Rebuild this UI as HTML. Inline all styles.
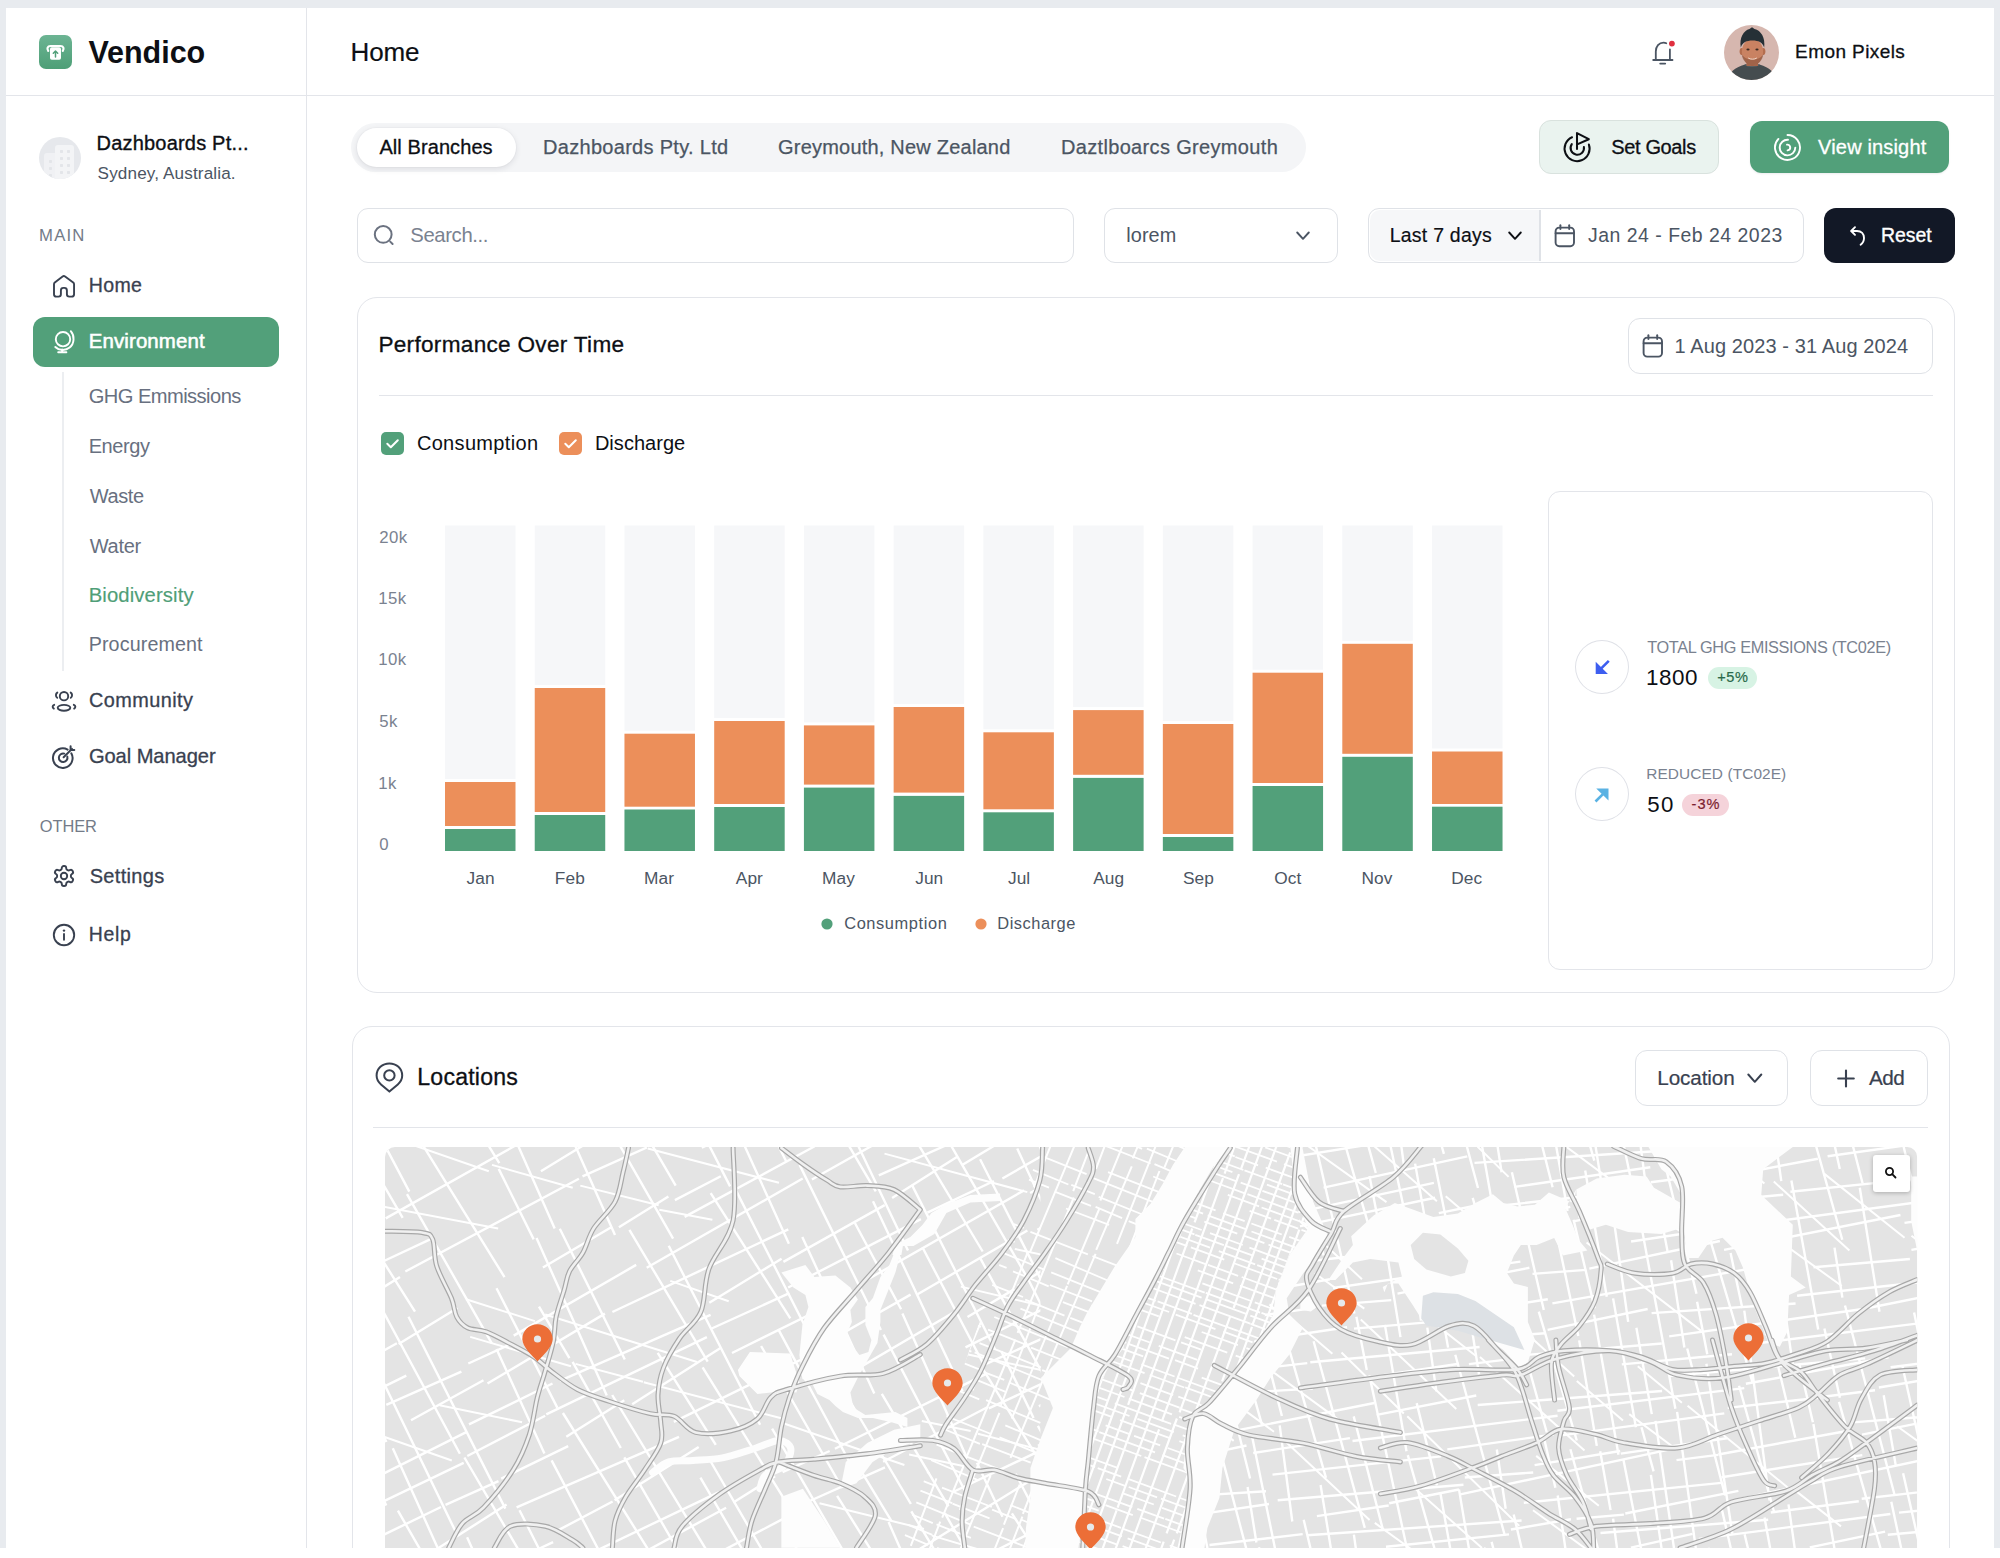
<!DOCTYPE html>
<html><head><meta charset="utf-8"><title>Vendico</title>
<style>
html,body{margin:0;padding:0;background:#ffffff;}
body{width:2000px;height:1558px;overflow:hidden;position:relative;font-family:"Liberation Sans",sans-serif;}
#app{position:absolute;left:0;top:0;width:2000px;height:1558px;overflow:hidden;}
.t{position:absolute;line-height:1;white-space:nowrap;}
svg{overflow:visible;}
</style></head><body><div id="app">
<div style="position:absolute;left:0.00px;top:0.00px;width:2000.00px;height:1548.00px;background:#e8ebef"></div>
<div style="position:absolute;left:6.00px;top:8.00px;width:1988.00px;height:1540.00px;background:#ffffff"></div>
<div style="position:absolute;left:305.50px;top:8.00px;width:1.50px;height:1540.00px;background:#e3e5ea"></div>
<div style="position:absolute;left:6.00px;top:94.50px;width:1988.00px;height:1.50px;background:#e3e5ea"></div>
<svg style="position:absolute;left:39.00px;top:35.00px;" width="33" height="34" viewBox="0 0 33 34"><defs><linearGradient id="lg" x1="0" y1="0" x2="0" y2="1"><stop offset="0" stop-color="#6cb493"/><stop offset="1" stop-color="#4e9f77"/></linearGradient></defs>
<rect x="0" y="0" width="33" height="34" rx="7" fill="url(#lg)"/>
<path d="M9.2 15.8 C7.6 13.6 8.6 11 11.4 11 H21.6 C24.4 11 25.4 13.6 23.8 15.8" fill="none" stroke="#fff" stroke-width="2.2" stroke-linecap="round"/>
<rect x="11" y="12.3" width="11" height="12.5" rx="1.8" fill="#fff"/>
<path d="M16.5 22 V16.2 M14.3 18.2 L16.5 16 L18.7 18.2" fill="none" stroke="#52a07a" stroke-width="1.5" stroke-linecap="round" stroke-linejoin="round"/></svg>
<svg style="position:absolute;left:38.80px;top:136.60px;" width="42" height="42" viewBox="0 0 42 42"><circle cx="21" cy="21" r="21" fill="#e6e8ec"/>
<clipPath id="cc"><circle cx="21" cy="21" r="21"/></clipPath>
<g clip-path="url(#cc)">
<rect x="5" y="16" width="14" height="30" rx="3" fill="#f0f1f4"/>
<rect x="16" y="8" width="19" height="38" rx="3" fill="#f3f4f6"/>
<g fill="#e3e5e9"><rect x="21" y="13" width="3" height="3" rx=".8"/><rect x="28" y="13" width="3" height="3" rx=".8"/><rect x="21" y="20" width="3" height="3" rx=".8"/><rect x="28" y="20" width="3" height="3" rx=".8"/><rect x="21" y="27" width="3" height="3" rx=".8"/><rect x="28" y="27" width="3" height="3" rx=".8"/><rect x="21" y="34" width="3" height="3" rx=".8"/><rect x="28" y="34" width="3" height="3" rx=".8"/><rect x="10" y="23" width="3" height="3" rx=".8"/><rect x="10" y="30" width="3" height="3" rx=".8"/><rect x="10" y="37" width="3" height="3" rx=".8"/></g></g></svg>
<svg style="position:absolute;left:52.00px;top:274.00px;" width="24" height="24" viewBox="0 0 24 24"><path d="M2 10.2 C2 9.4 2.3 8.9 2.8 8.5 L10.6 2.5 C11.3 2 12.4 2 13.1 2.5 L21.2 8.5 C21.8 9 22.06 9.4 22.06 10.2 V20.2 C22.06 21.6 21.2 22.6 19.6 22.6 H17.3 C15.9 22.6 14.9 21.7 14.9 20.3 V16.4 C14.9 14.9 13.9 13.9 12.4 13.9 H11.4 C9.9 13.9 8.9 14.9 8.9 16.4 V20.3 C8.9 21.7 7.9 22.6 6.5 22.6 H4.4 C2.9 22.6 2 21.6 2 20.2 Z" fill="none" stroke="#394150" stroke-width="1.9" stroke-linejoin="round"/></svg>
<div style="position:absolute;left:33.30px;top:316.80px;width:245.70px;height:49.80px;background:#52a07a;border-radius:12px"></div>
<svg style="position:absolute;left:53.00px;top:329.00px;" width="22" height="25" viewBox="0 0 22 25"><circle cx="10" cy="10.2" r="7.2" fill="none" stroke="#fff" stroke-width="1.9"/>
<path d="M17.8 2.2 C21.8 6.8 21.5 14.6 16.6 18.6 C12.4 22 6 21.7 2.3 18" fill="none" stroke="#fff" stroke-width="1.9" stroke-linecap="round"/>
<path d="M9.2 20.5 V23.2 M5.2 23.3 H13.4" fill="none" stroke="#fff" stroke-width="1.9" stroke-linecap="round"/></svg>
<div style="position:absolute;left:61.50px;top:372.00px;width:2.00px;height:298.50px;background:#eceef1"></div>
<svg style="position:absolute;left:51.00px;top:690.00px;" width="26" height="22" viewBox="0 0 26 22"><g fill="none" stroke="#394150" stroke-width="1.9" stroke-linecap="round">
<circle cx="13" cy="6.2" r="4.2"/>
<ellipse cx="13" cy="17.8" rx="6.3" ry="2.9"/>
<path d="M6.3 2.6 C4.6 3.6 4.4 6.6 6.2 7.7"/><path d="M19.7 2.6 C21.4 3.6 21.6 6.6 19.8 7.7"/>
<path d="M3.2 14.8 C1.3 15.6 1.1 17.4 2.8 18.6"/><path d="M22.8 14.8 C24.7 15.6 24.9 17.4 23.2 18.6"/></g></svg>
<svg style="position:absolute;left:52.00px;top:745.00px;" width="24" height="24" viewBox="0 0 24 24"><g fill="none" stroke="#394150" stroke-width="2" stroke-linecap="round">
<path d="M19.3 8.3 A9.8 9.8 0 1 1 15.6 4.6"/>
<path d="M15.3 11.6 A4.3 4.3 0 1 1 12.3 8.6"/>
<path d="M11.6 12.3 L20 3.9"/><path d="M18.6 1.2 V4.9 H22.3"/></g></svg>
<svg style="position:absolute;left:52.00px;top:864.00px;" width="24" height="24" viewBox="0 0 24 24"><g fill="none" stroke="#394150" stroke-width="1.9" stroke-linecap="round" stroke-linejoin="round">
<path d="M12.22 2h-.44a2 2 0 0 0-2 2v.18a2 2 0 0 1-1 1.73l-.43.25a2 2 0 0 1-2 0l-.15-.08a2 2 0 0 0-2.73.73l-.22.38a2 2 0 0 0 .73 2.73l.15.1a2 2 0 0 1 1 1.72v.51a2 2 0 0 1-1 1.74l-.15.09a2 2 0 0 0-.73 2.73l.22.38a2 2 0 0 0 2.73.73l.15-.08a2 2 0 0 1 2 0l.43.25a2 2 0 0 1 1 1.73V20a2 2 0 0 0 2 2h.44a2 2 0 0 0 2-2v-.18a2 2 0 0 1 1-1.73l.43-.25a2 2 0 0 1 2 0l.15.08a2 2 0 0 0 2.73-.73l.22-.39a2 2 0 0 0-.73-2.73l-.15-.08a2 2 0 0 1-1-1.74v-.5a2 2 0 0 1 1-1.74l.15-.09a2 2 0 0 0 .73-2.73l-.22-.38a2 2 0 0 0-2.73-.73l-.15.08a2 2 0 0 1-2 0l-.43-.25a2 2 0 0 1-1-1.73V4a2 2 0 0 0-2-2z"/>
<circle cx="12" cy="12" r="3.2"/></g></svg>
<svg style="position:absolute;left:52.00px;top:923.00px;" width="24" height="24" viewBox="0 0 24 24"><g fill="none" stroke="#394150" stroke-width="1.9" stroke-linecap="round">
<circle cx="12" cy="12" r="10.2"/><path d="M12 11 V16.8"/></g><circle cx="12" cy="7.6" r="1.2" fill="#394150"/></svg>
<svg style="position:absolute;left:1651.00px;top:40.00px;" width="26" height="26" viewBox="0 0 26 26"><g fill="none" stroke="#4b5563" stroke-width="1.8" stroke-linecap="round">
<path d="M2.2 20 H21.5"/><path d="M4.8 20 V11.5 C4.8 6.5 8 2.6 12.5 2.6 C13.6 2.6 14.5 2.8 15.3 3.2"/><path d="M18.9 9.5 V20"/><path d="M9.2 23.6 H14.2"/></g>
<circle cx="20.9" cy="3.6" r="2.9" fill="#e0303f"/></svg>
<svg style="position:absolute;left:1723.50px;top:24.50px;" width="55" height="55" viewBox="0 0 55 55"><clipPath id="av"><circle cx="27.5" cy="27.5" r="27.5"/></clipPath>
<g clip-path="url(#av)">
<rect width="55" height="55" fill="#d6b7af"/>
<path d="M4 55 C5.5 47 10 43 21 39.5 L35.5 39.5 C46 43 50.5 47 52 55 Z" fill="#454c4f"/>
<path d="M21 39.5 C24 42 32 42 35.5 39.5" fill="none" stroke="#5a6366" stroke-width="1.2"/>
<rect x="22.5" y="31" width="11.5" height="10" fill="#a7654a"/>
<ellipse cx="17.8" cy="26.5" rx="2.2" ry="3.4" fill="#b36d4e"/><ellipse cx="39.2" cy="26.5" rx="2.2" ry="3.4" fill="#b36d4e"/>
<ellipse cx="28.5" cy="26.8" rx="10.6" ry="13.2" fill="#c98262"/>
<path d="M17.6 29 C18.6 36 23 40.2 28.5 40.2 C34 40.2 38.4 36 39.4 29 C37 33 33.5 34.5 28.5 34.5 C23.5 34.5 20 33 17.6 29 Z" fill="#7d4a35" opacity=".55"/>
<path d="M16.8 22.5 C15.2 13 19.5 5.5 25.5 4 L28 2.2 L30.5 4 C37 5.5 41.5 12.5 40.2 22.5 C38.5 17.5 34.5 15.6 28.5 15.6 C22.5 15.6 18.5 17.5 16.8 22.5 Z" fill="#263036"/>
<ellipse cx="24" cy="24.5" rx="1.6" ry="1" fill="#3b2a22"/><ellipse cx="33" cy="24.5" rx="1.6" ry="1" fill="#3b2a22"/>
<path d="M24.5 33.2 C26.5 34.6 30.5 34.6 32.5 33.2" fill="none" stroke="#f0d6c8" stroke-width="1" stroke-linecap="round"/>
</g></svg>
<div style="position:absolute;left:351.00px;top:122.50px;width:955.00px;height:49.70px;background:#f4f5f7;border-radius:25px"></div>
<div style="position:absolute;left:356.60px;top:128.00px;width:159.40px;height:39.00px;background:#ffffff;border-radius:20px;box-shadow:0 2px 6px rgba(16,24,40,.10),0 0 0 1px rgba(16,24,40,.02)"></div>
<div style="position:absolute;left:1539.00px;top:120.10px;width:179.80px;height:53.90px;background:#eaf3ef;border:1.5px solid #d9e2de;border-radius:12px;box-sizing:border-box"></div>
<svg style="position:absolute;left:1562.00px;top:131.00px;" width="30" height="32" viewBox="0 0 30 32"><g fill="none" stroke="#0d0f14" stroke-width="2.05" stroke-linecap="round" stroke-linejoin="round">
<path d="M10.05 6.2 A12.5 12.5 0 1 0 26.9 13.5"/>
<path d="M9.8 13.2 A6.7 6.7 0 1 0 21.9 16.0"/>
<path d="M15 18 V2.1 L26.8 8.2 L15.2 13.4"/></g></svg>
<div style="position:absolute;left:1749.70px;top:121.20px;width:198.90px;height:52.20px;background:#52a07a;border-radius:12px;box-shadow:0 1px 2px rgba(16,24,40,.08)"></div>
<svg style="position:absolute;left:1773.00px;top:133.00px;" width="30" height="30" viewBox="0 0 30 30"><g fill="none" stroke="#fff" stroke-width="1.9" stroke-linecap="round">
<path d="M14.5 2.0 A12.5 12.5 0 1 1 5.4 5.9"/>
<path d="M15 6.8 A7.8 7.8 0 1 0 22.3 14.6"/>
<path d="M14 11.6 A2.9 2.9 0 1 1 14.6 17.4"/></g></svg>
<div style="position:absolute;left:357.20px;top:208.20px;width:717.10px;height:54.80px;background:#fff;border:1.5px solid #dfe2e7;border-radius:11px;box-sizing:border-box"></div>
<svg style="position:absolute;left:373.00px;top:224.00px;" width="24" height="24" viewBox="0 0 24 24"><g fill="none" stroke="#6b7280" stroke-width="2" stroke-linecap="round"><circle cx="10.2" cy="10.4" r="8.4"/><path d="M17.2 17.6 L19.6 20"/></g></svg>
<div style="position:absolute;left:1104.20px;top:208.20px;width:234.30px;height:54.80px;background:#fff;border:1.5px solid #dfe2e7;border-radius:11px;box-sizing:border-box"></div>
<svg style="position:absolute;left:1296.00px;top:231.00px;" width="14" height="10" viewBox="0 0 14 10"><path d="M1.2 1.5 L7 7.8 L12.8 1.5" fill="none" stroke="#4b5563" stroke-width="1.9" stroke-linecap="round" stroke-linejoin="round"/></svg>
<div style="position:absolute;left:1368.20px;top:208.20px;width:436.10px;height:54.80px;background:#fff;border:1.5px solid #dfe2e7;border-radius:11px;box-sizing:border-box;overflow:hidden"></div>
<div style="position:absolute;left:1369.70px;top:209.70px;width:169.80px;height:51.80px;background:#f6f7f9;border-radius:10px 0 0 10px"></div>
<div style="position:absolute;left:1539.00px;top:209.70px;width:1.50px;height:51.80px;background:#dfe2e7"></div>
<svg style="position:absolute;left:1508.00px;top:231.00px;" width="14" height="10" viewBox="0 0 14 10"><path d="M1.2 1.5 L7 7.8 L12.8 1.5" fill="none" stroke="#0d0f14" stroke-width="1.9" stroke-linecap="round" stroke-linejoin="round"/></svg>
<svg style="position:absolute;left:1554.00px;top:224.00px;" width="23" height="24" viewBox="0 0 23 24"><g fill="none" stroke="#4b5563" stroke-width="1.9" stroke-linecap="round"><rect x="1.6" y="3.6" width="18.4" height="18.6" rx="3.6"/><path d="M1.6 9.2 H20"/><path d="M6.4 1.2 V5"/><path d="M15.2 1.2 V5"/></g></svg>
<div style="position:absolute;left:1823.50px;top:208.20px;width:131.70px;height:55.10px;background:#121826;border-radius:12px"></div>
<svg style="position:absolute;left:1849.00px;top:225.00px;" width="18" height="22" viewBox="0 0 18 22"><g fill="none" stroke="#fff" stroke-width="1.9" stroke-linecap="round" stroke-linejoin="round"><path d="M6 2.2 L2.2 6 L6 9.8"/><path d="M2.6 6 H8 C12.4 6 15 9 15 13 C15 16.4 13.6 18.4 11.6 19.8"/></g></svg>
<div style="position:absolute;left:357.00px;top:297.00px;width:1598.20px;height:695.50px;background:#fff;border:1.5px solid #e3e5ea;border-radius:20px;box-sizing:border-box"></div>
<div style="position:absolute;left:1627.50px;top:318.00px;width:305.90px;height:56.40px;border:1.5px solid #dfe2e7;border-radius:12px;box-sizing:border-box"></div>
<svg style="position:absolute;left:1642.00px;top:334.00px;" width="23" height="25" viewBox="0 0 23 25"><g fill="none" stroke="#4b5563" stroke-width="1.9" stroke-linecap="round"><rect x="1.6" y="3.6" width="18.4" height="19" rx="3.6"/><path d="M1.6 9.2 H20"/><path d="M6.4 1.2 V5"/><path d="M15.2 1.2 V5"/></g></svg>
<div style="position:absolute;left:379.00px;top:394.70px;width:1554.00px;height:1.50px;background:#e3e5ea"></div>
<svg style="position:absolute;left:381.20px;top:432.10px;" width="23" height="23" viewBox="0 0 23 23"><rect width="23" height="23" rx="5" fill="#52a07a"/><path d="M6.3 11.8 L9.8 15.2 L16.8 8.2" fill="none" stroke="#fff" stroke-width="2" stroke-linecap="round" stroke-linejoin="round"/></svg>
<svg style="position:absolute;left:559.10px;top:432.10px;" width="23" height="23" viewBox="0 0 23 23"><rect width="23" height="23" rx="5" fill="#ec8f5a"/><path d="M6.3 11.8 L9.8 15.2 L16.8 8.2" fill="none" stroke="#fff" stroke-width="2" stroke-linecap="round" stroke-linejoin="round"/></svg>
<svg style="position:absolute;left:0.00px;top:0.00px;" width="2000" height="1000" viewBox="0 0 2000 1000"><rect x="445.00" y="525.5" width="70.5" height="253.50" fill="#f6f7f9"/><rect x="445.00" y="782.00" width="70.5" height="44.00" fill="#ec8f5a"/><rect x="445.00" y="829.00" width="70.5" height="22.00" fill="#52a07a"/><rect x="534.73" y="525.5" width="70.5" height="159.50" fill="#f6f7f9"/><rect x="534.73" y="688.00" width="70.5" height="124.00" fill="#ec8f5a"/><rect x="534.73" y="815.00" width="70.5" height="36.00" fill="#52a07a"/><rect x="624.46" y="525.5" width="70.5" height="205.20" fill="#f6f7f9"/><rect x="624.46" y="733.70" width="70.5" height="73.00" fill="#ec8f5a"/><rect x="624.46" y="809.50" width="70.5" height="41.50" fill="#52a07a"/><rect x="714.19" y="525.5" width="70.5" height="192.50" fill="#f6f7f9"/><rect x="714.19" y="721.00" width="70.5" height="83.00" fill="#ec8f5a"/><rect x="714.19" y="807.00" width="70.5" height="44.00" fill="#52a07a"/><rect x="803.92" y="525.5" width="70.5" height="196.90" fill="#f6f7f9"/><rect x="803.92" y="725.40" width="70.5" height="59.20" fill="#ec8f5a"/><rect x="803.92" y="787.60" width="70.5" height="63.40" fill="#52a07a"/><rect x="893.65" y="525.5" width="70.5" height="178.50" fill="#f6f7f9"/><rect x="893.65" y="707.00" width="70.5" height="85.60" fill="#ec8f5a"/><rect x="893.65" y="795.90" width="70.5" height="55.10" fill="#52a07a"/><rect x="983.38" y="525.5" width="70.5" height="203.80" fill="#f6f7f9"/><rect x="983.38" y="732.30" width="70.5" height="77.00" fill="#ec8f5a"/><rect x="983.38" y="812.30" width="70.5" height="38.70" fill="#52a07a"/><rect x="1073.11" y="525.5" width="70.5" height="181.60" fill="#f6f7f9"/><rect x="1073.11" y="710.10" width="70.5" height="64.70" fill="#ec8f5a"/><rect x="1073.11" y="777.90" width="70.5" height="73.10" fill="#52a07a"/><rect x="1162.84" y="525.5" width="70.5" height="195.50" fill="#f6f7f9"/><rect x="1162.84" y="724.00" width="70.5" height="110.00" fill="#ec8f5a"/><rect x="1162.84" y="837.00" width="70.5" height="14.00" fill="#52a07a"/><rect x="1252.57" y="525.5" width="70.5" height="144.20" fill="#f6f7f9"/><rect x="1252.57" y="672.70" width="70.5" height="110.30" fill="#ec8f5a"/><rect x="1252.57" y="786.00" width="70.5" height="65.00" fill="#52a07a"/><rect x="1342.30" y="525.5" width="70.5" height="115.30" fill="#f6f7f9"/><rect x="1342.30" y="643.80" width="70.5" height="110.00" fill="#ec8f5a"/><rect x="1342.30" y="756.80" width="70.5" height="94.20" fill="#52a07a"/><rect x="1432.03" y="525.5" width="70.5" height="223.00" fill="#f6f7f9"/><rect x="1432.03" y="751.50" width="70.5" height="52.50" fill="#ec8f5a"/><rect x="1432.03" y="806.70" width="70.5" height="44.30" fill="#52a07a"/></svg>
<svg style="position:absolute;left:821.00px;top:918.00px;" width="12" height="12" viewBox="0 0 12 12"><circle cx="6" cy="6" r="5.6" fill="#52a07a"/></svg>
<svg style="position:absolute;left:975.00px;top:918.00px;" width="12" height="12" viewBox="0 0 12 12"><circle cx="6" cy="6" r="5.6" fill="#ec8f5a"/></svg>
<div style="position:absolute;left:1547.50px;top:490.90px;width:385.40px;height:479.50px;border:1.5px solid #e3e5ea;border-radius:12px;box-sizing:border-box"></div>
<div style="position:absolute;left:1574.90px;top:639.80px;width:54.40px;height:54.60px;border:1.5px solid #dfe1e7;border-radius:50%;box-sizing:border-box"></div>
<svg style="position:absolute;left:1595.20px;top:659.00px;" width="16" height="16" viewBox="0 0 16 16"><path d="M13.8 1.8 L5 10.6 M2 6 V13.8 H9.8 Z" fill="#3d5ef0" stroke="#3d5ef0" stroke-width="2.6" stroke-linejoin="miter"/></svg>
<div style="position:absolute;left:1707.90px;top:666.90px;width:49.00px;height:22.60px;background:#d7f3e4;border-radius:12px"></div>
<div style="position:absolute;left:1574.90px;top:766.60px;width:54.40px;height:54.80px;border:1.5px solid #dfe1e7;border-radius:50%;box-sizing:border-box"></div>
<svg style="position:absolute;left:1592.70px;top:787.50px;" width="16" height="16" viewBox="0 0 16 16"><path d="M2.5 13.5 L11.2 4.8 M14.2 9.5 V1.8 H6.4 Z" fill="#5ab2e3" stroke="#5ab2e3" stroke-width="2.6" stroke-linejoin="miter"/></svg>
<div style="position:absolute;left:1682.20px;top:794.10px;width:47.00px;height:22.40px;background:#f5d3da;border-radius:12px"></div>
<div style="position:absolute;left:351.90px;top:1026.30px;width:1597.90px;height:573.70px;background:#fff;border:1.5px solid #e3e5ea;border-radius:20px;box-sizing:border-box"></div>
<svg style="position:absolute;left:375.00px;top:1062.00px;" width="30" height="32" viewBox="0 0 30 32"><g fill="none" stroke="#394150" stroke-width="2"><path d="M14.4 29.6 L6 22.4 C3 19.8 1.6 16.6 1.6 13.6 C1.6 6.5 7.4 1.4 14.4 1.4 C21.4 1.4 27.2 6.5 27.2 13.6 C27.2 16.6 25.8 19.8 22.8 22.4 Z" stroke-linejoin="round"/><circle cx="14.4" cy="13.4" r="5.2"/></g></svg>
<div style="position:absolute;left:1634.50px;top:1050.00px;width:153.80px;height:56.20px;border:1.5px solid #dfe2e7;border-radius:12px;box-sizing:border-box"></div>
<svg style="position:absolute;left:1747.00px;top:1073.00px;" width="16" height="11" viewBox="0 0 16 11"><path d="M1.3 1.5 L7.8 8.8 L14.3 1.5" fill="none" stroke="#394150" stroke-width="2" stroke-linecap="round" stroke-linejoin="round"/></svg>
<div style="position:absolute;left:1810.00px;top:1050.00px;width:117.70px;height:56.20px;border:1.5px solid #dfe2e7;border-radius:12px;box-sizing:border-box"></div>
<svg style="position:absolute;left:1837.00px;top:1069.00px;" width="18" height="19" viewBox="0 0 18 19"><path d="M9 1.5 V17.5 M1.2 9.5 H16.8" fill="none" stroke="#394150" stroke-width="2.1" stroke-linecap="round"/></svg>
<div style="position:absolute;left:373.00px;top:1126.50px;width:1554.70px;height:1.50px;background:#e3e5ea"></div>
<svg style="position:absolute;left:384.6px;top:1147.0px" width="1532.2" height="401.0" viewBox="0 0 1532.2 401.0"><defs><clipPath id="mapclip"><path d="M10 0 H1522.2 A10 10 0 0 1 1532.2 10 V401.0 H0 V10 A10 10 0 0 1 10 0 Z"/></clipPath></defs><g clip-path="url(#mapclip)"><rect x="0" y="0" width="1532.2" height="401.0" fill="#e4e4e4"/><defs><clipPath id="manh"><polygon points="844.9,0.0 828.4,19.5 813.4,45.0 799.9,72.0 795.4,90.0 783.4,105.0 775.9,127.5 765.4,142.5 753.4,165.0 744.4,180.0 738.4,201.0 723.4,220.5 712.9,240.0 706.9,261.0 703.9,291.0 700.9,321.0 699.4,351.0 696.4,381.0 693.4,401.0 792.4,401.0 796.9,381.0 804.4,351.0 807.4,336.0 798.4,321.0 801.4,291.0 810.4,270.0 828.4,253.5 843.4,231.0 872.2,196.9 888.3,167.4 890.9,143.2 904.4,108.3 923.1,81.5 911.4,53.0 905.4,0.0"/></clipPath><clipPath id="njw"><rect x="0" y="0" width="655.4" height="401.0"/></clipPath><clipPath id="mid"><polygon points="655.4,0.0 805.4,0.0 645.4,401.0 515.4,401.0"/></clipPath><clipPath id="east"><polygon points="905.4,0.0 1532.2,0.0 1532.2,401.0 792.4,401.0 865.4,203.0 915.4,83.0"/></clipPath></defs><g stroke="#ffffff" stroke-width="2.4" fill="none" opacity="1" clip-path="url(#njw)"><path d="M1189.5 -632.5L1224.6 -565.5M1227.0 -562.6L1255.7 -510.0M1249.8 -506.2L1284.0 -450.2M1283.4 -447.4L1359.2 -310.2M1363.5 -301.5L1393.6 -251.9M1392.0 -249.7L1439.0 -158.6M1444.0 -154.1L1504.2 -57.8M1496.4 -51.3L1572.1 96.1M1573.5 100.5L1624.6 187.7M1623.4 194.8L1693.0 315.6M1169.9 -622.0L1226.9 -515.2M1223.9 -513.2L1292.1 -364.1M1302.2 -366.0L1382.2 -218.0M1384.5 -209.7L1496.4 -30.7M1485.5 -17.0L1565.5 121.7M1139.5 -605.9L1169.5 -540.3M1170.2 -539.8L1223.8 -425.2M1237.3 -422.5L1277.7 -333.8M1322.5 -258.4L1367.6 -180.9M1364.7 -179.3L1413.9 -68.1M1424.1 -65.8L1497.4 51.2M1492.1 64.2L1580.6 223.9M1584.9 226.1L1620.7 283.6M1617.7 287.6L1659.6 353.2M1252.9 -351.9L1298.7 -252.7M1309.0 -247.0L1376.9 -136.7M1370.7 -129.6L1421.7 -49.1M1482.2 94.0L1505.0 143.7M1516.8 145.3L1557.5 230.6M1563.2 233.6L1640.9 398.9M1088.3 -578.6L1183.3 -417.3M1230.8 -311.3L1270.3 -221.9M1276.8 -220.3L1379.1 -37.7M1381.4 -36.4L1421.5 42.6M1424.1 51.4L1506.5 226.1M1514.1 223.0L1584.6 369.3M1067.9 -567.8L1142.1 -398.7M1156.7 -402.0L1217.8 -300.5M1212.3 -296.2L1251.6 -231.4M1254.9 -223.8L1355.1 -31.7M1355.1 -30.2L1379.5 16.2M1382.9 25.0L1446.0 131.6M1443.8 135.6L1494.1 221.9M1494.3 226.5L1528.7 290.1M1527.0 297.6L1622.6 477.5M1047.2 -556.8L1075.9 -511.8M1072.1 -500.7L1108.7 -430.4M1110.4 -427.6L1182.9 -309.8M1178.0 -300.8L1221.2 -219.3M1226.2 -215.6L1307.5 -55.9M1312.7 -52.9L1376.4 68.5M1376.3 74.0L1461.8 266.4M1476.4 261.6L1551.9 385.7M1023.7 -544.3L1108.7 -404.0M1183.9 -242.1L1287.7 -54.4M1292.5 -51.4L1397.1 140.2M1396.3 146.5L1443.5 243.3M1449.0 240.5L1520.2 366.0M1101.4 -338.9L1131.0 -290.4M1130.1 -285.2L1236.5 -109.6M1231.9 -96.7L1310.1 28.2M1366.0 155.4L1432.1 299.0M1438.6 296.3L1529.5 470.8M978.1 -520.1L1015.9 -458.6M1012.1 -454.8L1041.3 -404.0M1044.2 -396.9L1092.9 -310.4M1135.7 -219.8L1194.3 -88.2M1203.5 -91.9L1283.4 79.9M1290.7 80.5L1357.6 199.1M1362.6 205.9L1446.1 354.1M948.0 -504.1L1048.2 -333.1M1099.7 -207.0L1143.6 -123.0M1149.7 -123.5L1265.3 57.5M1253.1 68.4L1314.4 183.8M1386.9 325.4L1425.7 406.2M1433.0 409.8L1517.8 559.2M930.2 -494.6L1003.3 -337.4M1010.2 -331.0L1091.7 -196.9M1086.3 -188.1L1143.7 -64.9M1153.5 -63.5L1256.0 110.6M1252.6 112.7L1283.2 178.7M1285.2 184.0L1359.0 322.2M1360.1 321.7L1446.3 486.1M911.7 -484.8L999.8 -333.1M991.0 -320.2L1030.9 -245.3M1034.1 -242.6L1093.7 -125.4M1131.1 -63.7L1226.1 85.6M1213.3 93.1L1255.9 178.8M1261.2 179.3L1333.3 297.0M1326.8 310.6L1371.9 381.6M1371.7 386.9L1466.8 550.8M879.9 -467.8L919.9 -391.9M922.1 -382.3L952.1 -316.1M959.6 -312.1L1007.5 -236.4M1002.8 -233.9L1072.3 -119.5M1069.3 -114.0L1114.3 -20.5M1116.9 -12.3L1146.0 51.9M1149.3 53.5L1201.0 154.2M1210.9 153.1L1275.4 257.8M1271.0 269.6L1320.5 354.9M1314.7 363.8L1348.8 438.8M1357.2 443.5L1430.0 583.0M857.5 -456.0L935.9 -300.0M945.2 -301.7L972.8 -250.3M968.2 -244.0L1018.9 -156.9M1022.6 -151.5L1074.9 -64.8M1070.2 -60.4L1113.6 13.1M1117.0 21.6L1229.5 210.2M1267.0 316.5L1307.8 401.2M1316.7 401.2L1375.9 506.0M943.0 -252.7L1021.8 -116.8M1012.6 -109.1L1062.2 -1.9M1103.3 55.1L1212.5 226.0M1198.2 238.1L1281.8 428.7M1332.3 488.2L1406.8 636.6M883.9 -298.3L928.4 -220.6M926.2 -217.9L974.8 -138.7M972.3 -136.5L1043.0 -16.6M1039.9 -8.1L1060.9 39.4M1068.9 42.5L1170.0 215.5M1168.9 227.0L1248.6 376.8M1247.2 385.2L1296.9 496.3M1307.0 493.5L1331.8 543.5M786.8 -418.3L857.6 -257.0M870.6 -260.4L952.5 -89.5M961.1 -90.7L1068.8 91.9M1062.8 99.8L1141.8 242.6M1236.5 439.4L1261.5 494.3M1272.3 496.9L1385.1 685.6M757.1 -402.6L784.2 -354.2M824.8 -279.7L869.1 -178.9M872.4 -178.3L925.4 -81.2M923.9 -79.8L990.8 32.4M1090.0 217.7L1190.7 377.2M1173.6 386.9L1258.9 575.4M736.6 -391.7L830.0 -200.3M882.2 -106.2L992.7 68.1M979.9 77.6L1043.4 191.9M1042.6 195.2L1105.9 300.9M1105.3 310.4L1185.0 466.8M1189.2 468.3L1244.3 557.1M746.5 -292.3L806.2 -161.0M867.5 -73.7L935.8 42.6M930.6 50.1L995.9 191.4M1009.9 191.5L1042.4 254.2M1045.1 257.0L1133.8 408.5M1127.7 413.5L1224.6 588.8M680.6 -361.9L716.3 -279.7M721.7 -281.4L775.4 -161.9M830.4 -75.4L935.4 112.8M936.6 121.9L988.0 237.7M1000.4 232.3L1074.3 364.4M1069.4 368.6L1107.4 444.3M1109.6 445.5L1136.3 490.1M1136.4 493.6L1181.3 565.5M1175.9 569.5L1237.7 669.4M655.4 -348.5L703.9 -238.7M712.3 -239.6L773.4 -106.5M783.4 -100.5L840.6 -4.2M835.3 -1.3L933.4 176.7M994.6 299.7L1070.4 422.2M1070.4 429.3L1126.9 527.3M627.4 -333.6L714.6 -137.2M795.5 -9.1L844.6 96.1M852.2 93.9L929.4 260.8M942.3 263.3L980.2 335.0M979.9 339.5L1009.2 404.3M1018.2 399.9L1079.6 532.2M1083.0 531.7L1158.5 663.7M599.2 -318.6L657.7 -211.1M658.3 -211.1L725.3 -71.0M829.2 115.0L864.2 170.6M861.1 179.5L891.0 236.0M890.1 237.1L960.8 353.2M958.8 364.0L1071.3 552.6M1065.7 566.7L1134.7 681.3M565.9 -300.9L597.6 -248.5M603.1 -241.3L648.5 -155.9M650.3 -146.4L692.6 -72.1M735.4 7.8L806.4 157.5M812.3 155.7L870.7 283.5M882.5 283.5L942.0 420.2M954.1 420.9L1001.0 528.5M1010.5 529.9L1067.8 625.5M1067.6 634.0L1093.8 686.0M545.2 -289.9L632.4 -151.8M618.8 -142.9L682.8 -1.7M695.5 -7.0L743.3 68.0M737.4 75.2L768.5 135.7M770.3 141.4L814.5 213.9M855.7 307.2L932.3 446.0M932.9 448.7L958.4 494.0M959.1 500.9L1022.4 609.3M1024.5 618.4L1053.6 668.0M509.7 -271.0L536.8 -226.4M537.3 -224.4L602.5 -85.4M614.3 -89.7L656.8 3.9M745.8 169.4L829.9 324.8M834.7 324.8L868.2 383.9M865.4 393.9L949.9 539.4M948.2 546.5L1010.6 654.0M1007.0 663.2L1122.2 844.4M490.3 -260.7L577.5 -107.2M576.2 -96.5L623.9 -2.0M632.2 1.4L700.9 149.6M710.2 152.5L800.2 326.4M808.2 325.7L843.6 404.3M926.4 557.6L951.6 608.8M958.6 613.5L984.6 668.9M595.1 12.2L679.9 180.0M722.6 245.0L768.1 316.9M764.0 322.0L812.5 407.3M812.8 418.0L885.4 533.0M880.3 540.4L935.0 652.0M942.9 653.9L979.8 732.6M440.5 -234.2L486.0 -162.9M488.0 -158.4L550.8 -40.5M547.0 -34.5L642.7 131.4M643.7 133.2L719.8 284.1M718.6 285.6L801.6 449.8M805.9 451.6L868.3 552.3M870.0 561.4L892.4 611.0M898.1 613.7L952.4 714.4M416.4 -221.4L504.4 -66.6M498.0 -61.4L597.7 104.5M595.1 110.9L681.3 270.6M683.2 279.6L723.1 360.8M767.6 435.9L819.7 527.7M818.5 530.5L905.7 728.5M915.4 724.5L965.7 828.4M526.8 37.6L610.0 202.3M616.3 204.2L648.6 271.0M652.9 278.9L712.1 386.9M711.6 389.8L787.8 544.9M799.0 548.6L881.1 692.5M877.3 701.6L906.6 761.5M373.3 -198.5L432.1 -91.6M433.5 -84.7L523.0 103.5M537.4 100.2L599.1 218.3M597.3 221.1L693.5 377.1M685.9 387.7L749.8 514.5M753.4 522.0L824.2 641.4M827.5 647.4L874.4 754.7M359.4 -191.1L405.9 -106.4M405.0 -101.1L490.8 44.3M488.0 54.2L577.6 244.2M630.6 326.7L717.0 493.2M718.6 495.0L809.3 688.9M823.4 690.7L891.1 801.4M334.3 -177.7L432.4 -9.5M469.9 76.0L516.1 162.2M517.4 166.4L582.1 311.3M591.9 315.8L617.5 369.7M626.9 366.4L729.9 528.3M720.6 544.0L804.5 682.3M797.1 688.9L872.2 855.1M311.6 -165.7L401.4 14.8M414.6 17.9L495.9 183.0M498.6 187.6L579.9 343.8M632.2 426.3L660.4 479.2M663.6 483.1L723.4 611.9M726.5 615.5L797.4 742.8M285.6 -151.9L308.0 -101.6M314.3 -101.2L403.9 96.7M417.3 90.0L489.3 246.6M496.8 246.8L563.5 359.3M559.8 366.2L620.5 471.9M624.7 479.0L680.3 583.8M684.6 592.6L764.5 732.8M758.5 739.3L838.5 866.3M321.9 -6.1L345.1 39.4M351.1 43.6L434.5 207.8M440.0 212.0L525.9 357.0M526.3 364.4L592.1 474.2M582.6 479.7L671.2 638.3M674.5 645.8L765.9 805.3M231.3 -123.0L296.9 -18.3M325.7 46.2L405.3 171.3M393.2 182.1L464.4 314.8M471.2 315.9L506.2 373.6M503.6 375.1L524.1 421.8M616.5 597.9L705.0 746.0M696.7 750.9L776.1 914.4M204.7 -108.9L290.7 38.6M376.1 199.0L455.8 338.5M452.1 348.8L493.7 415.3M489.2 421.8L566.0 548.3M562.6 559.1L616.4 657.1M615.8 661.8L700.3 824.9M704.0 826.2L729.5 881.0M180.8 -96.1L288.1 91.6M283.7 98.8L375.1 277.8M387.1 281.6L481.3 443.7M470.7 454.1L550.7 581.1M547.1 592.4L641.4 755.2M637.0 767.2L728.9 930.4M154.2 -82.0L230.0 87.9M244.4 82.8L322.7 214.7M317.6 220.3L411.3 371.7M403.9 384.8L478.9 550.2M493.1 552.7L564.3 671.9M560.7 676.0L597.9 747.7M272.7 205.8L330.8 297.9M324.5 312.5L423.7 483.1M419.3 494.3L471.3 605.3M566.3 765.5L625.1 898.2M108.3 -57.6L169.7 81.6M174.8 81.7L239.8 212.5M315.4 330.6L425.6 519.6M414.1 529.7L522.6 702.5M512.2 716.9L603.1 861.8M595.2 867.7L684.0 1022.4M78.8 -41.9L114.3 16.2M113.7 21.9L148.7 92.4M151.5 91.1L221.8 248.4M227.2 248.0L335.8 426.7M327.6 436.1L357.7 495.5M363.6 497.5L412.2 593.6M533.3 811.3L581.2 893.8M154.0 159.7L184.4 211.1M187.6 214.9L235.8 301.0M239.3 310.3L348.9 500.8M345.2 512.9L369.2 567.9M374.4 565.3L475.5 723.6M464.1 739.0L521.5 866.5M29.3 -15.6L119.5 130.1M111.5 141.2L172.4 260.9M177.9 266.0L277.7 425.8M270.6 437.9L321.4 546.1M325.1 547.9L429.0 711.4M421.7 725.6L489.0 838.2M0.6 -0.3L24.3 44.6M22.0 47.2L106.8 196.3M111.5 201.9L159.4 306.5M166.6 313.4L228.9 432.2M232.1 430.7L344.8 613.7M424.3 789.3L501.2 939.7M505.7 943.8L563.6 1070.3M-17.8 9.5L17.7 70.9M257.1 525.1L345.3 715.3M355.3 715.9L413.1 818.0M410.1 822.4L455.7 919.3M471.1 921.4L559.2 1088.1M-49.9 26.5L-4.8 107.2M-3.1 112.3L30.0 164.6M23.5 169.7L120.3 361.6M134.5 363.2L224.6 542.2M226.2 544.3L293.9 695.6M307.5 695.4L345.1 780.3M354.6 778.5L401.1 869.2M404.5 878.2L468.3 999.8M-67.4 35.9L-31.3 98.6M-35.4 103.5L-5.9 161.4M-1.3 165.4L74.9 306.7M79.4 310.5L157.4 443.6M150.9 449.6L224.7 565.6M217.2 573.7L309.7 747.1M309.2 750.5L422.0 937.3M416.8 940.8L513.0 1114.1M-99.6 52.9L-69.7 114.7M-64.6 113.8L-16.0 209.5M-10.7 216.3L71.8 387.1M82.1 390.3L135.8 509.8M238.8 689.4L307.5 822.3M313.5 823.9L402.7 984.0M403.9 988.5L465.9 1100.3M-121.8 64.8L-72.6 157.2M-65.6 158.5L-28.3 230.8M-25.9 236.1L1.4 295.1M7.8 301.3L95.4 495.9M107.3 489.7L131.1 542.8M138.1 547.8L204.2 673.0M207.2 679.2L264.2 780.5M269.7 788.3L350.1 932.4M343.5 940.4L402.3 1073.9M-142.1 75.5L-69.4 213.8M-69.4 223.0L-35.9 294.7M-27.8 296.2L1.3 358.6M12.9 363.7L113.2 538.0M109.4 545.8L170.7 667.0M172.8 672.8L231.6 766.1M226.0 773.7L325.3 929.3M314.0 938.7L412.9 1104.9"/></g><g stroke="#ffffff" stroke-width="2.4" fill="none" opacity="1" clip-path="url(#njw)"><path d="M-160.4 99.4L-32.9 33.6M79.6 -31.7L191.6 -84.3M188.2 -92.0L226.0 -110.5M227.6 -115.0L288.8 -142.7M293.0 -147.2L374.4 -198.2M385.7 -196.0L504.5 -256.3M507.1 -256.8L548.0 -280.1M555.6 -284.9L712.1 -353.8M709.8 -368.7L882.4 -452.9M881.6 -459.2L962.5 -497.5M961.6 -504.5L1023.8 -531.8M1142.9 -602.0L1229.8 -655.1M89.6 -2.0L136.5 -30.6M139.4 -34.6L290.9 -119.8M299.4 -119.2L391.4 -159.9M392.1 -169.2L460.8 -202.8M462.8 -204.6L621.7 -297.6M629.6 -295.5L695.0 -330.2M700.7 -331.0L775.2 -368.2M778.2 -374.9L855.2 -421.1M865.0 -420.8L946.1 -462.9M948.7 -465.7L1053.0 -525.3M1057.5 -521.6L1110.2 -550.7M1120.8 -550.0L1261.1 -635.6M-138.3 140.9L-8.0 69.2M0.7 71.4L133.1 -3.0M206.4 -45.2L339.9 -129.4M348.1 -117.5L408.9 -155.8M546.6 -224.2L661.8 -287.0M759.7 -339.4L909.0 -408.3M910.3 -418.9L953.3 -439.3M954.1 -442.4L1121.3 -524.7M1122.8 -530.3L1258.8 -614.5M-122.5 170.6L48.9 90.7M155.9 24.2L248.7 -32.4M258.0 -31.2L298.7 -54.8M303.3 -57.6L471.9 -156.1M474.8 -151.9L559.3 -200.2M562.1 -198.0L694.3 -275.4M702.2 -271.5L798.7 -326.8M808.2 -328.0L865.0 -354.6M1018.6 -436.0L1141.9 -493.3M1137.4 -504.2L1210.8 -550.1M1217.0 -544.3L1278.1 -581.8M-20.5 152.0L15.0 129.9M20.3 124.5L193.9 31.8M197.5 29.3L261.9 0.5M267.8 -2.2L389.1 -73.0M453.9 -105.4L609.6 -183.8M789.0 -282.3L937.5 -371.1M949.8 -365.7L1029.4 -410.2M1112.4 -450.8L1240.7 -508.7M1242.7 -525.1L1346.1 -584.3M316.8 0.7L353.4 -16.6M355.0 -22.7L429.8 -63.7M434.5 -62.1L535.1 -107.6M532.2 -116.5L608.3 -159.4M610.7 -159.1L659.9 -180.7M667.9 -185.0L827.1 -265.8M831.3 -275.1L874.4 -299.8M880.3 -300.8L1047.3 -396.6M1213.2 -482.9L1346.2 -549.3M-81.4 247.8L11.9 196.2M13.6 197.1L72.4 161.0M157.9 120.5L227.1 79.7M233.9 80.3L283.4 49.6M289.9 53.1L335.8 29.2M733.9 -189.6L851.5 -245.6M848.8 -251.8L918.1 -287.3M921.0 -286.5L1001.3 -322.9M1006.0 -327.2L1169.6 -402.1M1165.5 -413.4L1308.3 -484.1M-68.4 272.4L21.3 228.7M299.6 69.9L429.7 -0.7M555.3 -66.1L606.4 -92.8M608.6 -94.9L745.2 -157.3M748.8 -162.1L876.0 -243.0M884.2 -234.8L942.3 -262.2M940.5 -266.5L1001.0 -300.0M1004.7 -303.2L1064.2 -330.4M1067.1 -338.0L1114.7 -359.6M1163.6 -387.8L1263.8 -444.1M1263.7 -444.3L1380.4 -507.3M-60.0 288.2L-5.2 256.4M1.3 257.9L76.4 224.7M83.3 216.5L124.7 197.5M128.7 188.6L251.2 117.9M261.7 120.8L417.7 31.5M426.9 32.5L564.9 -45.1M666.6 -96.3L746.7 -141.1M748.5 -142.9L814.1 -184.8M826.3 -180.4L923.9 -236.4M926.1 -235.8L971.7 -258.0M978.0 -257.9L1146.9 -344.8M1146.7 -347.0L1206.5 -380.6M1210.6 -389.3L1306.3 -440.5M26.0 273.3L98.5 233.2M102.5 236.5L219.9 166.6M227.4 165.0L403.3 82.3M493.8 28.4L608.9 -23.2M606.8 -31.6L687.7 -76.2M779.8 -126.4L821.5 -148.7M825.6 -153.7L899.9 -186.9M1082.8 -289.7L1216.4 -370.5M-31.6 341.6L81.3 285.1M84.0 277.4L167.5 236.5M174.7 233.8L325.6 167.8M324.3 155.8L396.6 111.7M398.4 114.9L499.7 58.1M507.1 50.9L571.9 9.9M577.6 17.7L620.2 -7.9M716.7 -59.9L850.7 -144.6M864.4 -135.4L934.8 -170.9M936.4 -175.2L1089.9 -244.6M1229.4 -333.4L1322.0 -381.4M1327.2 -380.3L1488.5 -475.4M-20.0 363.3L78.7 315.9M82.3 309.0L160.2 268.7M161.3 267.4L321.9 190.2M326.7 181.5L404.4 146.2M403.2 140.5L535.9 72.1M542.4 65.7L608.9 34.0M617.4 31.5L677.4 -2.9M675.0 -8.0L727.8 -31.8M1006.2 -176.2L1178.0 -251.3M1170.9 -265.5L1236.6 -307.0M1241.6 -308.4L1306.9 -349.8M1318.4 -349.1L1398.4 -391.8M-5.9 390.0L56.0 360.0M60.5 357.8L113.5 334.1M116.2 331.7L183.2 299.2M181.3 289.7L239.3 253.2M247.2 257.3L336.3 200.6M347.0 206.0L476.6 142.0M482.6 132.5L639.0 43.4M645.1 46.0L816.5 -48.4M1001.7 -141.6L1166.1 -233.2M1238.7 -272.7L1387.2 -345.8M13.6 426.5L121.6 357.5M131.6 360.3L294.0 289.8M288.8 274.8L415.2 213.0M417.6 209.0L525.6 147.6M532.6 147.3L642.4 83.5M652.3 82.8L754.3 28.1M756.4 27.5L812.0 -1.7M815.2 -7.0L969.5 -79.1M972.2 -83.9L1101.9 -143.4M1098.1 -151.5L1184.4 -204.3M1261.2 -241.6L1404.8 -330.5M31.2 459.7L168.1 395.1M171.0 384.4L227.6 354.5M229.6 353.3L313.7 299.9M436.4 242.9L570.2 164.5M582.5 170.0L629.5 142.1M632.7 138.9L774.2 49.9M783.5 58.0L870.0 10.4M876.8 9.3L1027.7 -68.5M1036.0 -72.5L1097.8 -106.9M1192.0 -157.4L1284.0 -198.9M1287.5 -208.4L1326.3 -229.4M1335.5 -230.0L1428.9 -280.9M47.3 490.0L197.9 406.9M199.6 409.3L334.0 345.1M580.5 200.3L718.4 132.3M722.8 131.6L844.3 75.9M838.8 62.5L924.8 25.1M924.7 19.1L999.3 -15.2M1001.3 -23.5L1107.0 -84.0M1117.2 -83.2L1262.0 -169.3M1267.0 -161.0L1378.1 -220.3M1382.4 -224.7L1472.5 -265.2M57.1 508.3L137.2 466.8M139.2 463.6L214.5 426.7M222.7 425.0L341.1 360.7M348.3 355.6L390.1 329.3M397.6 325.2L444.7 304.0M449.9 301.8L600.6 227.1M599.0 217.8L666.4 187.5M724.3 155.8L890.5 59.0M1175.4 -84.8L1251.0 -127.8M1256.2 -130.0L1314.9 -157.3M1314.8 -160.6L1457.2 -250.5M72.2 536.7L138.8 500.8M145.5 497.9L244.3 451.9M245.8 452.1L411.9 364.6M412.4 359.5L500.0 320.3M498.1 314.8L602.3 260.3M603.8 261.3L660.5 235.1M832.3 140.3L1006.5 53.1M1002.1 43.7L1086.2 3.1M1085.4 -2.2L1232.7 -78.8M1234.8 -76.9L1347.7 -137.8M84.9 560.7L203.5 501.6M203.2 497.5L264.2 469.2M653.9 259.4L711.7 227.1M807.6 177.6L879.1 145.2M878.0 142.8L1047.6 55.1M1050.3 45.4L1116.6 6.9M1118.8 10.3L1212.7 -32.4M1211.5 -36.3L1331.4 -93.2M1334.9 -101.9L1380.8 -121.9M1380.1 -124.0L1501.2 -192.3M272.2 493.9L363.7 440.4M567.0 345.5L651.1 305.6M653.0 298.9L760.8 247.0M763.9 239.4L828.9 208.5M825.6 200.4L967.7 137.9M1118.4 50.0L1290.8 -30.3M1293.5 -42.4L1415.1 -100.1M1418.8 -111.7L1499.3 -147.4M120.6 627.8L263.8 543.6M267.6 546.5L371.1 499.9M374.8 492.2L513.8 426.4M515.0 414.2L677.5 313.5M689.9 322.9L847.7 249.6M848.2 233.5L882.9 212.1M892.9 213.7L986.1 161.0M989.9 163.6L1073.7 115.4M1075.3 116.6L1149.9 79.3M1154.5 70.8L1208.3 45.7M1209.7 44.4L1281.7 2.0M1291.4 1.3L1412.9 -63.4M1420.6 -69.3L1530.5 -120.5M177.4 629.1L275.7 573.8M278.8 577.6L391.0 515.1M398.7 509.8L562.0 427.1M566.4 426.0L739.0 338.8M741.3 335.2L850.4 277.2M1032.5 176.2L1167.2 111.4M1170.7 99.0L1306.9 21.6M1310.6 25.6L1481.8 -62.4M1487.9 -63.2L1530.3 -84.5M151.7 686.3L231.2 651.5M233.7 642.3L388.6 574.1M388.2 558.2L521.9 489.1M528.3 483.5L675.9 405.5M683.6 401.2L740.9 368.5M745.3 375.6L825.7 340.2M821.4 328.1L899.2 283.9M905.1 285.4L955.2 257.6M1046.2 212.6L1147.4 164.4M1147.2 157.4L1204.3 127.7M1209.6 123.3L1356.2 57.4M1355.5 44.7L1433.3 7.6M1432.3 4.8L1590.1 -65.4M165.6 712.5L211.5 689.8M366.2 604.8L494.6 541.5M499.8 534.7L589.6 484.0M592.2 480.6L746.1 410.1M748.8 403.8L854.3 339.5M859.2 341.5L905.2 320.2M910.0 315.1L1024.7 248.7M1032.8 246.0L1181.7 172.0M1189.0 169.7L1297.2 117.5M1299.4 104.1L1428.6 40.7M1432.4 32.8L1555.3 -30.0M176.1 732.3L242.5 699.3M252.4 697.2L395.7 608.0M492.9 563.5L547.5 533.9M711.5 452.5L761.8 424.1M888.7 359.9L953.7 325.8M1202.7 189.2L1340.5 116.3M1347.8 117.4L1416.9 84.9M1420.1 70.6L1501.8 26.8M1505.6 31.0L1604.6 -22.6M188.7 756.0L282.8 710.4M390.4 652.1L454.6 620.5M463.5 616.5L607.1 546.6M654.0 512.6L808.1 423.0M815.8 429.8L873.2 396.9M874.2 397.9L935.9 368.9M989.8 337.3L1140.0 269.7M1138.7 250.3L1237.9 189.3M1357.8 139.1L1397.5 121.4M1403.5 111.8L1503.1 65.0M300.1 733.5L451.4 664.8M453.4 657.2L500.2 635.9M628.9 559.2L793.4 474.8M795.1 475.2L859.4 442.8M968.0 381.6L1011.6 360.0M1018.3 357.5L1087.4 320.4M1086.4 315.6L1246.5 221.7M1261.6 229.0L1331.1 196.6M1472.9 109.9L1639.5 5.2M226.2 826.4L293.3 792.6M663.8 586.3L723.6 558.0M903.8 462.3L1018.8 403.9M1171.2 319.1L1278.9 250.5M1291.7 258.8L1330.3 238.0M1461.5 166.2L1511.7 137.9M1514.3 140.8L1648.1 58.3M384.4 765.9L551.7 661.8M560.9 676.7L693.5 605.0M699.1 606.8L823.1 546.7M827.0 537.0L984.7 437.3M997.9 447.6L1149.1 357.0M1159.3 356.1L1255.3 301.0M1347.7 262.1L1525.5 176.9M1526.5 161.1L1698.5 60.6M250.1 871.4L317.1 833.4M324.4 830.8L469.6 754.5M469.5 752.1L619.7 668.1M803.7 577.2L929.9 507.7M935.7 499.3L1065.3 422.6M1237.1 339.9L1372.8 266.0M1381.7 268.2L1511.8 192.2M1514.8 192.5L1553.3 170.1M1564.3 170.3L1691.5 105.1M394.4 824.6L497.4 764.9M568.4 729.8L663.3 683.7M663.8 682.6L824.2 581.3M838.1 589.7L906.3 555.8M951.7 527.3L1010.1 498.2M1075.1 461.5L1162.5 410.0M1163.5 410.6L1202.4 393.5M1349.9 315.0L1418.5 272.9M1422.5 275.1L1573.6 202.8M277.0 922.0L398.1 845.9M405.6 845.9L558.3 762.8M560.4 764.2L657.4 704.8M666.2 711.1L724.1 675.6M728.5 682.5L815.3 637.3M814.1 633.6L882.9 602.0M1052.7 503.2L1165.6 451.3M1166.9 449.3L1213.8 424.0M1218.1 416.5L1262.8 390.0M1467.2 281.4L1594.4 213.0M1603.1 213.5L1715.3 156.2M288.3 943.3L441.7 872.6M602.8 770.1L719.7 701.0M825.2 659.6L965.1 582.4M969.6 576.4L1006.7 556.6M1014.1 559.7L1185.1 472.9M1347.1 382.3L1445.4 326.4M1447.0 320.7L1529.9 274.4M301.1 967.2L397.5 908.6M400.6 909.2L451.3 878.4M457.2 878.3L572.0 810.8M577.4 817.5L699.4 762.1M700.8 750.7L863.5 678.4M860.6 664.2L901.5 638.3M908.6 645.6L984.3 604.1M988.6 601.1L1144.0 518.9M1144.7 517.5L1216.2 483.8M1392.8 381.9L1557.5 300.7M1558.4 297.0L1628.2 262.4M1627.6 259.7L1769.7 189.1M311.7 987.1L415.4 935.1M413.9 928.4L583.6 835.8M595.9 838.3L662.6 808.1M661.4 800.8L803.7 732.7M1013.5 610.8L1184.9 526.7M1184.5 516.8L1245.5 486.5M1248.9 489.3L1338.9 447.5M1342.8 441.2L1464.6 368.7M1474.0 370.1L1552.5 330.0M1557.0 320.4L1709.4 223.5M399.9 975.0L458.3 940.6M462.1 942.0L593.4 861.5M782.9 775.1L891.8 716.7M939.9 694.1L987.1 666.7M994.3 663.3L1128.9 582.9M1257.5 525.4L1387.6 448.9M1551.8 369.7L1615.7 339.5M1615.3 333.8L1662.3 305.2"/></g><g stroke="#ffffff" stroke-width="2.0" fill="none" opacity="1" clip-path="url(#njw)"><path d="M98.3 -366.7L187.7 -349.8M262.9 -320.4L383.1 -294.2M501.8 -257.3L566.1 -237.7M891.6 -152.2L947.8 -137.5M950.8 -140.8L1003.6 -127.9M1011.5 -129.7L1113.3 -109.8M1284.5 -53.3L1406.0 -21.8M1415.5 -21.5L1562.6 16.9M549.8 -173.4L608.2 -161.0M862.5 -94.1L1001.7 -45.7M1453.8 60.3L1545.5 90.5M1549.4 88.3L1608.8 101.1M65.8 -245.4L202.9 -202.4M209.3 -203.0L350.1 -156.8M513.5 -120.5L578.1 -101.7M721.2 -60.9L851.6 -20.2M862.0 -27.5L929.0 -5.6M1038.9 25.7L1116.2 51.6M1119.4 45.2L1265.8 88.3M1267.9 82.2L1408.4 116.0M1415.7 118.8L1545.9 150.2M240.7 -119.8L326.6 -99.5M727.4 4.8L862.6 39.1M989.3 77.6L1071.3 94.4M1079.7 98.6L1121.9 111.5M1125.3 115.6L1174.0 131.1M1178.1 129.5L1243.3 143.9M1410.3 184.3L1532.2 212.8M157.7 -87.0L314.3 -53.4M320.8 -42.4L423.9 -17.2M499.5 6.6L642.3 45.1M1498.6 271.2L1619.6 308.1M262.8 1.5L394.0 35.8M629.8 101.9L717.2 120.3M870.8 168.7L958.7 199.1M966.0 190.0L1028.5 203.2M1027.5 209.7L1148.2 239.0M1151.6 242.8L1232.2 259.6M2.9 -10.7L103.8 24.3M107.0 17.9L187.7 40.8M195.3 38.6L273.7 58.2M274.3 62.8L327.4 72.8M575.8 139.6L723.2 174.9M726.5 177.3L836.4 204.3M838.7 210.8L920.1 229.5M1290.2 336.9L1412.0 370.6M1422.8 366.0L1472.4 376.7M-15.3 57.1L113.2 81.6M285.3 133.9L343.7 154.3M583.2 207.5L739.3 240.9M739.0 247.8L818.2 269.5M1098.4 354.8L1246.0 395.8M1313.8 410.9L1352.9 421.5M1491.8 453.9L1594.4 489.6M81.0 152.2L149.9 174.1M160.2 167.5L312.0 215.0M536.8 273.9L585.7 284.1M592.9 286.8L698.3 313.8M708.5 311.8L757.7 323.1M903.3 370.8L972.9 384.7M1185.5 443.6L1333.0 485.0M1476.0 522.0L1562.6 539.7M85.2 189.9L185.9 219.3M190.5 216.9L258.0 234.8M258.8 235.2L396.3 271.3M399.7 276.8L519.4 318.0M524.1 307.4L579.3 319.3M669.6 348.0L761.5 379.3M763.1 382.0L905.1 426.7M914.5 416.0L1016.7 436.5M1022.8 448.8L1156.4 478.5M1158.8 487.4L1294.7 516.1M54.6 258.2L137.1 275.3M434.5 356.3L539.0 381.9M547.0 388.6L658.3 421.7M783.2 442.0L851.6 454.7M855.3 462.0L916.9 482.1M921.6 490.6L1038.6 525.6M1297.2 579.1L1405.6 602.7M-71.1 265.3L66.8 313.5M432.0 408.5L544.9 448.5M856.3 519.8L913.1 531.7M918.3 531.6L1023.4 560.5M1366.6 656.9L1431.1 673.7M1437.9 667.9L1586.2 696.9M-84.2 314.2L-34.9 325.9M495.4 468.5L541.6 477.7M548.5 480.6L669.4 516.5M1303.7 693.2L1349.6 708.9M-99.5 371.3L-5.2 403.7M101.4 430.1L154.6 445.1M163.9 448.1L208.5 457.2M211.1 459.8L256.3 470.8M264.1 468.5L343.6 496.4M395.9 502.3L532.6 547.8M642.1 570.3L779.7 617.0M787.7 617.4L925.8 657.8M1145.6 704.0L1244.3 726.7M1351.5 759.9L1411.0 778.6M1418.6 777.5L1545.4 820.9"/></g><g stroke="#ffffff" stroke-width="2.0" fill="none" opacity="1" clip-path="url(#mid)"><path d="M-134.4 346.7L-101.4 264.9M-99.4 257.8L-75.4 196.8M-73.8 193.5L-26.2 72.0M-21.2 65.5L24.1 -44.0M23.1 -47.4L41.7 -90.9M44.3 -95.5L88.2 -207.7M90.5 -210.3L110.3 -259.5M111.7 -263.0L139.9 -329.6M141.5 -338.2L194.5 -472.2M198.8 -480.9L223.0 -538.0M-121.8 351.8L-70.1 219.3M-30.1 125.8L3.8 39.4M3.6 39.2L35.8 -41.5M40.2 -47.9L69.2 -122.4M69.6 -122.5L113.5 -235.2M118.6 -242.3L174.9 -380.4M175.8 -383.5L192.6 -424.6M193.7 -429.6L214.0 -480.4M-109.0 357.0L-56.1 224.3M-55.9 224.0L-3.7 98.9M58.4 -56.2L84.5 -118.3M84.4 -124.2L116.0 -204.7M119.6 -211.4L154.3 -297.5M171.4 -337.3L202.3 -415.7M205.0 -422.2L243.2 -516.7M-94.7 362.7L-41.8 229.5M-40.9 226.3L0.0 120.1M39.5 27.7L79.7 -68.1M79.7 -71.7L113.1 -155.4M114.2 -156.7L158.6 -267.6M160.6 -269.3L210.4 -394.6M214.0 -401.0L230.6 -441.2M231.4 -448.2L267.6 -541.0M-79.5 368.9L-52.6 303.1M-51.5 301.7L-15.0 207.4M32.2 94.9L78.9 -17.1M80.2 -22.8L105.3 -84.5M108.3 -91.5L140.6 -168.7M140.3 -175.8L160.9 -224.4M165.2 -233.2L211.4 -351.9M257.5 -462.3L292.4 -548.3M-67.5 373.7L-13.1 236.3M-11.7 236.1L5.9 190.7M9.0 188.9L37.6 121.2M39.1 111.1L75.3 25.6M76.6 17.4L126.5 -100.3M126.6 -106.2L170.0 -211.1M171.0 -215.7L223.6 -339.3M222.4 -342.8L271.8 -462.4M273.7 -465.9L298.4 -528.1M-51.4 380.2L-34.6 340.4M-33.9 336.9L-9.1 276.6M-7.6 272.8L30.9 177.3M32.5 172.5L82.1 47.6M85.8 40.3L104.9 -7.3M106.0 -10.9L145.0 -113.2M150.2 -119.7L176.9 -185.0M178.5 -191.1L199.8 -241.8M202.3 -249.3L248.6 -361.5M-0.7 305.4L40.4 204.1M41.1 199.6L80.3 107.2M80.5 105.1L97.3 63.8M98.3 61.8L147.0 -62.7M150.1 -67.7L192.3 -177.6M196.7 -182.8L243.9 -296.3M242.3 -298.1L293.6 -429.0M-21.3 392.4L7.9 322.2M9.2 314.9L28.9 265.0M31.5 264.9L76.5 149.7M77.9 149.8L126.3 28.3M127.3 25.3L145.4 -19.9M147.1 -23.9L195.0 -147.2M198.5 -150.2L253.9 -286.3M255.1 -290.8L297.4 -391.2M297.0 -392.2L327.0 -471.0M329.9 -476.6L371.8 -584.6M-4.1 399.3L44.3 281.5M45.5 274.9L61.6 235.4M62.6 232.2L84.0 181.1M84.2 177.9L124.6 80.4M184.3 -68.3L215.9 -146.4M217.2 -150.3L238.7 -200.7M240.4 -204.1L274.3 -289.9M277.0 -295.8L328.2 -426.0M330.0 -426.4L346.4 -468.4M347.2 -472.8L396.6 -594.8M14.5 406.8L69.3 269.7M69.4 269.4L104.7 183.0M106.7 176.2L124.2 131.9M127.2 125.4L143.0 86.2M143.1 86.0L164.0 31.7M207.2 -71.9L242.1 -154.9M294.1 -283.7L326.2 -366.8M327.4 -366.9L372.6 -481.6M26.6 411.7L60.5 325.7M108.2 207.1L145.5 114.9M147.9 110.4L197.1 -6.0M197.4 -8.8L259.0 -154.0M255.9 -158.0L310.1 -284.7M309.7 -291.8L363.0 -418.3M362.0 -420.6L388.5 -486.5M83.3 300.9L126.1 191.0M131.6 182.9L164.8 102.5M167.3 95.5L211.6 -13.9M212.7 -15.5L273.1 -157.1M272.0 -162.5L325.8 -292.5M327.3 -302.0L381.3 -431.3M382.5 -435.9L412.6 -507.3M54.1 422.9L76.1 366.6M78.3 363.8L97.3 315.1M100.3 307.2L129.4 233.2M131.7 229.9L146.5 191.1M185.2 95.4L209.5 32.5M213.6 26.5L253.8 -75.7M259.5 -83.8L290.1 -162.8M294.3 -170.3L310.5 -209.6M311.8 -215.0L362.1 -343.0M364.8 -346.2L389.1 -404.3M391.2 -410.2L433.4 -513.9M105.8 349.0L153.3 233.6M155.7 224.5L207.0 101.4M207.5 98.2L226.9 48.7M285.9 -95.0L324.8 -186.2M323.2 -191.7L376.2 -316.1M374.2 -318.8L392.6 -364.3M395.7 -367.5L455.2 -510.1M84.9 435.3L114.0 364.5M116.6 360.1L145.3 286.7M162.6 244.8L198.1 161.3M198.4 152.4L239.3 49.9M286.4 -63.2L317.0 -142.6M320.4 -149.1L371.9 -275.0M374.5 -283.4L436.1 -429.3M437.8 -435.8L466.3 -503.2M101.1 441.9L133.5 362.8M134.0 359.4L175.0 262.5M237.6 105.2L277.9 6.9M278.7 2.0L324.1 -104.8M321.1 -106.2L351.3 -178.6M350.9 -179.1L394.5 -288.5M396.6 -290.2L442.4 -406.0M446.1 -410.8L502.5 -554.7M113.9 447.0L144.6 371.5M205.3 220.5L243.7 129.1M243.8 124.8L282.7 26.5M285.2 25.8L306.3 -26.1M305.6 -27.7L358.2 -153.3M360.9 -161.1L385.0 -222.5M384.3 -222.8L439.7 -355.8M442.8 -362.9L485.6 -470.8M133.4 454.9L163.5 383.3M164.3 377.6L190.7 309.4M195.2 302.0L251.1 166.3M249.9 164.5L297.9 40.0M301.9 38.6L349.9 -85.0M350.7 -85.8L380.1 -162.3M384.1 -168.8L402.7 -216.2M406.3 -221.9L458.1 -357.2M462.4 -359.2L488.9 -422.9M149.3 461.3L169.5 409.9M172.7 403.2L198.2 342.7M200.9 336.9L239.1 246.9M238.0 241.6L277.5 141.1M278.6 140.4L315.9 47.4M321.1 38.8L359.2 -51.2M359.0 -55.4L380.4 -105.8M381.2 -112.7L409.8 -184.0M412.9 -187.8L468.8 -326.5M472.0 -335.6L494.0 -387.8M166.8 468.4L199.4 390.0M201.5 385.8L235.7 303.2M234.5 301.8L292.9 155.7M296.1 150.7L350.3 14.3M351.4 13.6L369.4 -31.2M372.8 -40.4L405.3 -124.0M409.9 -132.2L450.5 -235.5M453.7 -237.6L491.1 -329.5M490.5 -332.0L508.3 -374.8M511.4 -383.2L537.1 -446.6M178.5 473.1L196.2 428.6M198.7 419.7L250.8 291.5M280.9 219.1L297.1 178.1M298.3 173.8L324.5 111.1M326.6 107.0L374.2 -9.5M375.1 -16.2L409.2 -96.4M410.0 -103.3L448.3 -199.9M505.5 -336.3L558.5 -470.5M194.5 479.6L223.6 409.6M225.1 404.0L279.2 277.2M333.1 136.3L364.6 55.6M368.8 48.8L406.7 -50.2M410.5 -57.0L434.7 -118.6M438.6 -124.2L489.1 -245.8M490.7 -252.4L515.5 -312.2M514.8 -314.6L543.3 -386.4M547.7 -392.6L587.1 -494.5M206.5 484.4L225.4 436.4M229.5 428.6L287.8 287.5M289.2 282.0L314.4 216.1M315.9 213.1L346.5 140.8M344.6 139.8L399.3 10.6M424.5 -56.7L445.1 -107.0M447.5 -110.9L476.9 -181.6M477.1 -185.2L533.3 -324.5M534.7 -327.5L554.9 -379.8M218.7 489.4L257.7 392.7M260.4 386.6L285.1 328.5M354.3 152.3L377.4 95.9M381.6 88.3L402.2 37.1M406.1 28.6L435.8 -46.3M439.2 -55.3L496.6 -190.6M495.0 -192.5L548.7 -323.8M235.6 496.2L265.6 424.1M265.8 423.7L322.5 282.7M324.3 274.6L352.8 204.0M353.9 203.6L410.0 71.9M470.9 -88.2L520.6 -205.5M520.7 -210.1L560.5 -314.2M254.4 503.8L304.5 385.1M406.9 126.1L425.2 83.0M478.1 -50.0L515.3 -142.0M518.8 -149.2L539.2 -201.1M540.8 -203.0L577.9 -290.7M577.8 -296.3L614.0 -391.1M267.3 509.0L288.7 458.5M291.0 454.2L346.9 319.9M346.3 316.4L394.5 198.3M397.4 191.2L420.7 135.7M422.3 125.8L443.1 75.7M446.2 69.0L490.6 -40.1M493.9 -48.7L538.0 -158.0M583.1 -269.7L616.6 -353.9M619.2 -357.0L652.0 -442.1M285.2 516.2L317.5 435.0M319.5 433.2L334.8 394.3M368.5 308.2L422.1 178.4M424.0 170.6L461.2 81.7M519.5 -64.6L576.7 -212.2M630.8 -337.6L677.6 -447.9M295.8 520.5L339.0 418.7M340.2 411.2L360.8 360.7M361.5 357.5L397.0 271.8M397.8 268.5L455.8 126.6M456.2 125.5L489.1 42.6M488.9 42.1L509.1 -8.9M512.0 -14.5L567.9 -151.6M568.5 -154.3L618.3 -278.6M621.8 -287.0L643.6 -342.7M646.0 -345.3L678.6 -426.4M314.3 528.0L368.5 389.9M372.6 380.9L410.3 285.1M412.3 284.4L466.8 148.7M468.4 143.6L493.1 83.7M494.9 78.6L509.3 41.0M511.1 38.9L535.2 -21.9M536.2 -24.2L565.1 -93.3M567.8 -100.8L612.4 -216.2M614.1 -216.0L637.2 -271.1M639.5 -276.5L674.6 -361.0M325.0 532.3L381.9 385.1M385.5 379.5L415.3 302.3M417.9 301.2L470.0 174.8M500.6 95.1L517.0 52.9M518.8 49.0L576.3 -91.4M579.4 -97.2L615.9 -191.7M617.2 -193.0L643.2 -257.0M645.0 -264.1L702.0 -399.9M338.1 537.6L358.7 484.3M359.3 481.4L413.6 350.0M416.6 342.6L449.3 259.8M449.4 258.4L471.6 202.9M475.2 198.4L513.3 99.2M516.4 96.9L574.9 -43.4M573.9 -49.6L623.0 -174.8M625.2 -175.0L679.7 -309.3M680.6 -310.1L729.1 -425.0M349.0 542.0L397.5 419.9M399.6 419.1L451.2 289.1M453.3 286.5L490.8 192.1M493.7 185.8L527.1 103.9M528.3 100.5L555.1 32.7M554.5 31.6L579.0 -26.9M580.9 -31.9L621.0 -130.5M678.7 -271.8L724.8 -383.4M360.6 546.7L375.5 508.2M377.6 503.3L429.2 381.3M429.5 373.4L463.9 292.6M466.2 285.1L511.7 172.3M514.7 164.9L545.8 87.2M548.6 82.3L597.3 -45.4M602.9 -52.7L648.4 -169.9M650.4 -172.8L699.8 -288.4M375.4 552.7L403.7 479.3M408.3 471.4L460.0 340.6M464.2 335.8L495.4 260.4M517.5 203.8L538.9 153.0M540.0 143.1L564.4 81.1M566.4 81.3L605.3 -14.4M607.4 -20.1L636.4 -90.3M636.4 -95.4L672.1 -184.1M676.1 -189.2L700.3 -246.6M701.4 -255.0L739.2 -346.0M386.6 557.2L402.0 519.5M403.4 518.8L455.4 387.5M456.8 384.8L480.5 328.4M480.7 327.8L521.8 231.0M519.6 229.0L552.8 151.0M551.8 147.9L568.1 108.0M570.6 105.1L613.1 4.4M664.9 -131.4L722.8 -273.3M722.7 -275.9L771.5 -391.0M434.4 487.4L495.9 340.0M497.5 330.2L554.2 190.1M558.8 181.4L606.2 62.8M608.8 57.9L659.4 -74.7M707.4 -188.6L742.4 -274.4M415.7 569.0L443.2 503.9M442.4 501.6L457.4 463.9M457.6 463.8L493.6 379.4M491.9 376.4L509.8 330.8M512.3 327.0L571.5 180.2M572.2 178.7L606.3 97.3M606.2 95.3L626.6 47.2M626.0 45.9L672.8 -75.0M677.0 -79.9L727.0 -200.9M728.4 -207.0L762.5 -291.1M765.5 -299.6L823.5 -448.0M432.9 575.9L458.8 511.1M462.3 502.5L495.9 416.4M558.2 264.0L596.1 174.5M649.0 40.3L692.1 -67.4M695.5 -76.3L725.8 -153.5M729.1 -160.6L744.8 -197.9M746.6 -202.6L763.8 -243.5M763.5 -244.8L813.1 -368.8M451.6 583.5L509.1 444.6M508.4 442.8L525.1 401.9M525.8 398.8L551.5 331.4M587.5 243.4L642.6 105.7M644.9 105.4L693.9 -11.9M710.7 -60.3L764.8 -188.9M797.7 -272.7L831.6 -355.9M467.7 590.0L525.8 450.3M526.9 448.3L555.2 374.6M557.2 370.7L578.4 319.5M579.7 314.5L630.4 192.5M632.6 185.8L688.8 50.5M688.2 44.1L720.2 -38.9M746.2 -98.6L795.1 -216.7M797.8 -224.5L840.2 -330.6M481.0 595.3L533.1 461.3M574.8 363.0L614.4 265.9M615.5 259.5L654.7 156.5M711.0 21.8L734.8 -40.5M738.3 -44.5L753.1 -82.4M753.5 -82.3L779.9 -148.4M813.6 -232.8L860.5 -352.5M495.4 601.1L518.7 540.8M562.4 433.9L605.7 328.2M626.8 271.6L682.1 138.8M682.7 137.3L714.2 62.0M715.3 53.5L747.7 -26.0M749.6 -32.4L775.9 -95.2M776.8 -96.8L798.2 -148.9M799.1 -154.2L852.6 -286.2M529.3 548.9L582.6 412.6M625.5 310.8L667.0 211.2M667.3 208.7L710.6 106.8M711.2 102.8L746.8 19.3M747.7 11.3L788.7 -85.0M790.4 -94.7L839.3 -216.5M840.7 -218.4L890.8 -342.5M524.8 613.0L573.8 495.9M573.2 492.8L618.1 381.2M618.9 377.6L634.7 337.5M672.7 244.1L707.8 157.7M732.0 96.8L789.5 -48.6M792.7 -55.4L828.5 -147.9M831.3 -148.9L864.3 -226.5M865.0 -231.0L906.3 -331.9M537.3 618.1L554.0 577.0M554.3 576.5L601.8 456.1M606.7 448.1L637.4 369.7M637.9 366.9L673.7 275.2M678.9 268.8L697.7 223.5M699.5 215.7L720.4 165.8M721.3 161.1L774.5 24.0M779.4 20.7L796.7 -21.9M799.1 -30.3L820.0 -84.5M821.9 -86.5L879.0 -225.9M880.7 -234.5L940.7 -376.9M549.9 623.2L571.0 570.8M572.7 566.4L593.6 513.5M598.0 506.3L652.7 363.7M656.2 360.9L692.8 274.4M692.2 272.6L729.7 179.1M730.1 178.2L764.5 89.9M827.5 -64.9L847.6 -112.2M846.9 -114.9L899.1 -250.5M902.2 -250.1L935.4 -330.1M606.7 526.9L642.4 440.5M663.2 387.9L708.4 280.6M706.4 278.4L759.4 154.2M758.6 147.4L779.1 97.3M835.0 -41.1L895.9 -185.6M894.7 -187.3L945.9 -312.3M580.5 635.6L621.5 529.5M668.7 417.4L694.6 352.2M698.6 343.5L741.2 242.3M741.9 238.6L776.9 153.4M776.2 151.1L818.2 49.6M817.6 49.2L856.6 -43.9M856.5 -49.0L899.9 -156.1M902.3 -160.9L926.9 -222.9M929.1 -224.8L980.3 -355.5M596.8 642.1L612.7 602.2M614.0 598.0L661.0 485.4M733.6 302.9L776.0 202.8M775.9 197.7L815.8 103.7M815.5 98.3L830.8 61.1M833.6 56.7L868.4 -33.9M869.8 -33.7L916.3 -148.7M916.4 -149.1L950.1 -237.1M615.3 649.6L656.5 552.6M656.9 543.4L700.7 434.5M785.4 228.2L826.9 129.7M825.3 128.0L864.7 26.2M868.5 22.7L886.2 -19.2M888.2 -26.7L907.4 -71.9M907.8 -77.0L927.3 -122.8M928.7 -128.1L985.1 -265.2M629.8 655.5L656.5 587.4M656.6 585.8L692.5 494.5M697.4 486.0L723.3 418.7M725.7 414.5L780.9 281.1M783.0 275.3L818.5 184.0M822.9 178.3L843.8 126.9M844.7 121.8L891.9 5.8M925.8 -80.1L983.6 -217.4M983.5 -220.5L1035.9 -346.6M647.9 662.8L686.3 564.9M722.8 475.8L770.3 363.2M768.8 361.8L799.9 284.9M800.5 282.4L826.6 220.9M829.2 212.2L885.5 66.3M890.0 64.2L908.8 19.0M908.0 14.8L936.3 -52.7M939.7 -60.5L957.6 -105.4M959.8 -109.1L1003.8 -213.2M658.0 666.8L705.9 542.3M707.9 542.3L765.9 406.3M810.2 290.7L860.6 172.3M861.4 163.7L912.2 38.7M914.9 31.0L964.5 -96.5M967.6 -98.9L996.6 -172.4M668.6 671.1L728.3 529.2M728.4 523.4L773.7 417.0M772.2 413.4L809.4 317.3M812.5 313.1L865.6 188.0M921.7 44.6L943.8 -8.5M945.1 -12.7L978.2 -96.6M1007.2 -168.8L1038.5 -244.8M687.1 678.6L715.6 608.2M717.3 605.8L761.5 493.8M764.0 489.9L803.8 390.8M824.5 338.6L848.7 281.4M848.2 278.7L874.7 214.5M877.4 209.4L903.5 144.2M904.9 138.2L948.8 27.8M952.9 19.3L985.6 -59.0M988.7 -67.0L1019.7 -145.9M1021.3 -147.6L1043.0 -198.6M704.7 685.7L760.0 542.7M766.9 534.9L820.8 400.5M822.1 396.4L842.8 342.8M846.9 335.1L888.1 234.2M889.5 231.7L942.1 102.3M942.8 99.1L961.9 53.4M962.6 51.4L985.3 -6.5M1046.0 -156.3L1102.9 -298.2M716.1 690.3L769.6 554.5M771.5 553.3L829.0 412.5M856.6 340.7L877.8 285.1M881.3 284.7L926.4 175.2M926.7 169.7L942.8 131.4M941.9 130.6L994.0 0.4M995.6 0.2L1035.4 -102.0M1039.8 -107.7L1081.7 -213.8M730.8 696.2L786.5 559.9M787.3 557.4L842.2 418.9M845.9 411.6L891.1 298.9M892.3 295.1L945.0 170.2M942.4 168.9L958.5 130.5M958.4 129.5L1014.4 -5.2M1016.3 -11.7L1051.3 -93.9M1051.4 -99.3L1091.4 -196.1M746.9 702.8L802.8 562.0M804.6 561.7L824.4 514.6M823.7 512.3L874.1 392.6M873.5 390.4L903.4 315.9M904.1 312.9L956.6 178.8M960.4 175.1L1007.1 59.4M1006.9 59.2L1067.8 -83.9M1065.2 -87.2L1083.7 -131.1M1085.7 -135.9L1102.0 -177.9M765.4 710.3L799.1 623.2M848.5 504.6L878.6 433.6M879.9 427.6L903.8 370.4M902.9 369.4L937.9 286.4M938.4 280.5L987.4 160.9M988.9 157.5L1024.0 67.1M1028.7 60.0L1052.0 5.4M859.1 511.8L891.1 436.8M893.6 428.7L916.4 372.6M917.0 367.2L938.9 310.9M942.6 305.7L973.1 232.9M972.6 231.8L1024.3 99.9M1028.2 93.9L1060.2 11.2M1113.2 -117.9L1152.6 -215.7M793.7 721.7L812.1 676.5M814.1 674.5L838.0 614.4M841.0 606.1L886.7 486.2M937.3 366.2L976.1 274.7M978.0 268.7L995.9 223.4M997.4 216.4L1052.9 84.3M1052.7 81.6L1105.8 -43.9M1107.0 -52.1L1168.1 -199.3M807.5 727.3L844.1 634.3M849.0 627.2L902.1 496.0M950.3 375.2L1006.5 229.2M1064.5 91.5L1117.5 -33.5M1117.3 -37.6L1153.2 -124.6M1152.1 -126.2L1167.8 -163.6M827.4 735.3L872.0 622.4M875.0 617.9L893.5 572.4M926.2 487.5L973.2 367.6M993.5 320.9L1015.1 269.1M1019.1 262.2L1048.6 190.1M1049.7 186.4L1107.4 40.2M1110.0 36.7L1139.7 -35.3M1139.1 -37.5L1200.7 -183.9M843.0 741.6L891.1 616.2M894.6 612.4L921.5 545.4M923.5 540.4L964.0 437.4M966.8 436.6L986.1 386.7M988.3 383.7L1046.6 247.1M1044.2 242.8L1061.3 198.0M1062.4 195.7L1097.3 105.5M1119.2 54.7L1171.6 -70.7M1174.7 -78.6L1217.1 -188.8M862.0 749.3L885.9 687.1M933.3 571.3L977.3 458.9M982.1 451.4L1023.5 343.4M1028.7 336.0L1078.7 212.1M1081.4 205.1L1119.2 108.2M1120.7 108.8L1158.0 13.3M1160.6 8.9L1201.8 -93.1M1204.9 -99.3L1260.5 -234.0M874.2 754.2L902.7 682.0M907.4 673.1L957.4 555.2M955.4 552.7L1000.3 446.2M1034.3 358.0L1068.7 275.0M1070.7 266.2L1126.2 126.8M1127.0 127.1L1150.9 67.6M1151.6 66.5L1196.7 -42.9M1198.1 -45.9L1214.7 -85.4M1214.1 -88.8L1242.2 -154.8M889.4 760.3L907.5 717.8M953.1 604.5L1000.1 483.6M1001.3 481.5L1017.5 439.8M1019.1 438.6L1078.0 300.2M1077.0 298.0L1097.4 245.0M1100.4 237.7L1138.0 139.3M1141.0 139.4L1187.1 21.3M1189.4 19.3L1213.1 -41.7M1215.8 -48.4L1232.9 -89.7M1234.8 -96.7L1281.2 -209.6M899.7 764.5L952.5 634.2M955.1 628.2L1013.2 488.7M1013.4 483.5L1029.6 442.7M1031.9 439.4L1057.8 378.1M1112.8 237.2L1159.7 116.7M1164.8 108.4L1205.6 2.8M1209.9 -1.6L1243.9 -83.3M914.8 770.6L957.5 667.4M960.1 660.6L1006.2 549.8M1066.3 398.0L1081.2 359.1M1082.6 355.2L1127.7 243.8M1132.2 237.0L1152.1 186.8M1152.2 184.6L1174.2 131.5M1177.3 122.7L1218.0 23.7M968.9 680.1L1014.2 567.7M1077.9 415.0L1096.7 369.8M1096.7 368.6L1136.7 271.8M1137.3 265.5L1163.5 199.7M1166.8 195.0L1185.7 147.8M1187.3 143.0L1235.6 21.8M1237.5 14.9L1260.7 -44.7M1262.1 -46.0L1294.0 -121.8M950.1 784.9L1010.2 643.2M1064.5 498.0L1106.8 388.0M1110.6 383.9L1153.2 279.5M1158.0 271.0L1184.8 205.9M1184.4 201.0L1216.8 116.8M1219.7 115.0L1243.3 58.9M1245.2 53.6L1300.3 -83.5M1301.7 -85.5L1340.2 -186.1M963.8 790.4L999.3 707.2M998.1 702.9L1056.5 559.4M1057.3 557.6L1109.9 433.6M1108.9 426.5L1155.0 312.0M1155.9 311.7L1178.1 254.1M1180.3 250.3L1197.5 206.4M1260.0 54.1L1299.2 -48.5M1303.5 -50.5L1341.4 -146.1M980.5 797.1L1032.9 672.3M1059.3 604.2L1094.4 516.6M1095.8 511.8L1114.8 462.8M1118.7 454.9L1136.4 413.4M1135.9 411.6L1164.0 345.4M1163.8 345.1L1188.5 281.1M1192.0 275.3L1244.4 138.5M1273.1 70.9L1320.1 -48.4M1322.0 -48.3L1381.2 -187.4M992.9 802.2L1019.6 736.9M1020.7 731.7L1071.3 608.9M1073.7 599.6L1091.4 557.1M1094.1 553.6L1147.2 423.3M1147.8 417.2L1204.3 270.7M1211.2 263.6L1229.3 219.5M1232.0 210.4L1273.1 105.2M1273.7 104.6L1322.3 -15.0M1324.0 -17.2L1351.4 -83.2M1006.7 807.7L1042.9 720.8M1045.0 712.1L1072.0 641.3M1077.4 636.1L1128.4 513.1M1126.9 509.0L1178.1 388.2M1178.4 383.6L1205.8 316.1M1207.2 313.4L1225.2 269.8M1280.0 132.1L1295.4 92.8M1022.1 814.0L1063.0 717.7M1123.3 564.2L1154.1 492.1M1155.5 484.6L1186.6 403.4M1189.3 398.7L1230.2 298.5M1233.6 292.0L1265.3 212.3M1266.5 207.1L1302.5 115.8M1306.0 113.0L1350.4 3.4M1037.5 820.2L1056.5 773.0M1056.8 772.8L1082.0 708.0M1084.7 703.8L1111.9 636.6M1160.6 517.4L1196.8 426.3M1198.8 417.9L1224.9 355.5M1226.4 351.4L1260.9 263.3M1308.5 147.8L1365.8 7.3M1366.5 3.5L1422.5 -139.6M1052.4 826.2L1079.0 757.0M1078.8 756.7L1098.7 707.1M1101.8 704.4L1149.1 586.2M1151.7 580.4L1173.4 528.9M1172.8 527.1L1195.8 471.8M1239.8 357.7L1291.6 232.7M1294.8 223.2L1339.0 117.6M1342.6 108.6L1373.7 30.8M1375.6 26.7L1404.5 -45.0M1066.5 831.9L1101.3 748.2M1103.1 741.3L1155.4 612.2M1155.6 608.1L1170.1 570.0M1174.0 560.8L1202.4 489.3M1206.6 482.6L1250.0 369.9M1255.1 363.0L1305.8 241.8M1306.5 236.7L1343.7 147.1M1344.0 143.6L1393.2 19.9M1396.7 11.5L1453.1 -130.5M1082.2 838.2L1098.0 797.1M1101.6 789.0L1143.2 688.6M1181.4 589.0L1235.8 454.3M1238.1 449.7L1271.0 372.7M1271.3 366.1L1331.8 221.0M1332.7 217.3L1373.7 113.4M1376.6 107.2L1408.6 29.2M1097.2 844.3L1140.7 735.1M1144.8 726.1L1176.9 645.4M1178.1 641.4L1210.7 563.9M1210.1 563.1L1270.4 416.2M1270.3 413.0L1319.7 290.8M1321.0 289.0L1347.1 224.0M1374.1 157.0L1414.2 55.6M1416.3 53.6L1465.7 -65.3M1107.3 848.4L1161.1 717.9M1222.2 565.7L1266.5 460.7M1266.2 454.1L1281.7 416.0M1284.5 408.2L1304.9 356.2M1306.0 356.2L1326.6 307.6M1326.6 305.8L1354.2 236.4M1122.8 854.6L1144.1 799.3M1147.6 797.0L1202.8 662.5M1203.8 656.6L1241.3 562.5M1245.2 555.1L1275.0 485.0M1274.1 481.0L1308.1 395.5M1311.7 388.4L1335.3 330.5M1337.8 323.2L1358.3 273.4M1360.8 267.0L1385.3 205.2M1389.2 197.1L1443.2 62.7M1443.7 60.7L1479.0 -27.7M1140.7 861.9L1169.8 791.5M1172.5 787.0L1222.3 660.3M1269.0 545.9L1314.4 427.9M1369.4 299.8L1414.8 186.3M1418.4 177.2L1473.1 43.2M1474.8 39.0L1525.3 -89.6M1201.7 759.1L1237.0 672.2M1239.7 665.3L1285.8 545.1M1287.9 542.3L1309.2 486.6M1311.2 485.9L1333.9 429.4M1333.4 429.0L1370.4 332.5M1373.4 332.1L1405.3 249.9M1408.4 243.3L1465.3 109.7M1463.8 108.3L1509.8 -0.5M1509.4 -2.2L1558.4 -118.8M1171.3 874.2L1221.9 741.7M1225.3 740.9L1246.2 688.0M1249.8 678.9L1295.3 564.7M1298.6 562.9L1354.9 419.8M1414.5 275.3L1455.9 171.9M1460.1 162.9L1499.7 63.6M1501.1 56.7L1549.7 -61.1M1205.0 826.5L1225.7 778.0M1227.5 770.8L1262.1 686.2M1264.2 677.8L1320.2 541.8M1323.3 535.7L1368.0 426.8M1370.2 418.8L1390.0 367.5M1392.0 366.5L1434.8 257.6M1436.4 253.0L1475.5 160.5M1477.8 153.7L1519.4 53.7M1520.0 48.0L1536.3 5.8M1197.9 885.0L1231.1 805.1M1232.2 800.7L1271.7 704.2M1327.2 564.6L1372.6 454.6M1372.2 452.6L1430.7 315.5M1431.6 307.3L1468.5 217.8M1467.1 216.3L1497.7 137.4M1500.0 133.4L1521.8 80.8M1213.5 891.3L1237.7 832.2M1238.2 830.4L1273.7 739.9M1331.1 597.4L1367.6 502.6M1373.1 495.7L1407.0 407.3M1408.4 407.0L1459.7 277.4M1461.9 277.4L1491.2 205.0M1493.1 196.6L1550.8 47.6M1555.5 42.2L1575.4 -9.7M1226.7 896.6L1266.0 797.5M1269.1 794.8L1315.7 675.0M1318.3 671.1L1375.1 532.3M1378.4 522.9L1394.6 483.1M1397.4 475.1L1417.2 427.6M1420.2 421.1L1454.6 338.0M1455.0 332.1L1504.5 212.4M1506.7 204.6L1534.9 138.5M1536.7 132.9L1594.6 -12.7M1243.8 903.5L1293.5 776.3M1295.8 771.6L1316.3 717.9M1320.3 713.4L1363.4 607.4M1364.3 600.4L1382.5 553.6M1387.0 546.2L1408.4 494.2M1412.4 486.4L1464.2 356.8M1467.2 347.4L1516.6 225.5M1520.3 217.9L1539.9 169.8M1541.3 166.0L1573.3 86.4M1261.6 910.7L1284.6 851.9M1284.7 851.7L1317.3 766.3M1320.4 764.5L1374.4 629.1M1376.7 625.6L1423.6 509.6M1424.7 507.5L1457.5 422.1M1460.1 419.4L1500.9 318.9M1501.5 315.2L1525.6 258.2M1525.7 257.2L1566.1 158.7M1599.6 76.1L1653.4 -59.0M1277.7 917.2L1317.6 816.7M1321.9 811.0L1375.5 672.1M1379.2 666.7L1408.0 592.6M1411.1 591.0L1458.2 473.2M1458.5 472.6L1509.8 345.5M1511.6 341.5L1527.9 300.9M1531.7 293.0L1580.4 165.1M1625.3 57.3L1646.8 3.5M1291.5 922.8L1313.2 866.3M1317.2 857.4L1336.7 808.4M1396.7 661.1L1439.5 554.4M1442.5 546.1L1491.7 422.3M1496.5 415.4L1529.5 329.4M1580.6 206.7L1633.3 74.0M1636.9 69.5L1670.1 -10.8M1305.3 928.4L1340.8 839.2M1342.7 832.6L1366.6 776.2M1367.2 772.5L1425.3 629.5M1428.9 621.0L1475.6 506.9M1475.7 505.5L1527.1 375.4M1531.6 369.0L1571.3 273.7M1571.7 266.5L1626.8 137.0M1628.0 127.7L1671.2 15.1"/></g><g stroke="#ffffff" stroke-width="1.8" fill="none" opacity="1" clip-path="url(#mid)"><path d="M212.3 -525.3L256.8 -507.6M258.6 -505.4L310.6 -483.4M347.9 -470.5L392.8 -453.2M463.7 -423.3L508.5 -404.9M590.6 -372.1L615.0 -362.7M621.9 -358.1L655.6 -344.1M656.1 -344.7L707.2 -323.8M711.5 -322.9L775.8 -297.0M779.8 -294.3L808.7 -282.4M809.3 -283.9L850.4 -267.3M856.8 -264.9L904.9 -245.0M906.1 -243.5L958.4 -223.3M967.5 -219.8L1027.5 -195.0M1031.0 -193.7L1088.1 -169.4M1092.8 -169.3L1137.0 -150.6M1264.5 -98.7L1294.1 -86.5M1295.9 -87.4L1317.0 -78.7M1321.7 -75.7L1391.8 -46.4M1438.2 -29.0L1493.8 -6.6M1550.2 17.3L1611.2 41.8M1613.0 41.4L1658.8 60.5M205.8 -509.3L237.4 -496.7M241.2 -493.6L273.2 -480.0M275.1 -480.3L295.0 -472.2M304.3 -469.5L377.9 -440.1M378.4 -439.5L419.0 -423.7M424.0 -421.5L492.4 -394.1M494.2 -392.4L557.6 -365.7M560.8 -365.8L604.3 -348.2M610.2 -345.6L647.2 -330.1M652.4 -328.0L711.4 -304.4M713.2 -304.9L751.8 -288.8M756.8 -287.1L802.3 -269.5M808.4 -265.4L829.0 -256.6M837.2 -253.9L878.3 -236.8M882.5 -234.9L941.1 -211.2M948.2 -209.0L993.9 -189.6M1003.7 -187.3L1053.7 -166.9M1062.3 -163.3L1094.2 -150.1M1097.1 -149.7L1148.5 -128.2M1153.2 -125.9L1185.2 -112.6M1215.2 -100.5L1256.3 -84.2M1261.7 -81.9L1288.5 -71.4M1294.6 -68.8L1320.7 -57.8M1327.0 -55.6L1357.6 -43.4M1364.2 -41.4L1424.6 -15.7M1432.9 -12.0L1475.7 5.0M1478.0 4.4L1510.3 17.1M1516.7 20.6L1536.3 28.7M1584.1 47.6L1650.3 75.7M198.9 -492.2L263.6 -466.9M264.0 -466.7L289.9 -456.4M296.5 -453.9L327.5 -441.9M334.2 -437.9L363.1 -426.3M403.9 -410.6L443.3 -395.1M444.8 -394.5L505.4 -369.0M613.8 -325.6L671.5 -302.5M672.4 -302.3L705.4 -288.3M787.0 -256.1L852.4 -231.1M969.6 -182.6L1036.5 -155.3M1039.0 -153.6L1063.5 -143.9M1065.9 -143.2L1124.6 -119.2M1126.8 -118.7L1171.1 -100.5M1200.8 -88.1L1227.5 -77.2M1236.1 -74.9L1288.2 -52.9M1296.8 -49.4L1348.3 -28.8M1349.5 -27.6L1394.5 -8.6M1400.2 -8.8L1471.4 19.7M193.4 -478.7L224.6 -466.6M229.3 -462.4L285.7 -440.3M286.3 -440.5L334.8 -421.1M342.8 -417.3L377.3 -403.7M385.9 -400.7L418.6 -387.2M469.1 -366.0L506.7 -351.7M507.3 -351.8L571.7 -326.7M574.7 -322.7L640.0 -297.6M648.0 -293.1L669.6 -284.1M678.2 -281.0L716.4 -266.0M796.6 -233.2L858.1 -208.5M862.2 -206.7L890.2 -195.8M898.8 -193.2L962.6 -168.9M962.6 -166.0L1027.5 -140.5M1036.0 -136.5L1078.8 -118.5M1297.9 -31.3L1317.8 -23.2M1319.7 -22.0L1384.4 5.4M1394.2 7.2L1433.0 23.4M1434.7 23.8L1465.6 37.0M1468.7 38.3L1487.6 45.6M1492.7 46.8L1544.5 68.0M1553.4 71.3L1625.8 101.1M1632.7 103.5L1688.9 126.8M188.9 -467.6L213.1 -458.1M215.2 -455.3L254.4 -439.4M259.6 -437.7L300.4 -421.1M345.8 -404.5L369.4 -395.1M374.3 -392.1L399.2 -381.9M403.5 -381.0L466.2 -355.6M468.6 -354.5L529.2 -331.3M537.3 -325.2L562.7 -315.5M566.4 -313.8L608.7 -295.8M635.2 -285.8L668.9 -272.8M671.6 -272.1L740.0 -245.8M740.4 -245.1L771.0 -232.7M778.3 -229.0L796.9 -221.3M803.9 -218.8L860.0 -195.8M864.2 -193.9L934.3 -165.0M938.9 -163.7L984.5 -144.2M987.5 -143.6L1033.5 -124.9M1036.7 -124.6L1065.2 -113.1M1067.8 -112.7L1112.9 -94.1M1149.2 -79.1L1193.9 -60.9M1225.2 -48.3L1295.5 -20.7M1296.5 -19.7L1351.3 1.5M1353.5 3.4L1411.1 27.7M1503.9 63.3L1544.1 80.4M1587.2 98.8L1657.2 128.3M184.9 -457.6L220.9 -443.6M221.5 -443.1L288.2 -416.2M296.3 -413.0L322.7 -401.9M330.1 -398.8L401.6 -370.5M404.2 -367.8L475.4 -337.7M480.8 -338.1L535.7 -314.8M543.3 -312.2L577.8 -298.8M617.9 -282.5L691.6 -251.9M698.6 -250.7L741.8 -233.8M744.8 -231.8L783.3 -216.7M790.9 -212.0L853.2 -187.7M857.9 -186.1L922.8 -160.0M954.0 -146.5L1009.6 -124.0M1012.7 -122.4L1036.0 -113.1M1043.1 -110.0L1107.2 -82.7M1108.1 -83.9L1178.8 -54.5M1238.3 -32.3L1275.5 -16.8M1281.7 -15.0L1316.6 -0.4M1321.8 2.9L1382.8 28.1M1387.8 28.1L1439.4 48.5M1446.3 52.6L1510.3 78.5M1513.8 80.4L1571.4 104.3M1617.1 120.2L1659.4 137.3M180.2 -445.9L240.0 -421.5M242.1 -420.2L298.2 -397.5M302.0 -397.4L370.8 -369.1M372.2 -368.8L401.1 -356.7M455.5 -335.3L507.5 -315.0M509.4 -314.1L566.5 -291.3M570.4 -288.8L643.3 -257.8M650.7 -256.8L695.0 -239.6M757.6 -213.3L785.7 -201.7M793.3 -199.5L834.5 -183.4M912.2 -150.4L981.4 -121.9M984.7 -121.3L1023.7 -105.6M1029.0 -103.8L1054.1 -94.0M1058.7 -91.3L1116.2 -67.7M1193.6 -37.1L1243.8 -17.0M1246.6 -14.6L1278.7 -2.0M1334.7 21.1L1382.6 41.3M1385.9 40.0L1410.5 50.2M1470.5 74.9L1536.8 103.2M1544.6 104.8L1575.8 117.3M1578.7 118.3L1610.1 130.5M1617.6 135.2L1657.1 151.4M173.7 -430.0L243.8 -400.7M249.8 -398.5L270.1 -390.3M278.7 -386.2L341.3 -361.4M350.3 -359.2L369.0 -351.7M372.5 -348.7L395.2 -339.9M397.9 -340.1L459.5 -315.8M467.8 -311.0L501.4 -296.8M509.5 -295.0L549.7 -279.6M699.4 -217.8L750.1 -197.2M809.9 -173.3L828.4 -165.8M829.8 -164.3L872.9 -146.3M881.0 -143.8L953.9 -114.9M956.8 -114.3L1003.4 -94.9M1006.1 -92.9L1057.9 -72.0M1242.5 2.0L1272.5 14.2M1277.9 17.0L1301.3 26.7M1422.7 74.5L1447.1 83.9M1455.5 88.4L1508.5 110.0M1517.0 112.4L1539.0 121.4M1614.8 152.4L1684.5 180.2M235.4 -392.1L258.2 -383.3M259.9 -383.4L329.0 -354.5M334.6 -352.9L367.1 -340.3M437.4 -311.8L493.9 -288.9M502.5 -285.0L526.2 -274.9M535.8 -272.2L554.9 -264.8M555.5 -262.5L601.9 -244.0M676.0 -215.6L709.5 -201.4M765.6 -177.6L826.4 -152.9M835.1 -150.3L860.9 -139.4M864.4 -139.2L908.8 -121.6M916.8 -118.6L971.1 -96.0M975.1 -94.8L1006.7 -81.5M1014.3 -78.9L1086.6 -49.9M1095.8 -46.0L1114.5 -38.7M1221.1 5.4L1269.1 23.9M1323.7 46.1L1388.9 72.8M1421.2 85.4L1449.4 97.4M1450.7 98.1L1506.7 120.9M1510.1 121.3L1574.0 147.7M1625.1 168.3L1680.5 189.5M162.7 -402.8L211.9 -382.6M220.7 -379.2L292.8 -351.3M294.8 -349.2L352.7 -325.1M356.5 -325.9L384.6 -314.5M386.8 -312.5L427.6 -295.8M428.0 -295.3L496.2 -267.4M502.5 -265.8L570.9 -239.6M570.8 -238.7L629.5 -215.8M633.6 -213.9L699.2 -188.3M700.3 -185.3L760.4 -161.3M812.2 -141.2L832.2 -133.5M834.1 -132.3L907.2 -101.4M916.0 -98.9L982.2 -72.1M989.2 -70.1L1040.8 -48.3M1048.1 -46.1L1091.3 -28.9M1176.9 6.0L1231.9 28.6M1239.9 32.6L1307.5 60.3M1312.6 62.3L1341.7 74.6M1386.1 90.3L1414.8 101.7M1423.7 105.6L1449.1 116.2M1449.3 117.5L1505.7 139.8M1512.0 142.1L1532.0 150.6M1539.2 152.5L1561.2 161.1M1569.6 164.1L1625.0 186.9M186.8 -381.3L220.1 -367.4M227.2 -365.3L281.3 -342.7M338.8 -319.9L371.7 -306.9M376.2 -303.8L396.7 -295.7M396.9 -295.4L465.8 -268.5M603.9 -213.4L655.9 -193.1M740.5 -156.3L783.8 -137.8M786.4 -139.0L824.9 -122.6M828.0 -121.3L881.6 -100.2M885.8 -99.3L944.9 -76.3M946.1 -73.7L1007.0 -48.2M1058.9 -27.9L1111.1 -7.5M1219.5 36.8L1274.1 59.7M1280.6 61.2L1342.4 86.3M1376.7 100.0L1416.8 116.8M1419.8 116.6L1488.0 144.5M1540.5 165.1L1607.7 190.8M1614.7 196.4L1654.0 212.4M154.1 -381.3L179.2 -371.7M181.4 -371.2L229.1 -351.9M231.3 -350.3L256.5 -340.5M261.7 -339.0L324.9 -312.2M332.5 -310.1L406.6 -280.4M414.3 -277.0L467.0 -254.8M498.6 -242.8L522.4 -232.9M582.4 -208.6L624.1 -191.0M633.5 -187.8L678.9 -169.6M681.1 -169.8L726.1 -151.0M729.6 -150.5L782.7 -128.3M790.1 -125.9L847.8 -102.6M855.2 -98.6L917.7 -74.3M985.8 -45.7L1026.3 -28.6M1116.3 5.6L1166.5 26.9M1232.8 53.2L1258.9 63.8M1301.4 81.1L1342.4 97.0M1343.1 98.6L1402.0 122.8M1407.0 124.1L1436.5 135.9M1439.0 136.7L1478.3 153.2M1479.8 152.9L1531.8 173.4M1534.8 176.5L1589.5 197.7M1597.5 200.8L1640.5 217.6M148.5 -367.6L206.8 -342.8M214.4 -341.9L286.4 -311.5M294.5 -309.3L362.0 -280.6M395.0 -268.6L437.0 -252.5M490.8 -228.8L559.3 -200.0M590.0 -190.5L655.1 -163.4M709.5 -140.6L760.3 -121.0M768.1 -118.1L804.3 -102.9M808.8 -102.1L831.4 -93.4M831.9 -93.1L871.8 -77.6M879.5 -72.7L928.0 -52.0M976.4 -34.1L1039.3 -9.6M1174.5 45.8L1232.8 68.7M1267.9 83.6L1299.8 96.2M1332.5 109.3L1351.3 116.9M1359.3 120.9L1412.1 142.0M1438.1 152.1L1468.1 164.4M1469.7 165.7L1516.5 185.1M1567.9 204.9L1625.4 227.0M142.0 -351.4L186.9 -333.7M262.6 -303.5L332.7 -273.7M341.4 -272.1L412.0 -245.1M411.2 -242.5L480.6 -213.0M483.8 -214.7L556.6 -186.0M565.3 -181.1L635.8 -151.5M643.8 -149.9L712.3 -122.2M721.0 -118.8L773.6 -97.5M781.7 -93.0L832.0 -72.8M838.6 -70.6L895.3 -46.9M903.7 -44.0L977.0 -14.1M985.3 -11.9L1017.1 1.4M1044.0 12.0L1095.7 31.9M1100.9 34.8L1153.7 55.8M1155.4 57.8L1219.1 83.7M1221.2 84.7L1255.1 99.1M1291.4 113.2L1331.4 129.5M1375.4 145.6L1426.1 165.5M1434.1 169.6L1487.9 190.8M1494.3 195.3L1513.7 203.2M1514.7 201.9L1535.2 210.1M1540.8 213.5L1596.6 237.1M137.2 -339.5L193.4 -315.6M201.1 -313.7L273.2 -285.5M274.2 -284.9L311.9 -270.1M320.3 -266.2L393.1 -235.7M416.2 -227.2L448.0 -213.9M453.0 -213.2L492.3 -197.4M501.1 -193.7L573.7 -164.6M609.9 -148.4L633.0 -138.6M634.0 -139.8L692.1 -117.5M855.8 -50.6L904.6 -31.2M957.0 -8.3L1029.3 21.3M1031.8 20.7L1088.1 44.3M1091.0 46.3L1120.9 57.9M1286.7 124.7L1357.8 154.1M1366.2 156.0L1438.1 186.4M1545.0 229.3L1583.5 245.6M1587.9 246.0L1638.8 266.0M132.7 -328.4L191.5 -304.8M233.7 -287.9L284.9 -267.2M287.4 -265.4L328.9 -247.9M385.2 -227.8L411.3 -217.3M439.5 -205.8L484.6 -188.0M487.5 -186.0L511.8 -176.2M518.1 -172.8L537.3 -164.7M544.2 -163.1L609.0 -136.0M616.5 -134.3L661.8 -115.1M665.3 -114.3L714.0 -94.6M714.1 -94.5L734.7 -86.2M735.3 -84.5L806.0 -56.7M810.1 -54.6L842.4 -41.5M848.3 -40.7L884.3 -26.7M890.2 -23.3L962.3 7.3M966.8 8.5L1016.8 29.6M1025.7 31.6L1061.7 46.5M1062.7 48.0L1116.6 70.2M1258.9 125.4L1283.8 135.6M1288.6 138.4L1314.0 148.8M1316.9 148.7L1344.2 159.3M1348.6 161.7L1389.0 177.5M1393.6 180.0L1450.7 202.1M1453.7 204.4L1493.5 220.2M1539.3 239.1L1608.8 267.0M126.7 -313.7L194.2 -285.4M203.4 -283.2L231.9 -271.1M239.4 -268.4L281.1 -252.4M285.1 -248.7L307.8 -239.5M310.6 -239.2L340.7 -226.5M342.6 -226.5L387.3 -209.1M442.3 -186.1L490.2 -167.0M490.7 -167.3L538.1 -148.2M543.4 -144.9L581.8 -130.2M582.0 -129.4L630.0 -110.7M633.0 -108.9L691.7 -85.9M749.2 -61.1L812.2 -35.0M817.1 -34.7L850.6 -21.5M851.3 -20.2L903.8 0.2M968.0 25.9L1038.1 54.4M1045.0 57.7L1082.5 73.6M1089.7 76.4L1145.4 99.2M1193.4 116.8L1224.1 129.8M1227.3 130.8L1256.3 143.1M1262.4 144.5L1286.5 154.2M1291.2 156.8L1327.1 171.9M1333.9 173.2L1367.0 186.2M1366.5 188.1L1437.4 218.4M1513.9 247.8L1576.3 273.8M173.8 -278.6L196.9 -269.7M202.0 -268.2L227.8 -257.3M236.1 -253.4L308.8 -225.5M375.5 -196.6L399.8 -186.4M520.5 -138.6L575.5 -116.1M576.9 -116.0L621.8 -97.6M696.0 -67.6L756.2 -42.3M758.4 -42.1L824.5 -16.2M877.1 6.2L935.9 30.4M939.6 30.6L984.0 49.4M989.6 50.5L1062.2 78.2M1113.8 101.6L1138.6 112.1M1140.5 110.6L1191.9 130.9M1196.7 133.3L1238.8 150.6M1243.9 154.3L1272.8 166.5M1279.1 167.4L1326.4 187.0M1329.9 188.3L1379.3 208.5M1383.0 209.4L1421.1 224.7M1424.2 227.0L1459.1 240.6M1465.1 243.1L1513.3 262.3M1513.4 262.5L1551.9 278.8M1558.1 280.9L1613.3 302.3M116.1 -287.2L159.5 -268.7M161.2 -269.7L183.4 -261.0M192.4 -256.8L240.6 -237.9M242.5 -235.8L268.6 -225.4M270.0 -226.0L342.4 -195.5M347.7 -193.9L421.6 -165.7M426.5 -162.5L458.1 -149.2M460.9 -147.1L524.2 -121.3M561.9 -106.5L597.3 -93.0M655.4 -70.1L685.3 -57.5M713.5 -45.0L739.4 -34.6M804.8 -9.8L872.1 16.4M878.3 21.1L951.2 50.4M953.4 50.4L989.3 65.4M990.5 65.0L1030.2 81.9M1093.0 106.3L1158.1 133.6M1160.2 133.7L1182.9 143.2M1296.8 189.0L1322.4 198.8M1326.6 202.6L1361.7 217.2M1366.9 218.0L1421.4 240.1M1424.9 242.5L1468.0 260.4M1513.9 277.9L1560.0 297.4M111.3 -275.6L178.0 -247.8M184.7 -245.1L231.9 -225.3M318.7 -192.7L367.7 -172.7M375.2 -168.0L403.7 -156.9M409.3 -156.1L455.0 -138.1M463.3 -133.5L528.6 -107.1M528.8 -106.0L571.4 -89.6M577.7 -87.9L598.8 -79.2M604.6 -76.6L634.7 -64.8M637.9 -61.9L659.9 -53.0M778.8 -7.0L804.1 3.6M874.1 33.3L932.5 56.0M1063.1 108.8L1112.0 128.0M1119.8 131.3L1144.6 140.8M1220.5 171.5L1247.2 182.5M1252.1 184.6L1303.4 206.5M1308.5 209.1L1371.8 235.3M1376.8 235.7L1407.1 248.7M1415.9 250.7L1475.8 275.8M1507.2 288.8L1537.8 301.5M106.1 -262.5L139.0 -248.9M142.3 -248.5L193.1 -227.9M194.4 -227.0L260.4 -201.6M262.2 -199.9L322.0 -174.5M326.6 -174.6L357.9 -162.1M364.8 -158.5L401.7 -144.4M405.9 -141.3L472.5 -114.0M482.4 -111.8L503.0 -103.3M506.0 -102.7L561.4 -80.0M564.1 -77.9L596.9 -65.1M634.0 -48.9L703.9 -19.9M709.5 -18.5L757.1 1.8M761.9 1.6L791.5 14.0M857.9 41.2L883.5 51.8M887.9 53.4L915.2 64.5M916.1 63.8L972.4 86.2M974.7 87.8L1001.1 98.3M1056.9 121.2L1106.4 141.8M1110.2 141.9L1171.7 165.7M1176.7 170.0L1242.1 197.4M1247.9 198.8L1280.2 211.6M1334.7 233.8L1364.6 245.3M1446.8 278.9L1498.3 298.8M101.7 -251.7L146.0 -233.6M147.0 -234.4L213.0 -207.7M214.3 -205.8L257.1 -189.1M260.0 -188.5L332.2 -159.0M334.7 -158.5L357.5 -149.6M469.0 -102.5L488.8 -95.0M490.5 -95.1L511.8 -86.8M519.4 -83.8L543.7 -73.8M544.8 -73.3L574.3 -61.4M580.6 -59.1L654.5 -28.7M660.5 -25.3L711.9 -5.6M716.6 -2.7L765.6 16.5M769.5 17.1L820.8 39.0M926.0 81.4L997.3 109.5M1068.6 139.7L1110.0 156.6M1172.7 181.1L1191.7 188.8M1231.0 205.4L1272.1 221.9M1279.6 223.1L1301.6 231.7M1351.8 252.4L1387.1 266.4M1393.9 270.6L1442.7 290.6M1447.2 291.0L1512.5 316.6M1546.8 332.4L1603.4 355.0M97.9 -242.3L139.5 -225.8M145.2 -223.5L217.7 -193.1M226.1 -191.1L257.3 -178.7M264.5 -175.1L303.0 -158.9M353.4 -139.2L421.0 -110.5M468.9 -92.0L531.8 -65.6M538.2 -63.7L562.8 -53.8M623.8 -30.8L680.0 -7.6M768.2 29.5L820.9 51.6M823.3 50.8L872.9 71.1M876.3 72.9L908.0 86.0M914.4 87.6L985.9 117.6M992.1 119.6L1010.8 126.9M1014.6 128.0L1087.7 157.9M1095.5 161.1L1139.5 178.7M1184.8 197.5L1205.7 206.4M1208.0 206.0L1235.9 216.8M1243.4 219.9L1270.6 231.1M1271.9 230.9L1318.2 248.9M1318.5 250.2L1383.1 277.5M1384.9 277.8L1430.9 295.5M1430.8 297.0L1459.7 308.4M1522.3 333.7L1591.6 362.6M158.0 -203.5L201.3 -186.1M208.4 -184.8L259.8 -164.7M261.5 -162.0L318.9 -138.1M325.1 -136.4L351.6 -125.4M355.8 -124.6L413.3 -102.2M476.2 -75.9L495.1 -67.9M497.9 -67.1L517.8 -58.7M523.8 -55.9L567.0 -38.8M569.2 -39.0L624.4 -17.5M627.8 -14.5L651.4 -5.2M723.0 25.2L797.1 54.2M837.2 71.0L869.7 84.5M870.7 83.3L932.3 106.8M939.8 111.3L965.7 122.2M974.2 126.4L1043.7 154.4M1077.5 166.4L1103.6 176.7M1110.8 181.6L1143.1 193.9M1278.8 248.1L1329.8 267.6M1394.4 295.1L1444.6 316.2M1449.9 318.3L1474.9 328.5M1484.3 330.8L1529.5 348.6M1532.1 350.2L1574.4 367.7M142.8 -197.7L206.8 -172.8M284.3 -140.9L333.0 -120.5M338.6 -117.9L401.4 -92.0M404.2 -91.1L437.9 -77.4M440.4 -76.1L509.0 -47.9M516.3 -46.5L554.0 -31.0M609.1 -9.7L650.8 6.5M656.7 9.2L701.6 27.2M708.9 31.4L769.6 55.6M800.6 68.5L829.8 80.5M836.3 81.7L871.9 96.6M914.8 113.7L941.8 124.2M991.3 145.0L1013.3 153.4M1015.9 154.8L1059.1 172.0M1067.4 175.5L1121.0 197.9M1129.8 201.1L1161.7 213.9M1195.8 227.7L1260.0 254.5M1322.1 279.7L1369.3 298.8M1374.0 300.2L1432.3 323.2M1433.5 324.3L1464.7 336.2M1465.9 338.2L1516.6 359.7M1517.8 358.6L1580.7 385.4M82.8 -204.9L139.1 -181.3M142.4 -180.3L205.3 -155.4M211.1 -153.1L277.9 -127.2M279.5 -126.9L315.6 -112.0M316.4 -110.9L345.6 -98.8M393.6 -79.3L445.3 -59.3M448.6 -58.0L479.2 -45.2M487.2 -41.0L516.3 -29.4M524.8 -27.1L595.8 2.0M603.3 4.0L640.9 18.6M647.9 22.8L683.4 37.5M686.3 37.9L709.8 47.1M713.7 49.9L759.9 68.5M818.7 92.1L871.0 112.6M946.3 142.9L966.6 151.4M973.3 153.9L1035.5 177.7M1040.2 182.0L1059.6 189.5M1167.9 233.9L1198.9 245.8M1311.3 291.9L1345.9 305.4M1347.4 305.2L1392.2 323.4M1446.3 344.6L1512.6 370.6M1514.0 373.2L1551.9 388.9M78.6 -194.6L143.2 -169.4M149.7 -167.0L172.3 -157.6M179.7 -153.4L224.0 -134.7M230.5 -133.4L283.6 -112.8M368.2 -78.2L403.1 -64.6M412.3 -60.8L472.6 -35.3M583.5 8.5L604.7 17.3M605.3 17.2L664.0 40.6M670.3 44.9L706.0 58.9M710.6 59.9L737.1 71.2M743.7 74.2L817.6 103.7M823.5 106.7L848.2 117.2M850.2 116.8L896.2 135.6M898.6 136.7L965.8 164.6M975.2 167.6L1022.6 186.2M1022.8 186.8L1086.3 213.4M1088.3 213.7L1155.6 241.1M1191.2 253.4L1246.5 276.8M1376.5 328.7L1408.4 341.7M1411.1 342.7L1436.2 353.3M1439.6 355.6L1472.8 368.8M1480.0 370.6L1517.3 384.8M1517.0 385.5L1565.8 405.0M73.9 -182.9L103.2 -171.7M111.5 -168.7L144.4 -155.1M148.0 -153.3L199.2 -133.6M207.7 -128.4L250.1 -111.7M348.1 -71.8L418.6 -42.7M422.0 -43.2L447.7 -32.6M452.7 -29.2L483.5 -16.8M540.7 5.4L578.5 21.5M681.0 61.5L724.1 77.9M795.7 109.1L862.3 136.2M869.2 137.8L894.7 147.9M897.3 150.0L920.5 158.9M925.5 160.1L945.2 168.5M947.8 170.7L995.8 189.0M998.6 190.1L1029.5 203.1M1033.0 203.4L1058.7 213.3M1115.2 237.5L1162.7 257.0M1251.4 292.3L1287.0 307.1M1314.4 318.7L1357.7 336.5M1367.6 338.6L1439.6 367.4M1440.9 368.2L1493.8 388.6M1497.5 391.9L1550.7 413.7M140.7 -140.1L192.3 -119.2M261.1 -91.4L294.5 -77.4M300.4 -75.6L364.2 -50.1M365.0 -49.7L389.0 -40.1M389.4 -39.8L450.6 -15.5M458.8 -9.7L491.0 4.0M495.3 3.7L551.6 25.2M554.6 27.8L611.7 50.7M790.4 124.2L857.6 150.5M859.7 150.6L899.3 167.4M943.3 185.6L983.6 202.7M984.5 202.6L1013.9 214.5M1021.0 216.1L1085.4 243.0M1091.2 245.7L1165.0 275.5M1173.1 278.6L1227.7 299.6M1230.4 300.3L1275.9 319.3M1276.5 320.1L1314.5 335.5M1322.5 338.3L1379.7 361.1M1425.3 380.2L1457.9 392.9M1462.0 394.0L1529.8 422.8M61.6 -152.6L97.9 -137.6M106.5 -134.2L171.0 -108.9M249.3 -76.4L301.7 -54.3M302.8 -54.2L356.2 -31.7M497.3 24.5L556.1 49.4M557.1 49.2L590.3 62.2M595.7 64.0L638.7 81.0M645.4 84.8L702.9 107.3M707.5 109.2L736.7 120.4M739.4 122.3L777.2 138.3M821.0 155.7L888.3 184.2M1018.1 234.5L1073.1 256.0M1102.3 268.8L1127.1 279.3M1161.8 292.3L1235.0 321.4M1239.0 323.4L1281.9 339.8M1289.6 344.3L1362.2 374.3M1392.3 385.5L1455.3 410.9M1459.7 414.2L1489.2 426.0M105.0 -118.0L134.2 -106.3M142.8 -101.7L194.4 -80.5M240.3 -62.6L310.8 -34.8M315.7 -31.5L336.7 -22.5M337.9 -22.9L367.3 -10.4M368.4 -10.2L394.3 -0.3M398.1 0.5L456.6 23.0M462.9 27.8L509.6 47.2M514.0 47.1L552.7 63.2M556.5 66.1L604.8 85.2M607.7 86.6L629.7 95.0M670.4 111.2L735.6 139.0M738.9 139.1L775.1 153.7M776.0 154.7L821.9 173.5M830.1 176.2L875.9 194.1M881.4 196.4L928.1 214.6M934.1 216.8L959.0 226.9M1031.6 256.8L1066.9 270.5M1072.8 273.8L1105.1 286.4M1110.7 288.2L1141.8 300.4M1143.4 302.2L1170.8 313.4M1175.9 315.4L1232.1 339.0M1275.7 356.5L1343.1 384.0M1352.3 386.2L1421.0 413.8M1430.0 417.1L1474.7 434.9M1482.5 440.2L1524.1 457.8M50.0 -123.7L85.1 -109.1M86.2 -110.5L141.0 -88.8M230.4 -52.0L272.2 -35.5M277.3 -32.1L335.6 -8.3M343.7 -6.7L402.9 16.8M520.9 65.8L549.7 77.6M554.2 80.3L609.5 103.0M613.7 104.1L659.8 122.8M666.2 125.4L730.4 151.2M736.9 153.8L804.9 180.6M806.0 182.1L871.9 209.0M874.9 208.4L900.4 218.3M905.3 220.2L963.5 244.5M969.7 247.2L1006.1 262.4M1007.0 262.7L1042.5 277.4M1049.5 278.5L1069.7 286.4M1122.5 308.6L1149.0 318.8M1184.8 333.7L1225.9 350.3M1230.7 352.5L1271.6 369.5M1276.1 371.9L1314.4 386.5M1320.0 388.5L1380.3 413.5M1434.7 435.7L1496.9 460.9M1503.1 463.0L1534.7 476.5M45.1 -111.6L106.6 -85.7M108.9 -86.9L168.1 -63.3M174.8 -59.3L228.6 -36.8M230.7 -36.8L297.0 -8.9M299.8 -10.3L344.5 7.6M348.8 11.3L392.6 28.2M438.0 45.9L463.8 56.3M543.1 88.3L595.0 110.1M598.4 111.7L621.6 120.9M628.0 124.3L663.7 139.3M664.9 138.0L707.0 154.4M740.9 170.0L814.6 200.4M821.0 201.9L890.4 229.8M974.2 262.3L994.4 270.7M998.4 272.5L1024.4 283.5M1027.7 285.4L1077.4 305.2M1082.6 306.2L1114.0 318.6M1174.8 343.4L1247.1 373.8M1254.2 376.5L1307.0 396.9M1306.7 397.7L1330.2 407.6M1357.2 417.0L1427.7 445.8M1429.4 446.6L1460.5 458.9M1462.3 460.6L1499.8 476.1M41.7 -103.3L92.2 -83.1M101.0 -79.7L152.8 -58.7M159.3 -56.1L225.5 -27.9M225.5 -27.5L286.4 -1.6M294.4 -1.4L317.6 7.9M389.4 38.6L424.2 52.8M504.4 83.9L577.7 115.0M579.2 113.6L610.2 126.7M677.9 155.1L728.8 174.6M735.4 177.0L801.1 204.5M805.0 206.3L837.9 220.1M867.6 230.2L888.1 238.8M954.1 266.7L999.2 284.5M1046.2 302.2L1084.9 318.6M1092.3 320.8L1152.2 345.5M1160.2 348.6L1188.5 360.6M1192.7 362.6L1257.2 389.4M1416.8 452.3L1490.0 483.0M36.8 -91.0L99.3 -64.6M106.0 -63.3L160.9 -42.1M160.3 -40.4L218.6 -15.5M222.1 -17.3L251.9 -5.8M252.3 -4.7L287.3 9.7M294.0 13.3L358.5 40.3M365.5 42.4L401.9 56.7M405.6 57.1L424.8 64.8M426.3 65.9L451.1 76.5M457.9 79.4L508.9 100.7M511.3 99.9L560.1 119.0M567.2 122.5L638.0 150.0M640.2 152.7L679.5 168.6M685.3 170.8L713.9 181.8M716.7 183.1L767.4 202.6M808.4 220.2L867.3 244.8M931.4 270.5L970.9 285.9M973.1 286.4L993.0 294.1M1187.8 373.6L1246.6 397.4M1252.5 400.6L1295.2 418.4M1382.0 451.7L1408.6 462.9M1408.8 463.9L1447.3 479.3M1456.3 482.1L1524.1 508.5M89.7 -59.6L142.8 -39.0M149.4 -34.3L189.9 -18.8M245.8 4.8L320.1 34.6M366.8 52.5L424.2 74.8M463.6 91.7L484.7 99.7M485.3 100.9L542.7 124.9M543.6 123.8L585.6 140.1M635.4 161.7L697.9 187.1M702.3 189.6L752.5 209.9M754.9 210.1L806.1 230.4M876.2 259.2L917.3 276.3M919.4 275.6L948.2 287.1M948.7 289.3L978.3 301.4M981.6 300.7L1035.7 322.4M1042.1 325.1L1105.6 350.8M1108.8 353.0L1152.1 370.6M1159.1 373.5L1226.4 399.5M1229.3 402.2L1258.7 413.5M1264.1 415.6L1331.4 442.4M1335.8 445.6L1377.4 463.1M1387.3 465.3L1411.8 475.0M26.8 -66.2L90.5 -41.5M164.5 -10.9L232.4 17.3M344.3 61.5L405.5 86.7M411.8 89.3L464.2 110.5M468.5 111.9L534.8 138.3M609.3 170.0L682.6 200.2M728.0 218.1L764.7 233.5M771.7 235.9L830.2 260.7M839.4 261.4L876.0 275.7M883.7 279.9L933.0 298.8M934.0 300.4L1001.5 328.1M1002.2 327.4L1072.8 355.9M1077.3 357.7L1122.7 376.7M1125.6 378.4L1166.2 395.3M1173.8 397.5L1215.7 415.1M1217.2 415.9L1274.6 439.7M1283.8 441.3L1325.6 457.6M1328.0 459.9L1358.4 472.5M1365.4 475.1L1437.9 504.5M1442.6 505.6L1480.1 520.8M21.2 -52.5L76.5 -28.9M80.0 -29.1L132.5 -8.0M215.4 25.3L260.2 44.4M263.4 45.5L314.1 66.1M349.8 79.6L368.4 87.3M395.4 99.2L449.4 122.2M455.4 122.4L476.5 131.0M524.9 150.8L596.0 180.0M603.1 182.7L641.7 198.0M646.0 200.7L699.7 222.0M701.6 222.9L743.1 238.8M744.5 239.9L776.3 252.3M783.7 255.0L850.1 282.8M926.5 313.6L962.0 328.0M967.5 328.6L1002.2 343.0M1010.8 347.3L1054.8 364.8M1063.3 368.7L1093.6 381.3M1097.0 381.1L1122.2 391.7M1122.2 392.1L1189.3 420.5M1197.3 421.6L1253.6 443.3M1253.5 446.1L1309.7 468.5M1312.9 470.2L1379.9 495.7M1388.8 499.2L1430.3 516.0M1437.4 518.6L1495.6 543.2M15.2 -37.7L65.0 -17.0M72.1 -14.3L104.4 -0.8M231.6 49.8L285.5 71.4M293.4 76.2L335.6 93.0M344.0 94.9L366.4 103.7M366.6 105.5L434.2 132.8M435.3 133.1L483.2 151.3M492.5 154.6L563.5 184.1M569.6 185.8L588.5 193.0M594.5 196.2L655.9 220.3M657.2 223.1L707.1 242.2M709.5 242.4L762.8 263.7M834.3 292.8L890.3 315.5M891.2 316.1L922.9 329.6M952.6 341.2L1021.2 368.4M1026.6 371.8L1062.2 385.8M1063.8 385.4L1118.8 407.5M1125.8 412.6L1177.7 432.8M1181.4 434.2L1208.0 445.4M1214.5 446.9L1251.9 462.0M1326.6 491.8L1375.3 511.6M1376.0 512.4L1429.7 533.9M1435.0 537.2L1484.5 557.7M74.3 -3.2L129.1 18.9M131.7 21.7L169.3 36.8M174.5 38.6L199.7 48.3M203.1 48.9L236.2 63.1M316.9 95.5L385.4 123.6M388.1 124.9L420.4 137.9M424.9 139.0L487.9 163.9M491.6 165.6L513.2 174.5M555.1 191.9L586.4 204.6M589.6 205.3L660.9 234.7M661.1 234.3L735.1 263.9M743.2 268.2L805.1 292.3M862.2 315.8L909.9 335.3M911.0 335.4L978.2 363.2M985.5 365.0L1028.2 381.8M1029.0 382.9L1093.3 409.4M1098.0 411.5L1148.1 431.9M1306.7 494.9L1327.3 503.1M1331.7 505.8L1361.4 517.4M1367.7 520.0L1421.6 542.5M35.1 -4.2L59.8 5.9M63.4 7.4L96.5 21.4M101.1 22.4L126.6 33.0M133.5 36.7L203.0 65.7M210.9 68.0L263.2 88.8M266.8 89.8L331.7 117.2M339.5 118.9L397.0 141.6M565.6 210.9L595.5 222.9M599.5 225.4L619.3 232.9M624.3 235.5L686.2 261.6M694.8 264.0L721.4 274.9M730.3 276.4L763.4 289.8M772.4 293.9L830.5 316.6M834.0 319.3L868.6 333.2M874.1 335.4L915.5 352.7M924.1 355.2L975.5 375.1M977.7 378.1L1003.9 388.9M1006.2 388.9L1032.2 399.0M1041.0 403.8L1101.1 428.9M1184.9 460.2L1233.5 479.3M1239.9 484.1L1311.7 514.4M1320.7 516.2L1349.7 528.3M1358.0 529.9L1383.3 539.9M1436.6 562.3L1477.5 579.7M2.0 -4.9L48.7 12.9M50.0 14.4L82.2 27.7M84.6 27.9L125.0 43.4M128.3 44.8L148.3 52.7M218.7 81.8L244.4 92.7M361.4 140.6L400.5 155.7M408.0 158.4L459.1 180.0M464.3 180.1L514.0 200.8M588.6 231.6L621.2 245.2M704.8 278.1L750.5 295.9M798.9 315.5L842.9 332.9M843.5 334.6L909.6 359.9M913.5 362.0L953.3 379.0M956.6 379.7L1004.0 397.9M1003.8 399.4L1073.6 426.4M1114.4 444.5L1148.6 458.4M1200.9 478.5L1259.7 503.1M1260.7 503.1L1319.3 527.0M1323.7 528.6L1365.9 546.3M1369.6 546.2L1418.9 566.6M-3.8 9.3L38.6 27.3M45.1 28.5L84.0 43.5M90.4 47.2L153.4 73.2M155.2 74.3L188.4 88.4M194.1 89.1L251.8 113.5M333.4 146.3L402.6 175.5M468.4 199.5L487.7 207.2M493.3 211.1L549.6 233.4M552.6 234.9L594.3 252.3M601.1 253.2L655.4 275.9M732.3 306.0L792.7 331.6M797.8 332.6L823.2 343.1M828.6 346.4L893.4 373.1M900.7 374.7L967.1 402.9M1011.7 419.6L1060.8 438.8M1064.3 441.3L1116.1 461.3M1118.1 462.1L1163.3 480.9M1165.7 481.2L1200.9 496.0M1205.9 498.2L1226.0 505.9M1229.1 508.4L1274.7 526.5M1283.5 528.7L1318.3 542.9M1396.6 574.7L1423.6 586.0M1425.3 586.1L1498.3 617.0M38.4 43.9L104.6 69.4M108.4 72.2L143.1 86.3M143.4 85.7L179.1 99.8M180.4 101.7L211.5 113.9M220.3 117.8L275.5 140.8M284.6 142.7L314.1 154.1M372.2 177.4L438.1 203.1M437.8 204.1L485.9 223.7M489.6 226.3L549.0 249.2M620.3 278.3L683.6 305.2M741.4 327.2L780.9 343.8M784.1 345.5L808.1 355.2M811.6 355.7L879.3 381.9M881.7 384.7L906.5 394.5M912.9 396.1L978.6 422.5M984.3 425.6L1027.6 442.9M1032.9 445.1L1073.2 461.9M1127.9 484.7L1146.8 492.5M1149.7 491.6L1209.5 514.7M1208.9 517.4L1243.1 531.9M1248.5 533.1L1304.3 555.3M1343.5 571.0L1384.8 586.8M1387.3 589.1L1439.5 610.0M1445.3 612.3L1465.2 620.6M-14.9 36.9L20.5 50.6M65.0 67.6L107.6 85.6M157.2 104.9L177.6 113.0M186.3 117.9L251.8 144.7M258.9 147.9L323.9 173.6M371.0 193.2L392.1 202.0M513.0 249.2L551.4 264.4M551.7 265.4L606.1 287.0M614.5 290.3L675.8 316.1M680.4 316.3L722.2 333.1M722.9 333.6L792.9 360.9M798.5 364.7L847.5 383.9M896.1 405.4L934.2 421.2M942.2 423.3L992.3 442.4M995.5 444.2L1021.3 454.6M1022.9 454.8L1095.5 483.7M1098.1 485.8L1127.4 497.0M1135.5 502.1L1160.8 512.4M1254.1 549.3L1276.9 558.4M1282.2 560.4L1328.9 578.2M1410.9 612.9L1462.6 633.4M-19.6 48.4L41.9 74.4M44.3 73.1L90.4 92.3M127.1 107.5L184.9 130.4M189.0 133.5L209.8 141.7M216.5 143.9L269.3 165.7M275.1 166.7L337.4 191.8M468.5 246.0L503.0 259.6M505.0 259.2L548.6 276.4M550.1 278.5L594.9 296.8M597.2 297.1L645.7 315.6M654.2 320.7L700.9 339.2M702.5 340.1L773.5 367.2M871.5 409.0L943.3 437.3M945.7 437.6L991.1 455.0M998.1 460.4L1017.3 468.2M1017.6 467.7L1053.3 481.4M1103.6 503.0L1139.6 517.2M1148.4 519.3L1168.2 527.0M1170.6 528.6L1227.6 552.3M1234.5 554.0L1300.9 581.7M1310.0 584.6L1377.0 612.8M1381.9 613.8L1441.4 636.6M-26.2 64.9L-3.0 74.5M79.6 107.1L106.9 117.9M114.6 122.0L184.3 149.3M271.2 183.9L336.0 209.7M336.9 210.5L383.3 230.0M385.7 231.3L430.0 250.1M433.7 250.6L473.8 267.4M476.6 267.5L543.4 294.0M550.0 296.8L572.3 306.1M577.8 308.2L616.5 323.2M681.5 349.4L729.6 368.3M732.5 371.7L758.4 382.7M767.1 385.7L838.2 414.9M842.2 416.0L869.9 427.8M879.1 431.0L922.1 448.9M930.3 451.4L997.4 478.1M1055.5 501.2L1118.4 525.9M1125.7 530.3L1181.7 551.7M1255.4 582.0L1321.6 610.1M1377.8 632.1L1444.6 658.0M29.7 104.7L84.9 127.4M89.5 128.2L140.2 149.5M145.5 151.1L181.9 165.9M183.4 166.5L227.1 183.9M227.1 185.0L294.4 213.6M298.3 214.1L336.2 229.5M342.6 231.0L367.1 241.1M370.9 242.0L430.4 266.1M430.9 267.5L467.5 281.7M475.3 283.8L530.6 306.1M531.8 307.0L593.0 333.1M649.2 354.5L686.4 370.1M689.6 371.5L741.3 391.4M744.1 394.0L782.3 409.4M791.5 412.2L818.7 422.9M821.6 424.6L860.8 441.0M868.3 443.7L909.4 459.4M916.8 463.1L984.1 491.6M1049.3 516.8L1079.2 528.5M1079.8 529.0L1125.6 548.2M1135.1 551.2L1207.7 580.8M1209.4 582.3L1280.4 610.6M1335.5 631.3L1390.7 653.2M1395.2 655.7L1436.7 672.1M-36.9 91.2L-14.8 100.1M-11.9 101.7L44.0 125.2M46.4 125.6L93.9 144.2M94.4 144.2L125.2 157.0M129.9 158.3L187.6 182.0M194.8 185.2L266.1 212.9M341.6 243.4L373.4 256.8M374.5 256.9L438.7 283.7M444.9 284.7L476.1 297.1M476.4 298.3L504.8 310.3M509.4 311.3L544.8 326.4M625.5 358.1L693.1 385.5M695.4 386.5L716.2 395.2M790.3 424.4L818.7 435.9M823.3 438.0L882.2 463.0M887.0 464.2L914.8 474.9M915.1 475.2L961.2 494.1M963.6 495.2L1022.1 520.0M1069.4 537.7L1130.6 562.3M1135.8 565.4L1157.5 573.8M1158.5 573.6L1204.7 592.1M1213.5 595.3L1287.5 624.6M1289.4 626.9L1358.9 653.6M26.6 127.1L93.9 153.5M102.3 158.1L140.0 173.1M149.3 176.2L191.2 192.2M195.0 194.9L265.6 222.8M272.9 226.2L337.4 251.5M344.4 256.0L389.3 274.7M394.8 275.4L414.6 283.8M419.7 286.8L476.2 310.5M485.1 313.0L549.7 338.6M557.0 340.6L606.8 360.0M607.1 362.6L631.2 372.2M636.0 372.5L686.1 393.9M686.6 393.5L711.4 403.7M716.3 406.5L761.6 424.6M769.2 426.4L820.6 446.7M820.4 447.8L840.7 455.7M841.9 456.8L871.7 468.7M877.3 470.0L919.6 488.0M925.3 489.5L984.6 512.2M1017.4 528.0L1082.2 554.2M1164.6 587.1L1236.2 615.7M1271.3 629.8L1333.0 655.3M1407.0 685.7L1437.9 697.8M-44.0 109.0L13.3 132.4M15.3 133.3L62.8 153.4M141.3 183.9L166.4 194.5M174.1 196.8L212.6 211.6M219.8 215.6L243.4 224.8M245.3 225.9L276.0 238.5M278.1 239.7L347.9 269.4M355.5 270.0L424.4 296.5M431.1 302.3L502.6 332.6M506.1 332.2L567.2 356.1M567.5 356.7L604.6 371.4M646.6 389.4L701.9 412.7M706.5 413.6L741.3 428.2M782.7 444.1L816.9 457.6M824.0 459.2L843.4 467.3M846.1 468.3L910.1 493.6M917.2 497.1L974.1 519.2M976.5 522.7L1022.3 541.6M1028.2 541.8L1076.5 560.3M1081.0 563.5L1123.6 580.4M1125.9 581.4L1181.0 603.3M1187.1 606.2L1246.5 630.9M1326.6 662.6L1396.3 690.3M-48.7 120.6L-0.4 139.5M-0.4 141.7L45.4 160.7M122.9 190.7L176.4 212.7M180.7 214.1L216.9 228.1M222.9 232.2L250.7 243.9M259.1 244.9L288.1 256.2M290.3 257.9L346.6 280.7M458.9 327.5L518.0 351.2M522.5 351.8L585.0 377.4M588.7 379.7L650.1 403.3M701.3 424.0L720.3 431.4M727.9 435.7L761.4 449.4M762.3 449.0L793.0 461.1M797.2 463.9L817.6 472.6M820.6 473.6L877.6 496.5M886.6 499.6L935.6 518.7M939.0 520.7L985.7 539.3M1020.8 553.5L1093.5 583.9M1164.7 611.3L1235.8 639.1M1242.8 643.2L1276.4 656.2M1283.2 658.6L1343.0 682.4M-53.7 132.9L-0.3 154.4M4.7 156.4L25.6 164.6M28.5 166.9L62.6 180.3M71.2 184.3L94.1 193.6M97.2 194.0L131.4 208.3M140.1 211.0L167.0 222.0M175.3 225.5L229.3 246.8M234.2 249.1L273.0 264.2M363.3 301.7L429.7 328.0M434.6 329.8L496.7 354.0M502.8 357.5L547.8 376.2M551.5 377.4L585.9 390.9M641.4 413.3L682.3 429.2M683.4 431.4L705.8 440.8M708.8 440.4L772.4 465.2M773.9 466.7L841.2 493.1M841.8 496.0L894.9 518.4M898.3 517.7L931.8 531.7M933.8 532.0L1000.0 560.3M1003.4 561.2L1064.3 587.2M1069.4 586.6L1131.0 611.4M1139.2 615.8L1201.6 640.0M1205.4 641.0L1255.8 661.5M1317.6 686.3L1338.7 694.6M1343.2 696.9L1382.6 712.8M1385.9 715.9L1415.1 728.3M-57.5 142.2L0.0 164.9M7.1 169.1L56.3 189.1M64.5 190.8L114.0 210.8M122.0 215.1L167.3 234.4M286.0 281.8L318.3 294.5M326.1 297.3L369.8 314.8M370.2 314.9L391.0 323.1M443.8 344.7L484.8 360.5M486.4 362.6L547.3 387.9M611.3 412.2L654.0 430.0M785.8 483.9L836.6 505.0M842.7 505.8L881.3 521.3M882.2 522.2L932.8 542.4M993.9 567.7L1046.6 589.6M1049.5 589.9L1120.5 618.2M1128.2 621.8L1181.6 644.2M1191.3 646.6L1220.8 658.5M1227.6 661.4L1291.3 687.2M1296.0 688.4L1336.7 705.6M1340.1 706.4L1409.9 733.5M-61.9 153.1L-37.4 162.6M-32.7 164.8L24.0 186.9M23.6 188.8L75.2 209.0M76.1 208.3L124.3 227.3M125.8 228.5L191.5 254.6M193.3 256.8L213.2 264.7M216.4 266.0L286.2 295.6M289.3 296.1L351.8 320.3M353.5 320.9L410.4 344.8M412.4 344.2L443.5 356.7M445.7 357.2L499.3 379.6M508.0 383.0L543.1 397.8M552.1 400.9L610.3 423.5M617.7 428.6L688.3 456.6M689.1 456.8L734.1 475.6M740.6 476.8L782.1 493.4M790.6 498.0L860.6 525.7M972.8 570.6L1013.6 588.0M1021.0 590.0L1047.2 600.9M1047.4 601.7L1110.9 626.1M1240.5 680.0L1278.0 695.3M1283.7 697.5L1356.3 726.7M-67.5 167.2L-39.3 178.9M-30.8 183.4L30.0 208.6M39.0 210.5L109.3 238.5M109.6 240.7L178.9 267.5M182.9 269.8L235.2 290.3M235.6 290.2L303.2 318.5M304.1 319.1L339.4 333.5M344.1 334.2L397.8 355.1M478.0 388.9L550.6 418.4M554.9 420.6L627.1 450.3M708.3 481.8L758.4 502.3M767.1 505.5L811.7 522.5M811.4 524.1L831.4 532.4M892.2 555.1L939.7 575.2M1026.2 609.5L1090.4 634.9M1161.7 663.9L1196.7 678.4M1200.0 680.9L1227.2 692.5M1236.4 695.3L1257.2 703.6M1257.9 703.0L1316.2 726.7M1316.6 727.9L1387.1 758.0M-73.2 181.1L-1.1 209.0M3.3 211.3L52.9 230.7M55.5 232.1L87.9 244.8M125.7 262.0L174.9 282.8M313.7 337.5L383.8 366.6M387.9 366.1L412.3 376.4M471.2 399.9L514.4 416.9M519.3 419.2L580.4 445.1M583.9 447.0L638.0 468.5M640.7 468.5L687.5 487.6M695.1 491.3L723.7 502.5M731.8 505.2L757.9 516.2M760.1 517.9L817.1 541.6M819.9 542.1L863.0 559.4M924.8 583.7L966.0 599.5M1009.0 617.3L1080.9 644.9M1133.3 667.5L1180.5 685.4M1185.7 689.2L1204.3 697.0M1243.6 712.5L1275.1 725.0M1278.4 726.6L1331.5 747.7M1339.0 752.0L1412.0 781.0M-5.2 224.6L41.4 244.5M43.1 245.5L97.5 267.2M104.8 268.6L131.2 279.6M136.0 282.0L157.6 291.1M166.1 294.6L217.3 315.3M218.9 316.4L237.4 324.1M242.9 324.7L307.8 351.8M316.0 355.0L365.7 374.8M369.4 377.0L391.9 385.9M398.8 387.5L458.1 411.3M532.2 441.4L561.5 453.2M564.2 454.5L621.3 477.7M629.3 481.8L695.4 509.8M702.9 510.2L755.7 531.7M806.5 553.9L853.4 574.0M860.2 573.8L924.0 599.0M981.7 623.6L1038.4 646.5M1046.7 650.0L1106.1 674.9M1109.3 675.6L1131.0 684.0M1140.0 686.7L1184.5 704.0M1191.4 708.5L1249.4 731.5M1331.8 765.8L1393.7 789.7M-83.8 207.3L-64.0 215.3M-57.3 219.3L-33.6 228.7M-33.0 229.7L23.9 252.5M71.2 270.1L101.9 282.9M110.1 285.4L166.1 308.7M248.3 342.0L314.8 368.1M314.4 369.6L387.1 397.3M395.2 401.2L441.2 419.2M445.4 421.1L487.1 437.1M521.4 451.6L577.1 473.7M585.5 478.2L653.7 506.2M656.0 507.1L710.7 528.1M712.6 529.4L746.9 543.1M751.5 545.2L801.3 565.5M807.3 567.3L867.2 591.0M872.5 594.9L930.6 618.7M936.6 620.0L970.2 633.3M972.2 634.3L1044.0 663.3M1044.2 664.5L1109.1 690.0M1113.5 692.7L1170.3 716.2M1175.3 716.6L1215.3 733.4M1216.1 732.4L1251.3 747.1M1329.3 779.1L1395.3 806.6M-89.8 222.4L-21.3 249.2M-16.7 250.1L36.0 271.5M96.0 295.6L165.4 322.9M170.2 326.4L197.8 337.7M200.6 338.0L229.7 349.8M339.1 394.9L388.6 415.3M389.7 414.6L462.6 442.9M469.6 447.0L492.6 456.8M541.2 475.6L599.1 500.3M697.2 539.7L761.5 564.6M763.9 566.5L789.6 577.2M797.1 579.0L857.5 603.1M861.7 605.3L914.4 626.1M920.6 628.7L943.4 637.9M951.4 641.4L980.4 652.6M985.4 656.7L1054.1 683.9M1134.5 715.3L1168.5 729.6M1171.2 730.6L1211.9 747.2M1217.0 750.2L1279.7 774.7M1288.9 778.5L1308.0 786.5M1309.6 786.6L1333.3 795.9M-95.1 235.4L-73.8 243.8M-65.3 246.9L-25.9 262.7M-16.8 266.4L23.0 282.3M25.7 283.3L97.4 313.2M105.9 316.0L161.3 339.4M168.6 342.3L224.6 366.1M227.1 364.5L247.1 372.9M333.0 407.4L355.2 415.9M356.4 418.6L383.8 429.9M515.6 481.1L562.0 499.6M569.6 503.4L629.6 526.7M636.4 530.5L659.8 539.6M660.1 540.3L695.2 555.1M817.1 603.4L863.3 622.6M870.1 625.4L939.8 653.9M948.5 656.9L985.2 672.2M992.7 674.6L1027.6 688.2M1031.2 689.5L1102.6 719.0M1164.3 744.0L1207.7 761.7M1343.6 817.6L1374.1 829.3M-100.5 248.8L-70.9 261.1M-63.0 262.8L-5.1 284.9M0.3 289.3L63.2 314.5M109.6 334.1L170.3 359.7M255.4 391.4L309.2 413.1M317.1 417.7L375.7 440.3M379.3 442.2L444.9 468.6M448.5 470.2L487.4 486.1M488.8 486.7L516.8 498.0M521.8 499.4L560.1 514.9M562.8 516.2L615.2 536.3M617.7 539.2L661.8 556.1M664.3 558.3L696.2 571.8M703.3 573.4L774.3 600.9M780.9 603.9L814.2 617.4M817.4 619.9L885.1 646.4M889.8 648.3L938.1 666.8M939.0 668.6L975.8 683.8M977.1 683.0L1008.0 695.0M1012.4 698.8L1056.5 716.8M1061.3 717.0L1104.6 734.4M1175.0 763.0L1244.7 792.5M1246.1 792.9L1265.4 801.0M1298.8 814.3L1359.8 838.6M-105.9 262.2L-49.3 285.6M-42.2 289.0L18.4 312.7M27.4 317.2L99.7 347.3M104.7 347.4L139.2 361.8M227.5 396.9L282.5 418.0M286.6 421.0L311.8 431.7M317.6 434.5L339.0 442.9M342.6 444.0L398.4 467.4M407.1 471.0L479.1 498.7M485.2 502.6L551.3 528.9M559.1 532.0L596.2 546.3M596.8 547.2L634.4 563.3M643.9 565.1L669.6 575.0M670.1 576.6L738.3 604.4M743.9 607.3L768.5 616.6M775.4 618.4L798.2 627.1M798.6 627.7L841.0 644.7M966.7 696.8L1029.4 722.3M1038.5 726.1L1059.9 734.9M1069.0 738.3L1090.7 746.6M1095.8 748.3L1159.5 775.0M1206.7 794.4L1266.8 820.0M1313.3 835.5L1353.9 851.4M-65.2 297.2L3.4 325.5M94.2 361.8L137.3 379.5M216.6 411.2L239.3 419.9M242.4 421.3L265.0 430.2M271.6 432.6L342.5 459.7M345.4 462.3L378.5 476.2M381.1 477.2L449.8 503.5M529.7 536.7L553.6 546.0M558.9 549.9L632.6 578.9M634.0 578.9L668.3 592.5M675.9 597.0L728.6 617.4M730.3 618.6L782.9 640.6M789.8 641.7L818.3 652.6M821.0 654.0L860.8 670.3M863.9 672.9L937.1 703.5M1007.5 729.3L1080.2 757.7M1082.8 759.7L1111.0 771.3M1118.6 775.9L1155.7 791.0M1164.0 793.7L1196.8 806.2M1205.6 810.9L1238.7 824.2M1240.0 824.1L1313.9 853.3M1313.5 854.4L1349.7 868.4M-115.8 286.7L-69.9 305.2M-61.5 310.3L-37.6 320.3M-32.4 321.7L17.9 343.2M60.3 358.3L116.2 380.2M177.2 407.1L220.4 424.1M250.2 436.0L312.6 462.0M315.0 461.3L387.1 491.4M389.9 491.2L409.2 499.5M416.8 503.1L454.0 518.2M456.9 518.6L525.8 545.8M528.1 548.0L564.8 563.1M571.7 566.1L593.8 574.6M657.1 601.0L698.7 616.9M701.1 618.2L747.1 636.5M751.5 638.2L793.0 654.7M801.3 657.4L844.6 674.1M921.6 706.9L980.5 731.3M989.0 733.4L1039.9 753.6M1047.3 757.1L1113.1 785.1M1113.7 784.9L1154.2 800.4M1275.0 849.8L1297.6 859.3M-120.8 298.9L-66.4 320.5M-59.4 323.7L4.0 348.9M8.2 351.9L59.8 373.1M62.2 373.8L124.2 397.7M128.0 398.9L194.5 424.3M200.3 428.7L220.7 436.6M287.2 464.1L343.1 486.1M346.4 487.4L416.9 515.8M417.6 517.0L468.4 536.3M687.4 625.4L712.6 635.0M721.1 639.5L782.4 664.2M789.7 667.4L821.5 680.5M939.3 726.8L998.1 750.2M1006.6 755.6L1028.5 764.7M1130.6 805.1L1154.0 814.6M1223.7 843.1L1265.8 859.5M1274.4 862.0L1317.8 878.9M1317.6 880.6L1348.2 893.6M-127.4 315.3L-55.7 342.7M-50.6 345.7L-11.9 362.2M-9.3 363.4L46.7 386.7M54.4 390.2L79.7 400.8M227.5 458.4L275.5 478.7M279.6 479.8L347.5 506.8M406.0 531.0L438.9 544.2M447.4 548.0L470.2 557.3M478.2 560.8L526.9 580.2M633.9 623.9L675.4 640.3M682.1 642.1L744.5 666.2M750.5 671.4L802.9 692.7M812.1 696.3L841.0 707.6M843.0 708.0L888.1 725.4M915.5 736.3L977.8 761.8M1065.4 797.3L1088.6 806.8M1097.4 809.6L1140.8 827.5M1240.9 869.3L1272.1 882.1M1275.7 881.8L1312.7 896.1M1321.2 900.5L1355.1 913.6M-133.9 331.5L-67.6 358.1M-64.1 358.8L6.5 387.6M9.7 389.8L45.9 404.4M92.5 422.5L117.4 432.1M126.1 435.9L184.5 460.0M229.5 478.8L278.4 498.6M569.9 616.4L619.0 635.7M620.9 636.9L655.7 650.4M657.8 652.2L677.2 660.2M683.1 661.3L725.9 677.6M727.5 679.8L772.9 697.4M855.4 732.2L873.9 740.0M883.4 743.2L956.7 771.7M963.9 775.6L991.9 787.1M999.0 790.1L1035.7 805.1M1042.2 807.1L1073.8 820.0M1109.8 833.2L1173.6 860.4M1176.2 861.4L1248.9 891.0M1285.5 905.9L1307.1 914.8M1313.0 915.6L1371.2 938.1"/></g><g stroke="#ffffff" stroke-width="2.2" fill="none" opacity="1" clip-path="url(#manh)"><path d="M-126.5 354.9L-45.0 131.1M-41.9 122.2L55.3 -144.8M-113.0 359.9L-19.8 103.8M-16.2 94.7L115.4 -266.7M116.3 -270.8L177.6 -439.3M178.7 -442.3L292.4 -754.8M-100.9 364.3L30.3 3.9M133.4 -279.3L224.6 -530.0M-86.6 369.5L16.9 85.4M18.3 81.7L121.9 -202.8M123.9 -208.2L184.8 -375.3M187.7 -384.6L245.1 -542.1M-74.9 373.8L-7.5 188.8M-6.9 187.2L91.3 -82.8M91.4 -84.1L155.1 -259.1M155.6 -260.8L210.2 -410.8M211.5 -413.4L265.1 -560.5M-60.8 378.9L40.1 101.5M43.0 92.4L161.7 -233.6M164.5 -240.9L296.4 -603.1M-48.5 383.4L67.2 65.5M70.5 56.2L143.2 -143.4M143.2 -143.4L251.0 -439.6M252.2 -443.5L313.9 -613.2M-37.4 387.4L92.5 30.4M94.7 24.1L153.6 -137.5M156.6 -145.8L242.1 -380.8M244.2 -385.9L356.6 -694.7M-26.3 391.4L70.1 126.6M71.5 122.0L138.1 -61.0M140.6 -67.0L233.0 -320.7M235.5 -328.7L362.3 -677.2M-15.2 395.5L78.0 139.3M78.4 138.6L174.0 -124.1M175.0 -127.4L286.6 -434.0M288.0 -436.6L395.5 -731.8M-3.2 399.8L49.7 254.3M50.8 250.1L112.5 80.5M113.5 79.0L236.8 -259.7M239.6 -268.1L369.0 -623.6M10.2 404.7L89.0 188.3M88.9 187.8L193.2 -98.7M196.0 -105.9L295.8 -380.3M297.4 -384.2L408.3 -689.0M20.4 408.4L80.2 244.2M82.3 239.3L218.6 -135.0M218.9 -136.9L273.7 -287.5M275.1 -290.3L350.6 -497.7M28.3 411.3L123.2 150.6M125.2 146.7L183.8 -14.3M184.3 -15.6L280.9 -281.0M281.9 -285.6L339.6 -444.0M38.2 414.9L130.3 162.0M132.9 156.3L231.3 -113.9M231.7 -116.3L342.9 -421.9M346.2 -430.0L466.7 -761.3M46.9 418.1L137.0 170.4M139.4 163.0L215.8 -47.0M215.9 -47.1L277.1 -215.3M278.7 -219.1L378.6 -493.7M61.4 423.3L195.3 55.5M198.2 46.8L331.1 -318.3M332.6 -322.1L403.6 -517.3M70.1 426.5L172.3 145.8M173.9 143.2L247.0 -57.7M249.8 -66.2L337.1 -306.1M338.4 -309.0L466.7 -661.6M78.4 429.5L188.2 127.7M190.7 120.9L308.3 -202.2M92.0 434.5L149.3 277.0M151.4 270.3L269.6 -54.4M271.3 -59.0L322.9 -200.8M324.4 -204.5L419.4 -465.7M100.0 437.4L171.7 240.3M174.3 233.6L276.3 -46.8M278.5 -53.3L329.8 -194.3M331.5 -199.1L450.2 -525.3M108.3 440.4L209.5 162.4M211.9 155.2L270.5 -6.0M273.4 -14.4L355.9 -241.1M358.3 -246.0L486.3 -597.5M122.3 445.5L187.3 266.8M188.4 263.8L299.7 -42.1M303.5 -51.0L405.6 -331.6M405.4 -332.2L527.3 -666.9M132.6 449.3L242.9 146.2M243.8 144.4L301.5 -14.1M303.8 -21.8L429.2 -366.1M431.1 -371.2L532.6 -650.2M144.9 453.7L225.7 231.9M226.1 229.7L337.2 -75.5M339.0 -80.6L407.9 -269.9M408.3 -271.3L537.0 -624.8M153.0 456.7L242.2 211.6M243.1 209.3L376.3 -156.7M378.9 -163.9L442.4 -338.4M445.3 -347.1L542.7 -614.7M162.3 460.1L273.0 156.0M275.1 151.6L345.8 -42.7M347.6 -48.6L484.0 -423.3M175.7 465.0L291.9 145.8M294.0 140.8L351.9 -18.3M352.3 -19.1L451.0 -290.3M451.1 -291.3L546.3 -553.1M186.6 468.9L312.9 121.9M315.7 114.5L384.2 -73.8M384.2 -74.8L478.6 -333.9M482.0 -342.7L588.6 -635.6M194.4 471.7L314.2 142.6M317.2 135.5L382.1 -43.0M382.5 -45.4L496.0 -357.3M499.4 -365.5L631.1 -727.4M204.7 475.5L297.0 221.9M299.7 214.5L396.4 -51.2M399.4 -60.4L474.9 -267.8M477.9 -276.1L571.0 -531.8M214.5 479.1L351.2 103.6M352.4 99.4L415.6 -74.2M418.8 -82.4L502.5 -312.4M505.5 -321.1L557.6 -464.5M224.5 482.7L279.0 333.1M348.8 142.6L471.7 -195.1M474.6 -203.4L534.9 -368.9M237.9 487.6L332.9 226.7M334.2 222.4L429.9 -40.4M430.7 -41.9L542.0 -347.6M542.2 -348.4L672.2 -705.6M248.8 491.5L368.5 162.6M368.9 161.8L464.3 -100.3M467.7 -109.4L536.5 -298.3M537.9 -301.3L604.7 -485.0M256.8 494.5L324.3 309.0M325.3 307.5L388.1 135.0M388.1 134.9L457.6 -56.1M458.4 -59.2L536.7 -274.5M538.2 -277.8L662.4 -619.0M265.4 497.6L336.5 302.3M338.5 297.7L420.0 73.7M421.3 70.0L510.4 -175.0M513.4 -183.0L633.8 -513.6M390.6 196.1L470.0 -22.0M472.7 -28.0L554.2 -252.0M553.9 -252.1L630.7 -463.1M293.2 507.7L413.3 177.7M413.3 176.2L480.3 -7.8M483.9 -17.1L605.0 -349.9M306.3 512.5L379.3 312.1M380.7 308.1L514.4 -59.1M514.4 -60.4L592.9 -275.9M319.2 517.2L413.9 257.0M414.6 256.0L478.3 81.1M480.9 73.2L593.3 -235.5M596.7 -244.7L699.8 -528.0M330.9 521.5L400.5 330.3M404.0 321.0L532.9 -33.0M533.8 -36.4L590.0 -190.8M592.0 -196.4L713.6 -530.5M341.5 525.3L460.0 199.9M460.6 199.4L543.2 -27.4M544.1 -31.3L608.1 -206.9M611.1 -214.4L669.8 -375.8M349.8 528.3L465.6 210.0M466.0 208.7L530.5 31.5M589.6 -130.5L692.0 -412.0M362.1 532.8L428.1 351.4M430.5 343.7L547.4 22.5M549.6 16.4L652.4 -266.0M656.0 -274.4L746.9 -524.2M372.7 536.7L466.4 279.2M468.8 272.1L580.9 -36.0M584.6 -45.1L660.5 -253.8M661.1 -256.6L756.1 -517.5M384.3 540.9L487.0 258.7M487.7 258.0L579.5 6.0M582.3 -3.1L688.8 -295.7M691.7 -304.0L799.1 -599.3M393.5 544.2L473.9 323.2M474.6 321.1L529.4 170.5M529.5 169.1L620.6 -81.2M622.7 -86.3L726.8 -372.6M406.1 548.8L501.3 287.1M504.6 278.8L562.5 119.7M562.3 119.4L630.9 -69.1M631.6 -71.1L764.2 -435.4M415.3 552.1L543.9 198.7M546.7 190.8L605.5 29.2M606.3 26.9L684.8 -188.6M425.5 555.9L518.6 300.1M519.1 299.1L615.2 34.9M616.5 32.5L723.3 -261.1M726.4 -270.2L835.6 -570.1M436.8 560.0L516.5 341.0M517.1 340.3L620.8 55.1M622.0 50.8L746.7 -291.8M451.5 565.3L522.5 370.1M524.8 364.2L611.8 125.0M612.3 122.9L719.2 -170.9M722.6 -179.5L809.6 -418.4M465.5 570.4L519.9 421.1M519.8 420.6L615.0 159.2M617.2 154.2L722.5 -135.2M478.7 575.2L565.3 337.5M565.9 335.4L681.3 18.5M683.2 13.4L786.7 -270.8M491.9 580.1L609.4 257.3M610.1 254.7L725.3 -61.8M727.6 -68.1L845.7 -392.6M503.0 584.1L602.0 312.2M603.8 306.9L656.7 161.6M659.2 154.9L758.4 -117.5M759.7 -122.3L874.8 -438.4M513.9 588.0L571.8 429.1M572.6 425.8L684.0 119.7M685.4 116.1L779.7 -143.0M780.0 -143.4L848.3 -331.3M527.8 593.1L620.4 338.7M620.8 337.9L737.2 18.1M740.6 9.1L822.5 -216.0M825.3 -223.6L887.7 -395.2M536.7 596.3L589.5 451.3M591.8 444.4L672.8 222.0M674.7 218.2L784.6 -83.9M784.5 -85.1L856.6 -283.1M546.8 600.0L673.7 251.3M676.3 244.3L782.0 -46.2M784.3 -52.1L887.3 -335.1M556.6 603.6L628.1 407.1M628.6 404.9L742.0 93.3M743.7 90.2L831.6 -151.4M834.0 -159.5L937.7 -444.4M570.3 608.6L645.8 401.1M646.8 399.4L703.4 244.1M791.4 1.6L851.4 -163.5M854.0 -169.5L912.1 -329.0M579.0 611.7L686.4 316.9M688.4 310.6L748.7 144.9M749.9 141.6L823.4 -60.4M823.6 -61.3L898.6 -267.5M591.3 616.2L663.4 418.0M663.5 416.6L758.0 157.2M846.5 -84.5L935.8 -329.8M599.5 619.2L699.2 345.3M702.5 336.6L794.8 83.0M798.3 74.0L899.8 -204.8M901.9 -210.5L987.7 -446.2M609.8 623.0L679.6 431.2M681.9 425.8L742.0 260.7M743.1 257.9L807.3 81.5M809.6 75.3L904.0 -183.9M903.8 -184.4L1029.9 -530.8M621.0 627.0L707.8 388.7M709.9 382.8L838.0 31.1M839.6 26.6L923.4 -203.6M923.1 -204.1L1038.0 -519.9M633.9 631.7L731.6 363.3M732.6 360.6L854.0 27.0M856.0 22.1L933.9 -192.0M935.8 -197.0L988.8 -342.5M645.4 635.9L774.1 282.3M776.9 274.4L896.9 -55.2M899.0 -61.1L963.2 -237.6M658.0 640.5L736.0 426.3M737.1 422.0L791.9 271.5M794.6 265.3L899.8 -23.7M902.9 -32.2L970.6 -218.4M672.0 645.6L750.8 429.0M753.7 420.7L845.2 169.3M848.6 161.0L905.2 5.4M907.1 0.4L1035.8 -353.1M685.6 650.5L778.7 394.7M781.6 386.3L834.7 240.5M837.1 234.3L936.8 -39.7M938.5 -43.5L1067.7 -398.5M694.2 653.7L789.2 392.6M791.8 386.4L867.0 179.9M867.4 178.1L990.1 -159.1M990.9 -160.9L1081.0 -408.3M704.6 657.5L806.1 378.6M806.9 377.7L914.3 82.6M917.2 74.6L1035.3 -249.7M716.7 661.9L768.0 520.8M768.7 518.0L828.2 354.6M828.6 354.4L906.1 141.4M909.0 132.6L1032.5 -206.8M725.6 665.1L829.0 380.9M831.1 374.3L954.9 34.1M955.5 33.3L1022.2 -150.1M1022.5 -151.9L1149.0 -499.6M737.5 669.4L873.9 294.7M876.4 287.7L972.8 23.0M974.8 17.2L1067.8 -238.2M745.9 672.5L830.4 440.2M831.1 437.4L888.0 280.9M890.2 275.8L945.0 125.2M946.2 120.8L1059.3 -190.0M758.2 677.0L878.0 347.9M879.7 344.6L938.9 182.0M940.0 179.2L1026.8 -59.1M1026.8 -60.0L1148.0 -393.1M771.8 681.9L906.9 310.6M910.0 301.7L1035.3 -42.5M1037.6 -47.8L1170.9 -414.1M785.5 686.9L876.8 436.0M879.9 426.6L987.8 130.2M988.8 128.2L1075.2 -109.1M1078.1 -116.7L1156.8 -333.1M799.1 691.8L862.0 519.0M862.4 518.6L938.7 308.9M939.7 306.4L1058.4 -19.8M1059.1 -21.3L1112.1 -166.8M810.9 696.1L870.2 533.1M872.3 527.5L958.2 291.5M958.2 290.2L1056.1 21.3M1057.1 20.1L1136.0 -196.8M822.3 700.3L954.1 338.1M956.5 331.0L1065.6 31.2M1066.0 29.4L1130.8 -148.7M831.9 703.8L927.7 440.5M930.2 434.2L1057.2 85.4M1060.0 76.7L1127.5 -108.7M1128.4 -111.4L1247.3 -438.1M845.3 708.7L948.6 424.7M950.9 419.0L1053.7 136.6M1054.8 132.8L1186.6 -229.4M858.1 713.3L927.5 522.6M929.3 517.0L1064.2 146.4M1064.6 145.0L1170.1 -144.8M869.7 717.6L992.5 380.1M994.4 375.1L1097.2 92.8M1099.0 87.2L1232.1 -278.5M878.2 720.6L968.6 472.2M969.5 470.3L1103.4 102.4M1103.6 101.5L1202.2 -169.4M892.6 725.9L962.7 533.2M964.1 529.5L1059.3 268.1M1062.0 259.7L1149.2 20.3M1152.1 11.9L1219.6 -173.5M904.2 730.1L988.9 497.5M989.4 495.2L1061.7 296.5M1063.3 293.6L1175.6 -15.1M1178.7 -24.0L1313.9 -395.4M915.0 734.0L1032.9 410.3M1033.1 410.1L1113.5 189.1M1116.1 181.7L1236.9 -150.3M928.3 738.9L984.5 584.3M985.9 581.0L1082.2 316.4M1085.0 309.4L1182.0 42.6M1182.0 41.8L1270.3 -200.9M937.8 742.3L1054.1 422.6M1056.3 415.4L1192.4 41.5M1195.1 35.6L1275.0 -183.9M951.9 747.5L1060.8 448.2M1062.3 444.4L1195.6 78.4M1198.5 69.7L1313.3 -245.6M964.8 752.2L1045.5 530.5M1048.5 523.0L1125.8 310.6M1127.9 305.1L1240.3 -3.6M1242.1 -8.9L1353.3 -314.5M973.8 755.4L1050.5 544.9M1052.8 539.2L1133.2 318.3M1133.9 316.4L1190.8 160.2M1191.9 157.1L1249.7 -1.5M1251.5 -7.9L1332.8 -231.3M987.0 760.2L1084.0 493.7M1086.0 487.5L1191.7 197.3M1195.1 188.0L1283.1 -53.9M1283.9 -56.5L1384.2 -332.1M1000.2 765.0L1130.8 406.3M1133.3 398.8L1228.7 136.6M1232.1 128.8L1300.8 -59.9M1301.2 -62.0L1390.0 -306.0M1011.7 769.2L1136.8 425.4M1137.7 424.1L1214.6 212.9M1274.5 48.4L1333.7 -114.2M1022.1 773.0L1145.5 434.1M1147.0 430.2L1206.1 267.8M1207.7 263.3L1280.2 64.4M1281.4 61.1L1335.2 -86.6M1032.7 776.9L1115.2 550.3M1116.8 546.1L1247.0 188.4M1247.3 187.2L1379.8 -176.9M1043.4 780.8L1150.7 485.9M1152.7 481.8L1210.9 321.9M1213.6 313.1L1290.4 101.9M1293.5 93.5L1348.2 -56.9M1056.4 785.5L1182.9 438.1M1185.7 431.1L1259.2 229.2M1262.4 220.0L1327.5 41.1M1330.3 33.7L1392.6 -137.5M1070.3 790.6L1192.0 456.3M1193.2 453.7L1304.6 147.6M1306.9 140.6L1398.3 -110.7M1081.4 794.6L1167.8 557.2M1171.2 548.3L1304.4 182.4M1307.3 175.0L1419.4 -133.1M1090.2 797.8L1216.8 449.8M1216.8 448.4L1333.9 126.6M1334.7 125.4L1420.9 -111.4M1101.7 802.0L1212.4 498.0M1213.3 494.3L1273.6 328.4M1276.1 322.9L1336.2 157.6M1339.0 149.4L1461.3 -186.7M1112.4 805.9L1164.9 661.6M1165.4 659.4L1222.5 502.5M1225.3 496.0L1307.9 268.9M1307.8 268.4L1400.3 14.1M1400.8 12.9L1494.7 -245.3M1121.6 809.2L1216.8 547.6M1218.9 541.0L1306.3 300.9M1401.5 39.6L1504.9 -244.3M1133.1 813.4L1192.6 649.8M1195.1 643.0L1281.0 407.2M1281.0 405.6L1370.6 159.4M1370.9 158.6L1501.4 -200.0M1141.5 816.5L1195.1 669.3M1195.4 667.9L1308.0 358.6M1308.3 357.5L1392.7 125.7M1395.2 118.8L1508.3 -192.0M1155.5 821.6L1239.8 589.9M1240.2 588.6L1295.2 437.4M1295.9 434.8L1411.5 117.4M1412.2 116.6L1534.2 -218.6M1166.7 825.6L1289.6 487.8M1290.9 483.6L1348.9 324.2M1352.2 314.8L1480.6 -37.9M1176.4 829.2L1271.6 567.6M1274.5 560.4L1402.5 208.8M1403.4 205.4L1490.9 -34.9M1185.5 832.5L1256.8 636.4M1258.0 633.6L1357.9 359.2M1359.8 354.1L1432.8 153.4M1433.1 151.1L1553.4 -179.3M1199.5 837.6L1313.1 525.3M1313.6 523.9L1443.5 167.0M1446.6 158.2L1519.4 -42.0M1210.0 841.4L1340.0 484.4M1343.4 475.2L1456.8 163.8M1457.4 162.6L1542.9 -72.3M1222.0 845.8L1341.9 516.4M1345.2 507.8L1458.5 196.5M1459.4 193.5L1521.2 23.7M1522.5 20.1L1601.7 -197.6M1233.3 849.9L1308.2 644.1M1417.3 344.8L1507.6 96.7M1507.5 96.5L1617.6 -205.9M1242.2 853.1L1311.9 661.6M1314.3 654.4L1446.1 292.3M1540.3 33.9L1608.9 -154.7M1253.9 857.4L1377.4 518.2M1377.3 517.1L1449.0 320.0M1451.6 314.2L1510.3 152.8M1511.5 148.0L1569.7 -11.9M1264.2 861.1L1368.6 574.3M1370.8 569.3L1441.9 373.8M1445.1 365.0L1524.7 146.1M1526.6 140.5L1662.1 -231.7M1387.7 557.4L1481.6 299.5M1484.0 293.3L1601.5 -29.5M1287.9 869.7L1339.4 728.2M1341.6 722.0L1409.8 534.6M1410.8 532.0L1465.3 382.3M1468.6 373.6L1533.8 194.4M1536.9 185.3L1621.0 -45.8M1300.9 874.5L1436.9 501.0M1438.3 496.4L1496.6 336.3M1499.4 328.7L1556.7 171.2M1559.3 164.9L1660.2 -112.4M1314.9 879.6L1417.0 599.2M1419.3 593.2L1487.8 405.1M1488.8 402.6L1594.6 111.6M1328.7 884.6L1411.9 656.0M1414.5 648.3L1540.6 301.8M1339.2 888.4L1441.5 607.3M1443.1 601.8L1576.8 234.3M1577.4 232.7L1710.7 -133.6M1348.9 892.0L1449.8 614.9M1452.5 606.3L1525.8 404.9M1528.5 397.8L1623.5 136.7M1625.2 132.2L1747.5 -203.7"/></g><g stroke="#ffffff" stroke-width="1.8" fill="none" opacity="1" clip-path="url(#manh)"><path d="M179.1 -492.1L231.6 -472.9M237.9 -470.9L261.2 -462.4M265.9 -460.7L311.4 -444.1M314.6 -442.9L339.6 -433.8M346.0 -431.5L367.2 -423.8M374.4 -421.2L417.6 -405.5M424.8 -403.0L479.4 -383.1M481.5 -382.3L517.4 -369.2M523.5 -366.9L565.0 -351.8M571.1 -349.3L624.2 -329.9M626.8 -329.1L650.5 -320.5M652.4 -320.0L682.3 -309.1M691.3 -305.6L729.9 -291.6M734.9 -290.0L759.2 -281.2M762.8 -279.8L783.9 -272.1M792.5 -268.9L828.2 -255.9M832.5 -254.6L872.0 -240.3M880.0 -237.1L922.6 -221.6M926.9 -220.3L957.9 -209.0M962.1 -207.0L989.4 -197.0M997.8 -194.3L1050.4 -175.2M1056.5 -172.8L1095.6 -158.5M1102.1 -156.3L1147.1 -140.0M1152.5 -137.7L1180.8 -127.5M1185.3 -125.8L1210.4 -116.7M1212.8 -116.0L1236.6 -107.4M1245.1 -104.1L1287.9 -88.5M1295.1 -85.9L1318.7 -77.3M1327.9 -74.3L1383.8 -53.9M1391.3 -51.0L1423.9 -39.1M1425.0 -38.8L1455.8 -27.6M1463.2 -24.7L1515.5 -5.6M1522.8 -3.2L1572.4 14.8M1579.2 17.4L1614.8 30.4M1616.1 31.0L1656.9 45.8M208.3 -474.7L251.7 -458.9M260.2 -456.2L287.1 -446.4M289.4 -445.3L342.6 -425.9M345.2 -424.9L398.2 -405.6M403.5 -403.8L423.9 -396.4M428.6 -394.9L462.0 -382.7M471.3 -379.1L522.4 -360.5M530.4 -357.6L564.6 -345.2M570.5 -343.2L592.7 -335.1M601.1 -331.8L650.5 -313.8M656.5 -311.6L711.9 -291.5M712.5 -291.6L760.8 -274.0M767.4 -271.6L815.5 -254.2M822.9 -251.0L874.8 -232.1M878.0 -231.4L926.1 -213.9M932.2 -211.3L981.3 -193.4M984.3 -192.2L1017.6 -180.1M1023.5 -178.1L1054.3 -166.9M1060.2 -164.9L1080.9 -157.3M1088.8 -154.5L1127.6 -140.3M1137.0 -137.1L1156.2 -130.1M1206.8 -111.6L1237.4 -100.4M1239.9 -99.3L1263.1 -90.9M1271.5 -87.8L1292.0 -80.3M1298.6 -78.2L1322.1 -69.6M1329.2 -67.2L1373.1 -51.2M1377.9 -49.1L1407.3 -38.4M1411.6 -36.9L1457.6 -20.2M1460.7 -18.9L1515.9 1.2M1516.5 1.5L1548.5 13.1M1554.8 15.2L1596.5 30.3M1605.7 33.7L1634.5 44.2M1641.7 46.9L1697.7 67.2M174.3 -478.9L206.3 -467.3M211.5 -465.5L258.9 -448.3M260.3 -447.8L306.1 -431.2M313.6 -428.3L359.4 -411.6M368.7 -408.1L411.6 -392.4M415.9 -391.1L457.6 -376.0M465.6 -372.9L517.9 -353.8M526.0 -351.1L545.6 -344.0M549.0 -342.4L596.7 -325.0M606.1 -321.8L639.0 -309.8M644.2 -308.3L674.1 -297.4M674.6 -296.8L720.3 -280.2M728.3 -277.5L780.6 -258.5M785.3 -256.7L815.2 -245.9M823.2 -243.1L850.4 -233.2M854.5 -231.2L888.2 -219.0M913.4 -210.1L941.9 -199.8M946.6 -198.1L1000.9 -178.4M1001.6 -177.8L1030.1 -167.4M1034.0 -166.1L1055.7 -158.3M1062.5 -155.9L1090.4 -145.7M1095.3 -143.9L1142.0 -126.8M1142.0 -126.6L1194.8 -107.4M1202.8 -104.8L1248.1 -88.3M1249.6 -87.7L1306.0 -67.2M1308.4 -66.5L1350.2 -51.3M1358.5 -47.9L1378.4 -40.6M1381.4 -39.9L1429.3 -22.5M1432.1 -21.4L1460.9 -10.9M1463.4 -10.0L1517.9 9.8M1520.0 11.0L1547.0 20.9M1555.8 23.5L1592.5 36.9M1593.5 37.4L1642.1 55.0M1649.9 58.1L1698.1 75.6M170.8 -469.1L211.4 -454.4M215.0 -453.0L257.7 -437.5M264.7 -434.7L293.4 -424.2M295.4 -424.0L339.5 -407.9M340.9 -407.3L397.1 -386.8M404.7 -384.1L453.4 -366.4M459.1 -364.2L493.1 -351.8M501.6 -348.6L547.2 -332.0M553.2 -329.9L602.7 -311.9M603.0 -311.7L633.8 -300.5M635.9 -299.7L662.2 -290.1M670.8 -287.2L691.6 -279.7M719.6 -269.2L740.8 -261.5M746.0 -259.6L770.5 -250.7M777.0 -248.4L798.0 -240.8M803.6 -238.5L852.2 -220.8M860.1 -218.4L888.5 -208.0M894.9 -205.5L938.3 -189.7M944.2 -187.3L965.0 -179.7M1012.0 -162.6L1047.2 -149.8M1050.5 -148.9L1092.7 -133.6M1100.0 -130.9L1124.9 -121.8M1129.0 -119.9L1148.0 -113.0M1175.6 -103.2L1216.8 -88.3M1225.4 -85.4L1270.5 -68.9M1305.4 -56.2L1340.2 -43.6M1344.1 -42.2L1386.6 -26.7M1430.2 -10.9L1473.8 5.0M1524.7 23.8L1562.5 37.5M1563.2 37.6L1589.8 47.3M1597.7 50.5L1645.2 67.8M1647.9 68.9L1680.6 80.8M220.3 -440.9L259.6 -426.6M260.2 -425.9L305.2 -409.5M313.3 -407.2L363.4 -388.9M365.6 -387.9L395.9 -376.8M397.5 -376.4L442.3 -360.1M448.1 -357.5L473.1 -348.4M524.7 -330.2L555.2 -319.1M557.6 -318.1L583.4 -308.7M584.1 -308.5L613.8 -297.6M640.0 -288.1L689.2 -270.2M694.1 -268.1L736.9 -252.5M738.5 -252.3L763.2 -243.3M767.2 -241.9L795.3 -231.6M795.5 -231.7L824.0 -221.3M827.7 -220.0L874.5 -203.0M876.5 -201.7L899.5 -193.3M907.1 -191.1L938.0 -179.8M947.0 -176.5L981.9 -163.8M987.1 -161.6L1014.0 -151.8M1017.8 -150.3L1046.9 -139.7M1077.0 -128.8L1116.9 -114.3M1125.9 -111.2L1146.9 -103.5M1147.7 -103.2L1196.1 -85.6M1202.3 -83.1L1242.7 -68.4M1248.0 -66.9L1266.8 -60.0M1268.1 -59.3L1316.7 -41.7M1378.5 -19.1L1419.6 -4.1M1423.9 -2.4L1472.7 15.4M1481.2 18.4L1507.0 27.8M1515.7 31.0L1564.4 48.7M1571.8 51.4L1591.6 58.6M1592.6 58.5L1628.6 71.6M1634.3 73.7L1676.0 88.9M165.0 -453.4L220.7 -433.2M282.2 -410.3L328.0 -393.6M333.1 -391.7L367.5 -379.2M373.7 -377.2L423.5 -359.0M424.1 -359.0L476.3 -340.0M484.6 -336.7L527.7 -321.0M535.2 -318.6L576.3 -303.6M580.4 -302.2L605.2 -293.2M613.2 -289.9L662.4 -272.0M666.0 -270.8L690.2 -262.0M692.8 -260.8L719.5 -251.1M724.3 -249.4L748.9 -240.4M755.4 -238.5L797.0 -223.4M801.8 -221.5L839.9 -207.6M842.1 -206.4L885.8 -190.5M890.5 -188.8L937.6 -171.7M940.4 -171.2L993.4 -151.9M1024.5 -140.3L1065.9 -125.3M1067.5 -124.7L1096.4 -114.2M1143.6 -97.3L1195.6 -78.4M1204.5 -74.8L1235.4 -63.6M1239.1 -62.5L1283.3 -46.5M1381.7 -10.6L1403.0 -2.8M1406.7 -1.2L1450.1 14.6M1452.1 15.5L1477.2 24.7M1484.6 27.0L1505.5 34.6M1506.3 34.8L1557.5 53.4M1559.4 54.7L1595.2 67.7M1596.5 67.6L1631.8 80.4M1639.0 83.3L1679.8 98.1M162.6 -446.7L211.6 -428.9M219.8 -425.7L263.1 -410.0M266.6 -408.6L298.7 -397.0M299.9 -396.9L332.8 -384.9M335.9 -383.2L365.6 -372.4M372.2 -370.2L409.1 -356.8M451.3 -341.7L486.8 -328.7M492.1 -326.8L514.0 -318.8M517.9 -317.3L546.7 -306.9M554.1 -304.1L577.1 -295.7M579.1 -295.1L605.5 -285.5M610.6 -283.5L659.6 -265.7M664.8 -264.1L717.9 -244.8M725.8 -241.5L759.0 -229.4M761.0 -228.5L784.6 -219.9M842.9 -199.0L886.1 -183.3M889.8 -182.0L927.8 -168.2M936.1 -164.9L978.7 -149.4M979.8 -148.8L1014.0 -136.4M1019.9 -134.5L1056.7 -121.1M1057.5 -120.7L1102.7 -104.3M1103.0 -104.2L1142.1 -90.0M1169.3 -80.1L1195.0 -70.7M1198.8 -69.5L1220.6 -61.6M1221.2 -61.3L1273.8 -42.2M1282.9 -38.8L1337.9 -18.8M1343.2 -16.6L1374.9 -5.0M1384.1 -1.7L1434.9 16.8M1442.5 19.2L1468.4 28.6M1471.5 29.5L1522.0 47.9M1523.3 49.0L1571.6 66.6M1577.6 68.2L1606.8 78.8M1612.1 80.7L1646.2 93.1M159.9 -439.2L186.2 -429.6M220.4 -417.2L246.0 -407.9M248.0 -407.1L294.0 -390.3M303.0 -387.3L339.0 -374.2M341.1 -373.2L385.6 -356.9M393.8 -354.0L442.0 -336.4M444.8 -335.3L476.1 -323.9M478.5 -323.0L503.9 -313.7M504.5 -313.9L552.2 -296.5M557.8 -294.3L580.8 -285.9M616.2 -272.8L635.9 -265.6M640.0 -264.1L685.3 -247.6M693.6 -244.6L722.2 -234.2M727.9 -232.2L778.5 -213.7M782.1 -212.9L836.1 -193.2M844.1 -190.4L884.1 -175.8M928.7 -159.3L970.0 -144.3M971.6 -143.8L1021.6 -125.6M1022.5 -125.1L1072.0 -107.0M1073.8 -106.5L1099.8 -97.0M1105.1 -95.0L1152.8 -77.6M1159.7 -75.5L1214.2 -55.7M1218.5 -53.6L1237.9 -46.6M1246.6 -43.6L1297.5 -25.1M1303.6 -22.9L1327.9 -14.1M1334.5 -11.4L1388.0 8.0M1392.3 9.1L1437.6 25.5M1438.5 26.0L1458.2 33.2M1462.0 34.7L1508.8 51.7M1513.2 53.3L1544.9 64.9M1550.1 67.0L1585.4 79.8M1591.7 81.8L1621.2 92.5M1629.9 95.7L1674.8 112.1M157.5 -432.8L200.5 -417.2M203.7 -415.5L235.3 -404.0M236.4 -403.5L283.9 -386.3M287.3 -385.3L309.2 -377.4M312.4 -376.1L359.0 -359.1M366.6 -356.6L408.5 -341.3M414.9 -338.8L438.4 -330.2M444.9 -327.7L498.5 -308.1M500.1 -307.8L545.9 -291.1M549.6 -290.0L582.5 -278.0M587.9 -275.6L643.1 -255.5M644.1 -255.2L682.8 -241.1M690.1 -238.8L718.3 -228.5M747.3 -218.0L798.8 -199.2M802.6 -198.0L842.6 -183.5M851.6 -180.1L901.6 -162.0M906.1 -159.9L962.0 -139.6M968.9 -136.9L994.4 -127.6M1051.6 -107.2L1093.5 -92.0M1101.9 -88.6L1150.6 -70.9M1155.0 -69.5L1182.7 -59.5M1182.8 -59.6L1225.0 -44.2M1228.9 -42.5L1276.3 -25.2M1279.6 -24.1L1310.4 -12.9M1313.1 -12.0L1342.3 -1.4M1348.9 1.2L1398.4 19.2M1457.0 40.7L1479.6 48.9M1486.1 51.1L1540.0 70.7M1545.2 72.6L1597.3 91.5M1598.5 91.6L1630.3 103.2M1630.3 103.4L1678.1 120.8M154.5 -424.6L179.2 -415.6M186.8 -413.2L211.3 -404.3M220.0 -400.9L249.3 -390.3M251.1 -389.3L282.5 -377.9M287.4 -376.5L319.5 -364.8M348.9 -354.1L405.2 -333.6M409.6 -331.7L454.2 -315.5M463.4 -312.4L506.5 -296.8M506.6 -296.5L557.7 -277.9M563.3 -276.2L592.1 -265.7M650.2 -244.6L671.4 -236.9M672.5 -236.0L695.2 -227.7M695.9 -227.9L734.9 -213.7M742.8 -210.8L790.8 -193.3M792.0 -192.6L813.3 -184.8M821.6 -182.3L860.3 -168.2M862.8 -167.0L895.4 -155.1M898.0 -154.3L938.8 -139.5M939.9 -138.7L980.5 -124.0M986.7 -121.9L1021.4 -109.2M1078.0 -88.5L1115.9 -74.7M1119.2 -73.9L1157.8 -59.8M1158.0 -59.5L1196.3 -45.6M1203.0 -43.0L1244.3 -28.0M1246.7 -27.0L1281.9 -14.1M1287.4 -12.5L1339.4 6.4M1343.8 8.2L1376.3 20.0M1378.9 20.7L1430.6 39.5M1434.5 41.1L1456.7 49.2M1463.2 51.3L1493.9 62.4M1500.9 65.1L1524.6 73.7M1527.7 75.1L1566.1 89.1M1568.7 89.6L1624.7 110.0M1628.5 111.9L1668.7 126.6M151.0 -414.8L206.6 -394.5M212.7 -392.5L258.6 -375.8M262.3 -374.0L309.4 -356.9M315.8 -354.5L363.0 -337.3M369.6 -335.2L399.2 -324.4M402.7 -323.0L439.0 -309.8M446.9 -306.7L468.5 -298.8M476.2 -296.5L520.4 -280.4M562.0 -264.8L616.4 -245.0M623.4 -243.0L658.9 -230.1M663.4 -228.4L693.2 -217.5M745.4 -198.1L801.0 -177.8M807.4 -175.7L854.6 -158.5M862.4 -155.8L910.0 -138.5M916.7 -136.0L938.8 -127.9M943.0 -126.4L976.3 -114.3M978.9 -113.6L1018.3 -99.3M1058.0 -84.8L1110.0 -65.9M1114.0 -64.0L1154.5 -49.2M1162.9 -46.5L1218.8 -26.2M1225.4 -23.4L1279.6 -3.7M1284.2 -2.1L1325.3 12.8M1327.3 13.2L1363.8 26.5M1369.8 29.2L1405.7 42.3M1410.9 44.2L1452.9 59.5M1457.5 60.6L1479.6 68.6M1481.3 69.6L1532.5 88.2M1534.8 88.9L1588.7 108.6M1590.0 109.1L1613.6 117.7M1621.2 120.2L1657.0 133.3M148.9 -409.1L200.2 -390.4M202.5 -389.1L251.1 -371.5M258.3 -368.8L284.8 -359.2M287.3 -358.5L340.5 -339.2M341.3 -338.5L379.3 -324.7M385.3 -322.8L419.7 -310.3M421.6 -309.9L465.1 -294.0M470.6 -291.8L508.0 -278.2M585.3 -249.8L617.2 -238.2M622.8 -236.4L658.5 -223.5M666.6 -220.4L706.3 -205.9M706.5 -205.8L757.7 -187.1M763.3 -185.3L787.6 -176.5M791.4 -175.0L810.4 -168.1M816.0 -165.9L857.5 -150.8M923.3 -127.2L952.0 -116.8M956.7 -114.6L977.2 -107.1M979.4 -106.5L1006.4 -96.7M1012.2 -94.5L1060.8 -76.9M1100.0 -62.4L1128.8 -51.9M1136.4 -49.5L1161.3 -40.4M1169.2 -37.6L1217.7 -19.9M1221.3 -18.5L1275.6 1.3M1276.8 1.6L1311.9 14.4M1397.6 45.6L1439.1 60.7M1440.4 61.2L1479.3 75.4M1481.7 76.2L1521.2 90.6M1522.2 91.0L1561.9 105.5M1568.0 107.4L1618.1 125.6M1618.3 125.7L1664.0 142.3M145.5 -399.8L178.0 -387.9M178.0 -387.9L207.8 -377.1M208.8 -377.0L253.7 -360.7M262.8 -356.8L299.0 -343.6M354.9 -323.6L387.7 -311.7M393.3 -309.8L429.6 -296.6M433.5 -295.0L457.7 -286.1M458.4 -285.8L488.2 -275.0M491.4 -274.1L533.2 -258.9M539.4 -256.3L558.9 -249.2M562.9 -247.8L613.2 -229.6M616.2 -228.2L653.1 -214.8M657.9 -213.0L692.2 -200.5M699.2 -198.5L739.8 -183.8M744.5 -181.5L773.1 -171.1M774.9 -170.8L800.8 -161.3M801.3 -161.0L843.2 -145.7M843.5 -145.7L881.8 -131.7M886.1 -129.9L926.9 -115.0M973.8 -98.4L1016.1 -83.0M1096.6 -53.3L1152.4 -33.0M1159.4 -30.5L1189.1 -19.7M1191.0 -19.2L1226.3 -6.4M1228.2 -5.4L1269.6 9.6M1380.8 49.7L1434.1 69.1M1437.7 70.3L1483.3 86.9M1527.7 103.4L1573.7 120.2M1581.4 122.9L1623.7 138.3M143.0 -392.9L193.1 -374.6M198.7 -372.4L240.9 -357.0M241.7 -356.7L262.1 -349.3M267.3 -347.4L304.0 -334.0M309.4 -332.1L348.4 -317.9M391.8 -302.0L437.3 -285.4M443.1 -283.6L491.9 -265.9M495.9 -264.2L515.9 -256.9M517.2 -256.6L555.4 -242.6M561.1 -240.2L612.9 -221.4M615.3 -220.9L666.4 -202.3M667.1 -201.6L715.5 -184.0M873.5 -126.8L904.8 -115.4M935.0 -104.3L987.8 -85.0M1020.8 -73.4L1049.6 -62.9M1057.5 -60.0L1107.9 -41.7M1115.5 -38.9L1142.7 -29.0M1142.6 -28.5L1165.9 -20.0M1172.9 -17.9L1193.6 -10.4M1198.3 -8.3L1230.4 3.4M1239.0 6.3L1292.5 25.8M1297.5 27.4L1318.3 35.0M1319.7 35.8L1358.8 50.0M1365.8 52.6L1398.0 64.3M1402.7 66.0L1440.5 79.8M1446.6 82.1L1500.0 101.6M1503.9 102.9L1540.7 116.3M1546.2 118.2L1576.1 129.1M1579.1 129.9L1600.7 137.8M1600.9 138.0L1633.1 149.7M140.5 -386.1L191.7 -367.5M199.7 -364.8L242.5 -349.2M245.2 -348.1L299.5 -328.4M305.2 -326.0L353.0 -308.6M355.3 -308.0L379.4 -299.2M381.0 -298.5L424.8 -282.5M426.8 -282.0L475.4 -264.3M483.0 -261.6L521.8 -247.5M530.7 -244.0L583.5 -224.8M585.6 -224.0L606.6 -216.4M611.1 -214.6L639.8 -204.2M641.7 -203.7L681.9 -189.1M689.7 -185.9L729.9 -171.3M731.0 -171.4L754.9 -162.7M758.6 -160.9L779.9 -153.1M782.9 -152.2L825.2 -136.8M825.9 -136.6L846.4 -129.2M850.8 -127.7L873.9 -119.3M879.2 -116.9L914.4 -104.1M923.6 -100.8L970.9 -83.6M978.4 -81.2L1011.1 -69.3M1012.3 -69.0L1059.3 -51.9M1061.2 -50.7L1102.3 -35.7M1107.0 -34.2L1159.0 -15.3M1167.4 -12.5L1210.6 3.2M1211.1 3.4L1266.0 23.4M1317.1 42.1L1364.6 59.4M1367.9 60.8L1404.3 74.1M1411.1 76.1L1452.3 91.1M1459.8 93.9L1495.0 106.7M1503.7 109.9L1550.2 126.8M1557.3 129.9L1577.9 137.4M1607.2 147.8L1661.6 167.5M138.1 -379.4L170.0 -367.8M172.6 -367.0L209.4 -353.5M216.9 -350.9L240.2 -342.4M246.2 -340.2L298.9 -321.0M301.3 -320.0L326.4 -310.8M427.2 -274.2L480.1 -254.9M485.3 -253.1L504.5 -246.1M510.1 -244.4L541.6 -232.9M542.1 -232.6L579.0 -219.1M609.1 -208.0L636.5 -198.0M645.7 -194.8L669.8 -186.0M676.2 -183.9L721.1 -167.5M727.2 -165.1L754.7 -155.0M756.6 -154.1L810.8 -134.3M811.4 -134.3L865.3 -114.7M867.4 -113.7L921.5 -94.0M922.7 -93.9L962.2 -79.5M970.6 -76.5L996.9 -67.0M998.6 -66.0L1030.1 -54.6M1030.6 -54.6L1083.2 -35.4M1083.3 -35.2L1104.8 -27.4M1109.8 -26.0L1134.5 -17.0M1138.2 -15.4L1157.2 -8.5M1161.2 -6.8L1181.5 0.5M1189.0 2.9L1235.4 19.7M1236.0 20.0L1285.7 38.1M1291.9 40.6L1336.9 57.0M1345.3 59.9L1388.5 75.6M1393.1 77.3L1445.9 96.5M1446.6 96.7L1501.6 116.7M1501.7 116.8L1521.9 124.1M1576.6 144.2L1610.0 156.4M1616.8 158.8L1644.2 168.7M175.4 -355.2L209.5 -342.8M217.1 -340.2L270.2 -320.9M275.9 -318.4L295.2 -311.4M302.7 -308.8L357.8 -288.7M362.4 -287.0L412.6 -268.7M418.8 -266.6L451.1 -254.9M520.5 -229.4L553.0 -217.5M561.1 -214.9L597.1 -201.8M600.8 -200.2L642.4 -185.1M711.2 -160.5L736.8 -151.2M745.9 -147.7L772.6 -137.9M775.5 -137.1L819.1 -121.2M827.8 -117.8L852.7 -108.8M862.0 -105.1L890.4 -94.8M897.6 -92.3L937.9 -77.6M938.2 -77.6L989.2 -59.0M995.0 -57.1L1033.7 -43.0M1035.5 -41.9L1085.7 -23.7M1087.7 -23.1L1136.5 -5.3M1138.5 -4.8L1165.3 4.9M1171.9 7.7L1196.7 16.7M1198.9 17.2L1228.2 27.8M1231.8 28.9L1261.7 39.8M1261.9 40.4L1305.7 56.4M1313.0 58.8L1349.0 71.9M1357.4 75.0L1381.1 83.7M1383.6 84.5L1416.5 96.4M1423.1 99.0L1471.4 116.6M1477.2 118.5L1510.0 130.4M1564.7 150.6L1602.5 164.3M1610.7 167.2L1656.7 183.9M131.7 -361.7L159.3 -351.6M162.9 -350.7L209.1 -333.9M212.6 -332.7L234.4 -324.8M241.2 -322.4L275.6 -309.8M280.3 -307.7L330.9 -289.2M335.1 -287.9L380.6 -271.3M387.6 -268.7L431.3 -252.8M431.8 -252.5L474.4 -237.0M482.0 -234.3L506.5 -225.3M506.8 -225.7L526.6 -218.5M535.8 -214.7L582.2 -197.8M583.0 -197.8L638.6 -177.6M647.2 -174.3L677.6 -163.3M678.2 -163.1L719.1 -148.3M723.2 -146.5L764.1 -131.7M767.6 -130.7L798.8 -119.4M803.1 -117.9L824.0 -110.3M826.1 -109.4L851.5 -100.2M858.4 -97.7L877.6 -90.7M878.7 -90.4L910.5 -78.8M915.3 -76.8L941.4 -67.3M1093.2 -12.0L1133.6 2.7M1139.6 5.1L1175.4 18.1M1176.4 18.2L1199.7 26.6M1200.2 27.2L1232.5 39.0M1240.2 41.3L1295.7 61.5M1298.0 62.4L1324.9 72.2M1330.3 74.2L1371.4 89.2M1372.0 89.4L1407.9 102.5M1413.6 104.8L1434.5 112.4M1437.5 113.5L1490.8 132.9M1493.0 133.6L1535.7 149.2M1593.2 169.8L1632.5 184.2M129.2 -355.0L152.5 -346.5M161.4 -343.7L212.8 -325.0M215.9 -323.6L258.8 -308.0M263.0 -306.4L286.0 -298.1M403.5 -255.2L456.7 -235.9M465.8 -232.4L496.9 -221.1M504.7 -218.2L547.4 -202.7M552.5 -201.3L583.6 -190.0M590.3 -187.5L623.9 -175.2M629.3 -172.9L670.0 -158.1M674.7 -156.8L704.7 -145.9M712.0 -142.7L752.1 -128.1M761.0 -125.0L786.5 -115.8M794.0 -113.3L817.1 -104.9M924.1 -65.9L961.0 -52.4M988.2 -42.6L1041.6 -23.2M1049.0 -20.3L1104.5 -0.1M1112.6 2.6L1142.3 13.4M1142.7 13.8L1178.1 26.7M1185.1 29.3L1212.9 39.5M1214.6 40.2L1234.6 47.5M1237.9 48.2L1257.9 55.5M1258.7 56.2L1313.6 76.1M1321.0 78.9L1358.1 92.3M1358.9 92.6L1395.1 105.8M1401.2 107.8L1446.6 124.3M1451.4 125.9L1479.4 136.1M1486.6 139.0L1514.3 149.1M1523.7 152.6L1574.5 171.1M1577.5 171.8L1620.7 187.6M125.5 -344.8L167.9 -329.3M170.8 -328.4L225.5 -308.4M226.4 -308.1L264.6 -294.2M269.6 -292.4L321.2 -273.6M321.8 -273.4L372.2 -255.0M379.2 -252.3L404.6 -243.1M410.6 -240.9L459.8 -222.9M469.1 -219.8L502.8 -207.5M510.1 -204.9L546.5 -191.7M553.1 -189.4L577.1 -180.7M582.6 -178.7L620.1 -165.0M626.1 -162.6L670.8 -146.3M674.6 -144.7L704.8 -133.7M709.4 -132.0L736.1 -122.3M738.6 -121.5L776.8 -107.6M780.7 -106.2L822.0 -91.1M827.3 -89.2L854.8 -79.2M859.4 -77.5L903.7 -61.4M904.5 -61.5L938.2 -49.2M938.8 -49.0L990.5 -30.1M994.7 -28.5L1046.0 -9.8M1055.0 -6.3L1104.7 11.8M1114.0 14.7L1166.5 33.8M1202.0 46.7L1243.7 61.9M1245.6 62.9L1297.7 81.9M1340.3 97.4L1394.0 116.9M1400.8 119.1L1439.5 133.2M1483.4 149.3L1505.1 157.2M1505.6 157.3L1531.4 166.7M1538.3 169.4L1568.2 180.3M1569.4 180.8L1600.4 192.1M1604.8 193.3L1652.6 210.7M182.4 -315.4L204.8 -307.3M209.6 -305.3L262.3 -286.1M268.0 -284.3L315.8 -266.9M316.0 -266.6L371.6 -246.4M373.8 -245.3L425.8 -226.4M550.5 -181.4L585.6 -168.6M625.9 -153.7L667.3 -138.6M672.3 -136.7L711.3 -122.5M715.7 -121.4L736.9 -113.7M738.2 -112.9L762.2 -104.2M766.3 -102.7L786.4 -95.4M829.2 -80.1L883.9 -60.2M889.5 -57.8L936.0 -40.9M944.7 -37.8L984.2 -23.4M1025.1 -8.3L1062.6 5.3M1070.8 8.1L1104.0 20.2M1112.2 23.1L1139.4 33.0M1140.2 33.1L1187.4 50.2M1192.0 52.5L1236.4 68.6M1237.8 69.0L1293.9 89.5M1392.4 125.4L1439.0 142.3M1442.1 143.4L1481.2 157.7M1484.0 158.7L1523.1 172.9M1579.7 193.0L1599.7 200.3M120.1 -330.0L155.6 -317.1M159.6 -315.6L180.3 -308.0M184.7 -306.9L238.8 -287.2M243.4 -285.2L267.7 -276.3M273.3 -274.3L320.5 -257.1M321.6 -257.0L365.4 -241.0M368.9 -239.7L391.2 -231.6M393.6 -230.4L424.7 -219.1M432.1 -216.5L451.8 -209.3M454.2 -208.8L495.0 -194.0M552.1 -173.1L587.9 -160.1M594.7 -157.7L637.0 -142.3M637.7 -142.0L679.7 -126.7M684.5 -125.0L709.9 -115.7M711.0 -115.2L767.3 -94.7M772.5 -92.7L801.9 -82.0M805.8 -80.6L856.4 -62.2M862.2 -59.8L883.8 -52.0M886.4 -51.4L934.2 -34.0M936.8 -33.0L960.3 -24.5M963.9 -23.3L1005.3 -8.3M1008.1 -7.0L1028.2 0.2M1029.8 0.6L1081.3 19.4M1089.8 22.8L1115.7 32.3M1121.5 34.3L1153.9 46.2M1156.7 47.2L1181.7 56.3M1182.5 56.6L1203.3 64.1M1212.1 67.3L1238.1 76.8M1240.9 77.7L1260.6 84.9M1263.5 86.0L1303.3 100.5M1307.8 102.2L1357.1 120.1M1357.8 120.3L1385.1 130.2M1392.7 133.2L1423.1 144.3M1468.2 160.6L1513.3 177.0M1519.2 179.2L1553.6 191.7M1560.1 194.1L1604.9 210.4M118.1 -324.5L170.9 -305.3M176.8 -302.9L197.0 -295.5M199.8 -294.7L219.6 -287.5M220.1 -287.1L257.9 -273.3M260.5 -272.6L290.1 -261.8M296.6 -259.4L330.2 -247.2M334.3 -245.4L355.2 -237.7M356.9 -237.4L392.6 -224.4M392.6 -224.3L448.4 -204.0M453.1 -202.5L480.0 -192.7M543.6 -169.6L574.1 -158.5M578.3 -157.0L617.9 -142.6M622.9 -140.5L645.2 -132.4M647.4 -131.8L687.2 -117.3M691.2 -115.5L715.2 -106.7M723.8 -104.1L772.5 -86.3M778.8 -83.9L833.6 -63.9M841.0 -61.3L883.6 -45.8M890.7 -42.9L928.9 -29.0M935.2 -27.0L981.8 -10.0M985.9 -8.1L1032.5 8.9M1037.1 10.5L1067.8 21.7M1069.7 22.3L1121.9 41.3M1129.5 43.9L1171.3 59.1M1173.8 60.0L1222.0 77.5M1222.6 78.0L1274.5 96.9M1277.7 97.7L1312.4 110.3M1316.2 112.1L1340.9 121.1M1341.3 120.9L1369.8 131.3M1374.4 133.2L1404.9 144.3M1405.9 144.3L1461.7 164.6M1462.9 165.0L1489.2 174.6M1496.7 177.3L1524.4 187.3M1533.5 191.0L1564.0 202.1M1572.8 205.3L1622.1 223.3M114.7 -315.1L143.5 -304.6M152.8 -301.2L203.1 -282.9M209.1 -280.6L256.6 -263.3M306.1 -244.9L353.8 -227.5M359.2 -225.9L379.5 -218.5M384.9 -216.6L433.3 -199.0M436.5 -197.4L475.4 -183.2M481.5 -181.6L511.0 -170.9M520.2 -167.4L543.2 -159.0M546.9 -157.6L579.4 -145.7M580.0 -145.1L634.0 -125.5M637.1 -124.5L676.8 -110.0M677.4 -109.9L714.5 -96.4M767.5 -76.9L803.3 -63.9M809.1 -62.3L861.0 -43.4M861.3 -42.8L887.0 -33.5M893.6 -31.2L940.3 -14.2M1005.1 9.6L1036.9 21.1M1038.6 21.8L1078.6 36.3M1086.0 38.8L1117.7 50.3M1122.6 51.8L1156.8 64.3M1163.0 66.5L1205.2 81.9M1208.6 83.2L1241.5 95.2M1250.4 98.7L1296.9 115.5M1299.5 116.7L1338.2 130.8M1346.4 133.5L1397.2 152.1M1403.5 154.0L1453.9 172.4M1462.3 175.5L1513.8 194.2M1517.6 195.6L1546.9 206.2M1555.9 209.5L1578.6 217.7M1579.2 218.4L1618.8 232.8M111.0 -305.0L154.0 -289.3M159.0 -287.3L186.8 -277.2M190.9 -276.0L221.6 -264.8M272.4 -246.4L291.2 -239.5M297.3 -237.1L341.0 -221.2M348.3 -218.4L369.7 -210.6M373.4 -209.6L424.7 -191.0M429.2 -189.2L469.8 -174.4M472.1 -173.8L523.2 -155.2M525.5 -153.8L548.9 -145.3M551.7 -144.8L592.3 -130.0M596.6 -128.2L620.9 -119.4M629.1 -116.3L648.5 -109.2M648.9 -109.4L696.3 -92.1M744.2 -74.4L763.5 -67.4M766.0 -66.7L819.5 -47.2M826.6 -44.4L850.1 -35.8M856.7 -33.3L879.0 -25.1M915.6 -12.0L957.5 3.3M984.3 13.1L1034.3 31.3M1035.8 31.7L1063.3 41.7M1071.2 44.4L1104.8 56.6M1111.2 59.2L1156.4 75.7M1164.5 78.3L1211.1 95.3M1214.2 96.7L1264.6 115.0M1268.2 116.1L1306.6 130.1M1312.1 132.1L1334.0 140.1M1340.2 142.6L1390.7 161.0M1428.3 174.5L1452.4 183.3M1460.4 186.3L1491.1 197.5M1498.8 200.3L1536.7 214.1M1543.5 216.7L1566.3 225.0M1569.6 225.9L1614.2 242.1M108.7 -298.7L159.6 -280.2M160.9 -280.1L190.8 -269.2M230.9 -254.2L253.8 -245.8M260.1 -243.9L301.2 -229.0M359.7 -207.7L392.6 -195.8M399.1 -193.4L429.6 -182.3M432.0 -181.5L484.0 -162.5M486.9 -161.1L507.0 -153.7M508.2 -153.4L560.7 -134.3M567.4 -131.9L600.8 -119.8M606.2 -117.9L659.6 -98.4M666.0 -96.0L694.4 -85.7M699.6 -83.6L738.8 -69.3M747.2 -66.2L772.3 -57.1M776.3 -55.6L828.0 -36.8M835.8 -34.2L891.6 -13.9M895.3 -12.7L925.9 -1.5M926.4 -1.4L982.5 19.0M987.5 21.2L1035.2 38.5M1088.9 57.8L1134.9 74.6M1136.7 75.3L1184.9 92.8M1236.7 111.8L1284.6 129.2M1291.1 131.8L1339.8 149.5M1343.3 150.7L1391.9 168.4M1393.3 168.7L1445.1 187.5M1502.8 208.5L1547.5 224.8M1553.7 227.2L1609.7 247.6M105.9 -291.0L156.1 -272.8M164.3 -269.7L218.3 -250.0M220.6 -249.0L260.3 -234.6M264.6 -232.8L297.0 -221.0M302.0 -219.5L339.9 -205.7M344.6 -203.6L393.6 -185.8M449.3 -165.7L481.9 -153.8M487.8 -151.7L532.9 -135.3M533.6 -135.1L556.8 -126.7M561.9 -125.0L606.0 -108.9M613.6 -105.7L646.5 -93.8M652.6 -91.5L686.3 -79.3M693.9 -76.4L747.1 -57.1M781.5 -44.6L817.8 -31.4M824.6 -29.4L863.0 -15.5M871.2 -12.1L910.0 2.0M913.6 3.3L960.4 20.3M964.3 21.6L994.2 32.4M997.9 34.0L1019.5 41.9M1022.6 42.8L1077.2 62.7M1083.7 64.9L1126.9 80.6M1155.9 91.2L1178.8 99.6M1181.7 101.0L1214.3 112.8M1222.6 115.5L1253.3 126.7M1261.1 129.4L1306.4 145.9M1310.5 147.8L1365.8 167.9M1366.8 167.9L1422.6 188.2M1471.6 206.5L1498.3 216.2M1505.7 218.6L1561.4 238.8M1569.2 241.9L1590.8 249.8M102.9 -282.7L133.5 -271.6M137.8 -270.4L185.3 -253.1M185.8 -252.8L210.1 -243.9M219.1 -240.3L250.4 -228.9M253.2 -228.0L289.2 -214.9M347.6 -194.1L377.8 -183.1M382.1 -180.9L419.1 -167.4M422.7 -166.2L443.7 -158.6M448.8 -157.0L495.3 -140.0M498.4 -138.8L535.1 -125.5M540.1 -123.6L588.5 -106.0M592.1 -105.1L623.7 -93.6M627.1 -91.8L652.9 -82.4M658.1 -80.8L696.3 -66.9M699.5 -66.0L726.2 -56.3M732.5 -53.7L758.2 -44.4M759.5 -44.0L807.2 -26.6M811.2 -25.0L849.9 -10.9M852.3 -10.0L877.4 -0.9M880.2 0.4L923.0 15.9M924.3 16.3L959.4 29.1M968.4 32.3L1005.2 45.7M1006.0 45.8L1058.5 64.9M1060.4 65.8L1110.2 83.9M1113.0 84.7L1135.0 92.7M1139.7 94.4L1184.4 110.6M1184.5 111.0L1233.5 128.8M1233.8 128.8L1288.5 148.7M1296.8 151.5L1328.9 163.1M1336.9 166.0L1389.9 185.3M1397.8 188.3L1449.4 207.1M1450.7 207.8L1470.5 215.0M1471.1 215.3L1521.6 233.7M1526.3 234.9L1572.4 251.7M1578.7 254.3L1600.3 262.2M99.5 -273.4L139.6 -258.8M141.8 -257.9L193.6 -239.1M203.1 -236.1L252.4 -218.1M259.7 -215.6L314.1 -195.8M388.4 -168.7L408.2 -161.5M415.5 -158.8L449.9 -146.3M486.7 -132.8L514.9 -122.5M518.7 -120.9L563.0 -104.7M600.3 -91.0L640.7 -76.3M642.9 -75.8L690.4 -58.5M694.5 -57.1L716.1 -49.2M716.4 -49.1L746.6 -38.1M754.9 -35.1L778.9 -26.3M781.3 -25.4L808.9 -15.4M815.2 -13.0L836.0 -5.4M845.0 -2.4L891.9 14.6M899.0 17.1L944.9 33.8M949.0 35.9L969.8 43.4M978.3 46.2L1019.3 61.1M1023.5 62.8L1049.8 72.4M1052.1 73.3L1094.1 88.6M1101.1 91.2L1137.7 104.5M1143.2 106.6L1184.9 121.8M1193.4 124.3L1236.6 140.0M1238.5 140.9L1266.1 150.9M1269.4 152.4L1312.5 168.1M1316.3 169.2L1358.7 184.7M1367.5 187.8L1415.3 205.2M1421.8 207.9L1473.6 226.7M1475.6 227.6L1522.6 244.6M1523.6 245.1L1553.0 255.7M1553.9 255.8L1581.6 265.9M96.3 -264.5L143.7 -247.2M147.9 -246.0L181.0 -234.0M185.2 -232.1L223.6 -218.1M230.9 -215.9L263.0 -204.2M269.3 -202.0L297.0 -191.9M329.8 -179.4L376.4 -162.5M385.6 -159.4L434.0 -141.8M486.3 -122.7L518.4 -111.0M521.2 -110.0L569.7 -92.3M577.9 -89.7L626.8 -71.9M627.4 -71.4L647.4 -64.1M652.4 -62.3L691.2 -48.2M699.3 -45.2L724.1 -36.2M728.2 -34.7L753.9 -25.4M755.3 -24.6L801.0 -7.9M802.3 -8.0L849.8 9.3M850.4 10.0L873.1 18.3M880.7 20.6L920.0 34.9M923.6 36.3L964.1 51.0M965.5 51.8L1001.0 64.7M1002.8 65.5L1056.4 85.0M1065.5 88.0L1086.4 95.6M1091.9 97.9L1136.3 114.1M1142.2 116.3L1189.4 133.5M1195.0 135.4L1221.3 145.0M1221.7 145.3L1246.0 154.1M1253.9 156.8L1299.6 173.5M1308.4 176.3L1353.3 192.7M1357.7 194.7L1386.8 205.3M1414.9 215.4L1457.0 230.7M1463.3 233.0L1514.7 251.7M1555.3 266.6L1603.4 284.1M93.1 -255.8L126.9 -243.5M186.6 -221.9L223.0 -208.6M228.0 -206.4L279.3 -187.7M281.2 -187.3L315.1 -175.0M322.9 -172.2L342.1 -165.2M350.6 -161.9L381.2 -150.8M382.7 -150.4L410.0 -140.5M417.4 -137.7L469.8 -118.6M474.4 -116.9L495.6 -109.2M503.9 -105.8L544.0 -91.2M660.7 -49.3L691.3 -38.2M696.8 -36.0L724.4 -26.0M728.6 -24.6L770.5 -9.3M777.0 -6.4L804.0 3.4M808.7 4.9L858.4 23.0M859.5 23.4L897.2 37.1M898.0 37.4L940.2 52.8M940.3 52.9L987.3 70.0M987.6 70.0L1033.2 86.6M1036.3 87.5L1058.5 95.6M1064.2 97.6L1112.6 115.2M1116.8 117.2L1143.6 127.0M1144.3 126.8L1180.5 140.0M1186.3 142.3L1207.8 150.1M1213.2 152.3L1255.3 167.6M1263.9 170.5L1314.5 188.9M1315.1 189.0L1368.0 208.2M1371.2 209.6L1410.2 223.8M1413.1 225.0L1452.2 239.2M1457.1 240.7L1485.6 251.1M1489.5 252.4L1526.5 265.8M1554.9 276.5L1596.2 291.5M91.0 -250.0L123.7 -238.1M128.4 -236.5L149.5 -228.8M153.0 -227.7L201.1 -210.2M206.9 -207.9L232.7 -198.6M237.3 -196.9L291.9 -177.0M293.9 -176.0L326.5 -164.1M334.4 -161.6L384.1 -143.5M392.9 -140.1L414.9 -132.1M417.2 -131.4L473.0 -111.1M522.7 -92.8L542.9 -85.5M544.9 -84.8L569.3 -75.9M570.9 -75.5L597.1 -66.0M606.4 -62.7L646.1 -48.3M651.5 -45.7L689.9 -31.7M694.4 -30.1L714.3 -22.8M717.1 -21.9L754.6 -8.2M756.3 -7.7L789.7 4.5M792.5 5.7L823.4 16.9M827.9 18.0L847.4 25.1M881.9 37.7L920.8 51.8M926.7 54.0L957.8 65.3M958.7 66.0L993.3 78.6M993.4 78.5L1025.1 90.1M1030.6 92.0L1086.1 112.2M1088.0 112.8L1124.5 126.1M1187.1 149.1L1226.4 163.4M1227.6 163.5L1251.2 172.1M1256.2 174.4L1304.7 192.0M1313.7 195.0L1360.1 212.0M1363.6 213.4L1411.3 230.7M1419.5 233.6L1441.0 241.5M1441.9 241.8L1489.5 259.1M1497.1 261.8L1542.1 278.2M1546.6 279.6L1590.5 295.6M145.3 -222.7L189.8 -206.5M191.5 -205.8L215.8 -197.0M224.8 -193.7L268.5 -177.8M272.3 -176.6L301.1 -166.1M339.7 -151.8L376.9 -138.3M384.2 -135.8L404.0 -128.6M453.6 -110.9L473.5 -103.7M510.4 -90.0L560.3 -71.8M567.3 -69.5L617.0 -51.4M622.6 -49.3L675.5 -30.0M737.5 -7.1L791.5 12.6M830.4 26.6L851.6 34.3M855.7 35.6L876.0 43.0M877.4 43.8L930.6 63.1M934.7 64.5L955.4 72.1M960.8 73.8L999.3 87.8M1095.4 122.7L1151.2 143.0M1155.3 144.7L1181.6 154.3M1186.5 156.2L1241.8 176.3M1242.0 176.5L1264.6 184.7M1265.7 184.7L1307.9 200.1M1313.1 202.3L1354.3 217.3M1363.5 220.3L1390.3 230.1M1394.2 231.5L1433.4 245.8M1434.4 246.1L1479.3 262.5M1480.6 263.0L1526.6 279.7M1533.2 282.4L1582.6 300.4M85.8 -235.7L112.4 -226.0M114.8 -224.9L158.9 -208.9M161.0 -208.0L204.8 -192.1M205.6 -191.6L239.1 -179.4M242.8 -178.5L262.7 -171.3M323.1 -148.9L347.7 -140.0M356.8 -136.5L388.6 -125.0M444.4 -104.9L497.5 -85.6M545.2 -68.1L566.4 -60.4M569.6 -59.0L621.9 -40.0M624.8 -39.0L649.9 -29.9M653.6 -28.9L675.4 -20.9M682.1 -18.5L702.8 -10.9M703.4 -10.7L747.2 5.2M756.0 8.6L787.7 20.1M824.7 33.5L860.6 46.6M862.4 47.2L913.0 65.6M920.4 68.2L959.6 82.5M965.1 84.7L998.7 96.9M1005.4 99.2L1034.9 109.9M1083.1 127.7L1111.3 138.0M1115.7 139.4L1138.6 147.7M1146.1 150.7L1165.0 157.6M1167.4 158.3L1218.4 176.9M1220.8 177.6L1258.9 191.5M1262.5 192.9L1308.6 209.7M1309.3 210.1L1352.9 226.0M1355.3 226.9L1380.4 236.1M1382.7 236.9L1413.2 248.0M1419.5 250.2L1474.4 270.2M1477.5 271.1L1508.7 282.5M1516.7 285.3L1565.7 303.1M1566.1 303.2L1590.2 312.0M83.1 -228.3L132.8 -210.2M138.0 -208.7L192.8 -188.8M192.9 -188.4L220.5 -178.4M223.2 -177.3L265.0 -162.1M270.9 -160.0L314.1 -144.3M315.3 -144.1L354.8 -129.7M362.6 -126.7L392.7 -115.7M398.1 -113.7L421.6 -105.1M430.7 -102.3L465.7 -89.6M521.6 -69.2L560.2 -55.1M567.5 -52.4L605.6 -38.5M613.8 -35.5L649.0 -22.7M653.1 -20.8L700.0 -3.8M707.5 -1.1L760.3 18.1M761.4 18.5L794.4 30.5M842.8 47.9L874.1 59.3M876.6 60.5L928.2 79.3M936.9 82.5L958.0 90.1M965.9 92.9L985.0 99.8M993.2 102.7L1046.1 121.9M1086.3 136.3L1128.3 151.6M1133.7 154.0L1189.9 174.5M1199.3 177.5L1249.7 195.8M1258.4 198.9L1298.7 213.6M1305.5 216.3L1339.9 228.8M1369.9 240.1L1401.3 251.5M1407.8 253.6L1459.4 272.4M1468.5 275.8L1510.9 291.2M1512.6 291.6L1541.4 302.1M1548.2 304.5L1599.9 323.3M80.6 -221.4L104.1 -212.8M113.0 -209.5L155.1 -194.2M241.7 -162.8L281.8 -148.1M286.7 -146.6L305.7 -139.6M309.8 -138.2L355.5 -121.6M360.9 -119.2L400.9 -104.6M405.3 -102.9L432.5 -93.1M440.9 -90.3L478.5 -76.6M484.3 -74.7L516.8 -62.8M567.2 -44.3L615.9 -26.6M616.1 -26.6L665.8 -8.5M667.1 -8.2L698.4 3.2M705.1 5.6L754.4 23.6M755.5 24.0L784.1 34.4M792.5 37.9L818.2 47.2M864.6 63.8L886.1 71.6M889.3 72.9L913.2 81.6M916.5 82.9L964.0 100.2M971.7 102.8L1017.5 119.5M1019.8 120.3L1076.0 140.7M1137.2 162.9L1187.6 181.3M1189.3 182.3L1235.8 199.2M1241.4 200.8L1263.7 208.9M1271.6 212.2L1321.1 230.1M1324.0 231.3L1371.8 248.7M1375.9 250.1L1405.0 260.7M1463.5 282.2L1516.2 301.4M1523.0 303.9L1544.2 311.6M1550.4 313.7L1597.6 330.9M76.8 -211.1L132.7 -190.8M137.8 -188.7L177.0 -174.5M179.1 -174.2L217.1 -160.4M220.0 -158.7L241.1 -151.1M245.5 -149.9L272.2 -140.1M274.3 -139.3L326.2 -120.5M334.1 -117.2L366.5 -105.4M371.5 -103.7L422.5 -85.1M430.8 -82.1L462.8 -70.4M518.7 -50.2L544.4 -40.8M547.7 -39.6L576.1 -29.2M610.2 -17.1L647.4 -3.6M690.4 11.9L712.1 19.8M719.1 22.5L745.1 32.0M751.8 34.6L798.4 51.5M805.5 54.2L830.6 63.4M838.2 66.3L859.7 74.1M866.4 76.5L896.8 87.5M904.2 89.9L950.9 106.9M993.2 122.3L1048.8 142.5M1049.7 142.9L1074.4 151.9M1076.0 152.3L1117.8 167.5M1125.7 170.9L1162.4 184.3M1164.1 184.8L1199.3 197.6M1199.6 197.2L1231.9 209.0M1233.9 209.7L1269.4 222.7M1269.5 222.8L1324.5 242.9M1331.5 245.3L1372.7 260.3M1439.1 284.5L1475.9 297.9M1478.9 299.1L1527.1 316.7M1528.9 317.2L1576.5 334.5M74.3 -204.3L93.8 -197.2M94.8 -196.4L114.6 -189.2M121.5 -187.1L151.2 -176.3M156.9 -174.3L186.3 -163.6M192.6 -160.8L245.9 -141.4M251.8 -139.7L293.2 -124.6M293.4 -124.6L338.4 -108.2M392.5 -88.3L416.1 -79.7M418.6 -78.6L456.4 -64.8M462.9 -62.8L506.2 -47.0M507.0 -46.7L526.8 -39.5M534.1 -36.8L579.3 -20.3M583.5 -18.7L637.5 0.9M638.7 1.2L677.3 15.3M683.6 17.9L709.3 27.2M762.0 46.2L818.1 66.6M822.7 68.4L861.4 82.4M866.5 84.5L912.9 101.3M920.8 103.9L945.7 112.9M950.4 115.0L993.3 130.6M996.4 131.2L1028.9 143.0M1032.8 144.8L1055.1 152.9M1058.6 154.3L1093.9 167.1M1149.7 187.5L1173.6 196.2M1215.3 211.0L1260.9 227.6M1265.6 229.3L1301.3 242.3M1302.6 242.8L1328.4 252.2M1328.8 252.8L1355.3 262.4M1359.2 263.8L1411.6 282.8M1416.5 284.4L1470.9 304.2M1471.8 304.7L1509.3 318.4M1509.8 318.6L1562.9 337.9M72.1 -198.0L108.2 -184.9M113.7 -182.3L164.0 -164.0M167.2 -163.1L218.2 -144.6M222.5 -143.1L242.2 -136.0M248.7 -133.6L288.7 -119.0M288.9 -118.9L311.3 -110.8M320.0 -107.7L374.3 -87.9M377.2 -86.9L399.6 -78.7M400.6 -78.4L450.7 -60.1M452.7 -59.3L482.0 -48.6M483.4 -48.0L512.6 -37.4M518.4 -35.3L562.1 -19.4M565.1 -18.1L617.5 1.0M621.6 2.5L646.3 11.5M647.6 12.1L683.0 25.0M684.9 25.2L712.8 35.4M720.8 38.6L776.3 58.8M778.5 59.5L811.0 71.3M819.3 74.6L852.3 86.6M859.0 88.7L879.4 96.1M883.5 97.7L939.4 118.0M948.6 121.1L996.3 138.5M998.8 139.8L1051.8 159.1M1058.0 161.4L1095.1 174.9M1155.1 196.5L1202.6 213.8M1260.2 234.9L1294.6 247.4M1302.3 250.0L1326.6 258.8M1382.7 279.2L1414.3 290.7M1460.7 307.7L1514.8 327.4M1523.3 330.2L1544.5 337.9M1549.8 340.1L1604.2 359.9M68.8 -189.1L117.5 -171.5M121.9 -169.7L161.6 -155.2M167.8 -152.8L223.3 -132.6M227.8 -130.8L251.1 -122.4M254.7 -121.1L284.6 -110.3M290.9 -108.1L311.3 -100.6M312.9 -99.9L350.3 -86.3M351.9 -86.1L378.3 -76.5M474.1 -41.3L495.3 -33.6M497.9 -32.6L530.0 -20.9M562.9 -9.1L594.9 2.5M638.1 18.3L660.6 26.5M665.7 28.5L709.9 44.6M715.8 46.7L756.8 61.6M762.1 63.1L816.7 83.0M825.0 86.1L857.8 98.0M864.4 100.7L890.8 110.3M892.9 111.2L930.8 125.0M939.2 127.8L962.9 136.5M967.4 138.2L1014.0 155.1M1015.1 155.2L1052.6 168.8M1059.5 171.4L1080.5 179.1M1088.8 182.2L1142.5 201.7M1145.1 202.7L1194.3 220.6M1200.4 222.9L1244.6 238.9M1246.2 239.3L1278.9 251.2M1283.2 252.8L1331.7 270.5M1382.3 289.3L1402.9 296.8M1409.9 299.3L1445.0 312.1M1453.2 315.2L1505.6 334.3M1510.8 335.7L1533.2 343.9M1538.1 345.7L1559.4 353.5M66.5 -182.7L86.3 -175.5M145.7 -154.2L169.0 -145.7M176.9 -143.1L200.4 -134.5M204.4 -132.9L259.5 -112.9M266.0 -110.5L313.7 -93.2M376.9 -70.3L397.5 -62.8M464.3 -38.3L491.6 -28.3M491.9 -28.3L512.8 -20.7M554.3 -5.5L589.6 7.4M593.7 8.7L638.7 25.1M646.5 27.9L701.8 48.0M741.6 62.5L762.0 69.9M767.6 72.0L809.5 87.3M810.3 87.8L838.9 98.2M840.9 98.8L868.0 108.7M876.6 111.7L926.5 129.9M927.7 130.6L950.6 138.9M989.9 153.3L1012.2 161.4M1018.7 163.7L1059.6 178.6M1067.7 181.6L1090.7 190.0M1201.7 230.2L1231.4 241.0M1236.7 243.3L1275.3 257.3M1276.2 257.4L1330.1 277.0M1394.3 300.6L1441.9 317.9M1442.6 318.0L1477.1 330.5M1485.9 334.0L1533.1 351.2M1533.2 350.9L1562.7 361.6M64.1 -176.0L92.4 -165.7M98.6 -163.5L125.9 -153.6M133.8 -150.9L152.6 -144.0M156.5 -142.7L190.4 -130.4M192.4 -129.3L232.4 -114.8M236.3 -113.3L273.4 -99.8M276.1 -99.1L324.5 -81.5M330.3 -79.6L384.0 -60.0M389.3 -57.8L408.9 -50.7M411.6 -49.6L449.7 -35.8M451.9 -35.1L484.4 -23.3M490.6 -21.1L539.3 -3.3M542.0 -2.1L576.9 10.6M581.0 12.1L626.1 28.5M630.7 30.2L659.4 40.6M667.6 43.6L719.0 62.3M719.2 62.2L770.9 81.0M778.1 83.5L825.0 100.6M833.8 104.1L870.2 117.4M872.2 118.2L926.8 138.1M933.6 140.4L961.2 150.4M965.3 151.6L1000.7 164.5M1009.3 167.7L1028.5 174.7M1030.2 175.8L1066.6 189.1M1106.6 203.3L1158.9 222.3M1211.7 241.3L1253.0 256.3M1304.1 275.1L1328.9 284.1M1331.4 285.1L1372.4 300.0M1413.8 315.3L1433.5 322.5M1436.4 323.2L1470.8 335.6M1479.4 339.2L1511.4 350.8M1520.5 353.7L1542.4 361.7M93.4 -159.1L142.3 -141.3M175.1 -129.0L197.1 -121.0M197.4 -121.0L221.3 -112.2M250.5 -101.6L299.0 -84.0M300.7 -83.7L325.1 -74.8M327.9 -73.7L375.5 -56.3M424.1 -38.6L476.2 -19.6M476.3 -19.8L522.2 -3.1M530.7 0.1L586.5 20.4M592.1 22.6L625.6 34.8M626.1 34.7L658.4 46.4M659.3 47.1L715.2 67.4M756.1 82.3L776.4 89.7M776.8 89.9L802.3 99.1M805.9 100.4L839.3 112.6M848.4 116.0L892.2 132.0M893.6 132.3L929.8 145.5M932.5 146.7L976.5 162.7M983.3 164.7L1022.4 178.9M1026.2 180.4L1073.9 197.7M1081.5 201.0L1107.1 210.3M1108.7 210.8L1134.7 220.2M1187.9 239.5L1216.6 249.9M1225.4 252.8L1280.5 272.8M1283.7 274.2L1304.3 281.7M1355.2 300.2L1395.7 315.0M1398.9 316.0L1450.4 334.7M1457.8 337.9L1490.5 349.8M1541.9 368.5L1585.7 384.4M58.4 -160.4L97.3 -146.3M98.9 -145.7L148.4 -127.7M155.4 -124.8L187.0 -113.3M191.9 -111.9L218.1 -102.4M257.8 -87.9L304.8 -70.8M306.7 -70.0L353.5 -53.0M356.9 -51.9L383.7 -42.2M388.9 -39.9L430.1 -24.9M434.8 -23.2L483.9 -5.4M491.6 -2.5L513.3 5.4M566.7 24.5L613.5 41.5M616.9 42.8L655.3 56.8M660.5 58.5L709.5 76.4M717.6 79.7L762.1 95.9M791.5 106.5L821.2 117.3M823.0 117.8L853.1 128.8M856.7 130.0L913.0 150.5M917.3 152.2L947.2 163.1M954.4 165.7L1003.8 183.7M1006.4 184.9L1054.9 202.5M1061.9 205.0L1104.1 220.3M1110.6 222.6L1132.5 230.6M1140.1 233.3L1176.0 246.4M1176.4 246.4L1223.4 263.5M1231.2 266.3L1262.9 277.9M1269.4 280.3L1296.4 290.2M1298.2 291.0L1330.3 302.7M1338.3 305.3L1357.3 312.2M1361.4 313.7L1413.3 332.6M1415.0 333.2L1469.4 353.0M1533.1 376.3L1588.7 396.5M55.5 -152.4L99.5 -136.3M107.2 -133.8L158.3 -115.2M160.9 -114.3L205.7 -98.0M206.2 -97.3L242.0 -84.3M251.1 -81.0L306.8 -60.7M315.2 -57.8L336.6 -50.0M340.0 -48.5L382.1 -33.3M384.1 -32.9L438.8 -13.0M447.6 -9.6L489.3 5.6M497.1 8.6L548.0 27.1M557.5 30.4L607.5 48.6M608.3 48.7L633.6 57.9M639.1 60.2L693.2 79.9M697.5 81.5L746.6 99.3M750.3 100.8L775.3 109.9M812.8 123.4L848.2 136.3M855.0 138.6L909.8 158.6M918.1 161.7L964.1 178.4M972.8 181.5L1009.7 194.9M1017.3 197.8L1055.4 211.6M1062.8 214.0L1117.5 233.9M1183.4 258.4L1219.1 271.4M1227.3 274.0L1278.2 292.5M1286.7 295.6L1314.0 305.5M1321.6 308.4L1344.8 316.9M1350.7 319.2L1377.1 328.8M1386.2 331.9L1415.8 342.6M1421.2 344.5L1473.5 363.5M1481.8 366.9L1510.3 377.3M1514.2 378.3L1539.7 387.6M51.8 -142.3L102.9 -123.8M108.9 -121.6L138.8 -110.7M142.3 -109.6L189.1 -92.5M192.9 -90.9L219.7 -81.1M283.9 -57.9L303.4 -50.8M311.1 -48.0L354.6 -32.2M357.9 -30.6L386.3 -20.3M394.0 -17.5L446.8 1.7M454.9 4.6L492.2 18.2M501.3 21.4L540.4 35.6M540.8 35.9L560.6 43.1M562.4 43.7L609.9 61.0M610.5 61.2L662.4 80.1M663.8 80.4L690.1 90.0M695.1 92.0L715.5 99.5M724.6 102.8L778.6 122.5M817.4 136.3L866.1 154.0M869.8 155.3L914.1 171.5M920.1 173.9L961.3 188.9M1043.1 218.7L1074.7 230.2M1076.0 230.6L1113.5 244.2M1116.7 245.1L1172.5 265.4M1181.3 268.6L1204.8 277.2M1209.4 279.2L1255.5 296.0M1257.3 296.4L1305.9 314.1M1310.3 315.9L1336.6 325.5M1342.8 327.7L1390.9 345.2M1391.6 345.5L1439.9 363.1M1448.8 366.0L1474.0 375.2M49.1 -134.9L97.5 -117.3M106.1 -114.1L128.1 -106.1M131.5 -105.2L182.1 -86.8M190.3 -83.4L219.2 -72.9M224.8 -70.9L253.8 -60.4M319.1 -37.0L353.3 -24.6M355.8 -23.5L408.8 -4.2M409.1 -4.1L434.9 5.2M436.3 6.0L476.3 20.6M484.4 23.5L536.5 42.4M541.6 44.4L592.0 62.7M593.2 62.8L617.0 71.5M622.3 73.8L669.2 90.9M677.8 93.5L708.1 104.5M708.8 105.3L765.0 125.7M771.3 128.0L819.7 145.6M820.8 145.9L875.1 165.7M876.5 165.8L906.7 176.8M954.6 194.5L1002.1 211.7M1003.4 212.3L1034.4 223.6M1039.8 225.7L1087.0 242.9M1091.3 244.0L1122.0 255.1M1122.1 255.3L1167.3 271.7M1169.8 272.9L1215.3 289.4M1220.3 291.2L1266.1 307.8M1274.1 310.9L1330.3 331.4M1333.1 332.0L1370.5 345.6M1374.7 347.5L1418.6 363.4M1425.4 366.0L1476.7 384.6M1478.4 385.1L1532.1 404.7M104.3 -108.5L158.9 -88.6M161.8 -87.5L191.2 -76.8M191.8 -76.7L213.6 -68.8M220.3 -66.3L252.3 -54.7M255.8 -53.7L296.0 -39.0M297.9 -38.3L320.6 -30.0M324.5 -28.5L363.7 -14.2M371.1 -11.7L424.0 7.6M424.0 7.9L447.3 16.4M454.6 19.2L501.3 36.2M505.5 37.7L549.0 53.6M549.8 53.5L581.4 65.0M586.0 66.7L628.3 82.1M636.2 84.9L686.3 103.1M688.2 104.1L717.1 114.6M717.7 115.0L759.1 130.1M762.2 130.8L816.6 150.6M820.7 152.1L861.2 166.8M865.3 168.6L916.1 187.1M918.4 187.8L966.8 205.4M976.0 209.0L1003.6 219.1M1005.6 219.3L1045.5 233.9M1050.1 236.0L1091.9 251.2M1100.6 254.3L1141.5 269.2M1146.9 271.1L1199.2 290.2M1249.6 308.5L1305.8 329.0M1337.0 340.1L1380.6 356.0M1385.2 357.8L1428.5 373.6M1491.7 396.7L1512.2 404.1M1512.3 404.2L1546.1 416.5M44.4 -121.9L87.4 -106.3M96.2 -103.5L134.5 -89.6M233.0 -53.8L278.0 -37.4M282.4 -35.6L323.4 -20.7M376.3 -1.2L397.4 6.4M405.0 9.1L440.2 21.9M443.0 22.7L481.3 36.6M483.8 37.5L512.7 48.0M514.9 48.7L560.2 65.2M562.9 66.8L604.0 81.7M605.9 82.1L652.7 99.2M657.1 100.8L712.9 121.1M714.2 121.8L752.0 135.6M759.1 138.0L810.6 156.8M814.5 158.2L865.3 176.6M865.6 176.9L888.3 185.2M890.1 185.6L943.1 204.8M943.7 205.2L1000.0 225.7M1001.6 226.4L1049.3 243.8M1051.1 243.9L1090.9 258.4M1095.2 259.9L1132.5 273.5M1133.7 274.3L1168.8 287.0M1174.2 289.0L1211.1 302.4M1311.9 339.1L1335.3 347.6M1342.8 350.3L1384.0 365.3M1387.9 367.0L1408.5 374.5M1417.9 377.8L1457.8 392.3M1462.7 394.2L1485.1 402.3M1485.3 402.3L1507.0 410.2M1507.6 410.4L1526.8 417.4M40.7 -111.8L70.3 -101.0M73.4 -100.0L113.5 -85.4M119.9 -83.4L165.0 -67.0M168.6 -65.7L191.7 -57.3M193.8 -55.9L249.6 -35.6M253.2 -34.6L304.4 -16.0M304.6 -16.0L351.1 0.9M351.4 1.4L399.4 18.8M404.8 20.7L427.2 28.8M431.0 30.2L462.8 41.7M469.1 44.1L489.1 51.4M489.7 51.2L530.2 65.9M585.9 86.3L631.4 102.8M640.8 106.2L666.1 115.5M666.0 115.8L702.7 129.2M705.4 130.2L742.6 143.8M746.5 144.9L770.7 153.8M772.6 154.4L806.9 166.9M808.5 167.8L852.8 183.9M853.3 183.9L885.2 195.5M890.5 197.6L929.6 211.8M932.0 212.7L970.5 226.7M977.5 228.8L1010.5 240.8M1013.9 242.0L1053.3 256.4M1057.7 257.9L1107.2 276.0M1107.4 276.0L1160.9 295.5M1165.1 297.5L1215.4 315.8M1222.8 318.5L1244.3 326.3M1244.6 326.0L1263.9 333.0M1265.0 333.4L1312.1 350.5M1319.5 353.2L1351.4 364.9M1355.1 366.2L1411.0 386.5M1417.5 389.0L1439.7 397.1M1474.3 409.6L1517.6 425.3M1520.2 426.5L1547.5 436.4M38.6 -106.0L61.6 -97.7M68.6 -95.3L88.2 -88.1M93.3 -86.1L129.7 -72.9M139.0 -69.7L177.7 -55.6M181.0 -54.5L200.0 -47.6M207.7 -44.6L255.7 -27.1M257.0 -27.0L293.5 -13.7M300.1 -11.1L327.4 -1.1M327.8 -1.2L353.0 8.0M356.6 9.4L404.7 27.0M408.2 28.3L459.3 46.8M463.1 48.4L507.2 64.5M516.5 67.8L552.4 80.9M558.3 82.7L593.6 95.6M602.7 99.3L644.0 114.3M644.8 114.3L679.9 127.0M688.2 129.9L730.1 145.2M737.7 148.1L784.1 165.0M790.7 167.6L830.5 182.1M838.4 184.6L867.6 195.3M875.3 198.3L898.5 206.8M928.5 217.6L950.1 225.4M959.1 229.0L979.9 236.6M984.1 238.1L1027.0 253.7M1027.5 254.0L1069.2 269.2M1076.5 271.4L1112.3 284.4M1120.8 287.7L1173.1 306.7M1174.9 307.6L1194.0 314.5M1200.1 316.8L1227.5 326.8M1230.4 327.6L1258.0 337.6M1260.6 338.5L1299.6 352.7M1392.0 386.6L1413.2 394.3M36.2 -99.5L74.6 -85.5M81.3 -82.9L124.6 -67.1M125.6 -66.9L157.3 -55.4M162.9 -53.4L200.6 -39.7M200.9 -39.3L249.0 -21.8M250.3 -21.2L270.3 -13.9M273.2 -12.9L324.1 5.6M428.9 43.4L452.2 51.9M454.2 52.6L496.3 67.9M503.1 70.9L556.2 90.2M562.8 92.3L588.9 101.8M589.2 101.8L630.6 116.8M638.0 119.9L677.4 134.3M677.7 134.1L708.3 145.2M714.1 147.1L747.4 159.2M751.0 161.1L773.8 169.4M816.7 185.0L852.9 198.1M861.4 201.2L909.4 218.7M914.1 219.9L943.5 230.6M952.0 233.8L974.0 241.8M981.4 244.5L1012.2 255.8M1020.6 258.8L1075.6 278.8M1128.7 298.6L1148.0 305.6M1155.6 308.1L1181.0 317.3M1182.8 318.1L1207.1 327.0M1214.1 329.2L1259.9 345.9M1261.9 346.6L1314.7 365.8M1320.0 368.2L1354.6 380.8M1356.1 380.9L1389.5 393.0M1394.3 394.9L1442.2 412.3M1444.2 413.1L1472.7 423.4M1477.0 425.1L1504.1 435.0M1509.2 437.1L1553.1 453.1M32.6 -89.5L75.2 -74.0M125.9 -55.2L148.9 -46.9M152.5 -45.3L205.3 -26.0M212.3 -24.1L237.5 -14.9M271.2 -2.6L305.6 9.9M313.7 12.9L346.0 24.7M354.7 27.8L392.1 41.4M399.1 44.0L447.2 61.5M455.8 65.0L489.5 77.3M493.0 78.3L543.7 96.8M545.3 97.3L589.6 113.4M597.6 116.4L651.8 136.1M660.6 139.6L693.3 151.5M698.3 153.2L750.4 172.2M799.7 190.1L842.3 205.6M850.7 208.6L873.5 216.9M877.6 218.5L915.0 232.2M971.2 252.5L1019.0 269.9M1024.9 272.0L1075.2 290.4M1143.9 315.4L1164.1 322.8M1227.4 345.9L1247.2 353.1M1248.1 353.4L1283.7 366.4M1286.5 367.3L1311.3 376.3M1319.9 379.6L1374.2 399.3M1375.6 399.5L1406.1 410.7M1408.6 411.4L1428.2 418.6M1430.6 419.7L1467.7 433.2M30.4 -83.6L73.8 -67.8M80.9 -64.9L123.1 -49.6M159.9 -36.5L184.9 -27.4M230.4 -10.2L283.0 8.9M283.2 8.6L330.6 25.9M335.5 27.5L369.2 39.7M370.2 40.2L422.9 59.4M431.2 62.7L475.9 79.0M482.9 81.1L508.5 90.5M510.2 91.3L539.2 101.8M547.6 105.2L580.2 117.0M588.3 119.6L626.9 133.6M627.2 134.1L652.8 143.4M658.1 145.3L701.8 161.2M709.5 164.0L747.5 177.9M752.4 179.4L790.5 193.3M796.1 195.3L816.2 202.7M911.9 237.4L932.0 244.8M933.6 245.5L959.3 254.8M962.2 256.1L988.0 265.5M996.5 268.2L1039.7 283.9M1045.0 285.6L1096.2 304.3M1103.2 307.2L1139.0 320.3M1146.6 322.9L1192.0 339.4M1237.4 355.9L1292.4 375.9M1298.1 378.1L1325.2 388.0M1334.2 391.4L1356.8 399.6M1361.1 401.1L1397.7 414.4M1398.7 414.7L1438.8 429.3M1443.6 431.3L1469.9 440.8M1471.8 441.3L1498.5 451.0M1502.7 452.5L1552.4 470.6M26.5 -72.9L68.2 -57.8M105.9 -44.3L161.6 -24.0M162.8 -23.8L199.5 -10.5M203.7 -9.0L258.7 11.0M260.4 11.8L308.8 29.4M317.3 32.6L368.6 51.3M409.1 66.2L432.8 74.8M433.6 74.8L466.0 86.5M474.6 89.7L513.0 103.7M521.2 106.5L573.7 125.6M581.6 128.8L637.5 149.1M687.3 167.0L726.8 181.4M732.7 183.8L764.9 195.5M773.7 198.8L812.4 212.9M942.1 259.9L994.4 279.0M995.1 279.5L1021.7 289.2M1059.4 302.4L1112.6 321.8M1121.2 325.1L1171.3 343.4M1177.9 346.1L1207.7 357.0M1258.3 375.0L1283.7 384.3M1341.7 405.3L1376.2 417.9M1381.1 419.5L1418.3 433.0M1418.4 433.5L1443.6 442.7M1447.2 443.8L1470.2 452.2M1475.1 453.7L1504.2 464.3M23.9 -65.6L49.1 -56.4M56.6 -53.5L88.6 -41.9M94.2 -40.0L131.6 -26.4M135.9 -24.4L159.8 -15.7M168.1 -12.8L189.1 -5.1M225.7 8.2L270.9 24.6M273.5 25.7L295.5 33.7M301.8 35.7L351.3 53.8M351.5 53.7L397.8 70.5M402.6 72.2L431.3 82.7M436.8 84.6L488.5 103.4M492.4 105.1L525.5 117.1M581.7 137.4L633.7 156.3M666.1 168.3L706.3 182.9M708.4 183.8L741.3 195.8M743.5 196.8L784.0 211.6M790.0 213.2L813.1 221.6M850.8 235.8L900.1 253.8M904.4 255.4L949.7 271.9M957.3 274.1L978.2 281.8M979.1 282.2L1016.3 295.8M1017.3 296.4L1037.2 303.6M1043.9 305.8L1076.7 317.7M1082.3 319.8L1137.1 339.7M1165.2 349.9L1186.1 357.5M1187.3 358.3L1237.8 376.7M1244.3 379.1L1287.5 394.8M1294.6 397.0L1326.0 408.4M1329.1 409.8L1357.7 420.2M1366.7 423.6L1392.6 433.1M1393.6 433.2L1442.6 451.0M1445.6 451.8L1471.6 461.3M1478.0 464.0L1508.9 475.3M21.3 -58.6L50.6 -48.0M55.8 -46.1L109.8 -26.4M111.4 -25.8L148.0 -12.5M157.0 -9.4L179.8 -1.1M181.7 -0.6L201.8 6.7M203.4 7.3L230.7 17.3M234.3 18.6L277.9 34.5M286.1 37.3L340.1 56.9M347.4 59.7L379.0 71.3M387.5 74.6L421.8 87.1M429.8 89.7L482.0 108.7M488.0 111.1L527.2 125.4M534.2 127.5L556.3 135.6M560.5 137.7L612.8 156.8M617.8 158.3L655.3 171.9M657.5 172.9L705.9 190.5M712.3 192.8L758.2 209.4M816.7 230.7L861.1 246.9M867.8 249.5L919.1 268.2M922.6 269.4L967.7 285.8M976.0 288.7L1024.5 306.3M1032.8 309.4L1077.3 325.6M1084.9 328.2L1121.8 341.6M1161.2 356.3L1211.3 374.6M1211.9 374.3L1237.2 383.5M1321.0 414.3L1350.2 424.9M1353.9 426.3L1386.3 438.0M1391.9 439.7L1435.6 455.6M1439.6 457.3L1469.7 468.2M1471.8 469.2L1503.2 480.6M53.9 -37.9L72.8 -31.0M75.4 -30.4L107.6 -18.7M114.1 -16.4L143.0 -5.8M149.7 -3.2L196.1 13.6M202.6 16.2L239.7 29.7M308.7 54.5L362.4 74.0M369.1 76.5L393.2 85.2M395.1 85.8L419.5 94.7M460.5 110.2L501.5 125.2M502.5 125.0L536.6 137.4M591.3 157.7L619.8 168.0M628.6 171.2L650.9 179.4M658.8 182.2L700.1 197.3M705.5 199.4L747.2 214.5M756.4 217.4L789.6 229.5M792.1 230.5L841.8 248.6M848.8 251.0L891.2 266.4M892.4 267.3L947.1 287.2M954.5 289.5L994.6 304.1M1001.3 307.0L1046.6 323.5M1054.8 326.2L1099.2 342.4M1105.2 344.3L1126.4 352.0M1174.2 369.9L1195.0 377.5M1200.5 379.0L1234.6 391.4M1236.3 392.4L1263.1 402.1M1266.9 403.6L1305.4 417.6M1308.1 418.2L1363.1 438.3M1414.0 457.2L1438.1 465.9M16.4 -44.9L52.3 -31.9M53.0 -31.7L102.9 -13.5M109.1 -11.2L160.5 7.5M162.7 8.5L198.2 21.4M205.4 23.8L237.6 35.5M238.8 36.4L274.6 49.5M281.1 51.5L333.5 70.5M335.0 71.1L370.0 83.8M436.9 108.6L463.7 118.4M467.0 119.2L507.5 134.0M512.2 135.7L531.3 142.7M536.3 144.2L590.4 163.9M591.1 164.3L613.7 172.6M643.6 183.7L682.4 197.8M684.2 198.2L723.3 212.4M723.6 213.0L759.6 226.1M764.8 228.0L799.3 240.5M800.2 240.3L851.5 259.0M857.1 261.4L905.8 279.2M909.5 280.5L932.7 288.9M935.7 290.1L973.8 304.0M980.9 306.1L1005.4 315.1M1006.3 315.8L1032.1 325.2M1037.9 326.9L1074.8 340.4M1076.4 341.2L1095.3 348.0M1099.1 349.1L1147.2 366.6M1151.6 368.2L1171.1 375.3M1172.5 376.1L1203.5 387.4M1204.3 387.5L1255.3 406.0M1261.9 408.5L1288.6 418.2M1335.6 435.5L1388.9 455.0M1390.8 455.6L1415.5 464.6M1418.9 465.8L1448.7 476.6M1450.1 476.9L1490.1 491.4M1490.8 491.9L1520.9 502.9M12.5 -34.3L34.5 -26.3M43.2 -23.5L68.3 -14.3M70.0 -13.7L92.4 -5.5M92.8 -5.2L133.3 9.5M137.1 10.8L167.0 21.7M171.9 23.8L210.5 37.8M220.0 40.8L241.0 48.4M269.4 58.9L291.2 66.8M291.8 67.0L335.7 83.0M336.6 83.6L355.5 90.5M362.9 93.3L392.1 103.9M397.0 105.7L428.2 117.1M429.7 117.2L475.3 133.8M521.8 150.9L567.4 167.5M575.0 170.5L624.7 188.6M631.3 190.5L652.3 198.2M661.3 201.5L701.3 216.1M755.4 236.1L788.2 248.1M793.3 249.7L815.0 257.6M815.0 257.9L844.0 268.4M846.2 268.8L883.7 282.4M887.5 284.3L934.1 301.3M936.4 301.9L982.7 318.8M985.2 319.3L1017.9 331.3M1018.5 331.8L1066.6 349.3M1071.3 351.2L1122.7 369.8M1127.8 371.3L1174.6 388.3M1180.0 390.6L1224.0 406.6M1227.0 407.6L1250.0 416.0M1250.0 416.1L1280.6 427.2M1282.2 427.9L1315.5 440.1M1320.6 441.9L1375.7 461.9M1380.7 463.4L1426.7 480.1M1432.4 482.2L1465.0 494.1M1470.1 496.2L1507.3 509.7M9.0 -24.8L38.0 -14.3M47.3 -10.8L100.6 8.6M109.6 11.5L145.5 24.5M152.7 27.6L179.3 37.3M186.0 39.2L229.0 54.8M237.8 58.5L284.9 75.7M284.9 75.8L312.2 85.7M313.4 86.1L365.5 105.1M371.4 106.9L411.4 121.4M414.9 123.1L439.4 132.0M443.5 133.1L469.5 142.5M477.2 145.3L530.2 164.6M535.4 166.7L564.6 177.4M564.9 177.5L615.0 195.8M620.1 197.5L667.0 214.6M667.8 215.1L698.2 226.2M703.7 227.7L749.3 244.2M754.8 246.2L794.5 260.7M794.5 261.3L844.8 279.6M846.8 279.7L888.8 295.0M891.1 296.1L944.5 315.6M950.5 317.9L991.5 332.8M993.3 333.1L1034.5 348.1M1034.6 348.5L1089.1 368.4M1091.8 369.2L1121.9 380.2M1123.1 380.6L1176.2 399.9M1178.6 400.6L1218.6 415.2M1219.5 415.9L1262.2 431.4M1271.2 434.2L1300.2 444.8M1304.5 446.4L1345.9 461.5M1354.5 465.1L1378.0 473.6M1386.6 476.7L1421.4 489.4M1425.2 490.3L1472.9 507.7M1481.5 511.0L1520.7 525.3M6.2 -17.0L61.7 3.2M115.8 23.0L169.6 42.6M226.6 63.3L278.0 82.0M286.1 85.0L330.3 101.1M334.5 102.7L372.3 116.4M372.8 116.5L398.9 126.1M400.7 126.6L421.7 134.2M426.7 135.7L475.3 153.4M512.2 167.0L551.7 181.4M561.0 184.6L606.7 201.3M609.4 202.5L653.4 218.5M660.0 220.9L696.2 234.1M698.7 235.1L739.5 250.0M743.8 251.7L787.0 267.4M794.2 269.8L839.2 286.2M840.5 286.7L884.9 302.8M929.2 318.9L967.6 332.9M977.0 336.2L1017.5 350.9M1026.3 354.0L1057.8 365.4M1063.3 367.6L1084.3 375.3M1093.3 378.5L1127.5 391.0M1129.0 391.6L1154.8 401.0M1162.3 403.5L1205.9 419.4M1214.3 422.8L1253.9 437.2M1257.1 438.0L1307.1 456.2M1314.0 459.2L1361.5 476.5M1366.9 478.3L1421.9 498.4M1429.3 500.7L1453.3 509.4M1457.1 511.3L1509.7 530.5M3.1 -8.6L23.1 -1.3M27.7 0.4L49.9 8.5M57.4 11.5L95.4 25.3M100.4 27.3L156.3 47.6M162.6 49.4L184.1 57.3M188.6 59.4L237.1 77.0M246.5 80.1L272.1 89.4M273.2 89.8L298.6 99.0M299.7 99.8L329.1 110.5M331.0 110.9L385.8 130.8M386.2 131.0L413.6 140.9M415.4 141.8L446.1 153.0M455.3 155.9L482.1 165.7M484.1 166.8L538.5 186.6M541.0 187.6L570.9 198.5M577.7 200.7L601.1 209.2M604.8 210.7L656.5 229.5M660.5 230.7L692.8 242.4M692.7 242.8L723.2 253.9M729.8 256.3L786.1 276.8M788.6 277.4L823.1 289.9M827.9 291.8L847.4 298.9M850.5 300.4L883.2 312.3M888.7 314.0L942.4 333.5M945.4 334.7L983.3 348.5M990.5 351.2L1031.7 366.2M1032.3 366.4L1065.2 378.4M1071.5 380.6L1109.8 394.5M1111.1 394.9L1152.3 409.9M1158.0 411.9L1211.9 431.5M1220.3 434.7L1265.4 451.1M1272.2 453.7L1313.2 468.6M1322.1 471.5L1344.6 479.7M1349.8 481.7L1386.9 495.2M1392.0 496.9L1413.2 504.6M1414.4 505.1L1436.2 513.0M1440.7 515.2L1488.1 532.4M0.6 -1.7L27.9 8.2M36.0 11.0L65.8 21.9M71.1 24.2L106.7 37.2M107.2 36.9L130.4 45.4M133.2 46.6L165.2 58.3M169.1 59.5L212.5 75.3M212.7 75.7L257.9 92.2M262.4 93.5L314.0 112.3M315.4 112.8L349.8 125.3M358.6 128.4L391.9 140.5M392.3 140.8L430.3 154.6M435.7 156.6L467.7 168.2M472.7 169.9L500.5 180.0M504.5 181.8L548.4 197.7M554.1 199.9L605.7 218.6M613.7 221.3L643.2 232.0M651.4 235.2L695.9 251.4M696.5 251.6L744.5 269.0M752.4 271.8L788.8 285.1M797.7 288.3L825.8 298.5M829.1 299.7L858.1 310.2M863.0 312.1L891.5 322.4M899.4 325.3L943.1 341.2M949.9 343.9L977.5 354.0M983.3 355.8L1021.4 369.7M1025.7 371.2L1069.9 387.3M1073.5 388.9L1096.5 397.2M1099.7 398.4L1127.1 408.3M1132.1 410.4L1180.7 428.1M1189.1 431.0L1226.8 444.7M1228.8 445.5L1256.3 455.6M1324.8 480.2L1379.7 500.2M1385.5 502.6L1437.2 521.4M1444.7 523.9L1491.4 540.9M35.1 18.1L69.5 30.6M73.6 32.0L124.6 50.5M164.6 65.2L192.1 75.2M195.9 76.6L238.6 92.1M242.3 93.3L292.1 111.4M338.6 128.6L368.9 139.7M370.7 140.3L412.6 155.5M421.6 158.5L443.8 166.6M450.7 169.1L483.8 181.1M492.9 184.5L547.2 204.2M550.3 205.7L583.9 217.9M591.7 220.8L628.7 234.3M673.9 250.8L726.0 269.7M735.0 273.1L785.5 291.4M794.4 294.2L849.3 314.2M963.5 356.2L1002.4 370.4M1008.9 372.6L1055.0 389.4M1059.7 391.1L1087.8 401.3M1096.8 404.4L1130.2 416.6M1132.5 417.5L1167.6 430.3M1171.2 431.6L1226.9 451.8M1236.0 455.2L1255.9 462.4M1258.9 463.3L1313.9 483.4M1372.0 504.5L1393.3 512.3M1397.1 513.7L1427.1 524.6M1428.5 525.3L1469.3 540.1M1474.0 542.0L1510.2 555.1M-5.3 14.6L48.1 34.0M106.0 54.8L153.9 72.2M162.5 75.7L197.1 88.3M206.5 91.3L226.3 98.6M229.1 99.9L267.7 114.0M274.2 116.4L297.0 124.7M347.2 142.6L390.2 158.2M394.7 159.9L415.3 167.5M418.4 168.9L453.9 181.9M463.0 184.7L500.3 198.3M535.0 211.0L586.7 229.8M626.7 244.6L665.0 258.5M720.6 278.4L745.2 287.4M749.1 288.8L775.2 298.3M782.7 301.0L817.6 313.7M819.8 315.1L842.5 323.3M845.4 324.3L874.7 335.0M881.5 337.0L930.4 354.8M932.7 355.6L961.2 366.0M992.8 377.9L1028.2 390.8M1029.5 391.0L1063.3 403.3M1070.8 405.9L1107.8 419.4M1113.1 421.7L1164.9 440.5M1165.1 440.3L1185.1 447.6M1188.3 448.9L1208.8 456.4M1209.8 456.9L1229.9 464.3M1233.6 465.2L1274.6 480.1M1282.7 483.5L1312.8 494.5M1315.6 495.5L1344.7 506.1M1345.8 506.1L1382.1 519.4M1387.7 521.4L1427.9 536.0M1436.9 539.2L1459.5 547.4M1461.6 548.3L1504.2 563.8M-8.0 21.9L28.0 35.0M61.0 47.0L113.8 66.2M120.9 69.1L167.0 85.8M176.0 89.2L227.9 108.1M228.5 108.3L281.6 127.6M288.5 129.8L312.7 138.6M314.2 139.2L338.1 147.9M343.0 149.9L373.5 161.0M381.2 163.8L423.2 179.1M515.5 212.7L540.5 221.8M544.3 223.3L578.3 235.6M583.4 237.4L610.4 247.2M618.7 250.2L670.9 269.2M678.1 271.5L713.5 284.4M714.3 285.1L770.0 305.4M777.5 308.1L822.0 324.3M822.6 324.6L869.4 341.6M873.1 342.9L919.5 359.8M923.8 360.9L951.2 370.9M959.7 374.0L988.8 384.6M989.7 385.2L1033.3 401.1M1037.1 402.7L1081.9 419.0M1086.3 420.6L1138.3 439.5M1138.9 439.3L1182.5 455.1M1189.8 458.3L1237.0 475.4M1242.5 477.1L1276.8 489.6M1283.4 492.0L1304.8 499.8M1307.2 500.7L1342.6 513.6M1348.7 516.0L1377.0 526.4M1379.2 527.0L1427.7 544.6M1434.9 547.1L1466.9 558.8M1467.8 559.1L1504.6 572.5M-10.9 29.9L40.1 48.5M46.2 50.3L76.6 61.3M137.7 84.0L178.1 98.8M186.0 101.4L207.9 109.4M214.1 111.6L268.0 131.2M277.0 134.7L296.8 141.9M300.7 143.0L334.2 155.2M337.3 156.2L378.8 171.3M382.0 172.6L421.7 187.1M451.7 198.3L471.0 205.3M525.2 225.0L562.5 238.6M565.9 239.6L604.2 253.5M670.8 277.8L696.1 287.0M702.7 289.6L756.3 309.0M759.5 310.1L812.8 329.5M820.7 332.7L860.4 347.2M869.1 350.0L893.1 358.7M893.3 358.6L926.3 370.6M933.1 373.4L978.1 389.8M987.5 392.8L1008.4 400.4M1009.2 401.0L1042.7 413.2M1042.9 413.2L1082.1 427.5M1084.5 428.2L1134.2 446.3M1139.0 448.5L1180.4 463.6M1220.8 478.2L1248.4 488.3M1253.2 489.6L1274.1 497.2M1274.9 497.4L1302.4 507.5M1366.6 531.0L1388.8 539.0M1390.0 539.4L1418.8 549.9M1428.1 553.4L1483.8 573.7M-13.9 38.1L18.4 49.8M67.4 68.1L106.4 82.3M112.7 84.2L141.5 94.7M145.5 96.0L194.5 113.9M198.7 115.8L231.7 127.8M238.9 130.2L289.8 148.7M329.2 163.2L361.9 175.1M369.1 177.4L415.7 194.4M453.9 208.4L501.6 225.7M502.8 226.4L543.9 241.4M549.2 243.1L600.7 261.8M607.8 264.6L635.4 274.7M639.9 276.4L669.0 286.9M881.9 364.3L918.3 377.6M922.0 379.0L964.4 394.4M971.2 397.0L1024.9 416.5M1032.7 419.2L1073.0 433.8M1082.0 437.5L1118.9 450.9M1120.4 451.1L1162.7 466.5M1166.2 467.7L1191.9 477.1M1194.8 478.5L1239.5 494.8M1247.1 497.6L1285.0 511.3M1288.5 512.1L1314.7 521.6M1319.3 523.7L1358.8 538.0M1364.5 540.0L1390.4 549.4M1392.0 550.3L1434.1 565.6M1440.3 567.5L1474.0 579.7M-17.5 48.0L31.7 65.9M129.9 101.3L153.8 110.0M161.2 112.7L210.1 130.4M244.8 143.2L276.8 154.9M284.4 158.1L305.9 165.9M308.9 166.9L330.7 174.9M338.8 177.4L380.9 192.7M386.3 195.0L409.2 203.4M415.8 205.6L464.6 223.4M473.5 226.5L493.7 233.8M498.1 235.4L542.0 251.3M575.1 263.7L610.6 276.6M613.4 277.2L635.1 285.1M639.2 286.6L673.0 298.9M681.3 302.3L731.9 320.7M907.2 384.7L962.8 404.9M967.4 406.2L992.0 415.2M992.7 415.9L1042.3 433.9M1046.7 435.3L1102.9 455.7M1110.6 458.3L1143.7 470.3M1152.2 473.9L1208.6 494.4M1209.6 494.8L1258.4 512.5M1265.5 515.1L1299.1 527.3M1304.5 529.0L1335.2 540.2M1340.8 542.0L1376.7 555.0M1382.8 557.5L1430.8 574.9M1433.0 576.1L1487.2 595.8M-19.8 54.4L8.3 64.6M12.0 65.9L63.2 84.5M70.0 87.0L106.3 100.2M111.2 102.4L157.3 119.2M165.1 121.8L204.9 136.3M206.5 136.9L244.2 150.6M246.8 151.2L299.6 170.4M308.0 173.5L356.3 191.1M363.1 194.1L393.9 205.3M395.0 205.7L439.1 221.8M444.0 223.4L466.9 231.8M471.6 233.7L512.1 248.4M513.0 248.5L561.5 266.1M570.4 269.1L618.9 286.8M621.1 287.5L644.4 296.0M653.3 299.6L690.2 313.1M690.6 313.1L710.1 320.2M712.7 321.2L736.2 329.7M743.7 332.2L791.2 349.5M795.1 351.0L818.3 359.5M822.9 361.1L857.9 373.8M954.1 408.8L989.6 421.7M997.8 424.9L1036.8 439.1M1039.9 440.4L1091.0 459.0M1099.8 461.7L1135.2 474.6M1138.2 476.3L1158.8 483.8M1164.8 485.6L1216.0 504.2M1221.6 506.4L1263.8 521.8M1264.4 521.8L1314.1 539.9M1314.9 540.5L1334.0 547.5M1340.8 549.9L1388.6 567.3M1391.6 568.0L1439.6 585.5M-22.2 61.1L17.3 75.4M49.6 87.4L102.4 106.6M104.1 107.0L138.1 119.4M139.4 120.0L181.3 135.3M184.9 136.3L224.1 150.6M226.9 151.9L270.2 167.7M270.5 167.9L289.7 174.9M298.3 178.0L318.2 185.3M327.6 188.5L358.6 199.8M362.4 201.3L391.6 211.9M395.9 213.7L429.5 225.9M434.4 227.5L461.1 237.2M466.8 239.2L508.5 254.4M517.2 257.7L549.4 269.4M549.6 269.0L588.9 283.3M621.0 295.4L646.3 304.6M650.1 306.2L682.5 317.9M721.3 332.0L740.7 339.1M743.7 340.0L772.1 350.3M776.0 351.7L827.6 370.5M834.9 373.2L877.3 388.6M880.5 389.8L925.0 406.0M928.8 407.2L978.6 425.3M1027.4 443.1L1064.5 456.6M1064.7 456.7L1112.8 474.2M1118.4 476.4L1143.9 485.7M1152.1 488.4L1192.5 503.2M1198.0 505.1L1234.2 518.3M1242.5 521.6L1290.3 539.0M1297.2 541.2L1343.2 557.9M1345.4 559.3L1370.8 568.5M1375.4 570.0L1406.2 581.2M1412.8 583.3L1451.5 597.3M-24.9 68.5L30.8 88.8M72.1 103.8L124.5 122.9M133.5 126.3L186.1 145.4M192.1 147.9L233.5 163.0M237.7 164.5L281.7 180.5M286.0 181.9L322.5 195.1M328.6 197.2L359.2 208.3M363.9 210.3L399.4 223.2M400.9 223.5L446.1 240.0M454.9 243.2L478.9 251.9M484.9 254.4L534.2 272.4M543.0 275.5L562.7 282.7M564.8 283.4L588.1 292.0M595.8 294.9L646.7 313.4M654.4 315.9L681.4 325.7M737.4 346.1L768.8 357.5M777.1 360.8L817.9 375.6M827.1 378.8L865.1 392.7M891.9 402.5L944.7 421.7M951.2 424.0L994.3 439.7M998.5 441.0L1035.6 454.4M1035.9 454.8L1078.0 470.1M1078.9 470.4L1106.7 480.5M1188.6 510.3L1243.6 530.3M1246.8 531.4L1294.5 548.8M1303.1 552.3L1353.9 570.8M1362.4 573.7L1410.5 591.2M1412.9 592.3L1447.2 604.8M1449.4 605.1L1500.2 623.6M-28.4 78.0L14.4 93.6M16.7 94.2L37.6 101.8M46.9 105.4L68.1 113.1M75.8 116.0L100.2 124.9M131.7 136.1L160.5 146.5M196.9 160.1L250.1 179.4M256.2 181.4L296.5 196.1M298.3 196.4L334.2 209.5M341.5 212.1L383.5 227.4M384.8 228.1L425.8 243.0M431.5 245.3L475.6 261.4M479.5 262.5L533.4 282.1M539.4 284.4L580.1 299.2M583.7 300.7L615.6 312.3M666.1 330.3L689.4 338.8M693.7 340.6L747.3 360.1M752.3 361.8L779.1 371.6M780.3 371.9L812.4 383.6M813.0 384.3L857.0 400.3M860.5 401.6L907.1 418.6M909.3 419.3L956.1 436.4M961.0 437.8L991.1 448.8M995.7 450.6L1030.7 463.3M1031.1 463.3L1075.5 479.5M1081.8 481.8L1110.7 492.3M1113.7 493.5L1149.7 506.7M1157.9 509.6L1202.8 525.9M1203.3 526.1L1237.6 538.5M1244.4 541.1L1263.6 548.1M1265.0 548.7L1314.4 566.7M1362.3 584.0L1415.7 603.5M1416.0 603.5L1445.3 614.1M-30.9 84.9L10.8 100.1M19.2 102.7L66.4 119.9M68.2 120.7L88.7 128.1M94.2 130.2L143.6 148.2M151.2 150.9L184.2 162.9M190.6 165.5L222.0 176.9M222.4 176.7L255.9 188.9M264.6 192.1L296.7 203.8M305.2 206.9L340.9 219.9M350.0 223.5L383.2 235.6M386.0 236.3L426.8 251.1M434.4 254.4L456.2 262.4M464.3 265.3L504.7 280.0M505.1 280.1L556.4 298.8M565.4 301.9L595.8 313.0M604.4 316.3L646.8 331.7M655.8 334.8L711.8 355.2M720.5 358.2L747.8 368.2M755.1 370.5L804.7 388.6M807.0 389.8L858.3 408.5M859.7 408.8L888.0 419.1M892.2 420.5L931.2 434.7M938.9 437.9L992.9 457.5M1000.6 460.1L1021.2 467.6M1026.5 469.7L1045.8 476.7M1054.5 479.7L1089.6 492.5M1097.8 495.7L1141.3 511.5M1144.0 512.6L1163.1 519.5M1165.7 520.0L1222.0 540.5M1228.6 543.1L1274.7 559.8M1283.9 563.5L1338.2 583.3M1343.6 585.1L1363.5 592.3M1364.7 592.6L1401.4 606.0M1450.7 624.0L1472.4 631.8M-33.5 92.1L9.2 107.7M9.3 107.8L44.1 120.5M50.2 122.2L96.2 138.9M100.2 140.6L140.9 155.4M146.3 157.5L193.5 174.7M201.9 177.7L242.6 192.5M245.5 193.4L270.7 202.6M280.0 205.9L331.5 224.6M338.7 227.3L385.3 244.3M389.0 245.5L441.8 264.7M473.7 276.9L518.5 293.2M577.3 314.3L628.1 332.8M631.9 333.9L686.9 354.0M693.4 356.3L713.7 363.7M808.0 397.9L834.4 407.6M842.4 410.6L890.0 427.9M893.5 429.4L924.8 440.8M926.9 441.6L966.8 456.1M973.8 458.7L1026.3 477.8M1028.9 478.8L1066.7 492.5M1068.0 492.9L1121.9 512.5M1123.5 512.8L1152.0 523.2M1155.5 525.0L1189.2 537.3M1248.0 558.4L1279.3 569.8M1284.4 572.0L1329.7 588.5M1335.5 590.1L1377.5 605.4M1378.8 606.0L1401.8 614.4M1407.5 616.6L1434.6 626.4M1442.9 629.4L1474.6 640.9M-36.3 99.7L-13.6 108.0M-7.5 110.0L38.4 126.7M40.6 127.6L89.3 145.3M91.8 146.0L146.1 165.7M152.1 168.4L205.3 187.8M240.1 200.0L266.1 209.5M328.1 232.1L375.2 249.2M382.4 252.1L405.9 260.6M410.6 262.2L445.1 274.7M453.9 277.9L500.1 294.7M504.2 296.3L557.2 315.6M563.9 318.0L606.8 333.6M609.3 334.4L655.3 351.1M660.3 353.0L711.6 371.6M711.9 372.1L736.0 380.8M736.9 381.3L775.9 395.5M784.7 398.5L809.4 407.5M814.2 409.3L842.5 419.6M842.7 419.8L878.6 432.9M884.8 434.7L908.3 443.2M914.5 445.7L969.4 465.7M973.2 466.8L1012.6 481.2M1013.9 481.8L1040.7 491.6M1042.6 492.6L1074.9 504.3M1076.1 504.3L1102.8 514.0M1108.7 516.1L1161.6 535.4M1167.4 537.6L1198.7 549.0M1206.7 552.2L1252.7 569.0M1305.3 587.8L1344.6 602.1M1349.7 604.3L1400.0 622.6M1401.3 622.6L1422.2 630.2M1425.8 632.1L1476.4 650.5M-38.9 107.0L5.6 123.2M9.3 124.2L58.1 142.0M63.6 144.5L110.1 161.4M115.4 163.0L139.9 171.9M146.1 174.2L195.7 192.3M198.3 193.0L224.7 202.7M226.3 203.5L247.3 211.1M250.8 212.6L286.4 225.6M293.3 227.9L315.8 236.1M324.9 239.1L350.4 248.4M351.2 248.9L383.5 260.7M385.4 261.2L441.4 281.5M450.3 285.2L481.2 296.5M576.1 330.7L630.8 350.6M633.5 351.6L686.4 370.9M690.3 372.4L737.0 389.4M742.6 391.3L789.9 408.5M796.6 411.2L822.2 420.5M831.5 423.8L857.4 433.2M862.9 435.4L902.4 449.8M911.6 452.5L941.3 463.3M941.7 463.6L994.3 482.7M999.9 485.2L1026.6 494.9M1034.5 497.8L1055.2 505.3M1057.7 506.2L1088.5 517.4M1092.1 518.3L1111.9 525.5M1120.5 528.6L1162.6 543.9M1169.0 546.4L1217.6 564.1M1224.3 566.7L1264.1 581.1M1268.6 583.0L1289.9 590.8M1292.0 591.6L1336.2 607.7M1342.2 609.7L1363.8 617.5M1365.4 618.1L1416.0 636.6M0.1 130.9L41.5 146.0M42.5 146.4L82.3 160.9M84.0 161.7L135.6 180.5M138.6 181.7L175.8 195.2M176.1 195.1L231.3 215.2M239.1 217.8L265.6 227.4M320.4 247.4L355.0 260.0M363.8 263.4L401.7 277.2M407.5 279.0L440.5 291.0M444.1 293.0L469.7 302.3M477.1 305.0L512.7 317.9M519.6 319.9L555.4 332.9M556.7 333.8L595.3 347.8M706.2 388.1L732.2 397.6M737.6 399.2L773.2 412.1M782.3 416.0L811.1 426.4M814.4 427.3L870.6 447.8M877.0 450.0L919.3 465.3M922.8 467.0L945.1 475.2M952.8 477.6L995.2 493.0M1000.9 495.5L1037.0 508.6M1038.1 509.0L1075.3 522.6M1075.7 522.8L1100.5 531.8M1152.6 550.3L1179.8 560.2M1183.6 561.8L1217.9 574.3M1224.1 576.4L1269.0 592.8M1278.0 596.0L1320.0 611.2M1376.8 632.0L1404.6 642.1M1406.9 643.3L1443.2 656.5M-45.8 125.7L4.5 144.0M13.5 147.7L47.0 159.9M53.5 162.2L81.8 172.5M91.4 175.5L142.2 194.0M144.8 195.3L166.2 203.1M167.9 203.7L199.2 215.1M200.4 215.4L235.0 228.0M244.2 231.3L298.7 251.1M302.2 252.3L356.1 271.9M358.8 273.2L384.6 282.6M385.0 282.3L424.4 296.7M425.3 297.1L474.1 314.9M477.0 315.8L508.9 327.4M513.3 329.5L544.9 340.9M587.8 356.5L614.0 366.1M650.0 378.9L681.3 390.3M686.6 392.3L716.8 403.3M721.1 404.8L756.6 417.7M760.1 419.2L780.9 426.8M813.7 438.6L839.2 447.9M940.6 484.9L972.4 496.5M977.9 498.1L1019.4 513.2M1020.0 513.7L1043.3 522.2M1044.0 522.6L1083.4 536.9M1090.5 539.5L1114.5 548.3M1123.7 551.3L1159.4 564.3M1167.5 567.2L1209.2 582.4M1215.2 584.7L1249.9 597.4M1253.6 598.5L1309.1 618.7M1361.5 637.9L1412.5 656.5M1416.8 658.2L1468.0 676.8M-49.2 135.2L-18.7 146.3M-13.7 148.2L27.8 163.3M31.7 164.8L86.1 184.6M92.7 186.7L123.8 198.1M130.8 201.1L183.5 220.2M191.9 223.2L235.8 239.2M241.5 241.3L283.8 256.7M290.4 259.2L334.4 275.2M338.9 276.5L385.5 293.5M390.7 295.4L428.9 309.3M433.2 311.0L462.0 321.5M471.4 324.6L503.1 336.2M512.0 339.4L562.3 357.7M570.0 360.4L616.3 377.3M624.8 380.6L651.1 390.2M693.9 405.8L750.0 426.3M757.4 429.0L792.2 441.7M801.7 445.0L851.7 463.2M853.6 463.7L907.2 483.2M908.4 484.1L935.7 494.0M940.8 495.5L990.7 513.6M995.8 515.7L1020.0 524.5M1027.2 527.3L1048.3 535.0M1055.8 537.7L1097.7 553.0M1101.2 553.8L1154.4 573.2M1155.5 573.9L1177.9 582.0M1184.0 584.4L1224.1 599.0M1233.5 602.2L1273.6 616.8M1278.8 618.6L1310.4 630.1M1312.8 631.0L1355.4 646.5M1360.8 648.7L1390.3 659.5M1390.4 659.5L1421.9 670.9M1424.1 671.6L1480.4 692.1M-51.7 142.1L-12.5 156.4M-12.1 156.5L42.6 176.5M51.1 179.2L82.2 190.5M89.1 193.4L112.7 202.0M119.9 204.0L170.8 222.6M177.9 225.1L214.1 238.3M215.6 238.9L260.1 255.1M307.8 273.0L344.0 286.2M352.3 289.0L398.6 305.8M457.2 327.1L503.4 343.9M505.5 345.0L530.8 354.2M533.1 354.5L555.3 362.6M560.2 364.5L599.3 378.7M602.0 379.7L637.0 392.4M665.2 402.9L699.1 415.2M728.5 426.0L776.7 443.6M785.4 446.8L838.2 466.0M845.0 468.0L895.2 486.3M898.9 488.1L927.6 498.6M934.4 500.6L983.1 518.4M983.5 519.0L1027.2 534.9M1067.2 549.2L1102.1 561.9M1110.9 564.8L1156.2 581.3M1157.4 581.9L1194.8 595.5M1287.2 628.9L1317.8 640.1M1378.3 662.5L1410.9 674.4M1413.3 675.1L1453.1 689.6M-54.9 150.8L-15.4 165.2M-15.2 165.3L17.9 177.3M19.5 177.9L42.2 186.1M50.1 188.9L74.9 197.9M80.4 200.1L99.6 207.1M106.4 209.8L133.6 219.7M183.1 237.6L203.2 244.9M208.7 246.9L260.2 265.6M264.3 267.1L300.1 280.2M308.7 283.0L351.2 298.5M415.4 321.9L455.8 336.5M489.8 349.1L541.0 367.7M543.6 368.7L585.1 383.8M590.6 385.7L609.6 392.7M643.7 404.9L663.6 412.1M667.5 413.4L709.2 428.6M712.7 430.3L754.8 445.6M763.8 448.9L791.8 459.1M800.8 462.4L839.1 476.3M839.9 476.5L863.6 485.1M914.7 503.9L951.6 517.3M952.8 517.9L985.0 529.6M988.5 530.4L1028.6 545.0M1035.9 547.7L1083.2 564.9M1085.1 565.8L1120.5 578.8M1128.2 581.1L1151.8 589.7M1152.6 590.2L1179.4 599.9M1184.4 601.8L1224.2 616.3M1230.8 618.6L1252.3 626.4M1280.3 636.7L1320.3 651.2M1324.8 652.9L1365.6 667.8M1368.4 668.8L1409.5 683.8M1410.1 684.1L1444.0 696.4M-57.2 157.1L-33.9 165.6M-25.4 168.3L6.2 179.8M6.2 179.7L44.6 193.6M47.8 194.9L78.0 205.9M84.9 208.3L125.9 223.2M132.3 225.5L164.2 237.1M167.2 238.5L213.9 255.5M220.0 257.7L252.0 269.3M255.6 270.5L304.6 288.3M310.1 290.6L353.5 306.4M360.2 309.0L400.2 323.5M409.2 326.6L452.8 342.4M458.4 344.7L501.1 360.2M506.9 362.3L539.2 374.0M574.5 386.7L618.6 402.7M625.8 405.7L666.0 420.3M669.1 421.2L693.2 429.9M693.9 430.1L738.3 446.2M742.8 447.7L770.3 457.7M772.0 458.9L793.7 466.8M831.0 480.0L875.6 496.2M879.8 497.8L914.9 510.6M922.7 513.7L964.9 529.1M970.6 530.7L1009.1 544.7M1011.8 546.2L1053.4 561.3M1062.9 564.5L1110.1 581.7M1110.8 581.9L1134.4 590.4M1141.1 593.1L1167.0 602.5M1215.1 619.8L1242.1 629.7M1247.8 631.8L1300.2 650.8M1305.5 652.6L1355.6 670.8M1357.5 671.8L1390.4 683.8M1395.3 685.3L1427.8 697.1M-59.7 164.0L-4.6 184.0M0.1 185.7L30.3 196.7M38.8 199.7L91.5 218.9M204.4 260.2L225.8 268.0M232.6 270.3L267.8 283.1M273.1 285.6L300.7 295.6M306.5 297.5L346.3 312.0M353.2 314.4L386.4 326.5M387.6 326.9L436.3 344.6M436.7 344.7L478.4 359.9M482.0 361.1L536.7 381.0M538.9 382.3L559.0 389.7M565.6 391.8L601.8 404.9M606.5 406.9L640.3 419.2M647.6 421.7L689.1 436.8M696.9 439.5L725.8 450.0M727.0 450.3L766.9 464.8M775.8 468.4L794.7 475.3M797.4 476.1L826.7 486.8M835.6 490.2L888.6 509.5M953.3 532.7L1004.2 551.2M1012.1 554.5L1051.4 568.8M1059.7 571.3L1097.6 585.1M1103.1 587.3L1157.4 607.1M1165.6 610.2L1206.7 625.1M1249.3 640.4L1272.8 649.0M1277.8 651.2L1320.3 666.7M1328.2 669.6L1353.1 678.7M1357.2 679.9L1413.0 700.2M1421.3 703.5L1454.9 715.7M-61.9 170.0L-42.1 177.2M-36.5 178.7L3.6 193.3M12.7 197.2L61.4 214.9M64.9 216.1L94.5 226.9M97.1 227.7L124.7 237.8M126.1 238.2L156.3 249.2M164.3 252.0L191.8 262.0M199.4 265.1L219.8 272.5M223.2 273.3L262.7 287.7M270.7 290.9L293.2 299.1M299.6 301.1L336.6 314.6M342.1 316.7L371.3 327.4M371.4 327.2L404.9 339.4M405.4 340.0L443.2 353.8M498.2 373.4L539.9 388.6M548.2 391.7L589.3 406.7M593.5 408.6L617.8 417.4M623.7 419.0L662.6 433.2M668.2 435.6L706.7 449.7M707.8 449.9L732.8 459.0M763.9 470.0L789.2 479.2M792.9 481.2L823.3 492.2M830.4 494.3L874.1 510.2M881.5 513.3L902.1 520.8M907.6 522.7L930.0 530.9M934.5 532.5L980.0 549.1M985.6 551.1L1034.6 568.9M1040.0 570.7L1060.4 578.1M1061.0 578.3L1093.2 590.0M1096.1 591.4L1122.7 601.1M1131.1 603.7L1177.7 620.6M1180.0 621.6L1212.5 633.4M1218.9 636.0L1271.3 655.1M1279.9 658.3L1311.1 669.6M1316.7 671.8L1369.0 690.9M1409.0 705.1L1445.6 718.4M-64.6 177.5L-36.7 187.7M-27.5 190.6L18.6 207.4M24.5 209.5L45.1 217.0M51.0 219.2L105.8 239.2M107.1 240.1L160.8 259.7M227.4 283.3L249.3 291.3M252.2 292.4L284.5 304.2M285.7 305.0L333.2 322.3M337.6 323.8L375.7 337.6M381.9 340.1L403.5 348.0M407.8 349.1L453.3 365.6M454.4 366.1L505.6 384.8M550.8 401.4L573.4 409.6M574.1 410.1L600.7 419.8M607.0 421.8L659.9 441.1M668.8 444.3L719.7 462.8M727.0 465.4L773.3 482.3M779.7 484.6L800.8 492.2M803.9 493.6L848.2 509.7M850.1 510.2L895.0 526.5M898.3 527.8L944.9 544.7M948.1 545.9L998.6 564.3M1007.3 567.5L1029.7 575.6M1032.7 576.6L1066.6 589.0M1075.5 592.2L1108.9 604.3M1113.6 606.1L1164.5 624.6M1168.5 625.9L1223.6 645.9M1223.9 646.0L1262.0 659.9M1268.1 662.4L1323.8 682.7M1324.8 683.1L1353.9 693.7M1356.0 694.3L1387.5 705.8M1393.3 707.7L1418.2 716.7M-67.1 184.4L-15.4 203.2M62.4 231.3L85.8 239.9M94.7 242.8L148.8 262.5M153.0 264.2L175.9 272.6M179.8 274.0L202.4 282.2M209.3 284.7L261.8 303.9M263.7 304.8L304.7 319.7M309.3 321.1L347.7 335.1M348.0 335.0L367.7 342.2M369.3 342.7L393.9 351.7M399.3 354.1L453.0 373.7M483.8 384.4L532.0 401.9M534.1 403.2L566.7 415.1M571.4 416.3L625.4 435.9M627.0 436.7L660.1 448.7M664.3 450.1L690.8 459.7M691.4 459.9L727.8 473.2M734.1 476.0L755.0 483.6M789.2 495.8L836.8 513.2M837.7 513.4L883.4 530.1M887.7 531.9L927.0 546.3M929.0 546.9L949.2 554.3M952.9 555.4L979.4 565.0M981.5 565.8L1019.5 579.7M1023.6 581.0L1055.4 592.6M1055.4 592.8L1080.9 602.1M1082.2 602.2L1135.1 621.5M1138.8 623.1L1180.4 638.3M1184.1 639.7L1211.6 649.6M1211.8 649.8L1236.9 658.9M1240.8 659.9L1271.0 670.9M1274.6 672.4L1296.2 680.3M1302.3 682.5L1354.5 701.5M1402.4 719.2L1423.8 727.0M-69.5 190.8L-32.8 204.2M-25.4 207.0L28.4 226.6M29.9 227.4L61.7 239.0M68.2 241.1L97.5 251.7M98.7 252.4L124.2 261.7M129.0 263.3L165.4 276.6M171.9 278.7L228.0 299.1M230.8 300.7L271.7 315.5M320.2 333.1L354.6 345.6M362.1 348.4L394.2 360.1M403.5 363.3L438.7 376.1M438.9 376.2L482.0 391.9M490.0 394.6L532.7 410.1M591.3 431.5L640.3 449.3M643.3 450.6L694.0 469.1M696.0 469.9L726.7 481.1M734.9 483.6L766.1 494.9M767.9 496.1L798.0 507.0M805.4 509.7L833.5 520.0M842.0 522.7L895.9 542.3M904.4 545.4L926.2 553.4M926.6 553.5L964.4 567.2M972.8 570.2L1023.2 588.5M1027.8 590.3L1075.5 607.6M1128.5 627.1L1182.1 646.7M1188.3 649.0L1243.5 669.1M1249.4 670.8L1282.1 682.7M1290.9 686.1L1314.7 694.8M1322.4 697.7L1341.7 704.8M1386.1 720.8L1438.4 739.8M-71.6 196.8L-31.1 211.5M-28.7 212.1L1.6 223.1M4.2 224.3L55.2 242.9M56.1 243.3L104.5 261.0M105.0 261.1L137.3 272.9M139.5 273.2L193.3 292.8M197.1 294.3L245.0 311.7M248.4 313.1L273.3 322.2M278.4 323.7L331.3 343.0M339.5 346.4L394.3 366.3M396.7 367.0L436.8 381.6M444.1 384.3L487.5 400.1M494.1 402.7L519.7 412.0M527.6 414.7L564.5 428.1M564.9 428.2L615.7 446.6M620.7 448.4L658.3 462.1M665.6 465.0L702.7 478.6M706.7 479.9L743.1 493.2M750.3 495.8L788.5 509.7M792.2 510.9L825.4 523.0M829.4 524.8L853.3 533.5M862.0 536.6L888.8 546.3M896.2 548.9L946.6 567.3M951.7 569.4L971.8 576.7M979.2 578.9L1000.5 586.6M1006.3 589.1L1030.6 598.0M1030.9 597.8L1084.0 617.1M1086.8 618.1L1121.4 630.7M1124.3 631.9L1153.9 642.7M1201.7 660.1L1253.3 678.9M1259.1 680.8L1307.3 698.3M1314.0 701.2L1357.6 717.0M1359.0 717.3L1411.2 736.3M-75.4 207.1L-44.5 218.3M-43.1 218.7L-12.9 229.7M-7.9 231.4L30.9 245.5M32.7 246.4L59.7 256.2M60.2 256.1L105.0 272.4M110.4 274.5L150.0 288.9M156.7 291.4L184.0 301.4M186.0 301.8L220.9 314.5M245.0 323.5L282.7 337.3M291.0 340.3L313.7 348.6M316.6 349.7L363.5 366.8M370.9 369.6L395.8 378.7M397.7 379.4L436.3 393.4M438.2 394.1L458.0 401.3M465.9 404.2L504.8 418.3M506.2 418.9L535.5 429.6M538.8 430.4L587.7 448.2M591.3 449.7L626.4 462.5M635.4 465.9L688.5 485.2M743.7 505.0L794.8 523.6M801.9 526.0L847.9 542.8M853.8 545.2L902.4 562.9M907.6 564.6L958.2 583.0M959.9 583.8L1008.3 601.4M1010.9 602.1L1053.9 617.7M1059.1 619.6L1109.1 637.8M1109.4 637.9L1133.6 646.7M1134.4 647.2L1182.7 664.8M1187.1 666.7L1212.8 676.1M1220.0 678.1L1241.7 686.0M1246.9 688.5L1297.2 706.8M1301.9 708.2L1327.1 717.4M1335.3 720.7L1380.6 737.2M1380.9 737.0L1436.1 757.0M-78.9 216.7L-23.5 236.9M-20.1 237.9L31.4 256.6M85.7 276.6L108.0 284.8M108.3 284.5L148.8 299.3M148.9 299.2L181.8 311.1M182.2 311.4L231.3 329.3M238.5 332.1L286.9 349.7M293.5 352.0L342.9 370.0M348.3 371.8L388.4 386.4M396.0 389.3L418.7 397.6M423.7 399.2L452.5 409.7M458.7 412.2L484.2 421.4M490.8 423.6L514.5 432.2M519.7 434.5L566.8 451.6M571.2 453.3L594.2 461.7M597.5 462.4L641.4 478.4M642.9 479.3L674.2 490.7M680.4 492.8L699.6 499.8M755.2 519.9L774.0 526.7M779.9 528.9L835.1 549.0M843.3 552.2L894.4 570.8M902.6 573.9L947.5 590.3M990.5 605.9L1039.5 623.8M1091.4 642.4L1140.6 660.3M1142.2 660.8L1175.5 673.0M1178.3 674.3L1222.8 690.5M1257.8 703.1L1295.4 716.8M1298.5 717.7L1329.7 729.1M1339.0 732.8L1368.2 743.4M1371.6 744.3L1410.6 758.5M-81.9 225.1L-51.0 236.3M-48.2 238.0L-26.0 246.0M-22.5 247.0L21.3 262.9M25.6 264.5L75.2 282.5M102.6 292.7L150.6 310.2M152.1 310.6L177.8 319.9M178.4 320.0L209.4 331.3M210.6 331.8L259.1 349.5M267.0 352.3L293.2 361.9M296.8 363.0L350.6 382.7M356.4 384.6L375.9 391.7M377.2 392.7L400.1 401.1M407.5 403.5L429.8 411.6M430.1 411.7L456.5 421.3M459.0 422.3L490.0 433.6M498.1 436.8L532.7 449.4M542.2 452.3L595.5 471.7M659.3 495.2L689.5 506.3M696.7 508.6L735.6 522.8M736.4 523.1L792.4 543.4M852.6 565.5L901.4 583.3M954.2 602.7L997.3 618.4M997.7 618.3L1029.7 629.9M1030.9 630.6L1080.4 648.6M1081.5 649.1L1131.3 667.2M1137.7 669.6L1169.5 681.2M1173.7 682.3L1201.4 692.3M1201.4 692.8L1227.6 702.3M1270.9 718.0L1315.0 734.1M1352.8 747.7L1387.8 760.4M1389.9 760.9L1414.1 769.7M-84.3 231.7L-46.4 245.5M-9.3 259.3L16.6 268.7M80.8 291.8L117.8 305.3M158.3 320.0L210.0 338.8M217.0 341.2L243.0 350.7M249.6 353.4L273.3 362.0M312.6 376.2L367.4 396.1M368.5 396.8L403.7 409.6M412.7 413.0L452.0 427.2M459.1 429.8L494.2 442.5M498.5 443.7L521.5 452.1M522.7 452.7L557.6 465.4M565.0 468.2L601.1 481.3M605.8 482.8L657.2 501.5M663.8 504.2L717.5 523.7M722.9 525.8L754.8 537.4M759.6 539.0L788.4 549.5M849.8 571.6L883.5 583.9M891.0 586.8L944.9 606.4M945.2 606.7L1001.0 627.0M1006.5 628.9L1030.2 637.5M1036.3 639.6L1075.4 653.9M1075.6 654.0L1114.8 668.3M1119.4 669.8L1157.3 683.6M1166.0 686.8L1221.0 706.8M1224.5 707.8L1255.4 719.0M1255.4 719.1L1292.1 732.4M1295.8 734.2L1347.8 753.1M1354.4 755.2L1388.6 767.6M-86.7 238.3L-45.0 253.5M-38.6 255.8L-15.5 264.2M-6.9 267.2L14.8 275.1M19.0 276.4L71.2 295.4M75.8 297.4L125.4 315.5M126.3 315.7L145.9 322.8M153.4 325.2L194.0 340.0M194.6 340.8L241.0 357.7M245.0 358.7L291.5 375.6M296.9 378.0L315.9 384.9M320.4 386.1L353.2 398.0M359.4 400.7L392.1 412.6M395.2 413.6L426.9 425.2M434.2 427.4L465.8 438.9M472.2 441.8L499.0 451.6M503.6 452.8L542.4 466.9M546.6 468.9L585.6 483.1M591.3 484.8L636.5 501.2M705.5 526.3L735.9 537.3M737.9 538.5L766.3 548.8M774.0 551.2L805.1 562.4M807.7 563.9L844.1 577.1M849.2 578.6L873.9 587.6M878.9 589.6L925.9 606.7M929.8 607.9L984.0 627.7M986.2 628.6L1017.4 639.9M1018.7 640.3L1042.5 649.0M1090.2 666.8L1119.6 677.5M1122.1 678.1L1163.7 693.2M1170.5 695.4L1197.8 705.4M1204.0 708.2L1232.5 718.5M1237.3 719.9L1290.6 739.4M1292.5 740.2L1317.7 749.4M1326.1 752.1L1368.0 767.4M1374.7 770.3L1429.4 790.2M-89.1 244.8L-60.3 255.3M-56.5 256.5L-8.0 274.1M-1.3 276.6L52.0 296.0M60.3 298.7L79.6 305.7M86.4 308.2L139.2 327.4M147.4 330.6L178.3 341.8M187.0 345.4L218.2 356.7M221.5 357.9L256.6 370.7M257.9 371.0L300.4 386.4M305.3 388.1L361.6 408.6M370.3 411.6L426.3 432.0M430.2 434.0L456.2 443.4M462.9 445.4L504.4 460.5M513.2 463.8L551.0 477.6M558.4 480.3L580.2 488.2M582.1 488.7L637.4 508.9M644.0 511.3L671.5 521.3M676.7 523.5L703.0 533.0M755.5 551.8L811.5 572.2M835.5 581.3L856.9 589.0M858.2 589.4L889.5 600.8M890.1 601.3L912.8 609.6M920.6 611.8L945.7 621.0M954.3 624.2L1006.9 643.4M1014.7 646.1L1051.0 659.3M1059.8 662.7L1115.8 683.0M1121.5 685.5L1157.7 698.7M1165.6 701.6L1208.8 717.3M1211.7 718.0L1265.2 737.5M1269.0 739.2L1289.8 746.8M1298.7 750.0L1329.1 761.1M1329.6 760.8L1350.3 768.3M1351.1 769.1L1403.4 788.1M-92.2 253.2L-62.1 264.2M-16.5 280.7L39.5 301.1M46.7 303.8L90.9 319.9M91.8 320.2L133.2 335.3M135.4 335.9L167.5 347.6M168.1 347.6L193.2 356.7M197.6 358.7L244.7 375.8M248.9 377.3L301.8 396.5M310.3 399.6L333.9 408.2M335.5 408.6L370.9 421.5M375.7 423.7L417.5 438.9M422.4 440.4L454.1 452.0M459.5 453.9L490.0 465.0M491.1 465.7L530.9 480.2M537.3 481.9L557.5 489.3M563.8 491.7L616.9 511.0M623.0 513.4L655.9 525.3M656.1 525.6L687.6 537.0M751.0 559.7L789.7 573.8M796.1 576.3L827.7 587.8M830.5 589.3L860.4 600.1M914.3 619.5L933.6 626.5M992.8 647.7L1046.4 667.3M1047.3 668.0L1078.4 679.3M1081.7 680.4L1124.6 696.0M1130.1 698.3L1152.3 706.4M1159.2 708.4L1195.4 721.6M1201.8 724.0L1252.8 742.5M1258.7 744.6L1308.0 762.5M1312.1 764.0L1364.8 783.2M1365.5 783.8L1401.7 796.9M-95.3 261.9L-71.7 270.4M-69.7 271.3L-20.0 289.3M-17.2 290.3L17.0 302.8M20.6 304.5L71.3 322.9M76.5 324.5L128.3 343.3M129.9 344.3L167.5 358.0M171.1 359.2L219.2 376.7M220.8 377.4L270.0 395.3M270.4 395.4L304.4 407.8M310.3 409.5L361.9 428.3M364.9 429.3L390.7 438.7M392.2 439.6L447.2 459.6M449.6 460.4L484.2 473.0M484.9 473.2L504.7 480.4M510.3 482.3L559.3 500.1M564.0 502.1L596.2 513.8M602.7 516.0L646.9 532.1M655.8 535.6L697.4 550.7M733.0 563.5L780.0 580.7M785.0 582.2L808.1 590.7M809.3 591.4L853.3 607.5M853.8 607.7L880.2 617.3M887.6 619.6L934.3 636.6M935.3 637.1L983.2 654.5M1028.7 670.9L1081.0 689.9M1080.9 690.0L1131.4 708.3M1140.1 711.8L1184.2 727.9M1186.3 728.7L1215.3 739.3M1221.8 741.1L1242.6 748.7M1251.3 752.0L1272.8 759.8M1277.2 761.9L1330.5 781.3M1331.0 781.2L1367.0 794.3M-98.1 269.4L-64.0 281.8M-63.3 281.9L-36.1 291.8M-31.9 293.2L-1.7 304.2M52.2 324.2L91.8 338.6M100.3 341.6L123.2 349.9M131.2 352.7L174.0 368.3M178.3 369.9L222.9 386.2M227.8 387.9L260.6 399.8M265.3 401.7L314.0 419.4M320.2 421.7L373.8 441.2M379.3 443.2L413.7 455.7M417.3 456.9L462.0 473.1M467.4 475.2L505.3 489.0M509.7 490.2L554.9 506.7M557.8 508.2L581.3 516.7M587.2 518.9L624.2 532.4M632.8 535.2L652.2 542.2M656.2 543.8L687.5 555.2M733.3 571.5L758.2 580.6M763.1 582.5L784.3 590.2M785.1 590.9L837.0 609.8M839.8 610.7L882.7 626.3M887.5 627.7L941.6 647.4M947.3 649.5L980.3 661.5M983.4 663.0L1031.1 680.4M1037.5 682.5L1090.3 701.7M1091.3 702.1L1127.9 715.4M1133.2 717.2L1182.8 735.2M1186.8 736.8L1233.4 753.8M1240.3 756.2L1291.1 774.6M1325.1 787.0L1357.0 798.6M1365.9 802.3L1415.1 820.2M-100.0 274.8L-75.1 283.9M-68.7 286.6L-16.3 305.7M-7.8 308.8L18.1 318.2M24.1 320.5L77.4 339.9M86.4 343.0L105.4 349.9M107.9 350.6L163.8 371.0M167.8 372.8L214.8 389.9M222.1 392.4L256.3 404.9M347.1 437.8L390.4 453.6M396.9 456.1L436.0 470.3M443.1 472.5L478.7 485.5M484.2 487.5L513.9 498.3M517.3 499.5L545.9 509.9M547.7 510.7L586.2 524.7M590.7 526.8L627.0 540.0M631.7 541.6L671.3 556.0M674.3 556.9L695.5 564.6M730.3 577.1L776.5 593.9M781.1 595.8L829.4 613.3M835.8 615.8L886.4 634.2M892.9 636.6L947.9 656.6M1025.4 684.5L1052.5 694.4M1059.3 696.9L1111.8 716.0M1114.3 717.0L1143.3 727.5M1150.4 730.2L1175.2 739.2M1179.5 740.6L1219.4 755.1M1225.1 757.2L1272.0 774.2M1279.5 777.5L1307.2 787.6M1308.3 787.4L1338.5 798.3M1345.6 801.5L1369.5 810.2M1377.9 813.3L1400.1 821.4M-103.6 284.7L-49.2 304.5M-42.0 306.7L-19.9 314.7M-11.4 317.9L43.5 337.9M48.2 339.6L71.2 347.9M73.0 348.6L98.9 358.0M146.9 375.3L173.7 385.1M178.3 387.1L225.4 404.2M226.2 404.4L271.4 420.9M389.8 463.7L422.1 475.5M474.9 495.1L531.2 515.6M539.6 518.8L591.5 537.6M598.3 539.8L645.8 557.1M654.3 560.0L686.1 571.6M690.8 573.8L740.4 591.8M743.6 592.5L764.0 599.9M766.7 600.9L822.9 621.4M831.9 624.8L886.3 644.6M888.4 645.7L916.5 655.9M924.3 658.7L964.6 673.3M998.3 685.1L1040.0 700.3M1046.0 702.6L1066.6 710.1M1073.7 713.2L1114.0 727.8M1115.0 727.8L1144.9 738.7M1147.0 739.2L1198.1 757.8M1243.6 774.6L1289.3 791.3M1290.0 791.9L1336.0 808.6M1336.2 808.7L1366.9 819.9M-106.1 291.4L-86.3 298.6M-43.3 314.0L1.6 330.3M4.4 331.9L35.5 343.2M44.0 346.0L63.4 353.1M72.0 356.0L107.4 368.9M158.7 387.7L188.8 398.7M194.3 400.6L225.9 412.1M232.1 414.8L265.8 427.1M274.9 430.1L311.6 443.4M316.4 445.2L355.0 459.2M493.6 509.5L513.3 516.7M522.4 520.3L572.8 538.7M573.3 538.9L594.9 546.8M597.6 547.7L637.1 562.1M643.4 564.1L673.4 575.0M678.9 577.4L707.5 587.8M715.7 590.3L739.9 599.1M748.5 602.6L789.6 617.5M833.4 633.4L884.1 651.9M886.4 652.7L911.8 661.9M913.1 662.7L964.4 681.4M965.5 681.5L1019.1 701.1M1051.7 712.6L1097.7 729.3M1105.3 732.0L1150.2 748.4M1151.2 749.2L1180.3 759.8M1187.8 762.3L1236.9 780.1M1245.4 783.4L1278.6 795.5M1283.4 797.1L1309.8 806.8M1312.4 807.7L1356.6 823.8M1360.3 825.3L1406.3 842.0M-109.8 301.7L-87.3 310.0M-84.2 310.9L-61.8 319.0M-52.8 322.4L-9.3 338.2M21.2 349.1L51.9 360.3M80.8 371.4L109.3 381.7M113.0 382.9L140.4 392.9M146.5 394.7L172.9 404.3M179.9 407.5L236.1 427.9M242.7 429.7L285.4 445.2M290.4 447.6L311.1 455.2M339.6 465.2L366.4 475.0M373.2 477.3L395.8 485.5M395.9 485.9L427.1 497.2M435.0 499.9L459.7 509.0M463.6 510.7L519.8 531.2M560.6 546.0L580.0 553.0M584.5 554.6L619.2 567.3M622.6 568.0L664.6 583.3M670.3 586.0L708.4 599.8M711.3 600.5L759.3 617.9M759.9 618.3L789.6 629.1M793.4 630.3L838.9 646.9M848.2 650.3L892.1 666.3M893.9 667.0L929.6 680.0M934.9 682.2L959.4 691.1M960.5 691.4L1016.8 711.9M1020.1 713.2L1064.3 729.3M1090.8 738.4L1141.1 756.7M1147.5 759.2L1170.6 767.6M1175.7 769.9L1210.2 782.4M1211.0 782.7L1255.7 798.9M1298.9 814.6L1353.2 834.3M-112.0 307.8L-57.9 327.5M-57.0 327.7L-9.3 345.0M-3.9 347.3L40.6 363.5M46.9 365.7L96.1 383.6M104.9 386.9L154.4 404.9M158.5 406.6L184.7 416.1M185.3 416.3L210.0 425.3M210.7 425.2L264.9 445.0M308.0 460.8L336.3 471.1M341.8 472.7L388.4 489.7M396.4 492.7L435.1 506.7M443.5 510.3L490.1 527.2M491.4 527.2L526.5 540.0M587.0 562.2L642.1 582.3M642.1 582.5L690.1 599.9M698.7 602.7L734.4 615.7M742.0 618.8L776.9 631.5M786.2 634.5L841.3 654.5M842.6 655.3L874.2 666.8M879.6 668.5L910.9 679.9M964.4 699.3L992.4 709.5M996.3 711.2L1026.8 722.3M1035.6 725.5L1071.9 738.7M1161.6 771.6L1192.6 782.9M1196.0 784.0L1252.1 804.4M1256.3 805.7L1308.7 824.8M1317.4 828.2L1338.2 835.8M1346.1 838.4L1388.9 854.0M-115.1 316.2L-61.8 335.7M-20.9 350.8L32.3 370.2M32.9 370.2L58.4 379.5M99.4 394.4L141.4 409.6M144.3 411.1L186.6 426.5M188.0 426.6L215.5 436.6M220.6 438.4L267.8 455.6M271.4 456.9L312.9 472.0M319.2 474.6L356.9 488.3M364.4 491.3L389.9 500.5M390.3 500.2L426.5 513.4M429.7 514.5L480.1 532.9M513.3 545.3L564.7 564.0M565.1 564.0L614.4 582.0M622.4 584.6L649.2 594.3M654.9 596.7L707.6 615.9M712.9 617.9L749.9 631.4M755.9 633.6L799.5 649.5M802.1 650.4L853.2 669.0M854.1 669.3L880.8 679.0M888.8 681.6L914.7 691.0M918.9 693.0L955.3 706.2M956.3 706.5L996.2 721.0M999.1 722.3L1041.5 737.7M1089.1 754.5L1133.8 770.8M1142.3 774.2L1178.4 787.4M1179.2 787.8L1219.0 802.3M1222.5 803.4L1254.4 815.1M1255.7 815.5L1275.6 822.7M1282.1 825.0L1308.3 834.6M1313.9 836.6L1347.7 848.9M1348.5 849.1L1385.9 862.7M-118.7 326.2L-87.7 337.4M-86.9 337.3L-32.3 357.2M-31.4 357.6L23.0 377.4M26.0 378.6L67.2 393.6M76.3 397.2L124.6 414.8M128.3 415.9L170.5 431.3M176.2 433.6L216.9 448.4M220.4 449.2L272.6 468.2M300.6 478.7L342.5 493.9M350.0 496.4L388.9 510.6M392.0 512.0L445.2 531.3M453.2 533.9L482.9 544.7M490.7 548.0L538.1 565.3M598.0 586.7L617.7 593.9M626.0 596.7L666.2 611.4M674.5 614.5L721.9 631.7M724.4 632.7L776.0 651.5M780.6 653.5L827.6 670.6M836.3 673.5L889.1 692.8M896.2 695.5L951.2 715.6M952.9 715.9L997.4 732.1M1001.2 733.6L1031.2 744.6M1031.7 744.4L1058.8 754.2M1059.2 754.5L1097.6 768.5M1139.6 783.8L1183.6 799.9M1190.6 802.3L1247.0 822.8M1249.9 823.8L1277.5 833.8M1286.2 837.1L1334.1 854.5M1338.0 856.3L1374.9 869.7M-121.8 334.7L-90.8 346.0M-85.6 347.9L-55.1 359.1M-20.3 371.8L23.5 387.7M26.5 388.8L81.5 408.8M90.0 411.8L139.3 429.7M144.9 431.7L164.6 438.8M171.9 441.4L221.0 459.3M228.2 461.9L250.5 470.0M257.3 472.6L306.6 490.6M309.6 491.4L330.5 499.0M336.0 500.9L369.5 513.1M375.0 515.5L422.5 532.8M424.3 533.6L459.8 546.5M461.8 547.2L504.5 562.8M504.8 562.5L547.3 578.0M554.5 580.6L595.6 595.6M599.2 596.8L631.3 608.5M635.2 610.1L654.8 617.3M662.7 619.9L702.4 634.3M705.0 635.7L736.9 647.4M737.1 646.9L769.4 658.7M770.4 659.6L812.0 674.7M820.3 677.2L858.1 691.0M866.4 694.1L905.6 708.3M907.7 709.3L934.7 719.2M942.8 722.0L975.8 734.0M982.7 736.6L1004.1 744.4M1011.3 746.9L1046.8 759.8M1054.5 762.6L1083.1 772.9M1084.4 773.9L1137.7 793.3M1138.4 793.6L1194.5 814.0M1199.8 815.7L1226.3 825.3M1232.4 827.4L1276.4 843.3M1285.6 846.7L1317.2 858.2M1321.6 860.0L1367.4 876.7M-124.6 342.4L-80.0 358.6M-75.2 360.3L-34.4 375.1M-31.5 375.8L19.6 394.4M20.6 395.0L74.9 414.8M79.7 416.6L112.8 428.7M169.1 449.2L214.1 465.6M243.6 476.1L287.3 491.9M292.1 493.7L328.4 506.9M329.9 507.3L378.2 524.8M387.3 528.5L439.8 547.6M441.1 547.9L485.7 564.1M494.7 567.7L539.8 584.1M546.7 586.7L574.2 596.7M574.6 596.3L609.6 609.0M615.0 611.6L646.7 623.1M652.8 625.3L693.3 640.1M698.2 641.6L744.4 658.4M752.6 661.6L800.8 679.1M809.0 682.1L832.2 690.5M837.8 692.5L878.3 707.3M887.6 710.8L936.2 728.5M941.1 730.1L993.7 749.2M1001.8 752.1L1030.4 762.5M1031.7 762.6L1052.4 770.1M1055.1 771.7L1107.0 790.6M1111.2 792.0L1143.8 803.8M1209.6 828.0L1238.2 838.4M1244.4 840.2L1293.5 858.1M1295.2 859.1L1340.2 875.5M1344.7 876.5L1378.1 888.7M-126.5 347.7L-79.3 364.9M-73.0 367.7L-39.9 379.8M-35.1 381.4L16.7 400.3M22.4 402.2L42.2 409.3M50.1 412.3L76.9 422.0M79.2 422.6L109.4 433.6M113.5 435.1L155.0 450.2M157.7 451.5L205.4 468.9M214.5 472.1L253.5 486.3M282.5 496.6L324.7 512.0M330.9 514.2L358.3 524.2M367.0 527.7L414.4 544.9M418.5 546.3L440.4 554.3M442.2 554.7L497.7 574.9M498.3 575.5L537.3 589.7M542.5 591.7L564.0 599.5M564.5 599.3L614.7 617.6M623.5 620.7L659.0 633.6M659.1 634.1L703.0 650.1M706.8 651.3L735.6 661.8M738.3 662.4L766.0 672.5M772.6 675.4L802.0 686.1M804.0 686.7L825.3 694.4M889.0 717.5L912.9 726.2M913.7 726.7L937.7 735.5M940.6 736.1L972.9 747.8M1015.0 763.1L1063.4 780.8M1071.7 784.0L1101.8 795.0M1102.5 795.0L1157.3 814.9M1158.5 815.9L1190.5 827.6M1292.2 864.5L1348.6 885.0"/></g><g stroke="#ffffff" stroke-width="2.4" fill="none" opacity="1" clip-path="url(#east)"><path d="M1452.0 -308.6L1460.4 -265.3M1462.3 -256.9L1470.8 -216.7M1469.3 -208.3L1508.5 -55.8M1506.9 -49.4L1552.8 142.3M1548.0 150.6L1598.0 335.3M1591.8 341.4L1605.3 415.5M1427.8 -303.5L1465.3 -131.9M1469.1 -127.0L1479.6 -75.6M1529.1 165.4L1566.9 350.2M1406.3 -298.9L1436.5 -165.4M1433.4 -159.6L1461.7 -13.8M1466.3 -7.4L1477.6 36.3M1474.8 40.8L1494.5 164.7M1517.3 218.7L1539.5 317.5M1536.3 323.1L1551.2 430.8M1417.9 -147.0L1454.8 21.9M1498.7 248.2L1510.8 318.6M1518.1 326.3L1534.8 399.9M1367.7 -290.7L1382.1 -180.7M1391.2 -178.4L1423.5 -65.1M1416.1 -54.6L1457.3 92.8M1449.5 100.6L1457.4 150.6M1460.0 158.5L1509.4 347.2M1506.3 354.8L1543.7 530.4M1341.5 -285.1L1379.9 -130.2M1373.6 -125.7L1396.3 34.2M1406.4 33.5L1433.2 182.5M1439.4 181.4L1454.9 250.7M1454.0 254.8L1502.0 424.2M1310.8 -278.6L1323.1 -224.6M1321.9 -218.7L1339.0 -159.1M1336.7 -156.6L1350.9 -83.9M1352.0 -75.8L1380.6 85.1M1389.2 89.2L1407.9 218.5M1414.5 217.7L1427.9 275.3M1428.4 277.0L1455.2 435.5M1286.9 -273.5L1309.9 -105.0M1323.8 -103.1L1333.1 -55.3M1369.3 100.6L1380.9 188.4M1387.3 195.0L1410.3 290.7M1433.6 420.0L1460.7 608.5M1294.7 -151.5L1307.8 -80.6M1311.3 -73.0L1354.9 95.1M1345.6 106.1L1357.3 161.1M1359.3 163.6L1384.5 353.4M1403.5 357.4L1417.6 456.9M1245.9 -264.8L1281.8 -128.9M1275.4 -127.0L1304.3 42.5M1311.8 47.7L1367.4 235.0M1354.1 238.8L1388.9 364.3M1379.5 370.5L1405.8 513.5M1220.1 -259.3L1228.1 -218.1M1234.7 -215.3L1241.0 -168.6M1244.5 -165.3L1265.9 -20.5M1271.9 -16.5L1311.5 146.7M1312.1 154.7L1322.3 207.2M1321.4 216.8L1347.4 386.7M1359.6 387.2L1375.2 452.9M1207.0 -256.6L1216.3 -194.8M1217.2 -190.7L1253.5 -68.4M1247.8 -59.2L1260.5 35.7M1270.8 42.7L1282.7 105.1M1286.1 113.3L1299.4 200.5M1302.2 201.5L1340.1 348.5M1335.8 357.7L1364.4 482.4M1219.8 -91.2L1255.6 78.2M1257.3 84.1L1290.4 261.7M1292.1 264.8L1310.8 401.3M1323.4 400.7L1340.2 497.2M1158.7 -246.3L1189.5 -91.9M1196.2 -90.7L1218.4 48.4M1226.4 55.7L1243.2 174.9M1251.4 180.7L1266.8 267.1M1270.5 273.8L1291.3 417.1M1306.4 423.1L1325.9 491.5M1143.2 -243.0L1154.3 -161.7M1162.3 -155.0L1174.9 -107.8M1175.2 -104.9L1209.3 13.7M1200.2 23.5L1221.8 149.7M1228.1 151.4L1250.9 280.2M1256.5 280.3L1268.6 324.4M1265.9 327.9L1290.3 495.9M1121.5 -238.4L1144.7 -61.3M1171.1 -1.4L1182.6 64.0M1188.6 72.8L1209.7 161.4M1209.1 167.6L1233.5 307.8M1238.4 312.5L1259.0 417.0M1259.6 426.9L1288.7 540.4M1115.4 -161.0L1123.5 -120.0M1129.3 -111.5L1167.6 40.2M1163.6 48.5L1193.3 189.0M1194.2 193.4L1211.8 298.9M1215.2 304.3L1225.6 363.1M1228.1 371.7L1235.4 426.9M1068.8 -227.2L1099.1 -64.6M1103.3 -60.7L1116.6 25.2M1126.9 25.3L1158.8 162.9M1153.8 164.7L1191.8 293.5M1185.4 302.2L1228.4 457.5M1217.3 465.9L1240.0 550.3M1048.7 -222.9L1068.9 -107.6M1075.5 -104.6L1081.1 -61.8M1086.9 -59.2L1120.4 132.6M1125.5 134.2L1135.8 182.7M1135.7 191.1L1161.8 285.5M1159.7 294.1L1170.4 340.8M1172.7 348.5L1194.3 497.1M1031.9 -219.3L1047.0 -116.8M1056.6 -110.8L1068.3 -51.5M1070.5 -43.0L1093.0 41.0M1087.7 50.9L1105.2 110.7M1108.0 120.0L1123.1 197.9M1018.9 -134.6L1058.9 6.8M1048.8 11.3L1076.6 149.9M1082.3 152.7L1094.0 227.2M1111.8 302.5L1120.7 361.8M1128.7 367.5L1150.4 460.1M1147.4 462.2L1169.8 578.5M1006.0 -77.8L1018.8 17.5M1030.1 16.6L1063.1 200.6M1070.3 207.7L1119.9 388.8M1106.6 394.9L1144.6 537.5M996.1 -45.1L1028.9 108.2M1028.2 116.4L1036.0 173.6M1042.3 180.6L1051.4 244.4M1074.0 342.4L1087.7 424.0M1093.8 432.4L1136.4 611.9M937.1 -199.2L956.8 -72.0M964.3 -70.2L990.8 26.0M984.5 29.0L992.8 71.9M996.8 74.5L1015.5 190.1M1031.7 256.1L1051.9 338.4M1055.3 345.5L1068.5 420.0M1069.1 423.5L1106.7 566.9M918.2 -195.2L942.7 -93.9M953.9 -23.8L987.1 90.4M999.9 177.9L1021.5 304.2M1022.8 308.2L1074.3 488.1M1062.2 495.5L1083.6 624.9M894.8 -190.2L934.2 -28.5M925.1 -26.4L969.4 166.5M971.4 169.7L981.8 223.1M984.3 228.2L1026.5 422.4M1021.7 427.0L1072.8 599.6M910.3 -20.7L938.6 108.4M968.7 269.4L997.7 381.8M846.4 -179.9L875.6 -29.8M878.4 -27.8L899.8 69.2M928.6 194.3L979.8 380.9M968.9 387.6L988.2 525.4M826.4 -175.7L865.0 -26.6M856.8 -19.1L877.1 70.9M876.9 73.6L906.8 184.9M901.9 194.3L941.0 330.9M935.6 338.0L963.0 507.1M969.9 512.2L978.7 562.1M803.0 -170.7L834.2 -4.2M835.2 -2.5L867.3 179.5M875.8 186.7L896.9 269.0M894.7 278.4L907.3 374.5M918.7 372.8L930.7 423.4M926.4 427.2L958.0 617.9M776.0 -165.0L798.3 -17.6M802.7 -17.4L821.5 51.5M821.6 51.5L829.6 106.0M830.6 113.7L877.3 278.8M867.1 289.4L902.5 462.6M910.1 470.1L938.0 568.1M755.2 -160.5L804.0 30.7M794.0 38.8L815.2 149.4M820.3 152.4L865.1 331.5M862.6 340.0L871.4 395.5M874.0 400.3L905.0 574.3M734.1 -156.0L749.5 -45.1M761.4 -38.6L800.9 116.6M792.8 118.9L803.5 188.9M807.1 190.7L824.5 281.9M830.7 286.1L870.8 437.7M864.4 440.5L889.9 585.6M706.1 -150.1L722.6 -51.5M730.4 -44.6L751.7 87.9M760.0 91.5L786.4 195.4M783.5 201.1L795.6 260.6M796.1 267.6L827.1 424.9M828.7 434.0L855.6 626.0M680.6 -144.7L708.1 -49.1M702.1 -41.4L713.7 12.1M715.1 19.1L762.3 199.0M754.0 208.5L774.0 308.3M774.6 312.1L811.1 481.2M814.3 487.9L826.1 556.0M650.2 -138.2L677.7 14.6M680.7 17.1L691.2 63.6M726.1 218.2L743.0 293.2M738.8 295.4L752.2 348.2M789.1 514.4L803.9 605.9M624.8 -132.8L639.1 -55.1M685.6 147.7L716.1 300.8M716.3 303.8L735.8 440.5M747.3 443.2L780.4 628.0M599.7 -127.5L611.4 -70.1M613.6 -68.7L628.9 -5.9M625.7 2.0L673.8 178.2M665.3 180.6L678.0 251.0M682.0 253.7L727.8 427.4M720.7 435.0L746.9 542.7M745.6 552.5L772.7 719.8M580.6 -123.4L620.6 55.4M616.4 61.0L645.3 160.0M640.1 161.2L670.9 331.9M679.6 331.1L686.3 372.2M689.0 378.3L706.6 494.3M711.8 494.5L742.0 654.4M563.9 -119.9L579.6 -9.5M585.1 -2.0L632.2 179.1M628.0 187.3L664.5 333.7M659.9 335.8L682.4 497.7M694.7 500.8L729.6 657.6M533.5 -113.4L554.1 -23.9M551.7 -16.2L578.6 95.3M578.7 98.3L595.5 219.8M606.2 222.5L643.0 399.5M677.4 578.6L704.7 717.3M510.3 -108.5L542.9 52.1M542.0 55.2L575.2 183.9M570.6 187.5L589.4 268.1M587.9 277.3L606.3 414.4M619.3 411.9L646.1 561.2M647.6 561.7L686.7 720.8M484.5 -103.0L495.0 -46.3M493.8 -45.5L514.3 38.9M514.6 40.8L540.7 157.6M540.2 162.3L570.3 269.4M559.5 277.8L586.0 369.3M585.6 378.0L605.5 493.9M608.3 497.1L642.0 610.8M456.8 -97.1L485.1 98.0M498.9 97.5L522.0 221.4M527.5 226.1L581.0 410.9M568.0 417.0L580.3 481.9M581.1 491.3L607.3 589.3M602.7 592.7L621.1 655.9M435.0 -92.5L453.0 -12.5M462.9 40.2L480.6 125.7M478.5 136.0L517.3 297.5M517.4 301.3L546.2 423.5M546.8 431.9L566.5 507.1M563.7 511.3L600.8 689.4M411.4 -87.4L436.0 99.6M448.3 105.5L466.6 183.8M466.9 189.3L495.9 373.3M509.1 379.6L554.2 559.8M550.4 567.7L592.8 716.0M386.0 -82.1L398.7 11.3M408.0 14.8L430.4 162.0M449.3 220.3L489.9 376.9M483.5 380.0L533.7 569.9M526.6 573.4L549.4 666.0M392.5 43.7L414.7 166.4M418.8 169.1L457.3 350.4M460.1 349.8L484.6 512.5M495.2 517.7L521.3 655.4M347.1 -73.8L373.3 51.7M372.7 58.4L406.1 231.9M413.9 234.1L440.4 356.1M459.5 455.5L470.1 530.7M476.5 536.7L499.2 623.5M327.7 -69.7L352.5 87.3M359.2 95.8L367.9 153.6M376.3 161.5L392.5 232.6M391.6 241.8L404.0 290.3M405.2 296.1L435.5 474.6M444.7 476.0L463.9 580.8M467.4 590.1L495.0 733.5M307.2 -65.3L338.0 41.7M331.2 46.2L341.8 89.9M341.4 92.2L365.2 174.1M360.6 183.6L385.0 327.9M394.3 328.9L422.6 432.5M413.6 437.0L434.7 543.2M278.6 -59.2L293.7 15.3M298.1 19.5L335.6 214.4M341.9 220.1L364.7 299.8M359.8 301.6L373.3 398.8M381.5 403.4L418.7 578.7M254.3 -54.1L282.7 77.6M283.9 84.9L317.4 264.4M322.4 268.4L359.6 421.2M356.1 423.4L383.4 527.0M380.5 534.4L401.7 620.6M398.7 623.6L416.5 723.7M237.4 -50.5L252.2 62.1M261.9 62.8L282.4 142.6M309.3 302.4L314.7 342.8M322.1 351.0L330.6 414.2M333.9 421.1L344.4 490.5M350.0 493.4L357.4 536.9M362.3 537.8L376.9 594.8M207.0 -44.0L222.9 14.6M221.2 21.2L231.4 62.7M249.1 164.4L256.4 208.0M261.3 216.1L275.5 282.2M275.5 283.4L318.9 462.5M312.1 468.7L320.3 511.1M324.7 517.2L341.1 594.3M340.8 601.9L359.9 699.6M177.5 -37.7L210.1 85.8M202.3 92.6L243.3 277.6M245.1 285.5L262.9 354.4M261.7 360.1L276.8 428.0M276.6 428.9L295.4 499.5M291.4 508.8L308.0 619.7M315.2 619.2L335.4 694.6M176.4 111.4L194.2 188.0M194.8 194.4L217.0 293.8M248.2 428.8L265.6 523.5M143.0 34.7L165.4 118.7M161.7 124.7L187.7 239.5M187.3 239.7L222.2 383.6M217.6 385.2L271.7 572.1M256.9 584.0L267.5 627.3M267.2 635.4L295.2 817.8M98.5 -20.9L135.3 124.4M144.9 190.2L170.5 279.6M163.9 283.0L201.0 448.0M202.6 453.0L222.9 547.5M223.9 548.0L252.4 726.9M83.4 -17.7L119.6 159.2M115.8 160.8L139.7 282.3M144.3 285.8L155.6 328.9M158.8 336.1L175.2 394.9M167.7 402.4L180.9 484.4M190.3 491.4L222.3 687.3M59.1 -12.6L64.8 28.0M72.1 29.2L97.3 142.4M94.7 152.2L107.3 245.9M115.9 250.3L142.4 396.2M149.7 395.5L155.9 436.6M153.7 439.6L176.8 593.2M186.7 593.6L216.6 726.3M31.2 -6.6L46.4 58.2M46.0 66.5L83.5 205.3M73.8 210.3L81.7 261.8M86.0 266.2L126.3 440.6M128.0 448.7L152.3 632.0M168.7 635.6L183.9 708.6M6.6 -1.4L35.6 191.1M48.8 192.1L82.5 353.0M82.9 361.5L92.6 412.8M99.9 417.4L111.3 481.3M109.4 485.3L122.5 534.8M119.6 538.0L128.3 577.2M-7.5 1.6L13.5 87.0M6.4 89.7L32.4 197.5M32.3 198.0L80.8 361.5M71.2 368.3L111.2 510.9M136.6 689.5L182.7 846.2M-30.0 6.4L1.1 203.9M11.4 203.3L47.0 349.9M47.1 357.9L80.9 496.1M92.9 582.9L106.4 664.1M112.2 671.6L156.6 848.5M-30.8 103.5L12.3 268.3M4.4 278.1L25.3 365.0M27.2 369.7L53.1 519.1M76.6 610.5L96.6 681.6M94.0 691.7L120.3 811.3M-69.4 14.7L-37.8 178.6M-38.1 179.6L-20.5 293.7M-14.6 294.2L12.2 396.0M11.4 398.7L32.6 525.6M38.6 534.1L65.3 681.6M72.3 683.2L89.5 761.7"/></g><g stroke="#ffffff" stroke-width="2.4" fill="none" opacity="1" clip-path="url(#east)"><path d="M-55.5 5.9L36.6 -9.8M40.6 -7.1L252.7 -34.1M254.9 -32.8L473.6 -51.4M480.7 -64.3L528.5 -68.3M530.7 -73.9L746.2 -113.9M752.6 -107.0L917.0 -125.1M925.4 -131.4L1025.9 -146.0M1129.1 -159.7L1327.5 -184.2M1330.5 -188.4L1539.2 -229.2M-51.7 33.0L73.9 9.9M84.4 14.7L220.3 -6.8M229.4 -7.7L292.4 -17.4M293.4 -18.9L492.5 -39.1M494.3 -43.9L606.4 -62.3M608.3 -63.8L740.1 -80.0M932.7 -105.9L1011.1 -123.1M1017.6 -116.3L1115.4 -135.8M1116.5 -133.4L1176.0 -137.5M1348.9 -162.9L1440.6 -179.7M1448.4 -177.4L1628.7 -209.7M-49.0 52.5L81.0 40.5M84.0 30.6L168.7 17.6M173.0 17.4L378.6 -5.5M383.8 -9.4L601.5 -38.8M603.0 -42.5L668.7 -49.6M677.3 -52.2L841.4 -69.9M849.3 -76.2L911.3 -89.8M917.0 -88.3L1129.6 -109.2M1137.9 -115.4L1229.0 -128.8M1238.2 -129.7L1376.2 -151.5M1378.1 -148.5L1519.5 -173.7M-45.2 79.0L63.2 58.2M65.7 62.1L165.4 50.0M168.5 48.1L221.0 39.0M222.0 38.2L295.1 24.4M304.1 26.6L436.9 -2.7M445.2 5.0L621.3 -8.0M629.0 -19.7L800.3 -43.2M802.9 -45.0L879.2 -59.3M882.4 -52.9L989.8 -76.3M991.8 -67.1L1136.1 -84.6M1136.7 -90.2L1207.8 -103.4M1217.1 -98.4L1262.2 -105.2M1268.1 -105.6L1345.9 -111.1M1354.8 -119.2L1463.7 -135.9M1470.6 -133.8L1583.5 -141.2M-42.1 101.6L164.5 56.1M170.5 71.4L367.4 52.3M373.5 43.8L520.0 18.3M834.5 -23.7L892.0 -34.3M894.6 -28.7L983.7 -46.4M988.2 -40.4L1077.3 -54.3M1086.4 -55.0L1167.2 -70.8M1168.7 -66.6L1316.3 -88.2M1323.6 -89.0L1483.0 -101.7M1482.7 -109.8L1650.1 -123.1M-38.9 124.3L158.0 111.3M161.9 95.7L246.6 84.0M249.6 83.5L309.3 77.3M314.7 79.2L487.1 63.2M489.8 50.4L647.2 27.2M649.7 28.6L808.7 7.1M809.7 5.4L875.2 -5.6M878.7 -1.6L981.5 -20.6M982.5 -16.8L1129.3 -36.7M1130.8 -37.8L1243.6 -62.6M1334.6 -67.3L1510.0 -78.4M1513.1 -89.7L1605.7 -107.4M-35.9 145.3L93.5 135.9M96.3 129.9L138.1 127.1M147.2 120.9L332.2 83.5M334.9 97.0L491.6 86.0M492.9 72.7L648.6 44.9M651.1 52.1L720.2 42.8M724.9 41.4L867.1 14.2M874.2 15.4L1074.9 -17.2M1419.3 -60.8L1531.1 -79.1M-31.7 175.1L19.1 164.8M24.2 168.7L93.8 158.8M94.4 159.3L275.2 144.6M278.5 134.9L323.1 127.6M327.8 123.8L532.8 86.7M616.3 85.4L727.8 75.3M938.6 40.6L1082.3 9.4M1089.5 15.9L1308.9 1.8M1310.6 -15.4L1376.4 -30.0M1377.9 -19.9L1423.3 -24.1M1428.2 -27.2L1624.4 -48.3M-28.0 201.6L181.9 176.8M188.9 167.6L320.8 145.6M322.4 150.6L527.0 114.7M537.5 123.3L653.7 104.4M657.1 106.6L840.0 85.2M848.7 78.5L897.1 68.1M902.9 67.3L1048.9 35.8M1129.4 39.9L1265.3 20.3M1273.9 15.3L1466.2 -18.8M1468.9 -12.0L1604.7 -21.3M-25.5 219.8L171.5 181.0M174.4 188.1L279.6 168.0M288.2 171.7L440.1 150.8M441.7 155.5L588.8 129.1M596.4 133.6L694.8 126.9M700.8 114.0L840.7 84.8M844.5 94.2L1050.1 50.7M1053.8 66.1L1102.2 56.2M1112.3 59.0L1257.7 43.0M1265.8 35.3L1350.8 24.2M1356.5 26.2L1432.9 11.8M1442.6 9.2L1550.1 -5.7M109.9 226.4L308.8 200.7M314.6 196.3L358.6 193.6M363.0 187.4L484.1 166.7M485.6 175.0L550.6 161.8M557.8 159.6L615.9 152.1M618.7 154.5L817.9 133.5M824.5 125.7L965.1 109.5M972.5 106.1L1185.3 59.9M1189.7 74.1L1239.0 64.0M1240.6 64.9L1299.1 59.2M1300.8 57.0L1398.2 47.7M1405.4 44.7L1584.5 26.3M-17.9 273.3L41.8 264.0M46.6 263.8L258.8 227.0M262.1 236.0L385.9 224.6M393.0 215.9L603.5 178.7M608.7 185.8L746.6 168.9M753.2 166.3L944.9 132.3M948.0 141.0L1030.0 129.1M1031.4 129.2L1135.4 114.6M1246.1 94.5L1341.6 80.2M1347.4 80.1L1556.4 52.2M-15.7 289.3L195.0 271.4M374.8 238.3L416.9 232.6M419.7 230.1L606.4 218.3M614.0 204.1L806.3 172.3M815.1 177.2L929.5 160.9M937.0 158.6L1006.3 153.1M1012.5 146.6L1144.4 120.8M1147.5 126.9L1201.3 122.9M1204.3 121.6L1334.9 94.0M1339.1 102.9L1515.5 68.0M1519.5 75.9L1661.3 56.7M-10.8 323.9L30.7 316.6M38.0 311.7L211.3 289.3M219.3 288.5L428.3 262.0M548.3 243.1L616.4 237.5M773.4 208.4L962.1 180.3M969.0 181.6L1048.2 174.9M1053.1 169.6L1162.8 152.3M1167.4 156.4L1367.9 121.2M1428.5 120.2L1524.9 112.0M1526.4 102.9L1739.5 67.8M-7.8 345.7L191.0 321.2M197.6 318.8L294.1 301.0M295.6 306.3L388.4 294.4M395.6 291.7L463.1 287.3M462.8 280.1L569.5 260.1M578.5 265.6L793.8 250.4M794.7 230.8L922.3 216.1M925.3 215.3L1094.6 200.0M1099.2 190.7L1160.2 186.2M1162.6 182.9L1262.7 162.0M1266.6 166.1L1410.6 156.5M1412.1 148.7L1620.0 125.9M-4.4 369.9L135.3 351.6M137.7 348.9L196.8 345.2M203.4 340.8L376.2 327.3M375.2 314.9L548.6 284.9M554.0 287.6L687.1 262.2M696.1 272.6L797.8 266.0M805.6 255.9L873.0 247.2M877.7 244.6L927.9 241.5M935.2 237.6L1074.0 216.7M1083.9 217.1L1125.6 212.1M1125.9 209.2L1276.8 196.5M1284.2 189.4L1476.1 162.2M1484.5 160.8L1625.8 132.4M-1.8 388.1L86.9 377.0M90.6 377.8L170.3 367.2M177.2 364.9L221.9 361.2M229.0 358.0L350.2 344.0M351.7 343.1L422.4 336.5M426.9 330.0L596.1 303.5M650.4 298.5L836.1 277.5M1236.8 217.4L1347.0 207.2M1355.3 198.5L1531.8 176.6M1539.2 176.0L1701.2 158.9M1.5 411.4L185.4 380.5M192.0 379.5L362.0 345.2M368.5 359.7L533.1 332.0M536.2 336.1L678.4 314.8M682.2 314.3L794.1 294.1M797.1 294.3L989.4 256.0M991.7 267.9L1091.3 248.5M1092.7 258.0L1277.1 244.0M1284.0 229.0L1480.2 211.4M3.8 428.2L46.2 423.8M48.3 419.4L143.0 404.3M143.9 406.0L355.9 383.4M365.4 379.5L464.0 370.2M469.2 365.9L639.4 349.9M646.1 340.9L756.1 328.8M755.8 321.1L861.5 298.5M868.2 306.0L964.9 291.1M967.5 294.0L1172.6 268.7M1172.4 263.7L1359.3 241.1M1360.9 236.8L1503.5 210.3M1505.6 220.3L1628.6 204.2M7.0 451.0L205.3 424.6M205.4 422.8L363.6 399.9M368.7 399.7L433.2 394.9M580.7 371.7L642.0 367.2M645.1 358.0L692.2 349.8M702.1 355.5L881.0 344.3M887.5 327.6L1056.2 309.4M1062.3 302.4L1168.6 287.5M1174.6 288.6L1339.3 266.4M1342.7 260.9L1436.1 250.5M1438.2 249.8L1490.0 243.3M1493.9 240.5L1626.8 218.3M130.8 463.3L292.2 428.1M504.2 410.9L598.7 398.7M606.5 396.7L647.7 387.6M653.2 388.2L748.1 371.6M752.7 376.4L884.0 357.0M892.7 353.3L1078.5 337.8M1079.8 330.5L1148.2 325.5M1149.6 318.1L1235.2 304.0M1235.8 306.6L1341.9 291.3M1467.9 275.4L1619.1 263.6M13.3 495.7L161.0 468.3M169.3 471.4L210.4 468.4M216.9 464.4L294.1 450.1M301.4 455.2L348.4 449.7M356.1 446.2L513.5 428.2M517.4 422.2L626.7 408.2M633.8 409.7L737.9 400.7M931.9 369.1L1003.7 358.5M1004.2 356.2L1074.0 342.5M1075.3 347.4L1288.7 301.6M1291.5 313.1L1333.1 307.9M1333.3 307.5L1467.4 283.0M1477.0 287.6L1531.5 276.6M1532.7 283.2L1674.3 272.1M15.8 513.8L56.9 508.8M62.7 509.4L241.7 487.9M242.4 484.0L359.1 473.9M364.0 464.3L541.2 424.9M547.3 436.7L692.9 412.0M700.5 414.2L815.8 389.6M824.5 398.0L917.7 387.1M922.1 388.3L1136.6 373.5M1138.8 355.8L1336.4 335.9M1336.6 330.2L1477.3 308.1M19.3 538.2L62.9 532.3M63.4 534.2L249.2 512.4M253.1 502.5L313.4 497.9M323.0 496.2L399.4 484.5M406.0 482.6L502.7 462.7M506.1 471.9L696.2 433.6M697.6 442.1L776.2 435.7M783.1 432.2L949.8 410.5M949.3 405.5L991.6 402.9M1001.0 399.8L1124.0 387.4M1125.9 382.5L1186.0 372.3M1191.6 371.7L1238.9 367.6M1240.3 366.5L1353.4 343.9M1354.7 351.9L1558.1 308.6M1565.1 322.1L1729.9 292.0M21.9 556.9L72.8 548.6M76.8 546.5L127.1 537.2M196.1 530.8L239.3 524.5M248.1 525.2L394.7 503.8M400.8 499.9L600.1 480.1M604.0 471.7L697.1 454.0M699.5 457.3L902.2 429.5M906.8 429.2L1031.6 412.2M1039.8 412.6L1211.3 401.7M1215.5 386.0L1383.2 372.8M1385.8 365.5L1473.8 354.2M1476.7 351.7L1565.2 341.7M1572.4 335.9L1646.8 323.8M24.6 575.8L220.6 550.5M230.0 546.2L321.1 529.7M331.2 531.7L509.4 503.4M514.6 507.4L664.4 476.8M668.5 481.0L826.5 468.5M826.6 461.4L1043.6 443.3M1043.2 428.6L1243.6 412.9M1245.9 400.6L1307.5 386.9M1313.9 391.9L1505.4 367.0M1514.0 365.6L1574.8 359.7M27.2 594.4L119.4 585.1M127.4 580.4L202.8 565.2M370.0 544.5L482.1 531.0M490.3 531.6L607.2 506.6M616.6 514.5L821.7 470.1M831.3 482.8L934.3 463.8M940.3 465.9L1019.7 453.7M1023.9 455.3L1083.9 448.4M1089.4 448.5L1136.1 442.5M1140.4 438.4L1208.0 425.0M1215.5 428.0L1424.5 404.4M1424.8 400.4L1500.1 384.6M1502.8 387.8L1641.4 374.9"/></g><g stroke="#ffffff" stroke-width="2.0" fill="none" opacity="1" clip-path="url(#east)"><path d="M617.1 -735.5L728.7 -640.2M733.2 -635.5L833.8 -546.1M957.9 -443.2L1048.2 -377.2M1049.4 -374.1L1133.3 -307.9M1137.7 -303.8L1229.5 -233.2M1325.2 -140.3L1398.1 -83.5M1632.2 111.3L1733.7 189.4M583.9 -695.9L670.4 -625.0M667.9 -620.4L735.0 -554.8M739.8 -558.6L828.8 -473.5M839.3 -481.5L900.4 -422.6M911.1 -419.9L1015.7 -329.1M1024.9 -327.7L1151.9 -234.6M1183.3 -196.0L1220.5 -163.8M1222.7 -160.9L1262.7 -130.6M1439.4 26.9L1519.6 90.8M1526.5 88.7L1651.0 183.4M555.2 -661.6L633.5 -590.4M640.6 -590.1L742.2 -493.1M750.0 -491.6L836.6 -408.2M842.7 -410.4L965.3 -320.8M1068.7 -226.0L1135.7 -170.5M1142.9 -168.4L1203.5 -121.5M1323.1 -11.6L1379.4 36.5M1388.8 34.6L1464.4 103.4M1580.5 201.6L1667.6 286.8M649.2 -533.3L699.1 -493.2M702.4 -486.2L782.0 -408.6M788.6 -413.5L837.4 -365.4M847.5 -363.5L898.4 -316.6M900.6 -309.8L955.0 -268.4M1285.6 2.0L1389.1 81.9M1388.0 89.4L1456.8 139.0M1620.8 293.0L1670.7 340.8M492.2 -586.6L589.7 -510.2M590.2 -501.1L685.1 -413.4M689.7 -416.2L779.9 -337.3M788.4 -334.3L849.3 -290.0M848.6 -274.6L879.4 -245.0M884.7 -242.3L945.5 -183.5M953.9 -188.4L1013.8 -142.2M1014.8 -135.7L1081.8 -82.7M1085.1 -79.9L1119.4 -54.6M1172.3 -6.9L1297.1 85.6M1512.2 279.2L1584.5 331.3M1581.2 335.7L1691.7 441.2M450.0 -536.3L577.7 -442.3M571.8 -431.0L618.1 -389.9M624.7 -393.2L666.8 -356.7M774.0 -268.7L865.9 -199.3M867.6 -188.8L915.0 -149.3M1092.5 -0.5L1123.6 29.9M1201.6 95.5L1316.2 183.9M413.8 -493.1L513.4 -395.4M520.0 -396.4L596.4 -339.2M602.2 -337.1L689.8 -252.0M695.4 -251.3L737.2 -221.2M741.8 -221.5L790.3 -183.6M941.1 -43.2L1051.9 54.3M1060.7 49.3L1114.8 95.6M1252.8 219.3L1296.9 255.8M1302.6 258.7L1403.6 341.2M1410.4 343.6L1456.0 379.4M437.3 -402.9L497.9 -347.2M501.1 -342.7L616.2 -257.1M733.8 -151.6L805.4 -88.5M878.6 -33.7L917.4 0.6M923.2 -0.8L1001.5 55.1M999.4 70.1L1065.6 119.4M1070.8 122.4L1189.2 229.6M1191.8 234.0L1238.0 273.6M1244.2 267.1L1291.9 302.8M407.5 -366.4L468.2 -322.0M469.1 -314.5L527.0 -261.8M528.7 -254.3L615.0 -188.5M621.6 -183.5L653.8 -155.7M720.6 -99.7L779.3 -43.6M860.5 23.7L977.0 132.2M1035.5 165.6L1091.0 209.0M1095.0 210.0L1199.5 303.4M1323.6 406.5L1420.2 497.2M1433.0 495.8L1488.9 545.9M405.6 -308.5L475.8 -249.5M521.3 -213.3L608.2 -136.3M812.1 29.2L866.7 82.8M929.8 126.2L979.3 161.6M975.8 172.4L1071.3 262.1M1151.2 308.9L1213.8 358.7M1306.4 441.8L1341.2 472.7M1344.6 477.5L1390.7 511.3M431.8 -237.5L531.8 -143.9M533.7 -145.9L641.1 -54.5M646.7 -58.3L691.2 -22.6M689.3 -20.1L789.6 77.2M794.8 76.5L889.9 162.2M893.8 161.1L947.4 206.7M956.5 205.5L1018.8 266.5M1022.3 269.3L1134.3 378.9M1148.0 363.2L1239.9 430.3M1244.3 440.3L1356.7 534.8M348.4 -233.3L401.5 -195.3M404.2 -186.0L443.9 -155.5M442.0 -151.2L509.3 -86.8M520.5 -91.5L564.8 -50.8M618.8 0.6L672.9 44.1M838.9 189.1L956.8 275.1M1028.1 339.8L1097.0 401.0M1099.1 400.8L1173.9 457.0M1178.5 466.2L1262.2 527.1M1256.3 535.7L1358.8 609.4M227.9 -271.6L329.9 -189.8M328.3 -185.9L428.0 -89.2M433.4 -95.6L508.4 -24.9M514.5 -20.8L570.3 25.2M577.1 21.8L663.2 97.4M664.6 97.9L700.8 126.1M702.1 130.2L810.3 217.4M812.7 221.6L848.6 252.4M850.5 256.6L889.0 284.8M895.1 289.6L984.6 373.1M989.8 375.9L1080.8 441.8M1075.0 450.6L1165.5 533.7M1179.9 531.3L1252.9 590.5M202.4 -241.2L293.5 -162.7M302.4 -159.0L344.3 -123.7M349.4 -119.3L469.8 -26.6M732.1 199.7L848.7 293.9M1017.3 438.0L1071.7 491.3M1076.4 486.8L1111.1 514.2M1107.2 523.5L1210.4 614.8M1217.4 612.2L1345.1 705.5M331.3 -78.8L393.8 -18.0M444.8 22.9L481.2 53.2M490.4 48.6L540.5 85.7M908.4 408.2L993.5 486.4M1003.2 478.9L1094.4 544.9M240.8 -102.9L292.2 -65.5M347.0 -21.1L421.8 40.9M419.7 44.7L529.1 150.1M705.8 277.6L806.6 357.5M856.1 405.1L902.0 441.2M900.7 447.0L1014.1 548.1M1024.7 544.0L1101.8 615.4M1222.2 716.3L1337.3 820.4M432.3 144.9L497.6 193.9M508.0 196.7L589.3 258.5M736.7 389.2L838.5 473.3M834.3 478.3L881.1 516.0M884.1 515.1L986.0 609.5M78.7 -93.8L197.3 -6.1M199.7 -0.7L301.7 97.5M434.2 199.7L520.4 263.3M524.7 269.3L564.8 304.2M566.6 312.2L611.0 354.6M619.8 357.5L699.1 420.8M699.7 424.5L762.6 474.5M832.6 534.8L946.2 622.8M135.9 30.3L235.3 112.6M231.3 117.9L332.3 215.0M345.4 208.9L418.5 273.2M427.3 278.1L519.8 352.3M521.2 362.1L607.2 429.9M614.8 429.3L686.0 489.7M807.6 601.1L859.1 637.8M894.2 670.7L953.4 713.7M1132.3 863.1L1209.0 930.2M77.4 58.1L175.2 133.8M168.9 142.5L254.4 221.6M263.6 225.9L346.8 291.5M816.4 690.1L944.3 786.2M31.0 94.2L110.2 161.3M112.2 162.4L161.7 202.5M162.1 206.4L234.6 268.9M236.7 272.5L337.5 364.3M346.5 357.2L453.0 440.6M687.1 654.9L758.1 715.8M824.0 771.2L896.4 829.9M899.7 834.8L963.3 884.9M964.1 889.4L1058.6 958.5M-69.2 82.5L-22.3 116.9M-16.2 123.0L105.6 214.8M276.3 373.0L375.8 461.5M384.3 456.3L445.8 503.9M448.1 515.2L499.4 552.7M499.3 555.2L548.1 590.1M549.1 601.3L626.7 669.2M682.4 705.4L799.8 798.7M800.6 811.7L855.0 859.1M863.6 854.5L923.4 898.6M925.6 909.7L1007.6 988.4M-7.8 184.1L60.8 238.8M257.2 403.0L298.4 440.2M385.1 521.0L423.7 556.2M426.0 554.7L514.2 638.1M527.6 633.2L597.0 687.0M-134.8 160.7L-27.2 251.5M82.2 330.9L175.2 413.4M239.4 475.3L327.6 547.4M538.5 722.5L642.0 802.6M638.7 806.6L751.2 914.0M926.5 1042.4L975.0 1089.2M-158.1 188.4L-118.3 223.2M-43.4 279.3L13.8 333.9M19.2 335.3L109.2 417.0M111.9 423.5L214.8 510.3M221.5 503.5L350.3 598.0M345.6 614.3L447.0 712.2M454.3 703.9L483.3 732.0M489.3 726.0L607.6 822.9M608.1 830.0L650.0 869.0M656.9 874.9L718.0 925.6M802.9 989.2L892.2 1070.1"/></g><polygon points="844.9,0.0 828.4,19.5 813.4,45.0 799.9,72.0 795.4,90.0 783.4,105.0 775.9,127.5 765.4,142.5 753.4,165.0 744.4,180.0 738.4,201.0 723.4,220.5 712.9,240.0 706.9,261.0 703.9,291.0 700.9,321.0 699.4,351.0 696.4,381.0 693.4,401.0 640.4,401.0 640.9,381.0 645.4,351.0 645.4,321.0 655.9,291.0 667.9,261.0 655.9,231.0 685.9,201.0 694.9,180.0 702.4,165.0 711.4,150.0 720.4,135.0 729.4,120.0 739.9,105.0 750.4,90.0 750.4,72.0 765.4,57.0 777.4,37.5 787.9,18.0 799.9,0.0" fill="#fdfdfd"/><polygon points="905.4,0.0 911.4,53.0 923.1,81.5 904.4,108.3 890.9,143.2 888.3,167.4 872.2,196.9 843.4,231.0 828.4,253.5 810.4,270.0 801.4,291.0 798.4,321.0 807.4,336.0 804.4,351.0 796.9,381.0 792.4,401.0 819.4,401.0 822.4,381.0 834.4,351.0 837.4,321.0 849.4,283.0 871.4,253.0 885.4,231.0 904.4,207.6 917.8,180.8 904.4,167.4 901.7,151.3 917.8,127.0 933.9,105.7 944.4,92.0 927.4,53.0 917.4,0.0" fill="#fdfdfd"/><polygon points="943.4,133.0 957.4,112.0 967.9,98.0 966.2,89.3 988.9,68.3 1009.9,56.0 1048.4,70.0 1072.9,66.5 1090.4,56.0 1107.9,47.3 1118.4,56.0 1132.4,59.5 1149.9,57.8 1163.9,45.5 1188.4,56.0 1191.3,42.6 1180.2,61.1 1187.6,77.7 1193.2,92.5 1202.4,103.6 1177.9,108.5 1169.2,91.0 1151.7,98.0 1135.9,98.0 1128.9,108.5 1121.9,126.0 1128.9,136.5 1142.9,140.0 1142.9,175.0 1149.9,192.5 1142.9,215.3 1134.2,220.5 1118.4,203.0 1099.2,189.0 1081.7,178.5 1037.9,175.0 1036.2,171.5 1027.4,157.5 1013.4,136.5 1002.9,136.5 999.4,145.3 997.7,140.0 1016.9,129.5 1013.4,115.5 985.4,112.0 967.9,115.5 950.4,133.0" fill="#fdfdfd"/><polygon points="915.4,98.0 925.9,94.5 936.4,101.5 934.7,110.3 915.4,112.0" fill="#fdfdfd"/><polygon points="915.4,150.5 927.7,148.8 934.7,157.5 925.9,164.5 915.4,162.8" fill="#fdfdfd"/><polygon points="1263.5,0.0 1407.8,0.0 1378.2,22.2 1376.3,48.1 1407.8,77.7 1405.9,129.5 1420.7,140.6 1404.1,148.0 1402.2,185.0 1394.8,199.8 1383.7,196.1 1368.9,159.1 1357.8,120.3 1350.4,103.6 1337.5,90.7 1324.5,94.4 1313.4,111.0 1302.3,111.0 1298.6,83.3 1298.6,51.8 1285.7,29.6 1276.4,22.2" fill="#fdfdfd"/><polygon points="1191.3,42.6 1211.7,31.5 1239.4,27.8 1261.6,29.6 1269.0,40.7 1294.9,55.5 1294.9,81.4 1276.4,87.0 1243.1,85.1 1220.9,77.7 1202.4,83.3 1193.2,70.3" fill="#fdfdfd"/><polygon points="1526.2,29.6 1533.6,29.6 1533.6,111.0 1526.2,74.0" fill="#fdfdfd"/><polygon points="396.4,125.5 420.4,118.0 429.4,130.0 450.4,128.5 465.4,140.5 472.9,152.5 465.4,163.0 466.9,175.0 462.4,185.5 465.4,196.0 474.4,208.0 483.4,205.0 486.4,193.0 480.4,178.0 480.4,160.0 487.9,151.0 495.4,130.0 504.4,118.0 510.4,103.0 516.4,103.0 510.4,125.5 501.4,148.0 495.4,163.0 495.4,175.0 492.4,196.0 480.4,217.0 472.9,230.5 465.4,245.5 468.4,260.5 480.4,268.0 510.4,265.0 522.4,271.0 522.4,280.0 507.4,275.5 487.9,271.0 472.9,271.0 457.9,265.0 450.4,259.0 444.4,253.0 432.4,247.0 426.4,235.0 417.4,232.0 414.4,208.0 417.4,178.0 423.4,160.0 420.4,148.0 408.4,140.5" fill="#fdfdfd"/><polygon points="352.9,223.0 364.9,205.0 405.4,206.5 408.4,217.0 414.4,235.0 411.4,245.5 399.4,244.0 372.4,247.0 366.4,241.0 354.4,229.0" fill="#fdfdfd"/><polygon points="615.1,46.5 585.4,48.0 561.4,57.0 546.4,66.0 537.4,78.0 525.4,90.0 510.4,97.5 507.4,108.0 516.4,108.0 517.9,99.0 528.4,99.0 549.4,87.0 561.4,66.0 585.4,55.5 615.1,54.0" fill="#fdfdfd"/><polygon points="460.8,314.9 482.2,296.1 509.1,282.7 535.3,277.3 535.3,293.4 509.1,301.5 487.6,314.9 471.5,336.3 455.4,341.7" fill="#fdfdfd"/><polygon points="396.4,349.8 417.9,341.7 428.6,357.8 439.3,373.9 455.4,400.7 396.4,400.7" fill="#fdfdfd"/><path d="M267.6 325.6 C270.3 323.8 277.0 316.9 283.7 314.9 C290.4 312.9 298.9 314.2 307.9 313.5 C316.8 312.9 327.1 312.9 337.4 310.9 C347.7 308.9 360.2 304.4 369.6 301.5 C379.0 298.6 387.7 293.4 393.7 293.4 C399.7 293.4 404.9 297.2 405.8 301.5 C406.7 305.7 403.3 314.4 399.1 318.9 C394.8 323.4 384.3 324.5 380.3 328.3 C376.3 332.1 375.8 339.5 374.9 341.7" fill="none" stroke="#fdfdfd" stroke-width="7" stroke-linecap="round"/><polygon points="1025.7,98.0 1037.9,85.8 1055.4,87.5 1072.9,101.5 1083.4,113.8 1079.9,126.0 1065.9,129.5 1041.4,122.5 1029.2,112.0" fill="#e4e4e4"/><polygon points="1037.9,148.8 1048.4,145.3 1072.9,147.0 1090.4,154.0 1128.9,180.3 1139.4,203.0 1090.4,189.0 1072.9,183.8 1041.4,178.5 1036.2,171.5" fill="#dde1e5"/><path d="M-0.6 84.2 C5.7 84.4 28.9 84.2 37.0 85.5 C45.0 86.9 45.2 86.7 47.7 92.2 C50.1 97.8 48.6 109.2 51.7 119.1 C54.8 128.9 63.1 142.8 66.5 151.3 C69.8 159.8 69.1 165.1 71.8 170.0 C74.5 175.0 77.6 178.3 82.6 180.8 C87.5 183.2 94.2 182.1 101.3 184.8 C108.5 187.5 117.4 192.6 125.5 196.9 C133.5 201.1 142.9 205.8 149.6 210.3 C156.3 214.7 158.6 218.3 165.7 223.7 C172.9 229.1 182.7 237.3 192.5 242.5 C202.4 247.6 212.7 250.5 224.7 254.5 C236.8 258.6 254.2 264.1 265.0 266.6 C275.7 269.1 281.5 266.2 289.1 269.3 C296.7 272.4 301.2 282.9 310.6 285.4 C319.9 287.8 335.1 286.3 345.4 284.0 C355.7 281.8 365.5 277.6 372.3 272.0 C379.0 266.4 380.7 255.4 385.7 250.5 C390.6 245.6 390.1 246.0 401.8 242.5 C413.4 238.9 439.3 231.7 455.4 229.1 C471.5 226.4 485.0 229.9 498.3 226.4 C511.6 222.8 529.2 210.7 535.3 207.6M243.5 1.0 C242.6 5.1 240.4 16.2 238.1 25.2 C235.9 34.1 235.0 45.3 230.1 54.7 C225.2 64.1 214.0 73.0 208.6 81.5 C203.3 90.0 201.9 98.5 197.9 105.7 C193.9 112.8 187.6 118.2 184.5 124.4 C181.4 130.7 181.4 135.6 179.1 143.2 C176.9 150.8 172.9 161.5 171.1 170.0 C169.3 178.5 170.2 185.2 168.4 194.2 C166.6 203.1 163.0 214.3 160.3 223.7 C157.7 233.1 155.0 239.8 152.3 250.5 C149.6 261.2 148.3 276.0 144.2 288.1 C140.2 300.1 135.8 310.9 128.2 322.9 C120.6 335.0 107.1 351.5 98.6 360.5 C90.2 369.4 83.0 369.9 77.2 376.6 C71.4 383.3 66.0 396.7 63.8 400.7M348.1 1.0 C348.1 13.1 352.1 53.4 348.1 73.5 C344.1 93.6 329.3 106.6 324.0 121.8 C318.6 137.0 320.8 153.1 315.9 164.7 C311.0 176.3 300.7 182.1 294.5 191.5 C288.2 200.9 281.9 211.6 278.4 221.0 C274.8 230.4 273.5 238.9 273.0 247.8 C272.6 256.8 275.2 266.6 275.7 274.7 C276.1 282.7 278.4 288.1 275.7 296.1 C273.0 304.2 265.4 314.0 259.6 322.9 C253.8 331.9 245.7 341.3 240.8 349.8 C235.9 358.3 232.3 365.4 230.1 373.9 C227.9 382.4 227.9 396.3 227.4 400.7M535.3 62.7 C530.1 69.9 514.3 92.2 503.7 105.7 C493.1 119.1 482.2 130.7 471.5 143.2 C460.8 155.7 448.3 168.3 439.3 180.8 C430.4 193.3 423.7 206.7 417.9 218.3 C412.0 229.9 408.0 240.2 404.4 250.5 C400.9 260.8 398.6 269.3 396.4 280.0 C394.2 290.7 393.7 304.6 391.0 314.9 C388.3 325.2 384.3 331.9 380.3 341.7 C376.3 351.5 370.0 364.1 366.9 373.9 C363.8 383.7 362.4 396.3 361.5 400.7M396.4 1.0 C400.0 3.7 410.3 11.8 417.9 17.1 C425.5 22.5 435.7 29.4 442.0 33.2 C448.3 37.0 448.7 39.0 455.4 39.9 C462.1 40.8 473.3 38.2 482.2 38.6 C491.2 39.0 500.2 38.6 509.1 42.6 C517.9 46.6 531.0 59.4 535.3 62.7M535.3 298.8 C526.5 300.1 500.0 304.6 482.2 306.8 C464.4 309.1 443.3 310.9 428.6 312.2 C413.8 313.5 402.7 313.1 393.7 314.9 C384.8 316.7 384.8 317.6 374.9 322.9 C365.1 328.3 347.7 337.7 334.7 347.1 C321.7 356.5 304.7 370.3 297.1 379.3 C289.5 388.2 290.4 397.1 289.1 400.7M393.7 314.9 C399.5 317.1 418.3 324.7 428.6 328.3 C438.9 331.9 446.9 332.8 455.4 336.3 C463.9 339.9 473.7 344.4 479.6 349.8 C485.4 355.1 491.6 360.0 490.3 368.5 C488.9 377.0 474.6 395.4 471.5 400.7M109.4 400.7 C112.1 397.1 117.0 382.8 125.5 379.3 C134.0 375.7 150.1 377.0 160.3 379.3 C170.6 381.5 180.9 389.1 187.2 392.7 C193.4 396.3 196.1 399.4 197.9 400.7M587.8 151.3 C593.6 153.9 608.8 160.7 622.7 167.4 C636.6 174.1 657.6 184.8 671.0 191.5 C684.4 198.2 691.1 201.3 703.2 207.6 C715.2 213.9 736.7 223.7 743.4 229.1 C750.1 234.4 744.3 237.5 743.4 239.8 C742.5 242.0 738.9 242.0 738.0 242.5M515.4 213.0 C519.9 210.3 533.3 204.5 542.2 196.9 C551.2 189.3 561.0 177.2 569.0 167.4 C577.1 157.5 582.5 148.1 590.5 137.8 C598.6 127.6 609.3 116.4 617.3 105.7 C625.4 94.9 632.5 85.5 638.8 73.5 C645.0 61.4 651.8 45.3 654.9 33.2 C658.0 21.2 657.1 6.4 657.6 1.0M703.2 1.0 C704.1 4.2 708.5 14.0 708.5 19.8 C708.5 25.6 707.6 27.0 703.2 35.9 C698.7 44.9 688.9 61.8 681.7 73.5 C674.6 85.1 667.4 95.4 660.2 105.7 C653.1 115.9 645.0 126.2 638.8 135.2 C632.5 144.1 627.2 150.8 622.7 159.3 C618.2 167.8 616.4 175.4 612.0 186.1 C607.5 196.9 601.2 213.0 595.9 223.7 C590.5 234.4 585.6 241.6 579.8 250.5 C574.0 259.5 565.0 271.1 561.0 277.3 C557.0 283.6 556.5 286.3 555.6 288.1M515.4 293.4 C520.8 293.4 538.6 292.1 547.6 293.4 C556.5 294.8 562.3 296.6 569.0 301.5 C575.8 306.4 581.1 319.4 587.8 322.9 C594.5 326.5 601.7 321.6 609.3 322.9 C616.9 324.3 624.9 328.7 633.4 331.0 C641.9 333.2 648.6 334.1 660.2 336.3 C671.9 338.6 694.2 340.8 703.2 344.4 C712.1 348.0 712.1 355.6 713.9 357.8M587.8 322.9 C586.5 327.4 581.6 341.3 579.8 349.8 C578.0 358.3 577.1 365.4 577.1 373.9 C577.1 382.4 579.3 396.3 579.8 400.7M845.3 1.0 C842.7 5.1 836.8 13.1 829.2 25.2 C821.6 37.3 807.3 60.1 799.7 73.5 C792.1 86.9 788.6 95.8 783.6 105.7 C778.7 115.5 775.6 122.2 770.2 132.5 C764.9 142.8 758.2 154.8 751.5 167.4 C744.7 179.9 736.3 197.3 730.0 207.6 C723.7 217.9 717.5 220.1 713.9 229.1 C710.3 238.0 710.3 246.9 708.5 261.2 C706.7 275.5 704.5 301.5 703.2 314.9 C701.8 328.3 701.4 327.4 700.5 341.7 C699.6 356.0 698.3 390.9 697.8 400.7M912.4 1.0 C911.9 8.6 907.5 34.6 909.7 46.6 C911.9 58.7 920.0 67.2 925.8 73.5 C931.6 79.7 941.5 82.4 944.6 84.2M829.2 218.3 C839.5 223.7 871.7 241.6 890.9 250.5 C910.2 259.5 923.8 266.2 944.6 272.0 C965.3 277.8 1003.6 283.1 1015.4 285.4M799.7 272.0 C802.9 271.1 812.3 265.7 818.5 266.6 C824.8 267.5 829.7 273.8 837.3 277.3 C844.9 280.9 850.7 284.9 864.1 288.1 C877.5 291.2 899.9 292.5 917.8 296.1 C935.6 299.7 955.1 306.4 971.4 309.5 C987.7 312.7 1008.1 314.0 1015.4 314.9M955.3 81.5 C949.9 91.8 934.7 126.7 923.1 143.2 C911.5 159.8 897.2 167.8 885.6 180.8 C873.9 193.7 863.7 208.5 853.4 221.0 C843.1 233.5 831.5 247.8 823.9 255.9 C816.3 263.9 811.4 261.7 807.8 269.3 C804.2 276.9 802.9 289.4 802.4 301.5 C802.0 313.5 806.0 325.2 805.1 341.7 C804.2 358.3 798.4 390.9 797.1 400.7M1036.3 -0.8 C1031.7 4.4 1021.3 19.4 1008.4 30.2 C995.5 41.1 969.1 55.0 958.8 64.3 C948.5 73.6 951.6 77.2 946.4 86.0 C941.2 94.8 931.9 109.3 927.8 117.0 C923.7 124.8 920.6 125.3 921.6 132.5 C922.6 139.7 928.3 152.1 934.0 160.4 C939.7 168.7 945.9 176.4 955.7 182.1 C965.5 187.8 981.0 191.9 992.9 194.5 C1004.8 197.1 1015.1 200.2 1027.0 197.6 C1038.9 195.0 1053.9 182.1 1064.2 179.0 C1074.5 175.9 1080.7 174.9 1089.0 179.0 C1097.3 183.1 1106.6 196.6 1113.8 203.8 C1121.0 211.0 1127.8 216.7 1132.4 222.4 C1137.1 228.1 1140.2 235.3 1141.7 237.9M1178.9 -0.8 C1178.9 4.4 1176.3 19.4 1178.9 30.2 C1181.5 41.1 1188.7 50.9 1194.4 64.3 C1200.1 77.7 1209.4 101.0 1213.0 110.8 C1216.6 120.6 1216.6 116.0 1216.1 123.2 C1215.6 130.4 1213.5 144.9 1209.9 154.2 C1206.3 163.5 1200.1 171.8 1194.4 179.0 C1188.7 186.2 1180.5 191.4 1175.8 197.6 C1171.2 203.8 1167.5 207.0 1166.5 216.2 C1165.5 225.4 1169.1 246.9 1169.6 253.1M1228.5 -0.8 C1233.2 1.3 1247.6 9.0 1256.4 11.6 C1265.2 14.2 1274.5 10.1 1281.2 14.7 C1287.9 19.4 1294.1 27.6 1296.7 39.5 C1299.3 51.4 1296.2 73.1 1296.7 86.0 C1297.2 98.9 1296.2 108.7 1299.8 117.0 C1303.4 125.3 1313.2 127.3 1318.4 135.6 C1323.6 143.9 1327.2 154.2 1330.8 166.6 C1334.4 179.0 1337.5 195.6 1340.1 210.0 C1342.7 224.4 1345.3 245.9 1346.3 253.1M1222.3 117.0 C1227.0 118.6 1239.4 124.8 1250.2 126.3 C1261.1 127.9 1278.1 127.9 1287.4 126.3 C1296.7 124.8 1299.3 118.6 1306.0 117.0 C1312.7 115.5 1320.5 115.5 1327.7 117.0 C1334.9 118.6 1343.2 121.7 1349.4 126.3 C1355.6 131.0 1359.7 136.1 1364.9 144.9 C1370.1 153.7 1375.8 168.2 1380.4 179.0 C1385.1 189.9 1387.6 201.7 1392.8 210.0 C1398.0 218.3 1403.1 221.4 1411.4 228.6 C1419.7 235.8 1437.2 249.0 1442.4 253.1M915.4 30.2 C918.5 34.3 926.8 49.3 934.0 55.0 C941.2 60.7 954.7 62.8 958.8 64.3M915.4 241.0 C930.9 238.9 982.6 231.7 1008.4 228.6 C1034.2 225.5 1049.7 223.4 1070.4 222.4 C1091.1 221.4 1118.5 224.5 1132.4 222.4 C1146.4 220.3 1146.4 213.1 1154.1 210.0 C1161.9 206.9 1167.0 204.8 1178.9 203.8 C1190.8 202.8 1212.5 202.8 1225.4 203.8 C1238.3 204.8 1246.1 206.9 1256.4 210.0 C1266.7 213.1 1277.1 220.3 1287.4 222.4 C1297.7 224.5 1308.1 222.9 1318.4 222.4 C1328.7 221.9 1339.1 220.3 1349.4 219.3 C1359.7 218.3 1370.1 218.3 1380.4 216.2 C1390.7 214.1 1401.1 210.5 1411.4 206.9 C1421.7 203.3 1432.1 201.2 1442.4 194.5 C1452.7 187.8 1463.1 174.9 1473.4 166.6 C1483.7 158.3 1494.6 150.6 1504.4 144.9 C1514.2 139.2 1527.7 134.6 1532.3 132.5M1532.3 188.3 C1525.1 190.9 1503.9 199.2 1488.9 203.8 C1473.9 208.5 1457.4 212.1 1442.4 216.2 C1427.4 220.3 1406.2 226.5 1399.0 228.6M995.4 301.0 C999.9 300.1 1011.2 294.3 1022.4 295.6 C1033.7 297.0 1051.7 304.6 1062.9 309.1 C1074.2 313.6 1078.7 316.8 1089.9 322.6 C1101.2 328.5 1118.3 337.0 1130.4 344.2 C1142.6 351.4 1152.9 359.5 1162.8 365.8 C1172.7 372.1 1182.6 376.2 1189.8 382.0 C1197.0 387.9 1203.3 397.8 1206.0 400.9M1103.4 193.0 C1107.9 198.4 1123.2 211.9 1130.4 225.4 C1137.6 238.9 1142.1 260.5 1146.6 274.0 C1151.1 287.5 1153.8 297.4 1157.4 306.4 C1161.0 315.4 1162.8 320.8 1168.2 328.0 C1173.6 335.2 1183.5 341.5 1189.8 349.6 C1196.1 357.7 1202.9 368.1 1206.0 376.6 C1209.2 385.2 1208.3 396.9 1208.7 400.9M1170.9 193.0 C1171.4 197.5 1171.4 208.8 1173.6 220.0 C1175.9 231.3 1183.5 251.5 1184.4 260.5 C1185.3 269.5 1180.8 267.3 1179.0 274.0 C1177.2 280.8 1173.2 292.0 1173.6 301.0 C1174.1 310.0 1177.7 319.0 1181.7 328.0 C1185.8 337.0 1193.9 346.0 1197.9 355.0 C1202.0 364.0 1204.7 377.5 1206.0 382.0M995.4 244.3 C1004.4 243.0 1029.2 238.9 1049.4 236.2 C1069.7 233.5 1102.5 229.5 1116.9 228.1 C1131.3 226.8 1126.8 230.8 1135.8 228.1 C1144.8 225.4 1156.1 216.0 1170.9 211.9 C1185.8 207.9 1209.2 203.4 1224.9 203.8 C1240.7 204.3 1254.2 210.6 1265.4 214.6 C1276.7 218.7 1280.3 225.4 1292.4 228.1 C1304.6 230.8 1320.3 233.1 1338.3 230.8 C1356.3 228.6 1383.3 219.1 1400.4 214.6 C1417.5 210.1 1427.4 206.1 1440.9 203.8 C1454.4 201.6 1467.9 202.9 1481.4 201.1 C1494.9 199.3 1515.2 194.4 1521.9 193.0M995.4 346.9 C1002.2 345.6 1020.2 343.3 1035.9 338.8 C1051.7 334.3 1076.4 324.9 1089.9 319.9 C1103.4 315.0 1106.6 313.2 1116.9 309.1 C1127.3 305.1 1142.1 300.1 1152.0 295.6 C1161.9 291.1 1166.4 283.5 1176.3 282.1 C1186.2 280.8 1201.1 285.3 1211.4 287.5 C1221.8 289.8 1224.9 293.4 1238.4 295.6 C1251.9 297.9 1276.7 302.4 1292.4 301.0 C1308.2 299.7 1319.4 292.0 1332.9 287.5 C1346.4 283.0 1359.9 278.5 1373.4 274.0 C1386.9 269.5 1404.0 265.0 1413.9 260.5 C1423.8 256.0 1426.1 252.4 1432.8 247.0 C1439.6 241.6 1446.3 233.1 1454.4 228.1 C1462.5 223.2 1468.4 223.2 1481.4 217.3 C1494.5 211.5 1524.2 197.1 1532.7 193.0M1327.5 193.0 C1330.7 204.3 1340.6 242.5 1346.4 260.5 C1352.3 278.5 1357.2 288.9 1362.6 301.0 C1368.0 313.2 1374.3 327.1 1378.8 333.4 C1383.3 339.7 1387.8 337.9 1389.6 338.8M1386.9 193.0 C1388.3 196.2 1390.1 206.5 1395.0 211.9 C1400.0 217.3 1410.3 219.6 1416.6 225.4 C1422.9 231.3 1425.6 238.0 1432.8 247.0 C1440.0 256.0 1451.7 271.3 1459.8 279.4 C1467.9 287.5 1476.5 289.8 1481.4 295.6 C1486.4 301.5 1488.2 306.9 1489.5 314.5 C1490.9 322.2 1491.3 327.1 1489.5 341.5 C1487.7 355.9 1480.5 391.0 1478.7 400.9M1532.7 257.8 C1524.2 264.1 1494.5 286.2 1481.4 295.6 C1468.4 305.1 1463.4 309.1 1454.4 314.5 C1445.4 319.9 1436.4 323.1 1427.4 328.0 C1418.4 333.0 1413.9 339.7 1400.4 344.2 C1386.9 348.7 1359.9 350.5 1346.4 355.0 C1332.9 359.5 1332.9 367.6 1319.4 371.2 C1305.9 374.8 1283.4 375.3 1265.4 376.6 C1247.4 378.0 1224.9 377.5 1211.4 379.3 C1197.9 381.1 1188.9 386.1 1184.4 387.4M1295.1 400.9 C1303.7 397.8 1328.9 390.6 1346.4 382.0 C1364.0 373.5 1386.9 357.7 1400.4 349.6 C1413.9 341.5 1418.4 338.4 1427.4 333.4 C1436.4 328.5 1436.9 325.3 1454.4 319.9 C1472.0 314.5 1519.7 304.2 1532.7 301.0M1532.7 222.7 C1526.4 223.6 1504.4 223.2 1494.9 228.1 C1485.5 233.1 1481.0 243.9 1476.0 252.4 C1471.1 261.0 1470.6 270.4 1465.2 279.4 C1459.8 288.4 1451.7 297.9 1443.6 306.4 C1435.5 315.0 1421.1 326.7 1416.6 330.7" fill="none" stroke="#a8a8a8" stroke-width="5" stroke-linecap="round" stroke-linejoin="round"/><path d="M-0.6 84.2 C5.7 84.4 28.9 84.2 37.0 85.5 C45.0 86.9 45.2 86.7 47.7 92.2 C50.1 97.8 48.6 109.2 51.7 119.1 C54.8 128.9 63.1 142.8 66.5 151.3 C69.8 159.8 69.1 165.1 71.8 170.0 C74.5 175.0 77.6 178.3 82.6 180.8 C87.5 183.2 94.2 182.1 101.3 184.8 C108.5 187.5 117.4 192.6 125.5 196.9 C133.5 201.1 142.9 205.8 149.6 210.3 C156.3 214.7 158.6 218.3 165.7 223.7 C172.9 229.1 182.7 237.3 192.5 242.5 C202.4 247.6 212.7 250.5 224.7 254.5 C236.8 258.6 254.2 264.1 265.0 266.6 C275.7 269.1 281.5 266.2 289.1 269.3 C296.7 272.4 301.2 282.9 310.6 285.4 C319.9 287.8 335.1 286.3 345.4 284.0 C355.7 281.8 365.5 277.6 372.3 272.0 C379.0 266.4 380.7 255.4 385.7 250.5 C390.6 245.6 390.1 246.0 401.8 242.5 C413.4 238.9 439.3 231.7 455.4 229.1 C471.5 226.4 485.0 229.9 498.3 226.4 C511.6 222.8 529.2 210.7 535.3 207.6M243.5 1.0 C242.6 5.1 240.4 16.2 238.1 25.2 C235.9 34.1 235.0 45.3 230.1 54.7 C225.2 64.1 214.0 73.0 208.6 81.5 C203.3 90.0 201.9 98.5 197.9 105.7 C193.9 112.8 187.6 118.2 184.5 124.4 C181.4 130.7 181.4 135.6 179.1 143.2 C176.9 150.8 172.9 161.5 171.1 170.0 C169.3 178.5 170.2 185.2 168.4 194.2 C166.6 203.1 163.0 214.3 160.3 223.7 C157.7 233.1 155.0 239.8 152.3 250.5 C149.6 261.2 148.3 276.0 144.2 288.1 C140.2 300.1 135.8 310.9 128.2 322.9 C120.6 335.0 107.1 351.5 98.6 360.5 C90.2 369.4 83.0 369.9 77.2 376.6 C71.4 383.3 66.0 396.7 63.8 400.7M348.1 1.0 C348.1 13.1 352.1 53.4 348.1 73.5 C344.1 93.6 329.3 106.6 324.0 121.8 C318.6 137.0 320.8 153.1 315.9 164.7 C311.0 176.3 300.7 182.1 294.5 191.5 C288.2 200.9 281.9 211.6 278.4 221.0 C274.8 230.4 273.5 238.9 273.0 247.8 C272.6 256.8 275.2 266.6 275.7 274.7 C276.1 282.7 278.4 288.1 275.7 296.1 C273.0 304.2 265.4 314.0 259.6 322.9 C253.8 331.9 245.7 341.3 240.8 349.8 C235.9 358.3 232.3 365.4 230.1 373.9 C227.9 382.4 227.9 396.3 227.4 400.7M535.3 62.7 C530.1 69.9 514.3 92.2 503.7 105.7 C493.1 119.1 482.2 130.7 471.5 143.2 C460.8 155.7 448.3 168.3 439.3 180.8 C430.4 193.3 423.7 206.7 417.9 218.3 C412.0 229.9 408.0 240.2 404.4 250.5 C400.9 260.8 398.6 269.3 396.4 280.0 C394.2 290.7 393.7 304.6 391.0 314.9 C388.3 325.2 384.3 331.9 380.3 341.7 C376.3 351.5 370.0 364.1 366.9 373.9 C363.8 383.7 362.4 396.3 361.5 400.7M396.4 1.0 C400.0 3.7 410.3 11.8 417.9 17.1 C425.5 22.5 435.7 29.4 442.0 33.2 C448.3 37.0 448.7 39.0 455.4 39.9 C462.1 40.8 473.3 38.2 482.2 38.6 C491.2 39.0 500.2 38.6 509.1 42.6 C517.9 46.6 531.0 59.4 535.3 62.7M535.3 298.8 C526.5 300.1 500.0 304.6 482.2 306.8 C464.4 309.1 443.3 310.9 428.6 312.2 C413.8 313.5 402.7 313.1 393.7 314.9 C384.8 316.7 384.8 317.6 374.9 322.9 C365.1 328.3 347.7 337.7 334.7 347.1 C321.7 356.5 304.7 370.3 297.1 379.3 C289.5 388.2 290.4 397.1 289.1 400.7M393.7 314.9 C399.5 317.1 418.3 324.7 428.6 328.3 C438.9 331.9 446.9 332.8 455.4 336.3 C463.9 339.9 473.7 344.4 479.6 349.8 C485.4 355.1 491.6 360.0 490.3 368.5 C488.9 377.0 474.6 395.4 471.5 400.7M109.4 400.7 C112.1 397.1 117.0 382.8 125.5 379.3 C134.0 375.7 150.1 377.0 160.3 379.3 C170.6 381.5 180.9 389.1 187.2 392.7 C193.4 396.3 196.1 399.4 197.9 400.7M587.8 151.3 C593.6 153.9 608.8 160.7 622.7 167.4 C636.6 174.1 657.6 184.8 671.0 191.5 C684.4 198.2 691.1 201.3 703.2 207.6 C715.2 213.9 736.7 223.7 743.4 229.1 C750.1 234.4 744.3 237.5 743.4 239.8 C742.5 242.0 738.9 242.0 738.0 242.5M515.4 213.0 C519.9 210.3 533.3 204.5 542.2 196.9 C551.2 189.3 561.0 177.2 569.0 167.4 C577.1 157.5 582.5 148.1 590.5 137.8 C598.6 127.6 609.3 116.4 617.3 105.7 C625.4 94.9 632.5 85.5 638.8 73.5 C645.0 61.4 651.8 45.3 654.9 33.2 C658.0 21.2 657.1 6.4 657.6 1.0M703.2 1.0 C704.1 4.2 708.5 14.0 708.5 19.8 C708.5 25.6 707.6 27.0 703.2 35.9 C698.7 44.9 688.9 61.8 681.7 73.5 C674.6 85.1 667.4 95.4 660.2 105.7 C653.1 115.9 645.0 126.2 638.8 135.2 C632.5 144.1 627.2 150.8 622.7 159.3 C618.2 167.8 616.4 175.4 612.0 186.1 C607.5 196.9 601.2 213.0 595.9 223.7 C590.5 234.4 585.6 241.6 579.8 250.5 C574.0 259.5 565.0 271.1 561.0 277.3 C557.0 283.6 556.5 286.3 555.6 288.1M515.4 293.4 C520.8 293.4 538.6 292.1 547.6 293.4 C556.5 294.8 562.3 296.6 569.0 301.5 C575.8 306.4 581.1 319.4 587.8 322.9 C594.5 326.5 601.7 321.6 609.3 322.9 C616.9 324.3 624.9 328.7 633.4 331.0 C641.9 333.2 648.6 334.1 660.2 336.3 C671.9 338.6 694.2 340.8 703.2 344.4 C712.1 348.0 712.1 355.6 713.9 357.8M587.8 322.9 C586.5 327.4 581.6 341.3 579.8 349.8 C578.0 358.3 577.1 365.4 577.1 373.9 C577.1 382.4 579.3 396.3 579.8 400.7M845.3 1.0 C842.7 5.1 836.8 13.1 829.2 25.2 C821.6 37.3 807.3 60.1 799.7 73.5 C792.1 86.9 788.6 95.8 783.6 105.7 C778.7 115.5 775.6 122.2 770.2 132.5 C764.9 142.8 758.2 154.8 751.5 167.4 C744.7 179.9 736.3 197.3 730.0 207.6 C723.7 217.9 717.5 220.1 713.9 229.1 C710.3 238.0 710.3 246.9 708.5 261.2 C706.7 275.5 704.5 301.5 703.2 314.9 C701.8 328.3 701.4 327.4 700.5 341.7 C699.6 356.0 698.3 390.9 697.8 400.7M912.4 1.0 C911.9 8.6 907.5 34.6 909.7 46.6 C911.9 58.7 920.0 67.2 925.8 73.5 C931.6 79.7 941.5 82.4 944.6 84.2M829.2 218.3 C839.5 223.7 871.7 241.6 890.9 250.5 C910.2 259.5 923.8 266.2 944.6 272.0 C965.3 277.8 1003.6 283.1 1015.4 285.4M799.7 272.0 C802.9 271.1 812.3 265.7 818.5 266.6 C824.8 267.5 829.7 273.8 837.3 277.3 C844.9 280.9 850.7 284.9 864.1 288.1 C877.5 291.2 899.9 292.5 917.8 296.1 C935.6 299.7 955.1 306.4 971.4 309.5 C987.7 312.7 1008.1 314.0 1015.4 314.9M955.3 81.5 C949.9 91.8 934.7 126.7 923.1 143.2 C911.5 159.8 897.2 167.8 885.6 180.8 C873.9 193.7 863.7 208.5 853.4 221.0 C843.1 233.5 831.5 247.8 823.9 255.9 C816.3 263.9 811.4 261.7 807.8 269.3 C804.2 276.9 802.9 289.4 802.4 301.5 C802.0 313.5 806.0 325.2 805.1 341.7 C804.2 358.3 798.4 390.9 797.1 400.7M1036.3 -0.8 C1031.7 4.4 1021.3 19.4 1008.4 30.2 C995.5 41.1 969.1 55.0 958.8 64.3 C948.5 73.6 951.6 77.2 946.4 86.0 C941.2 94.8 931.9 109.3 927.8 117.0 C923.7 124.8 920.6 125.3 921.6 132.5 C922.6 139.7 928.3 152.1 934.0 160.4 C939.7 168.7 945.9 176.4 955.7 182.1 C965.5 187.8 981.0 191.9 992.9 194.5 C1004.8 197.1 1015.1 200.2 1027.0 197.6 C1038.9 195.0 1053.9 182.1 1064.2 179.0 C1074.5 175.9 1080.7 174.9 1089.0 179.0 C1097.3 183.1 1106.6 196.6 1113.8 203.8 C1121.0 211.0 1127.8 216.7 1132.4 222.4 C1137.1 228.1 1140.2 235.3 1141.7 237.9M1178.9 -0.8 C1178.9 4.4 1176.3 19.4 1178.9 30.2 C1181.5 41.1 1188.7 50.9 1194.4 64.3 C1200.1 77.7 1209.4 101.0 1213.0 110.8 C1216.6 120.6 1216.6 116.0 1216.1 123.2 C1215.6 130.4 1213.5 144.9 1209.9 154.2 C1206.3 163.5 1200.1 171.8 1194.4 179.0 C1188.7 186.2 1180.5 191.4 1175.8 197.6 C1171.2 203.8 1167.5 207.0 1166.5 216.2 C1165.5 225.4 1169.1 246.9 1169.6 253.1M1228.5 -0.8 C1233.2 1.3 1247.6 9.0 1256.4 11.6 C1265.2 14.2 1274.5 10.1 1281.2 14.7 C1287.9 19.4 1294.1 27.6 1296.7 39.5 C1299.3 51.4 1296.2 73.1 1296.7 86.0 C1297.2 98.9 1296.2 108.7 1299.8 117.0 C1303.4 125.3 1313.2 127.3 1318.4 135.6 C1323.6 143.9 1327.2 154.2 1330.8 166.6 C1334.4 179.0 1337.5 195.6 1340.1 210.0 C1342.7 224.4 1345.3 245.9 1346.3 253.1M1222.3 117.0 C1227.0 118.6 1239.4 124.8 1250.2 126.3 C1261.1 127.9 1278.1 127.9 1287.4 126.3 C1296.7 124.8 1299.3 118.6 1306.0 117.0 C1312.7 115.5 1320.5 115.5 1327.7 117.0 C1334.9 118.6 1343.2 121.7 1349.4 126.3 C1355.6 131.0 1359.7 136.1 1364.9 144.9 C1370.1 153.7 1375.8 168.2 1380.4 179.0 C1385.1 189.9 1387.6 201.7 1392.8 210.0 C1398.0 218.3 1403.1 221.4 1411.4 228.6 C1419.7 235.8 1437.2 249.0 1442.4 253.1M915.4 30.2 C918.5 34.3 926.8 49.3 934.0 55.0 C941.2 60.7 954.7 62.8 958.8 64.3M915.4 241.0 C930.9 238.9 982.6 231.7 1008.4 228.6 C1034.2 225.5 1049.7 223.4 1070.4 222.4 C1091.1 221.4 1118.5 224.5 1132.4 222.4 C1146.4 220.3 1146.4 213.1 1154.1 210.0 C1161.9 206.9 1167.0 204.8 1178.9 203.8 C1190.8 202.8 1212.5 202.8 1225.4 203.8 C1238.3 204.8 1246.1 206.9 1256.4 210.0 C1266.7 213.1 1277.1 220.3 1287.4 222.4 C1297.7 224.5 1308.1 222.9 1318.4 222.4 C1328.7 221.9 1339.1 220.3 1349.4 219.3 C1359.7 218.3 1370.1 218.3 1380.4 216.2 C1390.7 214.1 1401.1 210.5 1411.4 206.9 C1421.7 203.3 1432.1 201.2 1442.4 194.5 C1452.7 187.8 1463.1 174.9 1473.4 166.6 C1483.7 158.3 1494.6 150.6 1504.4 144.9 C1514.2 139.2 1527.7 134.6 1532.3 132.5M1532.3 188.3 C1525.1 190.9 1503.9 199.2 1488.9 203.8 C1473.9 208.5 1457.4 212.1 1442.4 216.2 C1427.4 220.3 1406.2 226.5 1399.0 228.6M995.4 301.0 C999.9 300.1 1011.2 294.3 1022.4 295.6 C1033.7 297.0 1051.7 304.6 1062.9 309.1 C1074.2 313.6 1078.7 316.8 1089.9 322.6 C1101.2 328.5 1118.3 337.0 1130.4 344.2 C1142.6 351.4 1152.9 359.5 1162.8 365.8 C1172.7 372.1 1182.6 376.2 1189.8 382.0 C1197.0 387.9 1203.3 397.8 1206.0 400.9M1103.4 193.0 C1107.9 198.4 1123.2 211.9 1130.4 225.4 C1137.6 238.9 1142.1 260.5 1146.6 274.0 C1151.1 287.5 1153.8 297.4 1157.4 306.4 C1161.0 315.4 1162.8 320.8 1168.2 328.0 C1173.6 335.2 1183.5 341.5 1189.8 349.6 C1196.1 357.7 1202.9 368.1 1206.0 376.6 C1209.2 385.2 1208.3 396.9 1208.7 400.9M1170.9 193.0 C1171.4 197.5 1171.4 208.8 1173.6 220.0 C1175.9 231.3 1183.5 251.5 1184.4 260.5 C1185.3 269.5 1180.8 267.3 1179.0 274.0 C1177.2 280.8 1173.2 292.0 1173.6 301.0 C1174.1 310.0 1177.7 319.0 1181.7 328.0 C1185.8 337.0 1193.9 346.0 1197.9 355.0 C1202.0 364.0 1204.7 377.5 1206.0 382.0M995.4 244.3 C1004.4 243.0 1029.2 238.9 1049.4 236.2 C1069.7 233.5 1102.5 229.5 1116.9 228.1 C1131.3 226.8 1126.8 230.8 1135.8 228.1 C1144.8 225.4 1156.1 216.0 1170.9 211.9 C1185.8 207.9 1209.2 203.4 1224.9 203.8 C1240.7 204.3 1254.2 210.6 1265.4 214.6 C1276.7 218.7 1280.3 225.4 1292.4 228.1 C1304.6 230.8 1320.3 233.1 1338.3 230.8 C1356.3 228.6 1383.3 219.1 1400.4 214.6 C1417.5 210.1 1427.4 206.1 1440.9 203.8 C1454.4 201.6 1467.9 202.9 1481.4 201.1 C1494.9 199.3 1515.2 194.4 1521.9 193.0M995.4 346.9 C1002.2 345.6 1020.2 343.3 1035.9 338.8 C1051.7 334.3 1076.4 324.9 1089.9 319.9 C1103.4 315.0 1106.6 313.2 1116.9 309.1 C1127.3 305.1 1142.1 300.1 1152.0 295.6 C1161.9 291.1 1166.4 283.5 1176.3 282.1 C1186.2 280.8 1201.1 285.3 1211.4 287.5 C1221.8 289.8 1224.9 293.4 1238.4 295.6 C1251.9 297.9 1276.7 302.4 1292.4 301.0 C1308.2 299.7 1319.4 292.0 1332.9 287.5 C1346.4 283.0 1359.9 278.5 1373.4 274.0 C1386.9 269.5 1404.0 265.0 1413.9 260.5 C1423.8 256.0 1426.1 252.4 1432.8 247.0 C1439.6 241.6 1446.3 233.1 1454.4 228.1 C1462.5 223.2 1468.4 223.2 1481.4 217.3 C1494.5 211.5 1524.2 197.1 1532.7 193.0M1327.5 193.0 C1330.7 204.3 1340.6 242.5 1346.4 260.5 C1352.3 278.5 1357.2 288.9 1362.6 301.0 C1368.0 313.2 1374.3 327.1 1378.8 333.4 C1383.3 339.7 1387.8 337.9 1389.6 338.8M1386.9 193.0 C1388.3 196.2 1390.1 206.5 1395.0 211.9 C1400.0 217.3 1410.3 219.6 1416.6 225.4 C1422.9 231.3 1425.6 238.0 1432.8 247.0 C1440.0 256.0 1451.7 271.3 1459.8 279.4 C1467.9 287.5 1476.5 289.8 1481.4 295.6 C1486.4 301.5 1488.2 306.9 1489.5 314.5 C1490.9 322.2 1491.3 327.1 1489.5 341.5 C1487.7 355.9 1480.5 391.0 1478.7 400.9M1532.7 257.8 C1524.2 264.1 1494.5 286.2 1481.4 295.6 C1468.4 305.1 1463.4 309.1 1454.4 314.5 C1445.4 319.9 1436.4 323.1 1427.4 328.0 C1418.4 333.0 1413.9 339.7 1400.4 344.2 C1386.9 348.7 1359.9 350.5 1346.4 355.0 C1332.9 359.5 1332.9 367.6 1319.4 371.2 C1305.9 374.8 1283.4 375.3 1265.4 376.6 C1247.4 378.0 1224.9 377.5 1211.4 379.3 C1197.9 381.1 1188.9 386.1 1184.4 387.4M1295.1 400.9 C1303.7 397.8 1328.9 390.6 1346.4 382.0 C1364.0 373.5 1386.9 357.7 1400.4 349.6 C1413.9 341.5 1418.4 338.4 1427.4 333.4 C1436.4 328.5 1436.9 325.3 1454.4 319.9 C1472.0 314.5 1519.7 304.2 1532.7 301.0M1532.7 222.7 C1526.4 223.6 1504.4 223.2 1494.9 228.1 C1485.5 233.1 1481.0 243.9 1476.0 252.4 C1471.1 261.0 1470.6 270.4 1465.2 279.4 C1459.8 288.4 1451.7 297.9 1443.6 306.4 C1435.5 315.0 1421.1 326.7 1416.6 330.7" fill="none" stroke="#f0f0f0" stroke-width="2.6" stroke-linecap="round" stroke-linejoin="round"/></g></svg>
<div style="position:absolute;left:1872.50px;top:1154.60px;width:37.90px;height:37.80px;background:#fff;border-radius:3px;box-shadow:0 1px 4px rgba(0,0,0,.25)"></div>
<svg style="position:absolute;left:1884.00px;top:1166.00px;" width="14" height="14" viewBox="0 0 14 14"><g fill="none" stroke="#111" stroke-width="1.8"><circle cx="5.5" cy="5.5" r="3.6"/><path d="M8.2 8.2 L11.5 11.5" stroke-linecap="round"/></g></svg>
<svg style="position:absolute;left:522.00px;top:1323.70px;" width="31" height="38" viewBox="0 0 31 38"><path d="M15.5 37.5 C10 31.5 0.3 22.8 0.3 15.3 C0.3 6.9 7.1 0.3 15.5 0.3 C23.9 0.3 30.7 6.9 30.7 15.3 C30.7 22.8 21 31.5 15.5 37.5 Z" fill="#ec6e37"/><circle cx="15.5" cy="15" r="3.6" fill="#e6e9eb"/></svg>
<svg style="position:absolute;left:931.50px;top:1368.00px;" width="31" height="38" viewBox="0 0 31 38"><path d="M15.5 37.5 C10 31.5 0.3 22.8 0.3 15.3 C0.3 6.9 7.1 0.3 15.5 0.3 C23.9 0.3 30.7 6.9 30.7 15.3 C30.7 22.8 21 31.5 15.5 37.5 Z" fill="#ec6e37"/><circle cx="15.5" cy="15" r="3.6" fill="#e6e9eb"/></svg>
<svg style="position:absolute;left:1074.50px;top:1512.00px;" width="31" height="38" viewBox="0 0 31 38"><path d="M15.5 37.5 C10 31.5 0.3 22.8 0.3 15.3 C0.3 6.9 7.1 0.3 15.5 0.3 C23.9 0.3 30.7 6.9 30.7 15.3 C30.7 22.8 21 31.5 15.5 37.5 Z" fill="#ec6e37"/><circle cx="15.5" cy="15" r="3.6" fill="#e6e9eb"/></svg>
<svg style="position:absolute;left:1325.50px;top:1288.00px;" width="31" height="38" viewBox="0 0 31 38"><path d="M15.5 37.5 C10 31.5 0.3 22.8 0.3 15.3 C0.3 6.9 7.1 0.3 15.5 0.3 C23.9 0.3 30.7 6.9 30.7 15.3 C30.7 22.8 21 31.5 15.5 37.5 Z" fill="#ec6e37"/><circle cx="15.5" cy="15" r="3.6" fill="#e6e9eb"/></svg>
<svg style="position:absolute;left:1732.50px;top:1323.00px;" width="31" height="38" viewBox="0 0 31 38"><path d="M15.5 37.5 C10 31.5 0.3 22.8 0.3 15.3 C0.3 6.9 7.1 0.3 15.5 0.3 C23.9 0.3 30.7 6.9 30.7 15.3 C30.7 22.8 21 31.5 15.5 37.5 Z" fill="#ec6e37"/><circle cx="15.5" cy="15" r="3.6" fill="#e6e9eb"/></svg>
<div class="t" style="left:88.40px;top:37.33px;font-size:30.5px;letter-spacing:-0.020px;color:#0d0f14;font-weight:700;">Vendico</div>
<div class="t" style="left:96.60px;top:132.90px;font-size:20.0px;letter-spacing:0.193px;color:#0d0f14;-webkit-text-stroke:0.35px #0d0f14;">Dazhboards Pt...</div>
<div class="t" style="left:97.60px;top:165.23px;font-size:17.14px;letter-spacing:0.130px;color:#4b5563;">Sydney, Australia.</div>
<div class="t" style="left:39.10px;top:228.10px;font-size:16.71px;letter-spacing:1.177px;color:#737b88;">MAIN</div>
<div class="t" style="left:88.80px;top:276.17px;font-size:19.57px;letter-spacing:0.299px;color:#394150;-webkit-text-stroke:0.3px #394150;">Home</div>
<div class="t" style="left:88.80px;top:331.33px;font-size:20.43px;letter-spacing:0.113px;color:#ffffff;-webkit-text-stroke:0.55px #ffffff;">Environment</div>
<div class="t" style="left:88.70px;top:385.88px;font-size:20.14px;letter-spacing:-0.557px;color:#687080;">GHG Emmissions</div>
<div class="t" style="left:88.70px;top:436.10px;font-size:20.0px;letter-spacing:-0.414px;color:#687080;">Energy</div>
<div class="t" style="left:89.70px;top:485.80px;font-size:20.0px;letter-spacing:-0.379px;color:#687080;">Waste</div>
<div class="t" style="left:89.70px;top:535.60px;font-size:20.0px;letter-spacing:-0.284px;color:#687080;">Water</div>
<div class="t" style="left:88.70px;top:585.15px;font-size:20.29px;letter-spacing:0.104px;color:#4f9e77;-webkit-text-stroke:0.15px #4f9e77;">Biodiversity</div>
<div class="t" style="left:88.70px;top:635.05px;font-size:19.71px;letter-spacing:0.117px;color:#687080;">Procurement</div>
<div class="t" style="left:88.90px;top:690.62px;font-size:19.86px;letter-spacing:0.451px;color:#394150;-webkit-text-stroke:0.3px #394150;">Community</div>
<div class="t" style="left:88.90px;top:746.28px;font-size:20.14px;letter-spacing:-0.066px;color:#394150;-webkit-text-stroke:0.3px #394150;">Goal Manager</div>
<div class="t" style="left:39.70px;top:817.93px;font-size:16.43px;letter-spacing:-0.054px;color:#737b88;">OTHER</div>
<div class="t" style="left:89.70px;top:866.30px;font-size:20.0px;letter-spacing:0.319px;color:#394150;-webkit-text-stroke:0.3px #394150;">Settings</div>
<div class="t" style="left:88.70px;top:924.88px;font-size:19.43px;letter-spacing:0.753px;color:#394150;-webkit-text-stroke:0.3px #394150;">Help</div>
<div class="t" style="left:350.50px;top:38.70px;font-size:26.0px;letter-spacing:-0.132px;color:#0d0f14;-webkit-text-stroke:0.2px #0d0f14;">Home</div>
<div class="t" style="left:1795.10px;top:42.35px;font-size:19.0px;letter-spacing:0.411px;color:#0d0f14;-webkit-text-stroke:0.3px #0d0f14;">Emon Pixels</div>
<div class="t" style="left:379.40px;top:137.00px;font-size:20.0px;letter-spacing:0.084px;color:#0d0f14;-webkit-text-stroke:0.3px #0d0f14;">All Branches</div>
<div class="t" style="left:543.00px;top:137.00px;font-size:20.0px;letter-spacing:0.300px;color:#4b5563;-webkit-text-stroke:0.25px #4b5563;">Dazhboards Pty. Ltd</div>
<div class="t" style="left:778.00px;top:137.00px;font-size:20.0px;letter-spacing:0.212px;color:#4b5563;-webkit-text-stroke:0.25px #4b5563;">Greymouth, New Zealand</div>
<div class="t" style="left:1060.90px;top:137.00px;font-size:20.0px;letter-spacing:0.342px;color:#4b5563;-webkit-text-stroke:0.25px #4b5563;">Daztlboarcs Greymouth</div>
<div class="t" style="left:1611.30px;top:137.10px;font-size:20.0px;letter-spacing:-0.365px;color:#0d0f14;-webkit-text-stroke:0.3px #0d0f14;">Set Goals</div>
<div class="t" style="left:1818.10px;top:137.10px;font-size:20.0px;letter-spacing:0.164px;color:#ffffff;-webkit-text-stroke:0.3px #ffffff;">View insight</div>
<div class="t" style="left:410.30px;top:225.45px;font-size:20.29px;letter-spacing:-0.379px;color:#7a8290;">Search...</div>
<div class="t" style="left:1126.20px;top:225.52px;font-size:19.86px;letter-spacing:0.121px;color:#4b5563;">lorem</div>
<div class="t" style="left:1389.70px;top:225.88px;font-size:19.43px;letter-spacing:0.268px;color:#0d0f14;-webkit-text-stroke:0.2px #0d0f14;">Last 7 days</div>
<div class="t" style="left:1588.00px;top:225.88px;font-size:19.43px;letter-spacing:0.508px;color:#4b5563;">Jan 24 - Feb 24 2023</div>
<div class="t" style="left:1881.00px;top:225.88px;font-size:19.43px;letter-spacing:-0.035px;color:#ffffff;-webkit-text-stroke:0.35px #ffffff;">Reset</div>
<div class="t" style="left:378.40px;top:334.22px;font-size:22.57px;letter-spacing:0.308px;color:#0d0f14;-webkit-text-stroke:0.3px #0d0f14;">Performance Over Time</div>
<div class="t" style="left:1674.60px;top:335.90px;font-size:20.0px;letter-spacing:0.091px;color:#4b5563;">1 Aug 2023 - 31 Aug 2024</div>
<div class="t" style="left:416.90px;top:432.60px;font-size:20.0px;letter-spacing:0.328px;color:#0d0f14;">Consumption</div>
<div class="t" style="left:594.90px;top:432.60px;font-size:20.0px;letter-spacing:0.035px;color:#0d0f14;">Discharge</div>
<div class="t" style="left:379.20px;top:529.52px;font-size:16.8px;letter-spacing:0.400px;color:#7a8290;">20k</div>
<div class="t" style="left:378.20px;top:590.92px;font-size:16.8px;letter-spacing:0.400px;color:#7a8290;">15k</div>
<div class="t" style="left:378.20px;top:652.42px;font-size:16.8px;letter-spacing:0.400px;color:#7a8290;">10k</div>
<div class="t" style="left:379.20px;top:714.12px;font-size:16.8px;letter-spacing:0.400px;color:#7a8290;">5k</div>
<div class="t" style="left:378.20px;top:776.22px;font-size:16.8px;letter-spacing:0.400px;color:#7a8290;">1k</div>
<div class="t" style="left:379.20px;top:837.22px;font-size:16.8px;letter-spacing:0.400px;color:#7a8290;">0</div>
<div class="t" style="left:466.52px;top:870.00px;font-size:17.3px;letter-spacing:0.100px;color:#4b5563;">Jan</div>
<div class="t" style="left:554.80px;top:870.00px;font-size:17.3px;letter-spacing:0.100px;color:#4b5563;">Feb</div>
<div class="t" style="left:644.11px;top:870.00px;font-size:17.3px;letter-spacing:0.100px;color:#4b5563;">Mar</div>
<div class="t" style="left:735.77px;top:870.00px;font-size:17.3px;letter-spacing:0.100px;color:#4b5563;">Apr</div>
<div class="t" style="left:822.07px;top:870.00px;font-size:17.3px;letter-spacing:0.100px;color:#4b5563;">May</div>
<div class="t" style="left:915.17px;top:870.00px;font-size:17.3px;letter-spacing:0.100px;color:#4b5563;">Jun</div>
<div class="t" style="left:1007.90px;top:870.00px;font-size:17.3px;letter-spacing:0.100px;color:#4b5563;">Jul</div>
<div class="t" style="left:1093.19px;top:870.00px;font-size:17.3px;letter-spacing:0.100px;color:#4b5563;">Aug</div>
<div class="t" style="left:1182.92px;top:870.00px;font-size:17.3px;letter-spacing:0.100px;color:#4b5563;">Sep</div>
<div class="t" style="left:1274.18px;top:870.00px;font-size:17.3px;letter-spacing:0.100px;color:#4b5563;">Oct</div>
<div class="t" style="left:1361.40px;top:870.00px;font-size:17.3px;letter-spacing:0.100px;color:#4b5563;">Nov</div>
<div class="t" style="left:1451.13px;top:870.00px;font-size:17.3px;letter-spacing:0.100px;color:#4b5563;">Dec</div>
<div class="t" style="left:844.20px;top:915.23px;font-size:16.43px;letter-spacing:0.587px;color:#4b5563;">Consumption</div>
<div class="t" style="left:997.30px;top:915.23px;font-size:16.43px;letter-spacing:0.513px;color:#4b5563;">Discharge</div>
<div class="t" style="left:1647.20px;top:638.55px;font-size:16.29px;letter-spacing:-0.349px;color:#7a8290;">TOTAL GHG EMISSIONS (TC02E)</div>
<div class="t" style="left:1646.00px;top:666.53px;font-size:22.43px;letter-spacing:0.530px;color:#0d0f14;">1800</div>
<div class="t" style="left:1717.20px;top:670.32px;font-size:14.57px;letter-spacing:0.648px;color:#2a6a4a;-webkit-text-stroke:0.2px #2a6a4a;">+5%</div>
<div class="t" style="left:1646.20px;top:766.08px;font-size:15.43px;letter-spacing:0.087px;color:#7a8290;">REDUCED (TC02E)</div>
<div class="t" style="left:1647.20px;top:793.55px;font-size:22.29px;letter-spacing:1.308px;color:#0d0f14;">50</div>
<div class="t" style="left:1691.60px;top:797.32px;font-size:14.57px;letter-spacing:1.026px;color:#7c1f30;-webkit-text-stroke:0.2px #7c1f30;">-3%</div>
<div class="t" style="left:417.30px;top:1065.93px;font-size:23.14px;letter-spacing:0.196px;color:#0d0f14;-webkit-text-stroke:0.3px #0d0f14;">Locations</div>
<div class="t" style="left:1657.30px;top:1067.70px;font-size:20.71px;letter-spacing:-0.123px;color:#394150;-webkit-text-stroke:0.2px #394150;">Location</div>
<div class="t" style="left:1869.00px;top:1067.70px;font-size:20.71px;letter-spacing:-0.511px;color:#394150;-webkit-text-stroke:0.2px #394150;">Add</div>
<div style="position:absolute;left:0;top:1548px;width:2000px;height:10px;background:#fff"></div></div></body></html>
